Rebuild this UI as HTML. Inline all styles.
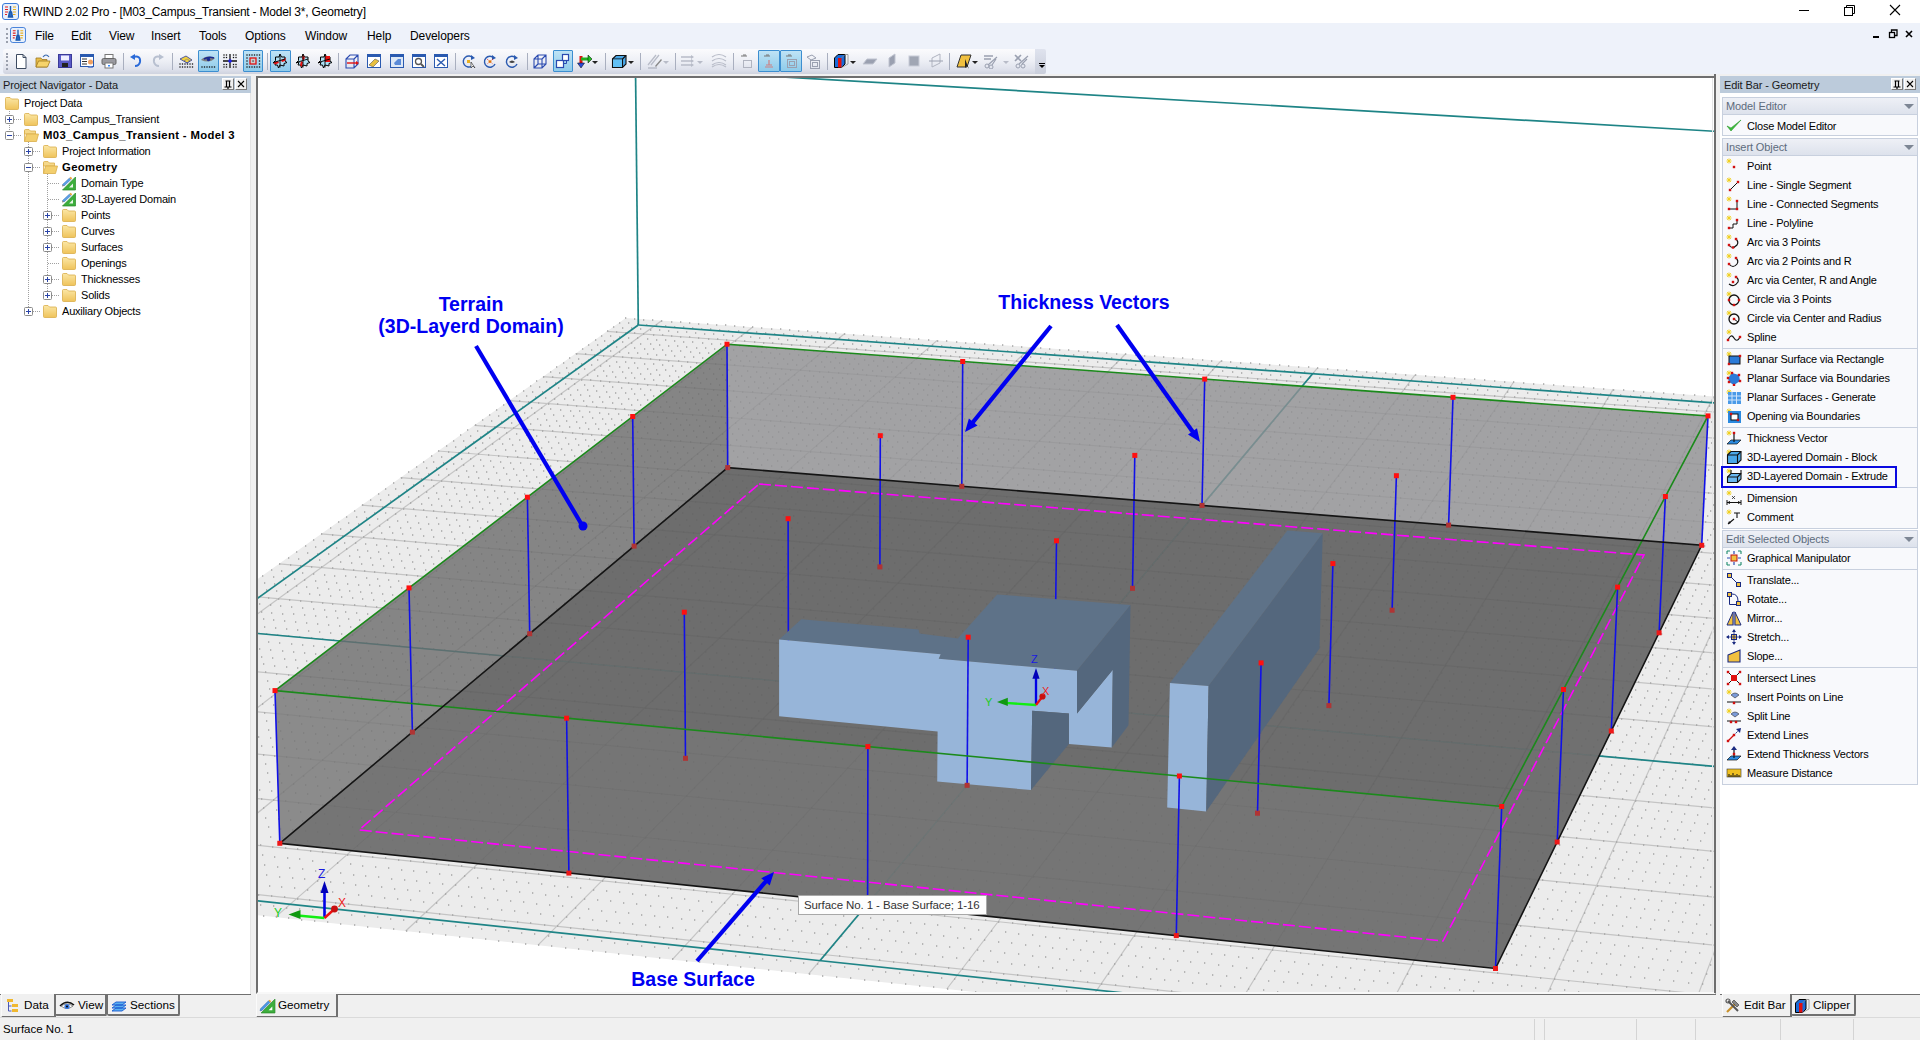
<!DOCTYPE html><html><head><meta charset="utf-8"><style>
*{box-sizing:border-box}
html,body{margin:0;padding:0}
body{width:1920px;height:1040px;overflow:hidden;position:relative;background:#f0f0f0;font-family:"Liberation Sans",sans-serif;color:#000}
.a{position:absolute}
.t{position:absolute;white-space:nowrap;line-height:1}
#title{left:0;top:0;width:1920px;height:23px;background:#fff}
#menubar{left:0;top:23px;width:1920px;height:51px;background:#eef2fa}
#toolbar{left:3px;top:49px;width:1032px;height:25px;border-radius:3px 0 0 3px;
 background:linear-gradient(#fbfbfd 0%,#eef0f6 45%,#dfe2ec 80%,#cfd3df 100%)}
#tbover{left:1035px;top:49px;width:11px;height:25px;background:linear-gradient(#dfe3ee,#c9cedb);border-radius:0 2px 2px 0}
.hdr{height:17px;background:#bccbdb}
.pbtn{position:absolute;top:2px;width:12px;height:12px;background:#f0f0f0;border-right:1px solid #7a7a7a;border-bottom:1px solid #7a7a7a;border-top:1px solid #fff;border-left:1px solid #fff}
.tree{font-size:11.3px}
.eb{font-size:11.3px}
.sec{position:absolute;left:1722px;width:196px;border:1px solid #c8d0de;background:#f8f9fc}
.sech{position:absolute;left:0;top:0;width:194px;height:17px;background:linear-gradient(#eef0f6,#dde2ec);color:#5d6b7c;font-size:11.3px}
.sech span{position:absolute;left:3px;top:3px}
.tri{position:absolute;right:5px;top:6px;width:0;height:0;border-left:5px solid transparent;border-right:5px solid transparent;border-top:5px solid #7d8694}
.sep{position:absolute;left:0;width:194px;height:1px;background:#c8d0de}
.tab{position:absolute;top:995px;height:22px;font-size:12.3px;background:#f0f0f0;border:1px solid #a0a0a0;border-top:none;border-radius:0 0 3px 3px}
</style></head><body>
<div id="title" class="a">
<div class="a" style="left:2px;top:3px"><svg width="17" height="17" viewBox="0 0 17 17"><rect x="0.5" y="0.5" width="16" height="16" rx="2.5" fill="#e8f0fb" stroke="#3a7ad8"/><path d="M3 4H6M3 6.5H6M3 9H6M3 11.5H5" stroke="#e02020" stroke-width="1.2"/><path d="M11 4H14M11 6.5H14M11 9H14M11 11.5H13.5" stroke="#e8b020" stroke-width="1.2"/><path d="M8.5 3V9M6.5 14L7.5 9H9.5L10.5 14Z" stroke="#1a5ab0" stroke-width="1.4" fill="#2a6ac0"/></svg></div>
<div class="t" style="left:23px;top:6px;font-size:12px;letter-spacing:-0.2px">RWIND 2.02 Pro - [M03_Campus_Transient - Model 3*, Geometry]</div>
<svg class="a" style="left:1790px;top:0" width="130" height="22"><line x1="9" y1="10.5" x2="19" y2="10.5" stroke="#000" stroke-width="1"/><rect x="54.5" y="7.5" width="8" height="8" fill="none" stroke="#000"/><path d="M56.5 7.5V5.5H64.5V13.5H62.5" fill="none" stroke="#000"/><path d="M100 5L110 15M110 5L100 15" stroke="#000" stroke-width="1.1"/></svg>
</div>
<div id="menubar" class="a">
<div class="a" style="left:6px;top:5px;width:2px;height:15px;border-left:2px dotted #9aa0ad"></div>
<div class="a" style="left:10px;top:4px"><svg width="16" height="16" viewBox="0 0 17 17"><rect x="0.5" y="0.5" width="16" height="16" rx="2.5" fill="#e8f0fb" stroke="#3a7ad8"/><path d="M3 4H6M3 6.5H6M3 9H6M3 11.5H5" stroke="#e02020" stroke-width="1.2"/><path d="M11 4H14M11 6.5H14M11 9H14M11 11.5H13.5" stroke="#e8b020" stroke-width="1.2"/><path d="M8.5 3V9M6.5 14L7.5 9H9.5L10.5 14Z" stroke="#1a5ab0" stroke-width="1.4" fill="#2a6ac0"/></svg></div>
<div class="t" style="left:35px;top:7px;font-size:12px;letter-spacing:-0.1px">File</div>
<div class="t" style="left:71px;top:7px;font-size:12px;letter-spacing:-0.1px">Edit</div>
<div class="t" style="left:109px;top:7px;font-size:12px;letter-spacing:-0.1px">View</div>
<div class="t" style="left:151px;top:7px;font-size:12px;letter-spacing:-0.1px">Insert</div>
<div class="t" style="left:199px;top:7px;font-size:12px;letter-spacing:-0.1px">Tools</div>
<div class="t" style="left:245px;top:7px;font-size:12px;letter-spacing:-0.1px">Options</div>
<div class="t" style="left:305px;top:7px;font-size:12px;letter-spacing:-0.1px">Window</div>
<div class="t" style="left:367px;top:7px;font-size:12px;letter-spacing:-0.1px">Help</div>
<div class="t" style="left:410px;top:7px;font-size:12px;letter-spacing:-0.1px">Developers</div>
<svg class="a" style="left:1868px;top:0" width="52" height="26"><rect x="5" y="13" width="6" height="2" fill="#000"/><rect x="21.5" y="9.5" width="5" height="5" fill="none" stroke="#000" stroke-width="1.3"/><path d="M23.5 9V7H29V12.5H27" fill="none" stroke="#000" stroke-width="1.3"/><path d="M38 8L44 14M44 8L38 14" stroke="#000" stroke-width="1.6"/></svg>
</div>
<div id="toolbar" class="a"></div><div id="tbover" class="a"></div>
<div class="a" style="left:1039px;top:63px;width:6px;height:1px;background:#000"></div><div class="a" style="left:1039px;top:65px;width:0;height:0;border-left:3px solid transparent;border-right:3px solid transparent;border-top:3px solid #000"></div>
<div class="a" style="left:6px;top:53px;width:2px;height:17px;border-left:2px dotted #9aa0ad"></div>
<div class="a" style="left:198px;top:50px;width:21px;height:22px;background:linear-gradient(#bfe3f5,#8ecbea);border:1px solid #3c8ed0;border-radius:1px"></div><div class="a" style="left:243px;top:50px;width:20px;height:22px;background:linear-gradient(#bfe3f5,#8ecbea);border:1px solid #3c8ed0;border-radius:1px"></div><div class="a" style="left:270px;top:50px;width:21px;height:22px;background:linear-gradient(#bfe3f5,#8ecbea);border:1px solid #3c8ed0;border-radius:1px"></div><div class="a" style="left:553px;top:50px;width:20px;height:22px;background:linear-gradient(#bfe3f5,#8ecbea);border:1px solid #3c8ed0;border-radius:1px"></div><div class="a" style="left:758px;top:50px;width:22px;height:22px;background:linear-gradient(#bfe3f5,#8ecbea);border:1px solid #3c8ed0;border-radius:1px"></div><div class="a" style="left:780px;top:50px;width:22px;height:22px;background:linear-gradient(#bfe3f5,#8ecbea);border:1px solid #3c8ed0;border-radius:1px"></div><div class="a" style="left:123px;top:53px;width:1px;height:17px;background:#a9afbf"></div><div class="a" style="left:172px;top:53px;width:1px;height:17px;background:#a9afbf"></div><div class="a" style="left:267px;top:53px;width:1px;height:17px;background:#a9afbf"></div><div class="a" style="left:338px;top:53px;width:1px;height:17px;background:#a9afbf"></div><div class="a" style="left:455px;top:53px;width:1px;height:17px;background:#a9afbf"></div><div class="a" style="left:527px;top:53px;width:1px;height:17px;background:#a9afbf"></div><div class="a" style="left:605px;top:53px;width:1px;height:17px;background:#a9afbf"></div><div class="a" style="left:640px;top:53px;width:1px;height:17px;background:#a9afbf"></div><div class="a" style="left:675px;top:53px;width:1px;height:17px;background:#a9afbf"></div><div class="a" style="left:733px;top:53px;width:1px;height:17px;background:#a9afbf"></div><div class="a" style="left:827px;top:53px;width:1px;height:17px;background:#a9afbf"></div><div class="a" style="left:949px;top:53px;width:1px;height:17px;background:#a9afbf"></div><svg class="a" style="left:13px;top:53px" width="16" height="16" viewBox="0 0 16 16"><path d="M3.5 1.5H10L13 4.5V15.5H3.5Z" fill="#fff" stroke="#3c4a60"/><path d="M10 1.5V4.5H13" fill="none" stroke="#3c4a60"/></svg><svg class="a" style="left:35px;top:53px" width="16" height="16" viewBox="0 0 16 16"><path d="M1 5H6L7 6.5H12V14H1Z" fill="#e8bd4a" stroke="#a07820" stroke-width="0.8"/><path d="M1 14L3.5 8H15L12.5 14Z" fill="#f7d46a" stroke="#a07820" stroke-width="0.8"/><path d="M8 4Q11 0 14 4" fill="none" stroke="#3a6ab0" stroke-width="1.2"/></svg><svg class="a" style="left:57px;top:53px" width="16" height="16" viewBox="0 0 16 16"><rect x="1.5" y="1.5" width="13" height="13" fill="#5a5ac8" stroke="#3a3a98"/><rect x="4" y="2.5" width="8" height="5" fill="#eef"/><rect x="5" y="10" width="6" height="4" fill="#222"/></svg><svg class="a" style="left:79px;top:53px" width="16" height="16" viewBox="0 0 16 16"><rect x="1.5" y="1.5" width="13" height="12" fill="#fff" stroke="#2a5ab0"/><rect x="1.5" y="1.5" width="13" height="2.5" fill="#2a5ab0"/><path d="M3 6H8M3 8.5H8M3 11H8" stroke="#333"/><circle cx="11.5" cy="9" r="2.5" fill="#f0a060"/><path d="M8.5 15Q11.5 11 14.5 15Z" fill="#6a8ad0"/></svg><svg class="a" style="left:101px;top:53px" width="16" height="16" viewBox="0 0 16 16"><rect x="4" y="1.5" width="8" height="4" fill="#fff" stroke="#777"/><rect x="1" y="5.5" width="14" height="6" rx="1.5" fill="#9a9aa0" stroke="#666"/><rect x="4" y="10" width="8" height="5" fill="#fff" stroke="#777"/><rect x="7" y="12" width="2" height="1.5" fill="#38f"/></svg><svg class="a" style="left:128px;top:53px" width="16" height="16" viewBox="0 0 16 16"><path d="M5 4Q13 2 12 9Q11 13 7 13" fill="none" stroke="#2a6ad8" stroke-width="2"/><path d="M2 4L7 1V7Z" fill="#2a6ad8"/></svg><svg class="a" style="left:150px;top:53px" width="16" height="16" viewBox="0 0 16 16"><path d="M11 4Q3 2 4 9Q5 13 9 13" fill="none" stroke="#b8c0d0" stroke-width="2"/><path d="M14 4L9 1V7Z" fill="#b8c0d0"/></svg><svg class="a" style="left:178px;top:53px" width="16" height="16" viewBox="0 0 16 16"><g fill="#111"><rect x="1.35" y="10.35" width="1.3" height="1.3"/><rect x="1.35" y="13.35" width="1.3" height="1.3"/><rect x="3.85" y="10.35" width="1.3" height="1.3"/><rect x="3.85" y="13.35" width="1.3" height="1.3"/><rect x="6.35" y="10.35" width="1.3" height="1.3"/><rect x="6.35" y="13.35" width="1.3" height="1.3"/><rect x="8.85" y="10.35" width="1.3" height="1.3"/><rect x="8.85" y="13.35" width="1.3" height="1.3"/><rect x="11.35" y="10.35" width="1.3" height="1.3"/><rect x="11.35" y="13.35" width="1.3" height="1.3"/><rect x="13.85" y="10.35" width="1.3" height="1.3"/><rect x="13.85" y="13.35" width="1.3" height="1.3"/></g><path d="M2 6L8 3L14 7L9 10Z" fill="#f0d040" stroke="#2a3aa0" stroke-width=".8"/><path d="M6 8L9 6L12 8L9 10Z" fill="none" stroke="#2a3aa0" stroke-width=".6" stroke-dasharray="1 .6"/></svg><svg class="a" style="left:200px;top:53px" width="16" height="16" viewBox="0 0 16 16"><g fill="#111"><rect x="1.35" y="13.35" width="1.3" height="1.3"/><rect x="3.85" y="13.35" width="1.3" height="1.3"/><rect x="6.35" y="13.35" width="1.3" height="1.3"/><rect x="8.85" y="13.35" width="1.3" height="1.3"/><rect x="11.35" y="13.35" width="1.3" height="1.3"/><rect x="13.85" y="13.35" width="1.3" height="1.3"/></g><path d="M1 7Q6 1 15 5Q10 11 1 7Z" fill="#808080"/><path d="M4 6Q9 3 14 5" fill="none" stroke="#1a2a90" stroke-width="1.6"/><circle cx="8.5" cy="6.5" r="1.8" fill="#1a2a90"/></svg><svg class="a" style="left:222px;top:53px" width="16" height="16" viewBox="0 0 16 16"><g fill="#111"><rect x="1.35" y="1.35" width="1.3" height="1.3"/><rect x="1.35" y="3.85" width="1.3" height="1.3"/><rect x="1.35" y="10.85" width="1.3" height="1.3"/><rect x="1.35" y="13.35" width="1.3" height="1.3"/><rect x="3.85" y="1.35" width="1.3" height="1.3"/><rect x="3.85" y="3.85" width="1.3" height="1.3"/><rect x="3.85" y="10.85" width="1.3" height="1.3"/><rect x="3.85" y="13.35" width="1.3" height="1.3"/><rect x="10.85" y="1.35" width="1.3" height="1.3"/><rect x="10.85" y="3.85" width="1.3" height="1.3"/><rect x="10.85" y="10.85" width="1.3" height="1.3"/><rect x="10.85" y="13.35" width="1.3" height="1.3"/><rect x="13.35" y="1.35" width="1.3" height="1.3"/><rect x="13.35" y="3.85" width="1.3" height="1.3"/><rect x="13.35" y="10.85" width="1.3" height="1.3"/><rect x="13.35" y="13.35" width="1.3" height="1.3"/></g><path d="M8 1V15M1 8H15" stroke="#111" stroke-width="1.3"/><circle cx="8" cy="8" r="1.8" fill="#2222ee"/></svg><svg class="a" style="left:245px;top:53px" width="16" height="16" viewBox="0 0 16 16"><g fill="#111"><rect x="1.35" y="1.35" width="1.3" height="1.3"/><rect x="1.35" y="13.35" width="1.3" height="1.3"/><rect x="3.85" y="1.35" width="1.3" height="1.3"/><rect x="3.85" y="13.35" width="1.3" height="1.3"/><rect x="6.35" y="1.35" width="1.3" height="1.3"/><rect x="6.35" y="13.35" width="1.3" height="1.3"/><rect x="8.85" y="1.35" width="1.3" height="1.3"/><rect x="8.85" y="13.35" width="1.3" height="1.3"/><rect x="11.35" y="1.35" width="1.3" height="1.3"/><rect x="11.35" y="13.35" width="1.3" height="1.3"/><rect x="13.85" y="1.35" width="1.3" height="1.3"/><rect x="13.85" y="13.35" width="1.3" height="1.3"/></g><g fill="#111"><rect x="1.35" y="4.35" width="1.3" height="1.3"/><rect x="1.35" y="7.35" width="1.3" height="1.3"/><rect x="1.35" y="10.35" width="1.3" height="1.3"/><rect x="13.85" y="4.35" width="1.3" height="1.3"/><rect x="13.85" y="7.35" width="1.3" height="1.3"/><rect x="13.85" y="10.35" width="1.3" height="1.3"/></g><rect x="5" y="5" width="6" height="6" fill="#ccc" stroke="#e01010" stroke-width="1.3"/><rect x="7.4" y="7.4" width="1.3" height="1.3" fill="#333"/></svg><svg class="a" style="left:272px;top:53px" width="16" height="16" viewBox="0 0 16 16"><path d="M8 1L9.5 4H13V8L15 9.5L12 10.5V13L8 12L6.5 15L5.5 12H3L4 9L1 10L3.5 7.5L3.5 4H7Z" fill="#aee0f5" stroke="#000" stroke-width="1"/><path d="M1.5 10L6 8L7 10L3 11.5Z" fill="#e81010"/><path d="M9 7L14 5L13 8L10 9Z" fill="#e81010"/><path d="M8 1.5V14.5M3 9L13 6" stroke="#000" stroke-width=".9"/></svg><svg class="a" style="left:295px;top:53px" width="16" height="16" viewBox="0 0 16 16"><path d="M8 1L9.5 4H13V8L15 9.5L12 10.5V13L8 12L6.5 15L5.5 12H3L4 9L1 10L3.5 7.5L3.5 4H7Z" fill="#aee0f5" stroke="#000" stroke-width="1"/><path d="M8 2L10 5L8 8L7 5Z" fill="#e81010"/><path d="M6 8L8 9L7 14L5 12Z" fill="#e81010"/><path d="M8 1.5V14.5M3 9L13 6" stroke="#000" stroke-width=".9"/></svg><svg class="a" style="left:317px;top:53px" width="16" height="16" viewBox="0 0 16 16"><path d="M8 1L9.5 4H13V8L15 9.5L12 10.5V13L8 12L6.5 15L5.5 12H3L4 9L1 10L3.5 7.5L3.5 4H7Z" fill="#aee0f5" stroke="#000" stroke-width="1"/><rect x="8" y="3" width="5" height="6" fill="#e81010"/><path d="M8 1.5V14.5M3 9L13 6" stroke="#000" stroke-width=".9"/></svg><svg class="a" style="left:344px;top:53px" width="16" height="16" viewBox="0 0 16 16"><path d="M2 6L6 2H14V11L10 15H2Z M2 6H10V15 M10 6L14 2" fill="none" stroke="#2a4ab0" stroke-width="1.1"/><path d="M3 10H12" stroke="#e01010" stroke-width="1.4"/><path d="M12 8L15 10L12 12Z" fill="#e01010"/></svg><svg class="a" style="left:366px;top:53px" width="16" height="16" viewBox="0 0 16 16"><rect x="1.5" y="1.5" width="13" height="13" fill="#fff" stroke="#2a5ab0"/><rect x="1.5" y="1.5" width="13" height="2.5" fill="#2a5ab0"/><path d="M3 12L9 6L13 8L7 14Z" fill="#e8c040" stroke="#555" stroke-width=".6"/></svg><svg class="a" style="left:389px;top:53px" width="16" height="16" viewBox="0 0 16 16"><rect x="1.5" y="1.5" width="13" height="13" fill="#dde8f6" stroke="#2a5ab0"/><rect x="1.5" y="1.5" width="13" height="2.5" fill="#2a5ab0"/><path d="M5 10L9 6H12V12H6Z" fill="#5a8ad8"/></svg><svg class="a" style="left:411px;top:53px" width="16" height="16" viewBox="0 0 16 16"><rect x="1.5" y="1.5" width="13" height="13" fill="#fff" stroke="#2a5ab0"/><rect x="1.5" y="1.5" width="13" height="2.5" fill="#2a5ab0"/><circle cx="7.5" cy="8.5" r="3" fill="none" stroke="#555" stroke-width="1.3"/><path d="M10 11L13 14" stroke="#555" stroke-width="1.8"/></svg><svg class="a" style="left:433px;top:53px" width="16" height="16" viewBox="0 0 16 16"><rect x="1.5" y="1.5" width="13" height="13" fill="#fff" stroke="#2a5ab0"/><rect x="1.5" y="1.5" width="13" height="2.5" fill="#2a5ab0"/><path d="M4 6L12 13M12 6L4 13" stroke="#2a5ab0" stroke-width="1.4"/></svg><svg class="a" style="left:461px;top:53px" width="16" height="16" viewBox="0 0 16 16"><path d="M12 5A5.5 5.5 0 1 0 11 13" fill="none" stroke="#2a5ab0" stroke-width="1.4"/><path d="M10 2L14 5L10 7Z" fill="#2a5ab0"/><rect x="6" y="7" width="3" height="3" fill="#e8b020"/><path d="M10 9L10 15L12 13L14 15Z" fill="#fff" stroke="#333" stroke-width=".7"/></svg><svg class="a" style="left:482px;top:53px" width="16" height="16" viewBox="0 0 16 16"><path d="M12 5A5.5 5.5 0 1 0 13 11" fill="none" stroke="#2a5ab0" stroke-width="1.4"/><path d="M10 2L14 5L10 7Z" fill="#2a5ab0"/><circle cx="8" cy="8.5" r="1.5" fill="#e8b020"/><path d="M5 6L11 11M11 6L5 11" stroke="#e01010" stroke-width=".8" stroke-dasharray="1 1"/></svg><svg class="a" style="left:504px;top:53px" width="16" height="16" viewBox="0 0 16 16"><path d="M12 5A5.5 5.5 0 1 0 13 11" fill="none" stroke="#2a5ab0" stroke-width="1.4"/><path d="M10 2L14 5L10 7Z" fill="#2a5ab0"/><path d="M5 9Q8 6 11 9Q8 11 5 9Z" fill="#444"/></svg><svg class="a" style="left:532px;top:53px" width="16" height="16" viewBox="0 0 16 16"><path d="M2 6L6 2H14V11L10 15H2Z M2 6H10V15 M10 6L14 2 M6 2V11H14 M6 11L2 15" fill="none" stroke="#2a4ab0" stroke-width="1.1"/></svg><svg class="a" style="left:554px;top:53px" width="16" height="16" viewBox="0 0 16 16"><rect x="2.5" y="7.5" width="7" height="7" fill="#fff" stroke="#2a4ab0" stroke-width="1.2"/><rect x="8.5" y="1.5" width="6" height="6" fill="#fff" stroke="#2a4ab0" stroke-width="1.2"/><path d="M9.5 7.5V10.5H12.5V7.5" fill="none" stroke="#2a4ab0"/></svg><svg class="a" style="left:577px;top:53px" width="16" height="16" viewBox="0 0 16 16"><path d="M4 3V11" stroke="#e01010" stroke-width="3"/><path d="M4 6H11" stroke="#20b020" stroke-width="3"/><path d="M11 2L15 6L11 10Z" fill="#20c020" stroke="#000" stroke-width=".5"/><path d="M0.5 10H7.5L4 15Z" fill="#2a4ad8" stroke="#000" stroke-width=".5"/></svg><svg class="a" style="left:611px;top:53px" width="16" height="16" viewBox="0 0 16 16"><path d="M1.5 6L5 2.5H15V11L11.5 14.5H1.5Z" fill="#4aa8e8" stroke="#111" stroke-width="1.1"/><path d="M1.5 6H11.5V14.5M11.5 6L15 2.5" fill="none" stroke="#111" stroke-width="1.1"/><path d="M2 6.5H11V14H2Z" fill="#62c0f4"/></svg><svg class="a" style="left:647px;top:53px" width="16" height="16" viewBox="0 0 16 16"><path d="M1 12L9 2M4 12L12 2M1 15H10" stroke="#b8bcc8" stroke-width="1.3"/><path d="M8 13L14 6L15 7L9 14Z" fill="#888"/></svg><svg class="a" style="left:680px;top:53px" width="16" height="16" viewBox="0 0 16 16"><path d="M1 4H12M1 8H12M1 12H12" stroke="#b8bcc8" stroke-width="1.3"/><path d="M11 2L14 4L11 6ZM11 6L14 8L11 10ZM11 10L14 12L11 14Z" fill="#b8bcc8"/></svg><svg class="a" style="left:711px;top:53px" width="16" height="16" viewBox="0 0 16 16"><path d="M1 4Q8 -1 15 4M1 8Q8 3 15 8M1 12Q8 7 15 12M1 14Q8 9 15 14" fill="none" stroke="#b8bcc8" stroke-width="1.2"/></svg><svg class="a" style="left:738px;top:53px" width="16" height="16" viewBox="0 0 16 16"><path d="M3 3H9M5 2H8" stroke="#777" stroke-width="1"/><rect x="5.5" y="7.5" width="8" height="7" fill="none" stroke="#b0b4c0"/></svg><svg class="a" style="left:761px;top:53px" width="16" height="16" viewBox="0 0 16 16"><path d="M3 3H9M5 2H8" stroke="#777" stroke-width="1"/><path d="M8 7V12M5 12H11M4 14H12" stroke="#d08080" stroke-width="1.2"/></svg><svg class="a" style="left:783px;top:53px" width="16" height="16" viewBox="0 0 16 16"><path d="M3 3H9M5 2H8" stroke="#777" stroke-width="1"/><rect x="4.5" y="6.5" width="9" height="8" fill="none" stroke="#9aa0b0"/><rect x="6.5" y="8.5" width="5" height="4" fill="none" stroke="#9aa0b0"/></svg><svg class="a" style="left:805px;top:53px" width="16" height="16" viewBox="0 0 16 16"><path d="M2 4L7 2L11 5L6 7Z" fill="none" stroke="#9aa0b0"/><rect x="5.5" y="7.5" width="9" height="8" fill="none" stroke="#9aa0b0"/><rect x="7.5" y="9.5" width="5" height="4" fill="none" stroke="#9aa0b0"/></svg><svg class="a" style="left:833px;top:53px" width="16" height="16" viewBox="0 0 16 16"><path d="M1.5 5L5 1.5H12V11L8.5 14.5H1.5Z" fill="#1a6ad8" stroke="#000"/><path d="M5 5H8.5V14.5H5Z" fill="#e01010"/><path d="M8.5 5L12 1.5H15V11L8.5 14.5" fill="none" stroke="#888" stroke-width=".8"/></svg><svg class="a" style="left:862px;top:53px" width="16" height="16" viewBox="0 0 16 16"><path d="M1 11L5 6H15L11 11Z" fill="#9aa0b0" stroke="#c0c4d0"/></svg><svg class="a" style="left:884px;top:53px" width="16" height="16" viewBox="0 0 16 16"><path d="M5 14V5L11 1V10Z" fill="#9aa0b0" stroke="#c0c4d0"/></svg><svg class="a" style="left:906px;top:53px" width="16" height="16" viewBox="0 0 16 16"><rect x="3" y="3" width="10" height="10" fill="#a0a6b4" stroke="#c8ccd8"/></svg><svg class="a" style="left:928px;top:53px" width="16" height="16" viewBox="0 0 16 16"><path d="M4 14V5L12 1V10Z" fill="none" stroke="#b0b4c0"/><path d="M1 8H15" stroke="#9aa0b0"/></svg><svg class="a" style="left:956px;top:53px" width="16" height="16" viewBox="0 0 16 16"><path d="M1 14L5 2H15L11 14Z" fill="#f0c040" stroke="#333" stroke-width="1"/><path d="M9 6V15L11 13L13 16Z" fill="#222"/></svg><svg class="a" style="left:983px;top:53px" width="16" height="16" viewBox="0 0 16 16"><path d="M1 3H10M1 6H8" stroke="#9aa0b0" stroke-width="1.3"/><circle cx="4" cy="13" r="2" fill="none" stroke="#9aa0b0"/><circle cx="8" cy="14" r="2" fill="none" stroke="#9aa0b0"/><path d="M5 12L14 4M9 12L13 6" stroke="#9aa0b0" stroke-width="1.2"/></svg><svg class="a" style="left:1013px;top:53px" width="16" height="16" viewBox="0 0 16 16"><path d="M2 2L8 8M8 2L2 8" stroke="#9aa0b0" stroke-width="1.6"/><circle cx="5" cy="13" r="2" fill="none" stroke="#9aa0b0"/><circle cx="10" cy="13" r="2" fill="none" stroke="#9aa0b0"/><path d="M6 11L15 3M9 11L14 6" stroke="#9aa0b0" stroke-width="1.2"/></svg><div class="a" style="left:592px;top:61px;width:0;height:0;border-left:3px solid transparent;border-right:3px solid transparent;border-top:3px solid #222"></div><div class="a" style="left:628px;top:61px;width:0;height:0;border-left:3px solid transparent;border-right:3px solid transparent;border-top:3px solid #222"></div><div class="a" style="left:850px;top:61px;width:0;height:0;border-left:3px solid transparent;border-right:3px solid transparent;border-top:3px solid #222"></div><div class="a" style="left:972px;top:61px;width:0;height:0;border-left:3px solid transparent;border-right:3px solid transparent;border-top:3px solid #222"></div><div class="a" style="left:663px;top:61px;width:0;height:0;border-left:3px solid transparent;border-right:3px solid transparent;border-top:3px solid #b8bcc8"></div><div class="a" style="left:697px;top:61px;width:0;height:0;border-left:3px solid transparent;border-right:3px solid transparent;border-top:3px solid #b8bcc8"></div><div class="a" style="left:1003px;top:61px;width:0;height:0;border-left:3px solid transparent;border-right:3px solid transparent;border-top:3px solid #b8bcc8"></div>
<div class="a" style="left:0;top:76px;width:251px;height:918px;background:#fff;border-right:1px solid #e4e4e4"></div>
<div class="a hdr" style="left:0;top:76px;width:251px"></div>
<div class="t" style="left:3px;top:80px;font-size:11px;letter-spacing:-0.1px;color:#1a1a1a">Project Navigator - Data</div>
<div class="pbtn" style="left:222px;top:78px"></div><div class="pbtn" style="left:235px;top:78px"></div>
<svg class="a" style="left:222px;top:78px" width="26" height="13"><path d="M3.5 3H8.5M4.5 3V8.5M7.5 3V8.5M2.5 9H9.5M6 9V11" stroke="#000" stroke-width="1.2" fill="none"/><path d="M16 3L22 9M22 3L16 9" stroke="#000" stroke-width="1.1"/></svg>
<svg class="a" style="left:0;top:94px" width="251" height="230"><line x1="9.5" y1="17" x2="9.5" y2="41" stroke="#a0a0a0" stroke-width="1" stroke-dasharray="1 1"/><line x1="28.5" y1="48" x2="28.5" y2="217" stroke="#a0a0a0" stroke-width="1" stroke-dasharray="1 1"/><line x1="47.5" y1="80" x2="47.5" y2="201" stroke="#a0a0a0" stroke-width="1" stroke-dasharray="1 1"/><line x1="10.0" y1="25.5" x2="22.0" y2="25.5" stroke="#a0a0a0" stroke-width="1" stroke-dasharray="1 1"/><rect x="5.5" y="21.5" width="8" height="8" rx="1" fill="#fff" stroke="#8a8a8a"/><line x1="7" y1="25.5" x2="12" y2="25.5" stroke="#2a44a8"/><line x1="9.5" y1="23" x2="9.5" y2="28" stroke="#2a44a8"/><line x1="10.0" y1="41.5" x2="22.0" y2="41.5" stroke="#a0a0a0" stroke-width="1" stroke-dasharray="1 1"/><rect x="5.5" y="37.5" width="8" height="8" rx="1" fill="#fff" stroke="#8a8a8a"/><line x1="7" y1="41.5" x2="12" y2="41.5" stroke="#2a44a8"/><line x1="29.0" y1="57.5" x2="41.0" y2="57.5" stroke="#a0a0a0" stroke-width="1" stroke-dasharray="1 1"/><rect x="24.5" y="53.5" width="8" height="8" rx="1" fill="#fff" stroke="#8a8a8a"/><line x1="26" y1="57.5" x2="31" y2="57.5" stroke="#2a44a8"/><line x1="28.5" y1="55" x2="28.5" y2="60" stroke="#2a44a8"/><line x1="29.0" y1="73.5" x2="41.0" y2="73.5" stroke="#a0a0a0" stroke-width="1" stroke-dasharray="1 1"/><rect x="24.5" y="69.5" width="8" height="8" rx="1" fill="#fff" stroke="#8a8a8a"/><line x1="26" y1="73.5" x2="31" y2="73.5" stroke="#2a44a8"/><line x1="48.0" y1="89.5" x2="60.0" y2="89.5" stroke="#a0a0a0" stroke-width="1" stroke-dasharray="1 1"/><line x1="48.0" y1="105.5" x2="60.0" y2="105.5" stroke="#a0a0a0" stroke-width="1" stroke-dasharray="1 1"/><line x1="48.0" y1="121.5" x2="60.0" y2="121.5" stroke="#a0a0a0" stroke-width="1" stroke-dasharray="1 1"/><rect x="43.5" y="117.5" width="8" height="8" rx="1" fill="#fff" stroke="#8a8a8a"/><line x1="45" y1="121.5" x2="50" y2="121.5" stroke="#2a44a8"/><line x1="47.5" y1="119" x2="47.5" y2="124" stroke="#2a44a8"/><line x1="48.0" y1="137.5" x2="60.0" y2="137.5" stroke="#a0a0a0" stroke-width="1" stroke-dasharray="1 1"/><rect x="43.5" y="133.5" width="8" height="8" rx="1" fill="#fff" stroke="#8a8a8a"/><line x1="45" y1="137.5" x2="50" y2="137.5" stroke="#2a44a8"/><line x1="47.5" y1="135" x2="47.5" y2="140" stroke="#2a44a8"/><line x1="48.0" y1="153.5" x2="60.0" y2="153.5" stroke="#a0a0a0" stroke-width="1" stroke-dasharray="1 1"/><rect x="43.5" y="149.5" width="8" height="8" rx="1" fill="#fff" stroke="#8a8a8a"/><line x1="45" y1="153.5" x2="50" y2="153.5" stroke="#2a44a8"/><line x1="47.5" y1="151" x2="47.5" y2="156" stroke="#2a44a8"/><line x1="48.0" y1="169.5" x2="60.0" y2="169.5" stroke="#a0a0a0" stroke-width="1" stroke-dasharray="1 1"/><line x1="48.0" y1="185.5" x2="60.0" y2="185.5" stroke="#a0a0a0" stroke-width="1" stroke-dasharray="1 1"/><rect x="43.5" y="181.5" width="8" height="8" rx="1" fill="#fff" stroke="#8a8a8a"/><line x1="45" y1="185.5" x2="50" y2="185.5" stroke="#2a44a8"/><line x1="47.5" y1="183" x2="47.5" y2="188" stroke="#2a44a8"/><line x1="48.0" y1="201.5" x2="60.0" y2="201.5" stroke="#a0a0a0" stroke-width="1" stroke-dasharray="1 1"/><rect x="43.5" y="197.5" width="8" height="8" rx="1" fill="#fff" stroke="#8a8a8a"/><line x1="45" y1="201.5" x2="50" y2="201.5" stroke="#2a44a8"/><line x1="47.5" y1="199" x2="47.5" y2="204" stroke="#2a44a8"/><line x1="29.0" y1="217.5" x2="41.0" y2="217.5" stroke="#a0a0a0" stroke-width="1" stroke-dasharray="1 1"/><rect x="24.5" y="213.5" width="8" height="8" rx="1" fill="#fff" stroke="#8a8a8a"/><line x1="26" y1="217.5" x2="31" y2="217.5" stroke="#2a44a8"/><line x1="28.5" y1="215" x2="28.5" y2="220" stroke="#2a44a8"/></svg>
<div class="a" style="left:4px;top:95px"><svg width="16" height="16" viewBox="0 0 16 16"><defs><linearGradient id="fg" x1="0" y1="0" x2="0" y2="1"><stop offset="0" stop-color="#fbe7a6"/><stop offset="1" stop-color="#efc35a"/></linearGradient></defs><path d="M1.5 3.5Q1.5 2.5 2.5 2.5H6L7.5 4H13.5Q14.5 4 14.5 5V13.5Q14.5 14.5 13.5 14.5H2.5Q1.5 14.5 1.5 13.5Z" fill="url(#fg)" stroke="#d9ad4a" stroke-width="0.8"/></svg></div>
<div class="t" style="left:24px;top:98px;font-size:11px;letter-spacing:-0.2px;">Project Data</div>
<div class="a" style="left:23px;top:111px"><svg width="16" height="16" viewBox="0 0 16 16"><defs><linearGradient id="fg" x1="0" y1="0" x2="0" y2="1"><stop offset="0" stop-color="#fbe7a6"/><stop offset="1" stop-color="#efc35a"/></linearGradient></defs><path d="M1.5 3.5Q1.5 2.5 2.5 2.5H6L7.5 4H13.5Q14.5 4 14.5 5V13.5Q14.5 14.5 13.5 14.5H2.5Q1.5 14.5 1.5 13.5Z" fill="url(#fg)" stroke="#d9ad4a" stroke-width="0.8"/></svg></div>
<div class="t" style="left:43px;top:114px;font-size:11px;letter-spacing:-0.2px;">M03_Campus_Transient</div>
<div class="a" style="left:23px;top:127px"><svg width="16" height="16" viewBox="0 0 16 16"><path d="M1.5 3.5Q1.5 2.5 2.5 2.5H6L7.5 4H12.5V7H1.5Z" fill="#f5d88a" stroke="#d9ad4a" stroke-width="0.8"/><path d="M1.5 14.5L3.5 7H15.5L13.5 14.5Z" fill="#f3cf6e" stroke="#d9ad4a" stroke-width="0.8"/><path d="M1.5 3.5V14.5" stroke="#d9ad4a" stroke-width="0.8"/></svg></div>
<div class="t" style="left:43px;top:130px;font-size:11.3px;letter-spacing:0.35px;font-weight:bold">M03_Campus_Transient - Model 3</div>
<div class="a" style="left:42px;top:143px"><svg width="16" height="16" viewBox="0 0 16 16"><defs><linearGradient id="fg" x1="0" y1="0" x2="0" y2="1"><stop offset="0" stop-color="#fbe7a6"/><stop offset="1" stop-color="#efc35a"/></linearGradient></defs><path d="M1.5 3.5Q1.5 2.5 2.5 2.5H6L7.5 4H13.5Q14.5 4 14.5 5V13.5Q14.5 14.5 13.5 14.5H2.5Q1.5 14.5 1.5 13.5Z" fill="url(#fg)" stroke="#d9ad4a" stroke-width="0.8"/></svg></div>
<div class="t" style="left:62px;top:146px;font-size:11px;letter-spacing:-0.2px;">Project Information</div>
<div class="a" style="left:42px;top:159px"><svg width="16" height="16" viewBox="0 0 16 16"><path d="M1.5 3.5Q1.5 2.5 2.5 2.5H6L7.5 4H12.5V7H1.5Z" fill="#f5d88a" stroke="#d9ad4a" stroke-width="0.8"/><path d="M1.5 14.5L3.5 7H15.5L13.5 14.5Z" fill="#f3cf6e" stroke="#d9ad4a" stroke-width="0.8"/><path d="M1.5 3.5V14.5" stroke="#d9ad4a" stroke-width="0.8"/></svg></div>
<div class="t" style="left:62px;top:162px;font-size:11.3px;letter-spacing:0.35px;font-weight:bold">Geometry</div>
<div class="a" style="left:61px;top:175px"><svg width="16" height="16" viewBox="0 0 16 16"><path d="M1.5 15L14.5 2V15Z" fill="#3cae3c" stroke="#2a8a2a" stroke-width="0.7"/><path d="M8 12.5L12 8.5V12.5Z" fill="#e8f5e8"/><path d="M1.5 9.5L8.5 3L10 4.5L3 11Z" fill="#5aa0e8" stroke="#3a70b0" stroke-width="0.5"/><path d="M8.5 3L9.7 1.8L11.2 3.3L10 4.5Z" fill="#f0a030"/><path d="M1.5 9.5L3 11L1 11.5Z" fill="#777"/></svg></div>
<div class="t" style="left:81px;top:178px;font-size:11px;letter-spacing:-0.2px;">Domain Type</div>
<div class="a" style="left:61px;top:191px"><svg width="16" height="16" viewBox="0 0 16 16"><path d="M1.5 15L14.5 2V15Z" fill="#3cae3c" stroke="#2a8a2a" stroke-width="0.7"/><path d="M8 12.5L12 8.5V12.5Z" fill="#e8f5e8"/><path d="M1.5 9.5L8.5 3L10 4.5L3 11Z" fill="#5aa0e8" stroke="#3a70b0" stroke-width="0.5"/><path d="M8.5 3L9.7 1.8L11.2 3.3L10 4.5Z" fill="#f0a030"/><path d="M1.5 9.5L3 11L1 11.5Z" fill="#777"/></svg></div>
<div class="t" style="left:81px;top:194px;font-size:11px;letter-spacing:-0.2px;">3D-Layered Domain</div>
<div class="a" style="left:61px;top:207px"><svg width="16" height="16" viewBox="0 0 16 16"><defs><linearGradient id="fg" x1="0" y1="0" x2="0" y2="1"><stop offset="0" stop-color="#fbe7a6"/><stop offset="1" stop-color="#efc35a"/></linearGradient></defs><path d="M1.5 3.5Q1.5 2.5 2.5 2.5H6L7.5 4H13.5Q14.5 4 14.5 5V13.5Q14.5 14.5 13.5 14.5H2.5Q1.5 14.5 1.5 13.5Z" fill="url(#fg)" stroke="#d9ad4a" stroke-width="0.8"/></svg></div>
<div class="t" style="left:81px;top:210px;font-size:11px;letter-spacing:-0.2px;">Points</div>
<div class="a" style="left:61px;top:223px"><svg width="16" height="16" viewBox="0 0 16 16"><defs><linearGradient id="fg" x1="0" y1="0" x2="0" y2="1"><stop offset="0" stop-color="#fbe7a6"/><stop offset="1" stop-color="#efc35a"/></linearGradient></defs><path d="M1.5 3.5Q1.5 2.5 2.5 2.5H6L7.5 4H13.5Q14.5 4 14.5 5V13.5Q14.5 14.5 13.5 14.5H2.5Q1.5 14.5 1.5 13.5Z" fill="url(#fg)" stroke="#d9ad4a" stroke-width="0.8"/></svg></div>
<div class="t" style="left:81px;top:226px;font-size:11px;letter-spacing:-0.2px;">Curves</div>
<div class="a" style="left:61px;top:239px"><svg width="16" height="16" viewBox="0 0 16 16"><defs><linearGradient id="fg" x1="0" y1="0" x2="0" y2="1"><stop offset="0" stop-color="#fbe7a6"/><stop offset="1" stop-color="#efc35a"/></linearGradient></defs><path d="M1.5 3.5Q1.5 2.5 2.5 2.5H6L7.5 4H13.5Q14.5 4 14.5 5V13.5Q14.5 14.5 13.5 14.5H2.5Q1.5 14.5 1.5 13.5Z" fill="url(#fg)" stroke="#d9ad4a" stroke-width="0.8"/></svg></div>
<div class="t" style="left:81px;top:242px;font-size:11px;letter-spacing:-0.2px;">Surfaces</div>
<div class="a" style="left:61px;top:255px"><svg width="16" height="16" viewBox="0 0 16 16"><defs><linearGradient id="fg" x1="0" y1="0" x2="0" y2="1"><stop offset="0" stop-color="#fbe7a6"/><stop offset="1" stop-color="#efc35a"/></linearGradient></defs><path d="M1.5 3.5Q1.5 2.5 2.5 2.5H6L7.5 4H13.5Q14.5 4 14.5 5V13.5Q14.5 14.5 13.5 14.5H2.5Q1.5 14.5 1.5 13.5Z" fill="url(#fg)" stroke="#d9ad4a" stroke-width="0.8"/></svg></div>
<div class="t" style="left:81px;top:258px;font-size:11px;letter-spacing:-0.2px;">Openings</div>
<div class="a" style="left:61px;top:271px"><svg width="16" height="16" viewBox="0 0 16 16"><defs><linearGradient id="fg" x1="0" y1="0" x2="0" y2="1"><stop offset="0" stop-color="#fbe7a6"/><stop offset="1" stop-color="#efc35a"/></linearGradient></defs><path d="M1.5 3.5Q1.5 2.5 2.5 2.5H6L7.5 4H13.5Q14.5 4 14.5 5V13.5Q14.5 14.5 13.5 14.5H2.5Q1.5 14.5 1.5 13.5Z" fill="url(#fg)" stroke="#d9ad4a" stroke-width="0.8"/></svg></div>
<div class="t" style="left:81px;top:274px;font-size:11px;letter-spacing:-0.2px;">Thicknesses</div>
<div class="a" style="left:61px;top:287px"><svg width="16" height="16" viewBox="0 0 16 16"><defs><linearGradient id="fg" x1="0" y1="0" x2="0" y2="1"><stop offset="0" stop-color="#fbe7a6"/><stop offset="1" stop-color="#efc35a"/></linearGradient></defs><path d="M1.5 3.5Q1.5 2.5 2.5 2.5H6L7.5 4H13.5Q14.5 4 14.5 5V13.5Q14.5 14.5 13.5 14.5H2.5Q1.5 14.5 1.5 13.5Z" fill="url(#fg)" stroke="#d9ad4a" stroke-width="0.8"/></svg></div>
<div class="t" style="left:81px;top:290px;font-size:11px;letter-spacing:-0.2px;">Solids</div>
<div class="a" style="left:42px;top:303px"><svg width="16" height="16" viewBox="0 0 16 16"><defs><linearGradient id="fg" x1="0" y1="0" x2="0" y2="1"><stop offset="0" stop-color="#fbe7a6"/><stop offset="1" stop-color="#efc35a"/></linearGradient></defs><path d="M1.5 3.5Q1.5 2.5 2.5 2.5H6L7.5 4H13.5Q14.5 4 14.5 5V13.5Q14.5 14.5 13.5 14.5H2.5Q1.5 14.5 1.5 13.5Z" fill="url(#fg)" stroke="#d9ad4a" stroke-width="0.8"/></svg></div>
<div class="t" style="left:62px;top:306px;font-size:11px;letter-spacing:-0.2px;">Auxiliary Objects</div>
<div class="a" style="left:256px;top:76px;width:1460px;height:918px;border-top:2px solid #6e6e6e;border-left:2px solid #6e6e6e;border-right:2px solid #6e6e6e;border-bottom:2px solid #f8f8f8;background:#fff"></div>
<svg id="vp" width="1920" height="1040" viewBox="0 0 1920 1040" style="position:absolute;left:0;top:0">
<defs><clipPath id="vc"><rect x="258" y="78" width="1456" height="914"/></clipPath></defs>
<g clip-path="url(#vc)">
<rect x="258" y="78" width="1456" height="914" fill="#fff"/>
<polygon points="-154.2,871 625.7,318 2750.8,471.1 2908.5,1199.3" fill="#ececec"/>
<g stroke="#c4c4c4" stroke-width="1.2"><line x1="-104.5" y1="876.4" x2="661.9" y2="320.6" /><line x1="20.3" y1="889.7" x2="752.8" y2="327.1" /><line x1="146.9" y1="903.3" x2="844.5" y2="333.8" /><line x1="275.4" y1="917.1" x2="937.2" y2="340.4" /><line x1="405.7" y1="931" x2="1030.9" y2="347.2" /><line x1="538" y1="945.2" x2="1125.5" y2="354" /><line x1="672.3" y1="959.6" x2="1221" y2="360.9" /><line x1="808.5" y1="974.2" x2="1317.6" y2="367.8" /><line x1="946.8" y1="989" x2="1415.1" y2="374.9" /><line x1="1087.3" y1="1004.1" x2="1513.7" y2="382" /><line x1="1229.8" y1="1019.4" x2="1613.3" y2="389.1" /><line x1="1374.6" y1="1034.9" x2="1713.9" y2="396.4" /><line x1="1521.6" y1="1050.6" x2="1815.6" y2="403.7" /><line x1="1671" y1="1066.6" x2="1918.4" y2="411.1" /><line x1="1822.7" y1="1082.9" x2="2022.3" y2="418.6" /><line x1="1976.8" y1="1099.4" x2="2127.3" y2="426.2" /><line x1="2133.4" y1="1116.2" x2="2233.5" y2="433.8" /><line x1="2292.6" y1="1133.2" x2="2340.8" y2="441.6" /><line x1="2454.3" y1="1150.6" x2="2449.2" y2="449.4" /><line x1="2618.7" y1="1168.2" x2="2558.9" y2="457.3" /><line x1="2785.8" y1="1186.1" x2="2669.8" y2="465.3" /><line x1="-129.5" y1="853.5" x2="2903.3" y2="1175" /><line x1="-70.1" y1="811.4" x2="2890.7" y2="1117.1" /><line x1="-13.5" y1="771.3" x2="2878.8" y2="1062.2" /><line x1="40.6" y1="732.9" x2="2867.6" y2="1010.2" /><line x1="92.5" y1="696.1" x2="2856.9" y2="960.8" /><line x1="142.1" y1="661" x2="2846.7" y2="913.7" /><line x1="189.6" y1="627.2" x2="2837" y2="869" /><line x1="235.2" y1="594.9" x2="2827.7" y2="826.2" /><line x1="279.1" y1="563.8" x2="2818.9" y2="785.5" /><line x1="321.2" y1="533.9" x2="2810.4" y2="746.5" /><line x1="361.7" y1="505.2" x2="2802.4" y2="709.3" /><line x1="400.6" y1="477.6" x2="2794.6" y2="673.6" /><line x1="438.2" y1="451" x2="2787.2" y2="639.4" /><line x1="474.4" y1="425.3" x2="2780.1" y2="606.6" /><line x1="509.3" y1="400.6" x2="2773.3" y2="575.1" /><line x1="542.9" y1="376.7" x2="2766.7" y2="544.9" /><line x1="575.5" y1="353.6" x2="2760.4" y2="515.8" /><line x1="606.9" y1="331.3" x2="2754.4" y2="487.8" /></g>
<path d="M262 576h1.3M271 570h1.3M279 564h1.3M288 558h1.3M296 552h1.3M305 546h1.3M313 540h1.3M321 534h1.3M330 528h1.3M338 522h1.3M346 517h1.3M354 511h1.3M362 505h1.3M370 500h1.3M378 494h1.3M385 489h1.3M393 483h1.3M401 478h1.3M408 472h1.3M416 467h1.3M423 462h1.3M431 456h1.3M438 451h1.3M446 446h1.3M453 441h1.3M460 435h1.3M467 430h1.3M475 425h1.3M482 420h1.3M489 415h1.3M496 410h1.3M503 405h1.3M509 401h1.3M516 396h1.3M523 391h1.3M530 386h1.3M536 381h1.3M543 377h1.3M550 372h1.3M556 367h1.3M563 363h1.3M569 358h1.3M576 354h1.3M582 349h1.3M588 345h1.3M595 340h1.3M601 336h1.3M607 331h1.3M613 327h1.3M619 323h1.3M625 318h1.3M264 583h1.3M273 577h1.3M281 571h1.3M290 565h1.3M298 559h1.3M307 553h1.3M315 547h1.3M323 541h1.3M332 535h1.3M340 529h1.3M348 523h1.3M356 517h1.3M364 512h1.3M372 506h1.3M380 500h1.3M388 495h1.3M395 489h1.3M403 484h1.3M411 478h1.3M418 473h1.3M426 468h1.3M433 462h1.3M441 457h1.3M448 452h1.3M455 447h1.3M463 441h1.3M470 436h1.3M477 431h1.3M484 426h1.3M491 421h1.3M498 416h1.3M505 411h1.3M512 406h1.3M519 401h1.3M526 396h1.3M532 392h1.3M539 387h1.3M546 382h1.3M552 377h1.3M559 373h1.3M566 368h1.3M572 363h1.3M578 359h1.3M585 354h1.3M591 350h1.3M597 345h1.3M604 341h1.3M610 336h1.3M616 332h1.3M622 328h1.3M628 323h1.3M634 319h1.3M266 590h1.3M274 584h1.3M283 578h1.3M292 572h1.3M300 566h1.3M309 560h1.3M317 554h1.3M326 548h1.3M334 542h1.3M342 536h1.3M350 530h1.3M358 524h1.3M366 518h1.3M374 513h1.3M382 507h1.3M390 501h1.3M398 496h1.3M406 490h1.3M413 485h1.3M421 479h1.3M428 474h1.3M436 468h1.3M443 463h1.3M451 458h1.3M458 453h1.3M465 447h1.3M473 442h1.3M480 437h1.3M487 432h1.3M494 427h1.3M501 422h1.3M508 417h1.3M515 412h1.3M522 407h1.3M528 402h1.3M535 397h1.3M542 392h1.3M549 388h1.3M555 383h1.3M562 378h1.3M568 373h1.3M575 369h1.3M581 364h1.3M588 360h1.3M594 355h1.3M600 350h1.3M607 346h1.3M613 341h1.3M619 337h1.3M625 333h1.3M631 328h1.3M637 324h1.3M643 320h1.3M259 604h1.3M268 598h1.3M276 591h1.3M285 585h1.3M294 579h1.3M302 573h1.3M311 567h1.3M319 560h1.3M328 554h1.3M336 548h1.3M344 543h1.3M352 537h1.3M361 531h1.3M369 525h1.3M377 519h1.3M385 513h1.3M392 508h1.3M400 502h1.3M408 497h1.3M416 491h1.3M423 486h1.3M431 480h1.3M438 475h1.3M446 469h1.3M453 464h1.3M461 459h1.3M468 453h1.3M475 448h1.3M482 443h1.3M489 438h1.3M497 433h1.3M504 428h1.3M511 423h1.3M518 418h1.3M524 413h1.3M531 408h1.3M538 403h1.3M545 398h1.3M551 393h1.3M558 388h1.3M565 384h1.3M571 379h1.3M578 374h1.3M584 369h1.3M591 365h1.3M597 360h1.3M603 356h1.3M610 351h1.3M616 347h1.3M622 342h1.3M628 338h1.3M634 333h1.3M640 329h1.3M646 325h1.3M652 320h1.3M261 612h1.3M270 605h1.3M278 599h1.3M287 592h1.3M296 586h1.3M304 580h1.3M313 574h1.3M321 567h1.3M330 561h1.3M338 555h1.3M346 549h1.3M355 543h1.3M363 537h1.3M371 532h1.3M379 526h1.3M387 520h1.3M395 514h1.3M403 509h1.3M410 503h1.3M418 497h1.3M426 492h1.3M433 486h1.3M441 481h1.3M448 475h1.3M456 470h1.3M463 465h1.3M470 459h1.3M478 454h1.3M485 449h1.3M492 444h1.3M499 439h1.3M506 433h1.3M513 428h1.3M520 423h1.3M527 418h1.3M534 413h1.3M541 408h1.3M548 404h1.3M554 399h1.3M561 394h1.3M568 389h1.3M574 384h1.3M581 380h1.3M587 375h1.3M594 370h1.3M600 366h1.3M606 361h1.3M613 356h1.3M619 352h1.3M625 347h1.3M631 343h1.3M637 338h1.3M643 334h1.3M650 330h1.3M656 325h1.3M661 321h1.3M263 619h1.3M271 613h1.3M280 606h1.3M289 600h1.3M298 593h1.3M306 587h1.3M315 581h1.3M324 575h1.3M332 568h1.3M340 562h1.3M349 556h1.3M357 550h1.3M365 544h1.3M373 538h1.3M381 533h1.3M389 527h1.3M397 521h1.3M405 515h1.3M413 509h1.3M421 504h1.3M428 498h1.3M436 493h1.3M443 487h1.3M451 482h1.3M458 476h1.3M466 471h1.3M473 466h1.3M480 460h1.3M488 455h1.3M495 450h1.3M502 444h1.3M509 439h1.3M516 434h1.3M523 429h1.3M530 424h1.3M537 419h1.3M544 414h1.3M550 409h1.3M557 404h1.3M564 399h1.3M570 395h1.3M577 390h1.3M584 385h1.3M590 380h1.3M597 376h1.3M603 371h1.3M609 366h1.3M616 362h1.3M622 357h1.3M628 353h1.3M634 348h1.3M640 344h1.3M647 339h1.3M653 335h1.3M659 330h1.3M665 326h1.3M671 322h1.3M264 627h1.3M273 620h1.3M282 614h1.3M291 607h1.3M300 601h1.3M309 594h1.3M317 588h1.3M326 582h1.3M334 576h1.3M343 569h1.3M351 563h1.3M359 557h1.3M367 551h1.3M376 545h1.3M384 539h1.3M392 533h1.3M400 528h1.3M407 522h1.3M415 516h1.3M423 510h1.3M431 505h1.3M438 499h1.3M446 494h1.3M454 488h1.3M461 483h1.3M468 477h1.3M476 472h1.3M483 466h1.3M490 461h1.3M498 456h1.3M505 450h1.3M512 445h1.3M519 440h1.3M526 435h1.3M533 430h1.3M540 425h1.3M546 420h1.3M553 415h1.3M560 410h1.3M567 405h1.3M573 400h1.3M580 395h1.3M587 390h1.3M593 386h1.3M600 381h1.3M606 376h1.3M612 372h1.3M619 367h1.3M625 362h1.3M631 358h1.3M637 353h1.3M644 349h1.3M650 344h1.3M656 340h1.3M662 335h1.3M668 331h1.3M674 327h1.3M680 322h1.3M266 634h1.3M275 628h1.3M284 621h1.3M293 614h1.3M302 608h1.3M311 602h1.3M319 595h1.3M328 589h1.3M336 583h1.3M345 576h1.3M353 570h1.3M361 564h1.3M370 558h1.3M378 552h1.3M386 546h1.3M394 540h1.3M402 534h1.3M410 528h1.3M418 523h1.3M426 517h1.3M433 511h1.3M441 506h1.3M449 500h1.3M456 494h1.3M464 489h1.3M471 483h1.3M478 478h1.3M486 472h1.3M493 467h1.3M500 462h1.3M507 457h1.3M515 451h1.3M522 446h1.3M529 441h1.3M536 436h1.3M542 431h1.3M549 426h1.3M556 421h1.3M563 416h1.3M570 411h1.3M576 406h1.3M583 401h1.3M589 396h1.3M596 391h1.3M603 386h1.3M609 382h1.3M615 377h1.3M622 372h1.3M628 368h1.3M634 363h1.3M640 358h1.3M647 354h1.3M653 349h1.3M659 345h1.3M665 340h1.3M671 336h1.3M677 332h1.3M683 327h1.3M689 323h1.3M259 649h1.3M268 642h1.3M277 635h1.3M286 629h1.3M295 622h1.3M304 615h1.3M313 609h1.3M322 603h1.3M330 596h1.3M339 590h1.3M347 584h1.3M355 577h1.3M364 571h1.3M372 565h1.3M380 559h1.3M388 553h1.3M396 547h1.3M404 541h1.3M412 535h1.3M420 529h1.3M428 524h1.3M436 518h1.3M444 512h1.3M451 506h1.3M459 501h1.3M466 495h1.3M474 490h1.3M481 484h1.3M488 479h1.3M496 473h1.3M503 468h1.3M510 463h1.3M517 457h1.3M524 452h1.3M531 447h1.3M538 442h1.3M545 437h1.3M552 431h1.3M559 426h1.3M566 421h1.3M573 416h1.3M579 411h1.3M586 406h1.3M592 402h1.3M599 397h1.3M606 392h1.3M612 387h1.3M618 382h1.3M625 378h1.3M631 373h1.3M637 368h1.3M644 364h1.3M650 359h1.3M656 355h1.3M662 350h1.3M668 346h1.3M674 341h1.3M680 337h1.3M686 332h1.3M692 328h1.3M698 324h1.3M261 657h1.3M270 650h1.3M279 643h1.3M288 636h1.3M297 630h1.3M306 623h1.3M315 616h1.3M324 610h1.3M332 604h1.3M341 597h1.3M349 591h1.3M358 585h1.3M366 578h1.3M374 572h1.3M383 566h1.3M391 560h1.3M399 554h1.3M407 548h1.3M415 542h1.3M423 536h1.3M431 530h1.3M438 524h1.3M446 519h1.3M454 513h1.3M461 507h1.3M469 502h1.3M476 496h1.3M484 490h1.3M491 485h1.3M499 480h1.3M506 474h1.3M513 469h1.3M520 463h1.3M527 458h1.3M534 453h1.3M541 448h1.3M548 442h1.3M555 437h1.3M562 432h1.3M569 427h1.3M576 422h1.3M582 417h1.3M589 412h1.3M596 407h1.3M602 402h1.3M609 397h1.3M615 393h1.3M621 388h1.3M628 383h1.3M634 378h1.3M640 374h1.3M647 369h1.3M653 364h1.3M659 360h1.3M665 355h1.3M671 351h1.3M677 346h1.3M683 342h1.3M689 337h1.3M695 333h1.3M701 329h1.3M707 324h1.3M263 664h1.3M272 658h1.3M282 651h1.3M291 644h1.3M299 637h1.3M308 631h1.3M317 624h1.3M326 617h1.3M335 611h1.3M343 605h1.3M352 598h1.3M360 592h1.3M369 585h1.3M377 579h1.3M385 573h1.3M393 567h1.3M401 561h1.3M409 555h1.3M417 549h1.3M425 543h1.3M433 537h1.3M441 531h1.3M449 525h1.3M456 520h1.3M464 514h1.3M472 508h1.3M479 502h1.3M487 497h1.3M494 491h1.3M501 486h1.3M509 480h1.3M516 475h1.3M523 470h1.3M530 464h1.3M537 459h1.3M544 454h1.3M551 448h1.3M558 443h1.3M565 438h1.3M572 433h1.3M579 428h1.3M585 423h1.3M592 418h1.3M599 413h1.3M605 408h1.3M612 403h1.3M618 398h1.3M625 393h1.3M631 389h1.3M637 384h1.3M644 379h1.3M650 374h1.3M656 370h1.3M662 365h1.3M668 361h1.3M674 356h1.3M680 351h1.3M686 347h1.3M692 342h1.3M698 338h1.3M704 334h1.3M710 329h1.3M716 325h1.3M265 672h1.3M274 666h1.3M284 659h1.3M293 652h1.3M302 645h1.3M311 638h1.3M319 632h1.3M328 625h1.3M337 618h1.3M345 612h1.3M354 605h1.3M362 599h1.3M371 593h1.3M379 586h1.3M388 580h1.3M396 574h1.3M404 568h1.3M412 562h1.3M420 556h1.3M428 550h1.3M436 544h1.3M444 538h1.3M451 532h1.3M459 526h1.3M467 520h1.3M474 515h1.3M482 509h1.3M489 503h1.3M497 498h1.3M504 492h1.3M511 487h1.3M519 481h1.3M526 476h1.3M533 470h1.3M540 465h1.3M547 460h1.3M554 454h1.3M561 449h1.3M568 444h1.3M575 439h1.3M582 434h1.3M588 429h1.3M595 424h1.3M602 419h1.3M608 414h1.3M615 409h1.3M621 404h1.3M628 399h1.3M634 394h1.3M640 389h1.3M647 385h1.3M653 380h1.3M659 375h1.3M665 370h1.3M672 366h1.3M678 361h1.3M684 357h1.3M690 352h1.3M696 348h1.3M702 343h1.3M708 339h1.3M713 334h1.3M719 330h1.3M725 325h1.3M267 681h1.3M276 674h1.3M286 667h1.3M295 660h1.3M304 653h1.3M313 646h1.3M322 639h1.3M330 633h1.3M339 626h1.3M348 619h1.3M356 613h1.3M365 606h1.3M373 600h1.3M382 594h1.3M390 587h1.3M398 581h1.3M406 575h1.3M414 569h1.3M423 563h1.3M431 557h1.3M438 551h1.3M446 545h1.3M454 539h1.3M462 533h1.3M469 527h1.3M477 521h1.3M485 516h1.3M492 510h1.3M500 504h1.3M507 499h1.3M514 493h1.3M522 487h1.3M529 482h1.3M536 477h1.3M543 471h1.3M550 466h1.3M557 461h1.3M564 455h1.3M571 450h1.3M578 445h1.3M585 440h1.3M591 435h1.3M598 429h1.3M605 424h1.3M611 419h1.3M618 414h1.3M624 409h1.3M631 405h1.3M637 400h1.3M644 395h1.3M650 390h1.3M656 385h1.3M663 381h1.3M669 376h1.3M675 371h1.3M681 366h1.3M687 362h1.3M693 357h1.3M699 353h1.3M705 348h1.3M711 344h1.3M717 339h1.3M723 335h1.3M728 331h1.3M734 326h1.3M260 696h1.3M269 689h1.3M279 682h1.3M288 675h1.3M297 668h1.3M306 661h1.3M315 654h1.3M324 647h1.3M333 640h1.3M341 634h1.3M350 627h1.3M359 620h1.3M367 614h1.3M376 607h1.3M384 601h1.3M392 595h1.3M401 588h1.3M409 582h1.3M417 576h1.3M425 570h1.3M433 564h1.3M441 558h1.3M449 551h1.3M457 546h1.3M465 540h1.3M472 534h1.3M480 528h1.3M487 522h1.3M495 516h1.3M502 511h1.3M510 505h1.3M517 499h1.3M524 494h1.3M532 488h1.3M539 483h1.3M546 477h1.3M553 472h1.3M560 467h1.3M567 461h1.3M574 456h1.3M581 451h1.3M588 446h1.3M594 440h1.3M601 435h1.3M608 430h1.3M614 425h1.3M621 420h1.3M628 415h1.3M634 410h1.3M640 405h1.3M647 400h1.3M653 396h1.3M660 391h1.3M666 386h1.3M672 381h1.3M678 377h1.3M684 372h1.3M690 367h1.3M696 363h1.3M702 358h1.3M708 353h1.3M714 349h1.3M720 344h1.3M726 340h1.3M732 336h1.3M738 331h1.3M743 327h1.3M262 704h1.3M271 697h1.3M281 690h1.3M290 683h1.3M299 676h1.3M308 669h1.3M317 662h1.3M326 655h1.3M335 648h1.3M344 641h1.3M352 635h1.3M361 628h1.3M370 621h1.3M378 615h1.3M387 608h1.3M395 602h1.3M403 596h1.3M411 589h1.3M420 583h1.3M428 577h1.3M436 571h1.3M444 564h1.3M452 558h1.3M459 552h1.3M467 546h1.3M475 540h1.3M483 535h1.3M490 529h1.3M498 523h1.3M505 517h1.3M513 512h1.3M520 506h1.3M527 500h1.3M535 495h1.3M542 489h1.3M549 484h1.3M556 478h1.3M563 473h1.3M570 467h1.3M577 462h1.3M584 457h1.3M591 452h1.3M598 446h1.3M604 441h1.3M611 436h1.3M618 431h1.3M624 426h1.3M631 421h1.3M637 416h1.3M644 411h1.3M650 406h1.3M656 401h1.3M663 396h1.3M669 391h1.3M675 387h1.3M681 382h1.3M688 377h1.3M694 373h1.3M700 368h1.3M706 363h1.3M712 359h1.3M718 354h1.3M724 350h1.3M729 345h1.3M735 341h1.3M741 336h1.3M747 332h1.3M752 327h1.3M264 713h1.3M273 705h1.3M283 698h1.3M292 691h1.3M301 684h1.3M310 677h1.3M319 670h1.3M328 663h1.3M337 656h1.3M346 649h1.3M355 642h1.3M364 636h1.3M372 629h1.3M381 622h1.3M389 616h1.3M398 609h1.3M406 603h1.3M414 597h1.3M422 590h1.3M430 584h1.3M438 578h1.3M446 572h1.3M454 565h1.3M462 559h1.3M470 553h1.3M478 547h1.3M485 541h1.3M493 535h1.3M501 530h1.3M508 524h1.3M516 518h1.3M523 512h1.3M530 507h1.3M538 501h1.3M545 496h1.3M552 490h1.3M559 484h1.3M566 479h1.3M573 474h1.3M580 468h1.3M587 463h1.3M594 458h1.3M601 452h1.3M607 447h1.3M614 442h1.3M621 437h1.3M627 432h1.3M634 427h1.3M640 422h1.3M647 417h1.3M653 412h1.3M660 407h1.3M666 402h1.3M672 397h1.3M679 392h1.3M685 387h1.3M691 383h1.3M697 378h1.3M703 373h1.3M709 369h1.3M715 364h1.3M721 359h1.3M727 355h1.3M733 350h1.3M739 346h1.3M744 341h1.3M750 337h1.3M756 332h1.3M761 328h1.3M266 721h1.3M275 714h1.3M285 706h1.3M294 699h1.3M303 692h1.3M313 685h1.3M322 678h1.3M331 671h1.3M340 664h1.3M348 657h1.3M357 650h1.3M366 643h1.3M375 637h1.3M383 630h1.3M392 623h1.3M400 617h1.3M408 610h1.3M417 604h1.3M425 597h1.3M433 591h1.3M441 585h1.3M449 579h1.3M457 572h1.3M465 566h1.3M473 560h1.3M481 554h1.3M488 548h1.3M496 542h1.3M504 536h1.3M511 531h1.3M519 525h1.3M526 519h1.3M533 513h1.3M541 508h1.3M548 502h1.3M555 496h1.3M562 491h1.3M569 485h1.3M576 480h1.3M583 474h1.3M590 469h1.3M597 464h1.3M604 458h1.3M611 453h1.3M617 448h1.3M624 443h1.3M631 438h1.3M637 432h1.3M644 427h1.3M650 422h1.3M657 417h1.3M663 412h1.3M669 407h1.3M676 403h1.3M682 398h1.3M688 393h1.3M694 388h1.3M700 383h1.3M706 379h1.3M713 374h1.3M719 369h1.3M724 365h1.3M730 360h1.3M736 356h1.3M742 351h1.3M748 346h1.3M754 342h1.3M759 338h1.3M765 333h1.3M771 329h1.3M258 737h1.3M268 730h1.3M278 722h1.3M287 715h1.3M296 707h1.3M306 700h1.3M315 693h1.3M324 686h1.3M333 679h1.3M342 672h1.3M351 665h1.3M360 658h1.3M368 651h1.3M377 644h1.3M386 638h1.3M394 631h1.3M403 624h1.3M411 618h1.3M419 611h1.3M428 605h1.3M436 598h1.3M444 592h1.3M452 586h1.3M460 580h1.3M468 573h1.3M476 567h1.3M483 561h1.3M491 555h1.3M499 549h1.3M506 543h1.3M514 537h1.3M522 531h1.3M529 526h1.3M536 520h1.3M544 514h1.3M551 508h1.3M558 503h1.3M565 497h1.3M572 492h1.3M579 486h1.3M586 481h1.3M593 475h1.3M600 470h1.3M607 465h1.3M614 459h1.3M621 454h1.3M627 449h1.3M634 444h1.3M641 438h1.3M647 433h1.3M654 428h1.3M660 423h1.3M666 418h1.3M673 413h1.3M679 408h1.3M685 403h1.3M692 398h1.3M698 394h1.3M704 389h1.3M710 384h1.3M716 379h1.3M722 375h1.3M728 370h1.3M734 365h1.3M740 361h1.3M746 356h1.3M751 352h1.3M757 347h1.3M763 343h1.3M769 338h1.3M774 334h1.3M780 329h1.3M261 746h1.3M270 738h1.3M280 731h1.3M289 723h1.3M299 716h1.3M308 709h1.3M317 701h1.3M326 694h1.3M335 687h1.3M344 680h1.3M353 673h1.3M362 666h1.3M371 659h1.3M380 652h1.3M388 645h1.3M397 639h1.3M405 632h1.3M414 625h1.3M422 619h1.3M430 612h1.3M438 606h1.3M447 599h1.3M455 593h1.3M463 587h1.3M471 581h1.3M479 574h1.3M486 568h1.3M494 562h1.3M502 556h1.3M509 550h1.3M517 544h1.3M525 538h1.3M532 532h1.3M539 526h1.3M547 521h1.3M554 515h1.3M561 509h1.3M568 504h1.3M575 498h1.3M583 492h1.3M590 487h1.3M597 481h1.3M603 476h1.3M610 471h1.3M617 465h1.3M624 460h1.3M631 455h1.3M637 449h1.3M644 444h1.3M650 439h1.3M657 434h1.3M663 429h1.3M670 424h1.3M676 419h1.3M682 414h1.3M689 409h1.3M695 404h1.3M701 399h1.3M707 394h1.3M713 390h1.3M719 385h1.3M725 380h1.3M731 375h1.3M737 371h1.3M743 366h1.3M749 361h1.3M755 357h1.3M761 352h1.3M766 348h1.3M772 343h1.3M778 339h1.3M783 334h1.3M789 330h1.3M263 755h1.3M272 747h1.3M282 739h1.3M291 732h1.3M301 724h1.3M310 717h1.3M319 710h1.3M329 702h1.3M338 695h1.3M347 688h1.3M356 681h1.3M365 674h1.3M373 667h1.3M382 660h1.3M391 653h1.3M399 646h1.3M408 640h1.3M416 633h1.3M425 626h1.3M433 620h1.3M441 613h1.3M449 607h1.3M457 600h1.3M466 594h1.3M473 588h1.3M481 581h1.3M489 575h1.3M497 569h1.3M505 563h1.3M512 557h1.3M520 551h1.3M528 545h1.3M535 539h1.3M542 533h1.3M550 527h1.3M557 522h1.3M564 516h1.3M572 510h1.3M579 504h1.3M586 499h1.3M593 493h1.3M600 488h1.3M607 482h1.3M614 477h1.3M620 471h1.3M627 466h1.3M634 461h1.3M641 456h1.3M647 450h1.3M654 445h1.3M660 440h1.3M667 435h1.3M673 430h1.3M680 425h1.3M686 420h1.3M692 415h1.3M698 410h1.3M705 405h1.3M711 400h1.3M717 395h1.3M723 390h1.3M729 386h1.3M735 381h1.3M741 376h1.3M747 371h1.3M753 367h1.3M758 362h1.3M764 358h1.3M770 353h1.3M776 349h1.3M781 344h1.3M787 340h1.3M793 335h1.3M798 331h1.3M265 764h1.3M274 756h1.3M284 748h1.3M294 741h1.3M303 733h1.3M312 726h1.3M322 718h1.3M331 711h1.3M340 703h1.3M349 696h1.3M358 689h1.3M367 682h1.3M376 675h1.3M385 668h1.3M393 661h1.3M402 654h1.3M411 647h1.3M419 641h1.3M427 634h1.3M436 627h1.3M444 621h1.3M452 614h1.3M460 608h1.3M468 601h1.3M476 595h1.3M484 589h1.3M492 582h1.3M500 576h1.3M508 570h1.3M515 564h1.3M523 558h1.3M531 552h1.3M538 546h1.3M545 540h1.3M553 534h1.3M560 528h1.3M567 522h1.3M575 517h1.3M582 511h1.3M589 505h1.3M596 500h1.3M603 494h1.3M610 489h1.3M617 483h1.3M624 478h1.3M630 472h1.3M637 467h1.3M644 462h1.3M650 456h1.3M657 451h1.3M664 446h1.3M670 441h1.3M677 436h1.3M683 430h1.3M689 425h1.3M696 420h1.3M702 415h1.3M708 410h1.3M714 406h1.3M720 401h1.3M726 396h1.3M733 391h1.3M738 386h1.3M744 381h1.3M750 377h1.3M756 372h1.3M762 367h1.3M768 363h1.3M774 358h1.3M779 354h1.3M785 349h1.3M791 345h1.3M796 340h1.3M802 336h1.3M807 331h1.3M267 773h1.3M277 765h1.3M286 757h1.3M296 749h1.3M305 742h1.3M315 734h1.3M324 727h1.3M333 719h1.3M343 712h1.3M352 705h1.3M361 697h1.3M370 690h1.3M379 683h1.3M387 676h1.3M396 669h1.3M405 662h1.3M413 655h1.3M422 648h1.3M430 642h1.3M439 635h1.3M447 628h1.3M455 622h1.3M463 615h1.3M471 609h1.3M479 602h1.3M487 596h1.3M495 590h1.3M503 583h1.3M511 577h1.3M518 571h1.3M526 565h1.3M534 559h1.3M541 553h1.3M549 547h1.3M556 541h1.3M563 535h1.3M571 529h1.3M578 523h1.3M585 518h1.3M592 512h1.3M599 506h1.3M606 501h1.3M613 495h1.3M620 489h1.3M627 484h1.3M634 479h1.3M641 473h1.3M647 468h1.3M654 462h1.3M660 457h1.3M667 452h1.3M674 447h1.3M680 441h1.3M686 436h1.3M693 431h1.3M699 426h1.3M705 421h1.3M712 416h1.3M718 411h1.3M724 406h1.3M730 401h1.3M736 397h1.3M742 392h1.3M748 387h1.3M754 382h1.3M760 377h1.3M766 373h1.3M771 368h1.3M777 364h1.3M783 359h1.3M789 354h1.3M794 350h1.3M800 345h1.3M805 341h1.3M811 336h1.3M817 332h1.3M259 790h1.3M269 782h1.3M279 774h1.3M288 766h1.3M298 758h1.3M308 750h1.3M317 743h1.3M327 735h1.3M336 728h1.3M345 720h1.3M354 713h1.3M363 706h1.3M372 698h1.3M381 691h1.3M390 684h1.3M399 677h1.3M407 670h1.3M416 663h1.3M424 656h1.3M433 649h1.3M441 643h1.3M450 636h1.3M458 629h1.3M466 623h1.3M474 616h1.3M482 610h1.3M490 603h1.3M498 597h1.3M506 591h1.3M514 584h1.3M521 578h1.3M529 572h1.3M537 566h1.3M544 560h1.3M552 554h1.3M559 548h1.3M567 542h1.3M574 536h1.3M581 530h1.3M588 524h1.3M595 518h1.3M603 513h1.3M610 507h1.3M617 501h1.3M623 496h1.3M630 490h1.3M637 485h1.3M644 479h1.3M651 474h1.3M657 469h1.3M664 463h1.3M670 458h1.3M677 453h1.3M683 447h1.3M690 442h1.3M696 437h1.3M703 432h1.3M709 427h1.3M715 422h1.3M721 417h1.3M727 412h1.3M734 407h1.3M740 402h1.3M746 397h1.3M752 392h1.3M758 388h1.3M763 383h1.3M769 378h1.3M775 374h1.3M781 369h1.3M787 364h1.3M792 360h1.3M798 355h1.3M804 351h1.3M809 346h1.3M815 342h1.3M820 337h1.3M826 333h1.3M261 799h1.3M271 791h1.3M281 783h1.3M291 775h1.3M300 767h1.3M310 759h1.3M319 752h1.3M329 744h1.3M338 736h1.3M347 729h1.3M357 721h1.3M366 714h1.3M375 707h1.3M384 699h1.3M393 692h1.3M401 685h1.3M410 678h1.3M419 671h1.3M427 664h1.3M436 657h1.3M444 650h1.3M452 644h1.3M461 637h1.3M469 630h1.3M477 624h1.3M485 617h1.3M493 611h1.3M501 604h1.3M509 598h1.3M517 592h1.3M525 585h1.3M532 579h1.3M540 573h1.3M547 567h1.3M555 561h1.3M562 555h1.3M570 549h1.3M577 543h1.3M584 537h1.3M592 531h1.3M599 525h1.3M606 519h1.3M613 514h1.3M620 508h1.3M627 502h1.3M634 497h1.3M641 491h1.3M647 486h1.3M654 480h1.3M661 475h1.3M667 469h1.3M674 464h1.3M680 459h1.3M687 453h1.3M693 448h1.3M700 443h1.3M706 438h1.3M712 433h1.3M719 428h1.3M725 423h1.3M731 418h1.3M737 413h1.3M743 408h1.3M749 403h1.3M755 398h1.3M761 393h1.3M767 388h1.3M773 384h1.3M779 379h1.3M785 374h1.3M790 370h1.3M796 365h1.3M802 360h1.3M807 356h1.3M813 351h1.3M819 347h1.3M824 342h1.3M829 338h1.3M835 333h1.3M263 808h1.3M273 800h1.3M283 792h1.3M293 784h1.3M303 776h1.3M312 768h1.3M322 760h1.3M331 753h1.3M341 745h1.3M350 738h1.3M359 730h1.3M368 723h1.3M377 715h1.3M386 708h1.3M395 701h1.3M404 693h1.3M413 686h1.3M421 679h1.3M430 672h1.3M439 665h1.3M447 658h1.3M455 651h1.3M464 645h1.3M472 638h1.3M480 631h1.3M488 625h1.3M496 618h1.3M504 612h1.3M512 605h1.3M520 599h1.3M528 592h1.3M535 586h1.3M543 580h1.3M551 574h1.3M558 568h1.3M566 561h1.3M573 555h1.3M580 549h1.3M588 543h1.3M595 538h1.3M602 532h1.3M609 526h1.3M616 520h1.3M623 514h1.3M630 509h1.3M637 503h1.3M644 498h1.3M651 492h1.3M658 486h1.3M664 481h1.3M671 476h1.3M677 470h1.3M684 465h1.3M691 459h1.3M697 454h1.3M703 449h1.3M710 444h1.3M716 439h1.3M722 434h1.3M729 428h1.3M735 423h1.3M741 418h1.3M747 413h1.3M753 409h1.3M759 404h1.3M765 399h1.3M771 394h1.3M777 389h1.3M783 384h1.3M788 380h1.3M794 375h1.3M800 370h1.3M806 366h1.3M811 361h1.3M817 356h1.3M822 352h1.3M828 347h1.3M833 343h1.3M839 338h1.3M844 334h1.3M265 818h1.3M276 810h1.3M285 801h1.3M295 793h1.3M305 785h1.3M315 777h1.3M324 769h1.3M334 762h1.3M343 754h1.3M353 746h1.3M362 739h1.3M371 731h1.3M380 724h1.3M389 716h1.3M398 709h1.3M407 702h1.3M416 694h1.3M424 687h1.3M433 680h1.3M441 673h1.3M450 666h1.3M458 659h1.3M467 653h1.3M475 646h1.3M483 639h1.3M491 632h1.3M499 626h1.3M507 619h1.3M515 613h1.3M523 606h1.3M531 600h1.3M539 593h1.3M546 587h1.3M554 581h1.3M561 575h1.3M569 569h1.3M576 562h1.3M584 556h1.3M591 550h1.3M598 544h1.3M605 538h1.3M613 533h1.3M620 527h1.3M627 521h1.3M634 515h1.3M641 510h1.3M647 504h1.3M654 498h1.3M661 493h1.3M668 487h1.3M674 482h1.3M681 476h1.3M688 471h1.3M694 466h1.3M701 460h1.3M707 455h1.3M713 450h1.3M720 445h1.3M726 439h1.3M732 434h1.3M738 429h1.3M745 424h1.3M751 419h1.3M757 414h1.3M763 409h1.3M769 404h1.3M775 399h1.3M780 395h1.3M786 390h1.3M792 385h1.3M798 380h1.3M804 376h1.3M809 371h1.3M815 366h1.3M821 362h1.3M826 357h1.3M832 353h1.3M837 348h1.3M843 344h1.3M848 339h1.3M853 335h1.3M268 827h1.3M278 819h1.3M288 811h1.3M298 803h1.3M307 794h1.3M317 786h1.3M327 778h1.3M336 771h1.3M346 763h1.3M355 755h1.3M364 747h1.3M374 740h1.3M383 732h1.3M392 725h1.3M401 717h1.3M410 710h1.3M418 703h1.3M427 696h1.3M436 688h1.3M444 681h1.3M453 674h1.3M461 667h1.3M470 660h1.3M478 654h1.3M486 647h1.3M494 640h1.3M502 633h1.3M510 627h1.3M518 620h1.3M526 614h1.3M534 607h1.3M542 601h1.3M549 594h1.3M557 588h1.3M565 582h1.3M572 576h1.3M580 569h1.3M587 563h1.3M594 557h1.3M602 551h1.3M609 545h1.3M616 539h1.3M623 533h1.3M630 528h1.3M637 522h1.3M644 516h1.3M651 510h1.3M658 505h1.3M665 499h1.3M671 494h1.3M678 488h1.3M685 483h1.3M691 477h1.3M698 472h1.3M704 466h1.3M711 461h1.3M717 456h1.3M723 451h1.3M730 445h1.3M736 440h1.3M742 435h1.3M748 430h1.3M754 425h1.3M760 420h1.3M766 415h1.3M772 410h1.3M778 405h1.3M784 400h1.3M790 395h1.3M796 391h1.3M802 386h1.3M807 381h1.3M813 376h1.3M819 372h1.3M824 367h1.3M830 362h1.3M835 358h1.3M841 353h1.3M846 349h1.3M852 344h1.3M857 340h1.3M863 335h1.3M260 845h1.3M270 837h1.3M280 829h1.3M290 820h1.3M300 812h1.3M310 804h1.3M320 796h1.3M329 788h1.3M339 780h1.3M348 772h1.3M358 764h1.3M367 756h1.3M376 749h1.3M385 741h1.3M394 733h1.3M403 726h1.3M412 718h1.3M421 711h1.3M430 704h1.3M439 697h1.3M447 689h1.3M456 682h1.3M464 675h1.3M473 668h1.3M481 661h1.3M489 655h1.3M497 648h1.3M505 641h1.3M513 634h1.3M521 628h1.3M529 621h1.3M537 615h1.3M545 608h1.3M553 602h1.3M560 595h1.3M568 589h1.3M575 583h1.3M583 577h1.3M590 570h1.3M598 564h1.3M605 558h1.3M612 552h1.3M619 546h1.3M626 540h1.3M634 534h1.3M641 529h1.3M648 523h1.3M654 517h1.3M661 511h1.3M668 506h1.3M675 500h1.3M682 494h1.3M688 489h1.3M695 483h1.3M701 478h1.3M708 473h1.3M714 467h1.3M721 462h1.3M727 457h1.3M733 451h1.3M740 446h1.3M746 441h1.3M752 436h1.3M758 431h1.3M764 426h1.3M770 421h1.3M776 416h1.3M782 411h1.3M788 406h1.3M794 401h1.3M800 396h1.3M806 391h1.3M811 387h1.3M817 382h1.3M823 377h1.3M828 372h1.3M834 368h1.3M839 363h1.3M845 359h1.3M850 354h1.3M856 349h1.3M861 345h1.3M867 341h1.3M872 336h1.3M262 855h1.3M272 847h1.3M282 838h1.3M292 830h1.3M302 821h1.3M312 813h1.3M322 805h1.3M332 797h1.3M341 789h1.3M351 781h1.3M360 773h1.3M370 765h1.3M379 757h1.3M388 750h1.3M397 742h1.3M406 735h1.3M415 727h1.3M424 720h1.3M433 712h1.3M441 705h1.3M450 698h1.3M459 691h1.3M467 683h1.3M476 676h1.3M484 669h1.3M492 662h1.3M500 656h1.3M509 649h1.3M517 642h1.3M525 635h1.3M533 629h1.3M540 622h1.3M548 616h1.3M556 609h1.3M564 603h1.3M571 596h1.3M579 590h1.3M586 584h1.3M594 577h1.3M601 571h1.3M608 565h1.3M616 559h1.3M623 553h1.3M630 547h1.3M637 541h1.3M644 535h1.3M651 529h1.3M658 524h1.3M665 518h1.3M672 512h1.3M678 506h1.3M685 501h1.3M692 495h1.3M698 490h1.3M705 484h1.3M711 479h1.3M718 473h1.3M724 468h1.3M731 463h1.3M737 457h1.3M743 452h1.3M750 447h1.3M756 442h1.3M762 437h1.3M768 432h1.3M774 426h1.3M780 421h1.3M786 416h1.3M792 411h1.3M798 407h1.3M804 402h1.3M809 397h1.3M815 392h1.3M821 387h1.3M827 382h1.3M832 378h1.3M838 373h1.3M843 368h1.3M849 364h1.3M854 359h1.3M860 355h1.3M865 350h1.3M870 346h1.3M876 341h1.3M881 337h1.3M264 865h1.3M274 857h1.3M285 848h1.3M295 840h1.3M305 831h1.3M315 823h1.3M324 814h1.3M334 806h1.3M344 798h1.3M353 790h1.3M363 782h1.3M372 774h1.3M382 766h1.3M391 759h1.3M400 751h1.3M409 743h1.3M418 736h1.3M427 728h1.3M436 721h1.3M444 713h1.3M453 706h1.3M462 699h1.3M470 692h1.3M479 685h1.3M487 677h1.3M495 670h1.3M504 664h1.3M512 657h1.3M520 650h1.3M528 643h1.3M536 636h1.3M544 630h1.3M551 623h1.3M559 617h1.3M567 610h1.3M575 604h1.3M582 597h1.3M590 591h1.3M597 585h1.3M604 578h1.3M612 572h1.3M619 566h1.3M626 560h1.3M633 554h1.3M641 548h1.3M648 542h1.3M655 536h1.3M662 530h1.3M668 524h1.3M675 519h1.3M682 513h1.3M689 507h1.3M695 502h1.3M702 496h1.3M709 491h1.3M715 485h1.3M722 480h1.3M728 474h1.3M734 469h1.3M741 464h1.3M747 458h1.3M753 453h1.3M760 448h1.3M766 443h1.3M772 437h1.3M778 432h1.3M784 427h1.3M790 422h1.3M796 417h1.3M802 412h1.3M807 407h1.3M813 402h1.3M819 398h1.3M825 393h1.3M830 388h1.3M836 383h1.3M842 378h1.3M847 374h1.3M853 369h1.3M858 364h1.3M864 360h1.3M869 355h1.3M874 351h1.3M880 346h1.3M885 342h1.3M890 337h1.3M266 875h1.3M277 867h1.3M287 858h1.3M297 849h1.3M307 841h1.3M317 832h1.3M327 824h1.3M337 816h1.3M346 807h1.3M356 799h1.3M366 791h1.3M375 783h1.3M384 775h1.3M394 767h1.3M403 760h1.3M412 752h1.3M421 744h1.3M430 737h1.3M439 729h1.3M447 722h1.3M456 714h1.3M465 707h1.3M473 700h1.3M482 693h1.3M490 686h1.3M498 679h1.3M507 672h1.3M515 665h1.3M523 658h1.3M531 651h1.3M539 644h1.3M547 637h1.3M555 631h1.3M563 624h1.3M570 618h1.3M578 611h1.3M586 605h1.3M593 598h1.3M601 592h1.3M608 586h1.3M615 579h1.3M623 573h1.3M630 567h1.3M637 561h1.3M644 555h1.3M651 549h1.3M658 543h1.3M665 537h1.3M672 531h1.3M679 525h1.3M686 520h1.3M692 514h1.3M699 508h1.3M706 503h1.3M712 497h1.3M719 491h1.3M725 486h1.3M732 480h1.3M738 475h1.3M745 470h1.3M751 464h1.3M757 459h1.3M763 454h1.3M770 449h1.3M776 443h1.3M782 438h1.3M788 433h1.3M794 428h1.3M800 423h1.3M806 418h1.3M811 413h1.3M817 408h1.3M823 403h1.3M829 398h1.3M834 393h1.3M840 389h1.3M846 384h1.3M851 379h1.3M857 374h1.3M862 370h1.3M868 365h1.3M873 361h1.3M879 356h1.3M884 351h1.3M889 347h1.3M894 343h1.3M900 338h1.3M258 895h1.3M269 886h1.3M279 877h1.3M289 868h1.3M299 859h1.3M310 851h1.3M320 842h1.3M329 834h1.3M339 825h1.3M349 817h1.3M359 809h1.3M368 801h1.3M378 792h1.3M387 784h1.3M396 777h1.3M406 769h1.3M415 761h1.3M424 753h1.3M433 746h1.3M442 738h1.3M450 730h1.3M459 723h1.3M468 716h1.3M476 708h1.3M485 701h1.3M493 694h1.3M502 687h1.3M510 680h1.3M518 673h1.3M526 666h1.3M534 659h1.3M542 652h1.3M550 645h1.3M558 638h1.3M566 632h1.3M574 625h1.3M581 619h1.3M589 612h1.3M597 606h1.3M604 599h1.3M611 593h1.3M619 587h1.3M626 580h1.3M633 574h1.3M641 568h1.3M648 562h1.3M655 556h1.3M662 550h1.3M669 544h1.3M676 538h1.3M683 532h1.3M689 526h1.3M696 520h1.3M703 515h1.3M710 509h1.3M716 503h1.3M723 498h1.3M729 492h1.3M736 487h1.3M742 481h1.3M748 476h1.3M755 470h1.3M761 465h1.3M767 460h1.3M773 455h1.3M780 449h1.3M786 444h1.3M792 439h1.3M798 434h1.3M804 429h1.3M809 424h1.3M815 419h1.3M821 414h1.3M827 409h1.3M833 404h1.3M838 399h1.3M844 394h1.3M850 389h1.3M855 385h1.3M861 380h1.3M866 375h1.3M872 371h1.3M877 366h1.3M883 361h1.3M888 357h1.3M893 352h1.3M898 348h1.3M904 343h1.3M909 339h1.3M260 905h1.3M271 896h1.3M281 887h1.3M292 878h1.3M302 869h1.3M312 861h1.3M322 852h1.3M332 843h1.3M342 835h1.3M352 827h1.3M361 818h1.3M371 810h1.3M380 802h1.3M390 794h1.3M399 786h1.3M408 778h1.3M418 770h1.3M427 762h1.3M436 754h1.3M445 747h1.3M453 739h1.3M462 732h1.3M471 724h1.3M479 717h1.3M488 709h1.3M496 702h1.3M505 695h1.3M513 688h1.3M521 681h1.3M530 674h1.3M538 667h1.3M546 660h1.3M554 653h1.3M562 646h1.3M569 639h1.3M577 633h1.3M585 626h1.3M592 620h1.3M600 613h1.3M608 607h1.3M615 600h1.3M622 594h1.3M630 587h1.3M637 581h1.3M644 575h1.3M651 569h1.3M658 563h1.3M666 557h1.3M673 551h1.3M679 545h1.3M686 539h1.3M693 533h1.3M700 527h1.3M707 521h1.3M713 516h1.3M720 510h1.3M726 504h1.3M733 499h1.3M739 493h1.3M746 488h1.3M752 482h1.3M759 477h1.3M765 471h1.3M771 466h1.3M777 461h1.3M783 455h1.3M790 450h1.3M796 445h1.3M802 440h1.3M808 435h1.3M813 430h1.3M819 424h1.3M825 419h1.3M831 414h1.3M837 410h1.3M842 405h1.3M848 400h1.3M854 395h1.3M859 390h1.3M865 385h1.3M870 381h1.3M876 376h1.3M881 371h1.3M887 367h1.3M892 362h1.3M897 357h1.3M903 353h1.3M908 348h1.3M913 344h1.3M918 339h1.3M263 916h1.3M273 906h1.3M284 897h1.3M294 888h1.3M304 879h1.3M315 871h1.3M325 862h1.3M335 853h1.3M345 845h1.3M354 836h1.3M364 828h1.3M374 819h1.3M383 811h1.3M393 803h1.3M402 795h1.3M411 787h1.3M420 779h1.3M430 771h1.3M439 763h1.3M448 755h1.3M456 748h1.3M465 740h1.3M474 733h1.3M483 725h1.3M491 718h1.3M500 710h1.3M508 703h1.3M516 696h1.3M525 689h1.3M533 682h1.3M541 675h1.3M549 668h1.3M557 661h1.3M565 654h1.3M573 647h1.3M581 640h1.3M588 634h1.3M596 627h1.3M604 620h1.3M611 614h1.3M619 607h1.3M626 601h1.3M633 595h1.3M641 588h1.3M648 582h1.3M655 576h1.3M662 570h1.3M669 564h1.3M676 558h1.3M683 552h1.3M690 546h1.3M697 540h1.3M704 534h1.3M710 528h1.3M717 522h1.3M724 516h1.3M730 511h1.3M737 505h1.3M743 500h1.3M750 494h1.3M756 488h1.3M763 483h1.3M769 477h1.3M775 472h1.3M781 467h1.3M787 461h1.3M793 456h1.3M800 451h1.3M806 446h1.3M812 440h1.3M817 435h1.3M823 430h1.3M829 425h1.3M835 420h1.3M841 415h1.3M846 410h1.3M852 405h1.3M858 400h1.3M863 396h1.3M869 391h1.3M874 386h1.3M880 381h1.3M885 377h1.3M891 372h1.3M896 367h1.3M901 363h1.3M907 358h1.3M912 354h1.3M917 349h1.3M922 345h1.3M928 340h1.3M276 917h1.3M286 908h1.3M297 899h1.3M307 890h1.3M317 881h1.3M327 872h1.3M337 863h1.3M347 855h1.3M357 846h1.3M367 837h1.3M376 829h1.3M386 821h1.3M396 812h1.3M405 804h1.3M414 796h1.3M423 788h1.3M433 780h1.3M442 772h1.3M451 764h1.3M460 757h1.3M468 749h1.3M477 741h1.3M486 734h1.3M494 726h1.3M503 719h1.3M511 712h1.3M520 704h1.3M528 697h1.3M536 690h1.3M544 683h1.3M552 676h1.3M560 669h1.3M568 662h1.3M576 655h1.3M584 648h1.3M592 641h1.3M599 635h1.3M607 628h1.3M615 621h1.3M622 615h1.3M630 608h1.3M637 602h1.3M644 596h1.3M652 589h1.3M659 583h1.3M666 577h1.3M673 571h1.3M680 565h1.3M687 559h1.3M694 552h1.3M701 547h1.3M708 541h1.3M714 535h1.3M721 529h1.3M728 523h1.3M734 517h1.3M741 512h1.3M747 506h1.3M754 500h1.3M760 495h1.3M766 489h1.3M773 484h1.3M779 478h1.3M785 473h1.3M791 468h1.3M797 462h1.3M804 457h1.3M810 452h1.3M816 446h1.3M821 441h1.3M827 436h1.3M833 431h1.3M839 426h1.3M845 421h1.3M851 416h1.3M856 411h1.3M862 406h1.3M867 401h1.3M873 396h1.3M879 392h1.3M884 387h1.3M889 382h1.3M895 377h1.3M900 373h1.3M906 368h1.3M911 363h1.3M916 359h1.3M921 354h1.3M927 350h1.3M932 345h1.3M937 341h1.3M288 918h1.3M299 909h1.3M309 900h1.3M320 891h1.3M330 882h1.3M340 873h1.3M350 864h1.3M360 856h1.3M370 847h1.3M379 839h1.3M389 830h1.3M398 822h1.3M408 814h1.3M417 805h1.3M426 797h1.3M436 789h1.3M445 781h1.3M454 773h1.3M463 766h1.3M471 758h1.3M480 750h1.3M489 742h1.3M498 735h1.3M506 727h1.3M515 720h1.3M523 713h1.3M531 705h1.3M540 698h1.3M548 691h1.3M556 684h1.3M564 677h1.3M572 670h1.3M580 663h1.3M588 656h1.3M595 649h1.3M603 642h1.3M611 636h1.3M618 629h1.3M626 622h1.3M633 616h1.3M641 609h1.3M648 603h1.3M655 597h1.3M662 590h1.3M670 584h1.3M677 578h1.3M684 572h1.3M691 566h1.3M698 559h1.3M705 553h1.3M711 547h1.3M718 541h1.3M725 536h1.3M731 530h1.3M738 524h1.3M745 518h1.3M751 512h1.3M758 507h1.3M764 501h1.3M770 496h1.3M777 490h1.3M783 485h1.3M789 479h1.3M795 474h1.3M802 468h1.3M808 463h1.3M814 458h1.3M820 452h1.3M826 447h1.3M831 442h1.3M837 437h1.3M843 432h1.3M849 427h1.3M855 422h1.3M860 417h1.3M866 412h1.3M872 407h1.3M877 402h1.3M883 397h1.3M888 392h1.3M894 387h1.3M899 383h1.3M904 378h1.3M910 373h1.3M915 369h1.3M920 364h1.3M926 359h1.3M931 355h1.3M936 350h1.3M941 346h1.3M946 341h1.3M301 920h1.3M312 910h1.3M322 901h1.3M332 892h1.3M343 883h1.3M353 875h1.3M362 866h1.3M372 857h1.3M382 849h1.3M392 840h1.3M401 832h1.3M411 823h1.3M420 815h1.3M429 807h1.3M439 799h1.3M448 790h1.3M457 782h1.3M466 775h1.3M475 767h1.3M483 759h1.3M492 751h1.3M501 744h1.3M509 736h1.3M518 729h1.3M526 721h1.3M535 714h1.3M543 706h1.3M551 699h1.3M559 692h1.3M567 685h1.3M575 678h1.3M583 671h1.3M591 664h1.3M599 657h1.3M607 650h1.3M614 643h1.3M622 637h1.3M629 630h1.3M637 623h1.3M644 617h1.3M652 610h1.3M659 604h1.3M666 598h1.3M673 591h1.3M681 585h1.3M688 579h1.3M695 573h1.3M702 566h1.3M708 560h1.3M715 554h1.3M722 548h1.3M729 542h1.3M735 536h1.3M742 531h1.3M749 525h1.3M755 519h1.3M762 513h1.3M768 508h1.3M774 502h1.3M781 496h1.3M787 491h1.3M793 485h1.3M799 480h1.3M806 475h1.3M812 469h1.3M818 464h1.3M824 459h1.3M830 453h1.3M836 448h1.3M841 443h1.3M847 438h1.3M853 433h1.3M859 428h1.3M865 422h1.3M870 417h1.3M876 413h1.3M881 408h1.3M887 403h1.3M892 398h1.3M898 393h1.3M903 388h1.3M909 383h1.3M914 379h1.3M919 374h1.3M925 369h1.3M930 365h1.3M935 360h1.3M940 356h1.3M945 351h1.3M950 347h1.3M956 342h1.3M314 921h1.3M325 912h1.3M335 903h1.3M345 894h1.3M355 885h1.3M365 876h1.3M375 867h1.3M385 858h1.3M395 850h1.3M404 841h1.3M414 833h1.3M423 824h1.3M432 816h1.3M442 808h1.3M451 800h1.3M460 792h1.3M469 784h1.3M478 776h1.3M487 768h1.3M495 760h1.3M504 752h1.3M513 745h1.3M521 737h1.3M530 730h1.3M538 722h1.3M546 715h1.3M555 708h1.3M563 700h1.3M571 693h1.3M579 686h1.3M587 679h1.3M595 672h1.3M603 665h1.3M610 658h1.3M618 651h1.3M626 644h1.3M633 638h1.3M641 631h1.3M648 624h1.3M655 618h1.3M663 611h1.3M670 605h1.3M677 599h1.3M684 592h1.3M691 586h1.3M698 580h1.3M705 573h1.3M712 567h1.3M719 561h1.3M726 555h1.3M733 549h1.3M739 543h1.3M746 537h1.3M753 531h1.3M759 526h1.3M766 520h1.3M772 514h1.3M778 509h1.3M785 503h1.3M791 497h1.3M797 492h1.3M804 486h1.3M810 481h1.3M816 475h1.3M822 470h1.3M828 465h1.3M834 459h1.3M840 454h1.3M846 449h1.3M851 444h1.3M857 438h1.3M863 433h1.3M869 428h1.3M874 423h1.3M880 418h1.3M886 413h1.3M891 408h1.3M897 403h1.3M902 399h1.3M908 394h1.3M913 389h1.3M918 384h1.3M924 379h1.3M929 375h1.3M934 370h1.3M939 365h1.3M945 361h1.3M950 356h1.3M955 352h1.3M960 347h1.3M965 343h1.3M327 922h1.3M338 913h1.3M348 904h1.3M358 895h1.3M368 886h1.3M378 877h1.3M388 868h1.3M398 860h1.3M407 851h1.3M417 843h1.3M426 834h1.3M436 826h1.3M445 817h1.3M454 809h1.3M463 801h1.3M472 793h1.3M481 785h1.3M490 777h1.3M499 769h1.3M507 761h1.3M516 754h1.3M525 746h1.3M533 738h1.3M542 731h1.3M550 723h1.3M558 716h1.3M566 709h1.3M574 701h1.3M582 694h1.3M590 687h1.3M598 680h1.3M606 673h1.3M614 666h1.3M622 659h1.3M629 652h1.3M637 645h1.3M644 639h1.3M652 632h1.3M659 625h1.3M667 619h1.3M674 612h1.3M681 606h1.3M688 600h1.3M695 593h1.3M702 587h1.3M709 581h1.3M716 574h1.3M723 568h1.3M730 562h1.3M737 556h1.3M743 550h1.3M750 544h1.3M757 538h1.3M763 532h1.3M770 527h1.3M776 521h1.3M783 515h1.3M789 509h1.3M795 504h1.3M801 498h1.3M808 493h1.3M814 487h1.3M820 482h1.3M826 476h1.3M832 471h1.3M838 465h1.3M844 460h1.3M850 455h1.3M856 450h1.3M861 444h1.3M867 439h1.3M873 434h1.3M879 429h1.3M884 424h1.3M890 419h1.3M895 414h1.3M901 409h1.3M906 404h1.3M912 399h1.3M917 394h1.3M923 390h1.3M928 385h1.3M933 380h1.3M938 375h1.3M944 371h1.3M949 366h1.3M954 362h1.3M959 357h1.3M964 352h1.3M969 348h1.3M974 343h1.3M340 924h1.3M351 915h1.3M361 905h1.3M371 896h1.3M381 887h1.3M391 879h1.3M401 870h1.3M410 861h1.3M420 852h1.3M429 844h1.3M439 835h1.3M448 827h1.3M457 819h1.3M466 810h1.3M475 802h1.3M484 794h1.3M493 786h1.3M502 778h1.3M511 770h1.3M520 762h1.3M528 755h1.3M537 747h1.3M545 739h1.3M553 732h1.3M562 724h1.3M570 717h1.3M578 710h1.3M586 702h1.3M594 695h1.3M602 688h1.3M610 681h1.3M618 674h1.3M625 667h1.3M633 660h1.3M641 653h1.3M648 646h1.3M656 640h1.3M663 633h1.3M670 626h1.3M678 620h1.3M685 613h1.3M692 607h1.3M699 600h1.3M706 594h1.3M713 588h1.3M720 582h1.3M727 575h1.3M734 569h1.3M741 563h1.3M747 557h1.3M754 551h1.3M761 545h1.3M767 539h1.3M774 533h1.3M780 527h1.3M787 522h1.3M793 516h1.3M799 510h1.3M806 505h1.3M812 499h1.3M818 493h1.3M824 488h1.3M830 482h1.3M836 477h1.3M842 472h1.3M848 466h1.3M854 461h1.3M860 456h1.3M866 450h1.3M871 445h1.3M877 440h1.3M883 435h1.3M889 430h1.3M894 425h1.3M900 420h1.3M905 415h1.3M911 410h1.3M916 405h1.3M922 400h1.3M927 395h1.3M932 390h1.3M938 386h1.3M943 381h1.3M948 376h1.3M953 371h1.3M958 367h1.3M963 362h1.3M969 358h1.3M974 353h1.3M979 349h1.3M984 344h1.3M354 925h1.3M364 916h1.3M374 907h1.3M384 898h1.3M394 889h1.3M404 880h1.3M413 871h1.3M423 862h1.3M432 854h1.3M442 845h1.3M451 837h1.3M460 828h1.3M470 820h1.3M479 812h1.3M488 803h1.3M497 795h1.3M506 787h1.3M514 779h1.3M523 771h1.3M532 764h1.3M540 756h1.3M549 748h1.3M557 741h1.3M565 733h1.3M573 726h1.3M582 718h1.3M590 711h1.3M598 704h1.3M606 696h1.3M614 689h1.3M621 682h1.3M629 675h1.3M637 668h1.3M644 661h1.3M652 654h1.3M660 647h1.3M667 641h1.3M674 634h1.3M682 627h1.3M689 621h1.3M696 614h1.3M703 608h1.3M710 601h1.3M717 595h1.3M724 589h1.3M731 582h1.3M738 576h1.3M745 570h1.3M751 564h1.3M758 558h1.3M765 552h1.3M771 546h1.3M778 540h1.3M784 534h1.3M791 528h1.3M797 523h1.3M804 517h1.3M810 511h1.3M816 505h1.3M822 500h1.3M828 494h1.3M834 489h1.3M840 483h1.3M846 478h1.3M852 472h1.3M858 467h1.3M864 462h1.3M870 456h1.3M876 451h1.3M882 446h1.3M887 441h1.3M893 436h1.3M898 431h1.3M904 426h1.3M910 420h1.3M915 416h1.3M921 411h1.3M926 406h1.3M931 401h1.3M937 396h1.3M942 391h1.3M947 386h1.3M952 382h1.3M958 377h1.3M963 372h1.3M968 368h1.3M973 363h1.3M978 358h1.3M983 354h1.3M988 349h1.3M993 345h1.3M367 927h1.3M377 917h1.3M387 908h1.3M397 899h1.3M407 890h1.3M416 881h1.3M426 872h1.3M436 864h1.3M445 855h1.3M454 846h1.3M464 838h1.3M473 829h1.3M482 821h1.3M491 813h1.3M500 805h1.3M509 797h1.3M518 789h1.3M526 781h1.3M535 773h1.3M544 765h1.3M552 757h1.3M561 749h1.3M569 742h1.3M577 734h1.3M585 727h1.3M593 719h1.3M601 712h1.3M609 705h1.3M617 697h1.3M625 690h1.3M633 683h1.3M641 676h1.3M648 669h1.3M656 662h1.3M663 655h1.3M671 649h1.3M678 642h1.3M686 635h1.3M693 628h1.3M700 622h1.3M707 615h1.3M714 609h1.3M721 602h1.3M728 596h1.3M735 590h1.3M742 583h1.3M749 577h1.3M756 571h1.3M762 565h1.3M769 559h1.3M776 553h1.3M782 547h1.3M789 541h1.3M795 535h1.3M801 529h1.3M808 523h1.3M814 518h1.3M820 512h1.3M826 506h1.3M833 501h1.3M839 495h1.3M845 490h1.3M851 484h1.3M857 479h1.3M863 473h1.3M868 468h1.3M874 462h1.3M880 457h1.3M886 452h1.3M892 447h1.3M897 442h1.3M903 436h1.3M908 431h1.3M914 426h1.3M919 421h1.3M925 416h1.3M930 411h1.3M936 406h1.3M941 401h1.3M946 397h1.3M952 392h1.3M957 387h1.3M962 382h1.3M967 378h1.3M972 373h1.3M977 368h1.3M982 364h1.3M987 359h1.3M992 354h1.3M997 350h1.3M1002 345h1.3M380 928h1.3M390 919h1.3M400 910h1.3M410 900h1.3M419 891h1.3M429 883h1.3M439 874h1.3M448 865h1.3M458 856h1.3M467 848h1.3M476 839h1.3M485 831h1.3M494 822h1.3M503 814h1.3M512 806h1.3M521 798h1.3M530 790h1.3M539 782h1.3M547 774h1.3M556 766h1.3M564 758h1.3M573 751h1.3M581 743h1.3M589 735h1.3M597 728h1.3M605 720h1.3M613 713h1.3M621 706h1.3M629 698h1.3M637 691h1.3M645 684h1.3M652 677h1.3M660 670h1.3M667 663h1.3M675 656h1.3M682 650h1.3M690 643h1.3M697 636h1.3M704 629h1.3M711 623h1.3M718 616h1.3M725 610h1.3M732 603h1.3M739 597h1.3M746 591h1.3M753 584h1.3M760 578h1.3M766 572h1.3M773 566h1.3M780 560h1.3M786 554h1.3M793 548h1.3M799 542h1.3M806 536h1.3M812 530h1.3M818 524h1.3M825 519h1.3M831 513h1.3M837 507h1.3M843 502h1.3M849 496h1.3M855 490h1.3M861 485h1.3M867 479h1.3M873 474h1.3M879 469h1.3M884 463h1.3M890 458h1.3M896 453h1.3M902 448h1.3M907 442h1.3M913 437h1.3M918 432h1.3M924 427h1.3M929 422h1.3M935 417h1.3M940 412h1.3M945 407h1.3M951 402h1.3M956 397h1.3M961 393h1.3M967 388h1.3M972 383h1.3M977 378h1.3M982 374h1.3M987 369h1.3M992 364h1.3M997 360h1.3M1002 355h1.3M1007 351h1.3M1012 346h1.3M393 929h1.3M403 920h1.3M413 911h1.3M423 902h1.3M432 893h1.3M442 884h1.3M451 875h1.3M461 866h1.3M470 858h1.3M480 849h1.3M489 840h1.3M498 832h1.3M507 824h1.3M516 815h1.3M525 807h1.3M534 799h1.3M542 791h1.3M551 783h1.3M559 775h1.3M568 767h1.3M576 759h1.3M585 752h1.3M593 744h1.3M601 736h1.3M609 729h1.3M617 722h1.3M625 714h1.3M633 707h1.3M641 700h1.3M648 692h1.3M656 685h1.3M664 678h1.3M671 671h1.3M679 664h1.3M686 657h1.3M694 651h1.3M701 644h1.3M708 637h1.3M715 630h1.3M722 624h1.3M729 617h1.3M736 611h1.3M743 604h1.3M750 598h1.3M757 592h1.3M764 585h1.3M771 579h1.3M777 573h1.3M784 567h1.3M791 561h1.3M797 555h1.3M803 549h1.3M810 543h1.3M816 537h1.3M823 531h1.3M829 525h1.3M835 519h1.3M841 514h1.3M847 508h1.3M853 502h1.3M859 497h1.3M865 491h1.3M871 486h1.3M877 480h1.3M883 475h1.3M889 469h1.3M895 464h1.3M900 459h1.3M906 454h1.3M912 448h1.3M917 443h1.3M923 438h1.3M928 433h1.3M934 428h1.3M939 423h1.3M945 418h1.3M950 413h1.3M955 408h1.3M961 403h1.3M966 398h1.3M971 393h1.3M976 388h1.3M981 384h1.3M986 379h1.3M991 374h1.3M996 370h1.3M1001 365h1.3M1006 360h1.3M1011 356h1.3M1016 351h1.3M1021 347h1.3M406 931h1.3M416 922h1.3M426 912h1.3M436 903h1.3M445 894h1.3M455 885h1.3M464 876h1.3M474 868h1.3M483 859h1.3M492 850h1.3M501 842h1.3M510 833h1.3M519 825h1.3M528 817h1.3M537 808h1.3M546 800h1.3M554 792h1.3M563 784h1.3M572 776h1.3M580 768h1.3M588 761h1.3M597 753h1.3M605 745h1.3M613 738h1.3M621 730h1.3M629 723h1.3M637 715h1.3M645 708h1.3M652 701h1.3M660 693h1.3M668 686h1.3M675 679h1.3M683 672h1.3M690 665h1.3M698 658h1.3M705 652h1.3M712 645h1.3M719 638h1.3M727 631h1.3M734 625h1.3M741 618h1.3M748 612h1.3M755 605h1.3M761 599h1.3M768 593h1.3M775 586h1.3M782 580h1.3M788 574h1.3M795 568h1.3M801 562h1.3M808 556h1.3M814 550h1.3M821 544h1.3M827 538h1.3M833 532h1.3M839 526h1.3M846 520h1.3M852 515h1.3M858 509h1.3M864 503h1.3M870 498h1.3M876 492h1.3M882 487h1.3M888 481h1.3M893 476h1.3M899 470h1.3M905 465h1.3M911 460h1.3M916 454h1.3M922 449h1.3M927 444h1.3M933 439h1.3M938 434h1.3M944 429h1.3M949 424h1.3M955 419h1.3M960 414h1.3M965 409h1.3M970 404h1.3M976 399h1.3M981 394h1.3M986 389h1.3M991 384h1.3M996 380h1.3M1001 375h1.3M1006 370h1.3M1011 366h1.3M1016 361h1.3M1021 357h1.3M1026 352h1.3M1031 348h1.3M419 932h1.3M429 923h1.3M439 914h1.3M448 905h1.3M458 896h1.3M468 887h1.3M477 878h1.3M486 869h1.3M496 860h1.3M505 852h1.3M514 843h1.3M523 835h1.3M532 826h1.3M541 818h1.3M549 810h1.3M558 801h1.3M567 793h1.3M575 785h1.3M584 777h1.3M592 770h1.3M600 762h1.3M609 754h1.3M617 746h1.3M625 739h1.3M633 731h1.3M641 724h1.3M649 716h1.3M656 709h1.3M664 702h1.3M672 695h1.3M679 687h1.3M687 680h1.3M694 673h1.3M702 666h1.3M709 659h1.3M716 653h1.3M724 646h1.3M731 639h1.3M738 632h1.3M745 626h1.3M752 619h1.3M759 613h1.3M766 606h1.3M772 600h1.3M779 594h1.3M786 587h1.3M793 581h1.3M799 575h1.3M806 569h1.3M812 563h1.3M819 556h1.3M825 550h1.3M831 544h1.3M838 539h1.3M844 533h1.3M850 527h1.3M856 521h1.3M862 515h1.3M868 510h1.3M874 504h1.3M880 498h1.3M886 493h1.3M892 487h1.3M898 482h1.3M904 476h1.3M909 471h1.3M915 466h1.3M921 460h1.3M926 455h1.3M932 450h1.3M937 445h1.3M943 440h1.3M948 434h1.3M954 429h1.3M959 424h1.3M964 419h1.3M970 414h1.3M975 409h1.3M980 404h1.3M985 400h1.3M990 395h1.3M996 390h1.3M1001 385h1.3M1006 380h1.3M1011 376h1.3M1016 371h1.3M1021 366h1.3M1025 362h1.3M1030 357h1.3M1035 353h1.3M1040 348h1.3M432 934h1.3M442 924h1.3M452 915h1.3M461 906h1.3M471 897h1.3M481 888h1.3M490 879h1.3M499 870h1.3M508 861h1.3M518 853h1.3M527 844h1.3M536 836h1.3M544 827h1.3M553 819h1.3M562 811h1.3M570 803h1.3M579 795h1.3M588 787h1.3M596 779h1.3M604 771h1.3M612 763h1.3M621 755h1.3M629 747h1.3M637 740h1.3M645 732h1.3M653 725h1.3M660 717h1.3M668 710h1.3M676 703h1.3M683 696h1.3M691 688h1.3M698 681h1.3M706 674h1.3M713 667h1.3M721 660h1.3M728 654h1.3M735 647h1.3M742 640h1.3M749 633h1.3M756 627h1.3M763 620h1.3M770 614h1.3M777 607h1.3M783 601h1.3M790 594h1.3M797 588h1.3M803 582h1.3M810 576h1.3M817 570h1.3M823 563h1.3M829 557h1.3M836 551h1.3M842 545h1.3M848 539h1.3M854 534h1.3M861 528h1.3M867 522h1.3M873 516h1.3M879 511h1.3M885 505h1.3M891 499h1.3M897 494h1.3M902 488h1.3M908 483h1.3M914 477h1.3M920 472h1.3M925 467h1.3M931 461h1.3M936 456h1.3M942 451h1.3M947 445h1.3M953 440h1.3M958 435h1.3M964 430h1.3M969 425h1.3M974 420h1.3M980 415h1.3M985 410h1.3M990 405h1.3M995 400h1.3M1000 395h1.3M1005 391h1.3M1010 386h1.3M1015 381h1.3M1020 376h1.3M1025 372h1.3M1030 367h1.3M1035 363h1.3M1040 358h1.3M1045 353h1.3M1049 349h1.3M445 935h1.3M455 926h1.3M465 917h1.3M474 907h1.3M484 898h1.3M493 889h1.3M503 880h1.3M512 872h1.3M521 863h1.3M530 854h1.3M539 846h1.3M548 837h1.3M557 829h1.3M566 820h1.3M574 812h1.3M583 804h1.3M591 796h1.3M600 788h1.3M608 780h1.3M616 772h1.3M625 764h1.3M633 756h1.3M641 749h1.3M649 741h1.3M657 733h1.3M664 726h1.3M672 719h1.3M680 711h1.3M688 704h1.3M695 697h1.3M703 690h1.3M710 682h1.3M717 675h1.3M725 668h1.3M732 662h1.3M739 655h1.3M746 648h1.3M753 641h1.3M760 634h1.3M767 628h1.3M774 621h1.3M781 615h1.3M788 608h1.3M795 602h1.3M801 595h1.3M808 589h1.3M814 583h1.3M821 577h1.3M827 570h1.3M834 564h1.3M840 558h1.3M846 552h1.3M853 546h1.3M859 540h1.3M865 534h1.3M871 529h1.3M877 523h1.3M883 517h1.3M889 511h1.3M895 506h1.3M901 500h1.3M907 495h1.3M913 489h1.3M918 484h1.3M924 478h1.3M930 473h1.3M935 467h1.3M941 462h1.3M947 457h1.3M952 451h1.3M957 446h1.3M963 441h1.3M968 436h1.3M974 431h1.3M979 426h1.3M984 421h1.3M989 416h1.3M995 411h1.3M1000 406h1.3M1005 401h1.3M1010 396h1.3M1015 391h1.3M1020 387h1.3M1025 382h1.3M1030 377h1.3M1035 372h1.3M1040 368h1.3M1044 363h1.3M1049 359h1.3M1054 354h1.3M1059 350h1.3M459 937h1.3M468 927h1.3M478 918h1.3M487 909h1.3M497 900h1.3M506 891h1.3M516 882h1.3M525 873h1.3M534 864h1.3M543 855h1.3M552 847h1.3M561 838h1.3M569 830h1.3M578 822h1.3M587 813h1.3M595 805h1.3M604 797h1.3M612 789h1.3M620 781h1.3M629 773h1.3M637 765h1.3M645 757h1.3M653 750h1.3M661 742h1.3M669 735h1.3M676 727h1.3M684 720h1.3M692 712h1.3M699 705h1.3M707 698h1.3M714 691h1.3M722 684h1.3M729 676h1.3M736 669h1.3M743 663h1.3M751 656h1.3M758 649h1.3M765 642h1.3M772 635h1.3M779 629h1.3M785 622h1.3M792 616h1.3M799 609h1.3M806 603h1.3M812 596h1.3M819 590h1.3M825 584h1.3M832 578h1.3M838 571h1.3M845 565h1.3M851 559h1.3M857 553h1.3M863 547h1.3M870 541h1.3M876 535h1.3M882 530h1.3M888 524h1.3M894 518h1.3M900 512h1.3M906 507h1.3M911 501h1.3M917 495h1.3M923 490h1.3M929 484h1.3M934 479h1.3M940 473h1.3M946 468h1.3M951 463h1.3M957 458h1.3M962 452h1.3M968 447h1.3M973 442h1.3M978 437h1.3M984 432h1.3M989 427h1.3M994 422h1.3M999 417h1.3M1004 412h1.3M1010 407h1.3M1015 402h1.3M1020 397h1.3M1025 392h1.3M1030 387h1.3M1035 383h1.3M1040 378h1.3M1044 373h1.3M1049 369h1.3M1054 364h1.3M1059 359h1.3M1064 355h1.3M1068 350h1.3M472 938h1.3M481 929h1.3M491 919h1.3M501 910h1.3M510 901h1.3M519 892h1.3M528 883h1.3M538 874h1.3M547 865h1.3M556 857h1.3M564 848h1.3M573 840h1.3M582 831h1.3M591 823h1.3M599 815h1.3M608 806h1.3M616 798h1.3M624 790h1.3M633 782h1.3M641 774h1.3M649 766h1.3M657 759h1.3M665 751h1.3M673 743h1.3M681 736h1.3M688 728h1.3M696 721h1.3M704 713h1.3M711 706h1.3M719 699h1.3M726 692h1.3M733 685h1.3M741 678h1.3M748 671h1.3M755 664h1.3M762 657h1.3M769 650h1.3M776 643h1.3M783 636h1.3M790 630h1.3M797 623h1.3M803 617h1.3M810 610h1.3M817 604h1.3M823 597h1.3M830 591h1.3M836 585h1.3M843 578h1.3M849 572h1.3M856 566h1.3M862 560h1.3M868 554h1.3M874 548h1.3M880 542h1.3M886 536h1.3M892 530h1.3M898 525h1.3M904 519h1.3M910 513h1.3M916 507h1.3M922 502h1.3M928 496h1.3M933 491h1.3M939 485h1.3M945 480h1.3M950 474h1.3M956 469h1.3M961 464h1.3M967 458h1.3M972 453h1.3M978 448h1.3M983 443h1.3M988 437h1.3M994 432h1.3M999 427h1.3M1004 422h1.3M1009 417h1.3M1014 412h1.3M1019 407h1.3M1024 403h1.3M1029 398h1.3M1034 393h1.3M1039 388h1.3M1044 383h1.3M1049 379h1.3M1054 374h1.3M1059 369h1.3M1064 365h1.3M1068 360h1.3M1073 355h1.3M1078 351h1.3M485 939h1.3M495 930h1.3M504 921h1.3M514 911h1.3M523 902h1.3M532 893h1.3M541 884h1.3M550 876h1.3M559 867h1.3M568 858h1.3M577 849h1.3M586 841h1.3M595 832h1.3M603 824h1.3M612 816h1.3M620 808h1.3M628 799h1.3M637 791h1.3M645 783h1.3M653 775h1.3M661 768h1.3M669 760h1.3M677 752h1.3M685 744h1.3M692 737h1.3M700 729h1.3M708 722h1.3M715 715h1.3M723 707h1.3M730 700h1.3M738 693h1.3M745 686h1.3M752 679h1.3M759 672h1.3M766 665h1.3M774 658h1.3M781 651h1.3M787 644h1.3M794 637h1.3M801 631h1.3M808 624h1.3M815 618h1.3M821 611h1.3M828 605h1.3M834 598h1.3M841 592h1.3M847 586h1.3M854 579h1.3M860 573h1.3M866 567h1.3M873 561h1.3M879 555h1.3M885 549h1.3M891 543h1.3M897 537h1.3M903 531h1.3M909 525h1.3M915 520h1.3M921 514h1.3M927 508h1.3M932 503h1.3M938 497h1.3M944 492h1.3M949 486h1.3M955 481h1.3M961 475h1.3M966 470h1.3M972 464h1.3M977 459h1.3M982 454h1.3M988 449h1.3M993 443h1.3M998 438h1.3M1004 433h1.3M1009 428h1.3M1014 423h1.3M1019 418h1.3M1024 413h1.3M1029 408h1.3M1034 403h1.3M1039 398h1.3M1044 394h1.3M1049 389h1.3M1054 384h1.3M1059 379h1.3M1064 375h1.3M1068 370h1.3M1073 365h1.3M1078 361h1.3M1083 356h1.3M1087 352h1.3M498 941h1.3M508 931h1.3M517 922h1.3M527 913h1.3M536 904h1.3M545 895h1.3M554 886h1.3M563 877h1.3M572 868h1.3M581 859h1.3M590 851h1.3M599 842h1.3M607 834h1.3M616 825h1.3M624 817h1.3M632 809h1.3M641 801h1.3M649 793h1.3M657 785h1.3M665 777h1.3M673 769h1.3M681 761h1.3M689 753h1.3M697 746h1.3M704 738h1.3M712 730h1.3M720 723h1.3M727 716h1.3M735 708h1.3M742 701h1.3M749 694h1.3M757 687h1.3M764 680h1.3M771 673h1.3M778 666h1.3M785 659h1.3M792 652h1.3M799 645h1.3M806 638h1.3M812 632h1.3M819 625h1.3M826 619h1.3M832 612h1.3M839 606h1.3M846 599h1.3M852 593h1.3M858 587h1.3M865 580h1.3M871 574h1.3M877 568h1.3M883 562h1.3M890 556h1.3M896 550h1.3M902 544h1.3M908 538h1.3M914 532h1.3M920 526h1.3M926 521h1.3M931 515h1.3M937 509h1.3M943 504h1.3M949 498h1.3M954 492h1.3M960 487h1.3M965 481h1.3M971 476h1.3M976 471h1.3M982 465h1.3M987 460h1.3M993 455h1.3M998 449h1.3M1003 444h1.3M1008 439h1.3M1014 434h1.3M1019 429h1.3M1024 424h1.3M1029 419h1.3M1034 414h1.3M1039 409h1.3M1044 404h1.3M1049 399h1.3M1054 394h1.3M1059 389h1.3M1064 385h1.3M1068 380h1.3M1073 375h1.3M1078 371h1.3M1083 366h1.3M1087 361h1.3M1092 357h1.3M1097 352h1.3M512 942h1.3M521 933h1.3M530 923h1.3M540 914h1.3M549 905h1.3M558 896h1.3M567 887h1.3M576 878h1.3M585 869h1.3M594 861h1.3M603 852h1.3M611 843h1.3M620 835h1.3M628 827h1.3M637 818h1.3M645 810h1.3M653 802h1.3M661 794h1.3M669 786h1.3M677 778h1.3M685 770h1.3M693 762h1.3M701 754h1.3M709 747h1.3M716 739h1.3M724 732h1.3M732 724h1.3M739 717h1.3M746 709h1.3M754 702h1.3M761 695h1.3M768 688h1.3M775 681h1.3M782 674h1.3M790 667h1.3M796 660h1.3M803 653h1.3M810 646h1.3M817 639h1.3M824 633h1.3M830 626h1.3M837 620h1.3M844 613h1.3M850 607h1.3M857 600h1.3M863 594h1.3M869 588h1.3M876 581h1.3M882 575h1.3M888 569h1.3M894 563h1.3M900 557h1.3M907 551h1.3M913 545h1.3M919 539h1.3M924 533h1.3M930 527h1.3M936 521h1.3M942 516h1.3M948 510h1.3M953 504h1.3M959 499h1.3M965 493h1.3M970 488h1.3M976 482h1.3M981 477h1.3M987 471h1.3M992 466h1.3M997 461h1.3M1003 455h1.3M1008 450h1.3M1013 445h1.3M1018 440h1.3M1024 435h1.3M1029 430h1.3M1034 425h1.3M1039 420h1.3M1044 415h1.3M1049 410h1.3M1054 405h1.3M1059 400h1.3M1064 395h1.3M1069 390h1.3M1073 385h1.3M1078 381h1.3M1083 376h1.3M1088 371h1.3M1092 367h1.3M1097 362h1.3M1102 358h1.3M1106 353h1.3M525 944h1.3M534 934h1.3M544 925h1.3M553 916h1.3M562 906h1.3M571 897h1.3M580 888h1.3M589 879h1.3M598 871h1.3M607 862h1.3M615 853h1.3M624 845h1.3M632 836h1.3M641 828h1.3M649 820h1.3M657 811h1.3M666 803h1.3M674 795h1.3M682 787h1.3M690 779h1.3M698 771h1.3M705 763h1.3M713 756h1.3M721 748h1.3M728 740h1.3M736 733h1.3M744 725h1.3M751 718h1.3M758 711h1.3M766 703h1.3M773 696h1.3M780 689h1.3M787 682h1.3M794 675h1.3M801 668h1.3M808 661h1.3M815 654h1.3M822 647h1.3M828 640h1.3M835 634h1.3M842 627h1.3M848 621h1.3M855 614h1.3M861 608h1.3M868 601h1.3M874 595h1.3M880 588h1.3M887 582h1.3M893 576h1.3M899 570h1.3M905 564h1.3M911 558h1.3M917 552h1.3M923 546h1.3M929 540h1.3M935 534h1.3M941 528h1.3M947 522h1.3M952 517h1.3M958 511h1.3M964 505h1.3M969 500h1.3M975 494h1.3M981 489h1.3M986 483h1.3M992 478h1.3M997 472h1.3M1002 467h1.3M1008 461h1.3M1013 456h1.3M1018 451h1.3M1023 446h1.3M1029 441h1.3M1034 435h1.3M1039 430h1.3M1044 425h1.3M1049 420h1.3M1054 415h1.3M1059 410h1.3M1064 405h1.3M1069 401h1.3M1073 396h1.3M1078 391h1.3M1083 386h1.3M1088 381h1.3M1093 377h1.3M1097 372h1.3M1102 367h1.3M1106 363h1.3M1111 358h1.3M1116 354h1.3M538 945h1.3M548 936h1.3M557 926h1.3M566 917h1.3M575 908h1.3M584 899h1.3M593 890h1.3M602 881h1.3M611 872h1.3M619 863h1.3M628 855h1.3M637 846h1.3M645 838h1.3M653 829h1.3M662 821h1.3M670 812h1.3M678 804h1.3M686 796h1.3M694 788h1.3M702 780h1.3M710 772h1.3M718 764h1.3M725 757h1.3M733 749h1.3M741 741h1.3M748 734h1.3M755 726h1.3M763 719h1.3M770 712h1.3M777 704h1.3M785 697h1.3M792 690h1.3M799 683h1.3M806 676h1.3M813 669h1.3M820 662h1.3M826 655h1.3M833 648h1.3M840 641h1.3M846 635h1.3M853 628h1.3M860 622h1.3M866 615h1.3M873 609h1.3M879 602h1.3M885 596h1.3M892 589h1.3M898 583h1.3M904 577h1.3M910 571h1.3M916 565h1.3M922 559h1.3M928 553h1.3M934 547h1.3M940 541h1.3M946 535h1.3M952 529h1.3M957 523h1.3M963 517h1.3M969 512h1.3M974 506h1.3M980 500h1.3M985 495h1.3M991 489h1.3M996 484h1.3M1002 478h1.3M1007 473h1.3M1013 468h1.3M1018 462h1.3M1023 457h1.3M1028 452h1.3M1034 447h1.3M1039 441h1.3M1044 436h1.3M1049 431h1.3M1054 426h1.3M1059 421h1.3M1064 416h1.3M1069 411h1.3M1074 406h1.3M1078 401h1.3M1083 396h1.3M1088 392h1.3M1093 387h1.3M1098 382h1.3M1102 377h1.3M1107 373h1.3M1111 368h1.3M1116 363h1.3M1121 359h1.3M1125 354h1.3M551 946h1.3M561 937h1.3M570 928h1.3M579 918h1.3M588 909h1.3M597 900h1.3M606 891h1.3M615 882h1.3M624 873h1.3M632 865h1.3M641 856h1.3M649 847h1.3M658 839h1.3M666 830h1.3M674 822h1.3M682 814h1.3M690 806h1.3M698 797h1.3M706 789h1.3M714 781h1.3M722 773h1.3M730 766h1.3M737 758h1.3M745 750h1.3M753 743h1.3M760 735h1.3M767 728h1.3M775 720h1.3M782 713h1.3M789 705h1.3M796 698h1.3M803 691h1.3M810 684h1.3M817 677h1.3M824 670h1.3M831 663h1.3M838 656h1.3M845 649h1.3M851 642h1.3M858 636h1.3M864 629h1.3M871 623h1.3M877 616h1.3M884 610h1.3M890 603h1.3M896 597h1.3M903 590h1.3M909 584h1.3M915 578h1.3M921 572h1.3M927 566h1.3M933 560h1.3M939 553h1.3M945 548h1.3M951 542h1.3M957 536h1.3M962 530h1.3M968 524h1.3M974 518h1.3M979 513h1.3M985 507h1.3M990 501h1.3M996 496h1.3M1001 490h1.3M1007 485h1.3M1012 479h1.3M1018 474h1.3M1023 468h1.3M1028 463h1.3M1033 458h1.3M1038 453h1.3M1044 447h1.3M1049 442h1.3M1054 437h1.3M1059 432h1.3M1064 427h1.3M1069 422h1.3M1074 417h1.3M1079 412h1.3M1083 407h1.3M1088 402h1.3M1093 397h1.3M1098 392h1.3M1103 388h1.3M1107 383h1.3M1112 378h1.3M1116 373h1.3M1121 369h1.3M1126 364h1.3M1130 360h1.3M1135 355h1.3M565 948h1.3M574 938h1.3M583 929h1.3M592 920h1.3M601 911h1.3M610 901h1.3M619 892h1.3M628 883h1.3M637 875h1.3M645 866h1.3M654 857h1.3M662 849h1.3M670 840h1.3M679 832h1.3M687 823h1.3M695 815h1.3M703 807h1.3M711 799h1.3M719 791h1.3M727 783h1.3M734 775h1.3M742 767h1.3M750 759h1.3M757 751h1.3M765 744h1.3M772 736h1.3M779 729h1.3M787 721h1.3M794 714h1.3M801 707h1.3M808 699h1.3M815 692h1.3M822 685h1.3M829 678h1.3M836 671h1.3M843 664h1.3M849 657h1.3M856 650h1.3M863 644h1.3M869 637h1.3M876 630h1.3M882 624h1.3M889 617h1.3M895 611h1.3M901 604h1.3M907 598h1.3M914 591h1.3M920 585h1.3M926 579h1.3M932 573h1.3M938 567h1.3M944 560h1.3M950 554h1.3M956 548h1.3M961 542h1.3M967 537h1.3M973 531h1.3M979 525h1.3M984 519h1.3M990 513h1.3M995 508h1.3M1001 502h1.3M1006 497h1.3M1012 491h1.3M1017 485h1.3M1023 480h1.3M1028 475h1.3M1033 469h1.3M1038 464h1.3M1044 459h1.3M1049 453h1.3M1054 448h1.3M1059 443h1.3M1064 438h1.3M1069 433h1.3M1074 428h1.3M1079 423h1.3M1084 418h1.3M1089 413h1.3M1093 408h1.3M1098 403h1.3M1103 398h1.3M1108 393h1.3M1112 388h1.3M1117 384h1.3M1122 379h1.3M1126 374h1.3M1131 369h1.3M1135 365h1.3M1140 360h1.3M1144 356h1.3M578 949h1.3M587 940h1.3M597 930h1.3M606 921h1.3M615 912h1.3M623 903h1.3M632 894h1.3M641 885h1.3M649 876h1.3M658 867h1.3M666 858h1.3M675 850h1.3M683 841h1.3M691 833h1.3M699 825h1.3M707 816h1.3M715 808h1.3M723 800h1.3M731 792h1.3M739 784h1.3M747 776h1.3M754 768h1.3M762 760h1.3M769 752h1.3M777 745h1.3M784 737h1.3M791 730h1.3M799 722h1.3M806 715h1.3M813 708h1.3M820 700h1.3M827 693h1.3M834 686h1.3M841 679h1.3M847 672h1.3M854 665h1.3M861 658h1.3M867 651h1.3M874 645h1.3M881 638h1.3M887 631h1.3M893 625h1.3M900 618h1.3M906 611h1.3M912 605h1.3M919 599h1.3M925 592h1.3M931 586h1.3M937 580h1.3M943 574h1.3M949 567h1.3M955 561h1.3M961 555h1.3M966 549h1.3M972 543h1.3M978 537h1.3M984 532h1.3M989 526h1.3M995 520h1.3M1000 514h1.3M1006 509h1.3M1011 503h1.3M1017 497h1.3M1022 492h1.3M1028 486h1.3M1033 481h1.3M1038 475h1.3M1043 470h1.3M1049 465h1.3M1054 459h1.3M1059 454h1.3M1064 449h1.3M1069 444h1.3M1074 439h1.3M1079 433h1.3M1084 428h1.3M1089 423h1.3M1094 418h1.3M1098 413h1.3M1103 408h1.3M1108 404h1.3M1113 399h1.3M1117 394h1.3M1122 389h1.3M1127 384h1.3M1131 380h1.3M1136 375h1.3M1140 370h1.3M1145 366h1.3M1149 361h1.3M1154 356h1.3M592 951h1.3M601 941h1.3M610 932h1.3M619 923h1.3M628 913h1.3M636 904h1.3M645 895h1.3M654 886h1.3M662 877h1.3M671 869h1.3M679 860h1.3M688 851h1.3M696 843h1.3M704 834h1.3M712 826h1.3M720 817h1.3M728 809h1.3M736 801h1.3M744 793h1.3M751 785h1.3M759 777h1.3M766 769h1.3M774 761h1.3M781 754h1.3M789 746h1.3M796 738h1.3M803 731h1.3M811 723h1.3M818 716h1.3M825 709h1.3M832 701h1.3M839 694h1.3M845 687h1.3M852 680h1.3M859 673h1.3M866 666h1.3M872 659h1.3M879 652h1.3M886 646h1.3M892 639h1.3M898 632h1.3M905 626h1.3M911 619h1.3M917 612h1.3M924 606h1.3M930 600h1.3M936 593h1.3M942 587h1.3M948 581h1.3M954 575h1.3M960 568h1.3M966 562h1.3M972 556h1.3M977 550h1.3M983 544h1.3M989 538h1.3M994 532h1.3M1000 527h1.3M1006 521h1.3M1011 515h1.3M1017 509h1.3M1022 504h1.3M1027 498h1.3M1033 493h1.3M1038 487h1.3M1043 482h1.3M1049 476h1.3M1054 471h1.3M1059 466h1.3M1064 460h1.3M1069 455h1.3M1074 450h1.3M1079 444h1.3M1084 439h1.3M1089 434h1.3M1094 429h1.3M1099 424h1.3M1104 419h1.3M1108 414h1.3M1113 409h1.3M1118 404h1.3M1123 399h1.3M1127 395h1.3M1132 390h1.3M1136 385h1.3M1141 380h1.3M1145 376h1.3M1150 371h1.3M1154 366h1.3M1159 362h1.3M1163 357h1.3M605 952h1.3M614 943h1.3M623 933h1.3M632 924h1.3M641 915h1.3M650 906h1.3M658 896h1.3M667 888h1.3M675 879h1.3M684 870h1.3M692 861h1.3M700 852h1.3M708 844h1.3M717 835h1.3M725 827h1.3M733 819h1.3M740 810h1.3M748 802h1.3M756 794h1.3M764 786h1.3M771 778h1.3M779 770h1.3M786 763h1.3M794 755h1.3M801 747h1.3M808 740h1.3M815 732h1.3M822 725h1.3M830 717h1.3M837 710h1.3M844 703h1.3M850 695h1.3M857 688h1.3M864 681h1.3M871 674h1.3M877 667h1.3M884 660h1.3M890 653h1.3M897 647h1.3M903 640h1.3M910 633h1.3M916 627h1.3M922 620h1.3M929 613h1.3M935 607h1.3M941 601h1.3M947 594h1.3M953 588h1.3M959 582h1.3M965 575h1.3M971 569h1.3M977 563h1.3M982 557h1.3M988 551h1.3M994 545h1.3M999 539h1.3M1005 533h1.3M1011 528h1.3M1016 522h1.3M1022 516h1.3M1027 510h1.3M1032 505h1.3M1038 499h1.3M1043 494h1.3M1048 488h1.3M1054 483h1.3M1059 477h1.3M1064 472h1.3M1069 466h1.3M1074 461h1.3M1079 456h1.3M1084 450h1.3M1089 445h1.3M1094 440h1.3M1099 435h1.3M1104 430h1.3M1109 425h1.3M1114 420h1.3M1118 415h1.3M1123 410h1.3M1128 405h1.3M1132 400h1.3M1137 395h1.3M1142 390h1.3M1146 386h1.3M1151 381h1.3M1155 376h1.3M1160 372h1.3M1164 367h1.3M1168 362h1.3M1173 358h1.3M618 954h1.3M627 944h1.3M636 935h1.3M645 925h1.3M654 916h1.3M663 907h1.3M671 898h1.3M680 889h1.3M688 880h1.3M697 871h1.3M705 862h1.3M713 854h1.3M721 845h1.3M729 837h1.3M737 828h1.3M745 820h1.3M753 812h1.3M761 804h1.3M768 795h1.3M776 787h1.3M784 779h1.3M791 772h1.3M798 764h1.3M806 756h1.3M813 748h1.3M820 741h1.3M827 733h1.3M834 726h1.3M841 718h1.3M848 711h1.3M855 704h1.3M862 696h1.3M869 689h1.3M876 682h1.3M882 675h1.3M889 668h1.3M896 661h1.3M902 654h1.3M908 648h1.3M915 641h1.3M921 634h1.3M927 628h1.3M934 621h1.3M940 614h1.3M946 608h1.3M952 602h1.3M958 595h1.3M964 589h1.3M970 583h1.3M976 576h1.3M982 570h1.3M988 564h1.3M993 558h1.3M999 552h1.3M1005 546h1.3M1010 540h1.3M1016 534h1.3M1021 528h1.3M1027 523h1.3M1032 517h1.3M1038 511h1.3M1043 506h1.3M1048 500h1.3M1054 494h1.3M1059 489h1.3M1064 483h1.3M1069 478h1.3M1074 472h1.3M1079 467h1.3M1084 462h1.3M1089 457h1.3M1094 451h1.3M1099 446h1.3M1104 441h1.3M1109 436h1.3M1114 431h1.3M1119 426h1.3M1124 421h1.3M1128 416h1.3M1133 411h1.3M1138 406h1.3M1142 401h1.3M1147 396h1.3M1151 391h1.3M1156 386h1.3M1160 382h1.3M1165 377h1.3M1169 372h1.3M1174 368h1.3M1178 363h1.3M1182 358h1.3M632 955h1.3M641 946h1.3M650 936h1.3M659 927h1.3M667 917h1.3M676 908h1.3M684 899h1.3M693 890h1.3M701 881h1.3M710 872h1.3M718 864h1.3M726 855h1.3M734 846h1.3M742 838h1.3M750 830h1.3M758 821h1.3M766 813h1.3M773 805h1.3M781 797h1.3M788 789h1.3M796 781h1.3M803 773h1.3M811 765h1.3M818 757h1.3M825 749h1.3M832 742h1.3M839 734h1.3M846 727h1.3M853 719h1.3M860 712h1.3M867 705h1.3M874 697h1.3M881 690h1.3M887 683h1.3M894 676h1.3M901 669h1.3M907 662h1.3M914 655h1.3M920 649h1.3M926 642h1.3M933 635h1.3M939 629h1.3M945 622h1.3M951 615h1.3M957 609h1.3M963 602h1.3M969 596h1.3M975 590h1.3M981 584h1.3M987 577h1.3M993 571h1.3M998 565h1.3M1004 559h1.3M1010 553h1.3M1015 547h1.3M1021 541h1.3M1027 535h1.3M1032 529h1.3M1038 523h1.3M1043 518h1.3M1048 512h1.3M1054 506h1.3M1059 501h1.3M1064 495h1.3M1069 490h1.3M1074 484h1.3M1080 479h1.3M1085 473h1.3M1090 468h1.3M1095 463h1.3M1100 457h1.3M1105 452h1.3M1110 447h1.3M1114 442h1.3M1119 437h1.3M1124 431h1.3M1129 426h1.3M1133 421h1.3M1138 416h1.3M1143 411h1.3M1147 406h1.3M1152 402h1.3M1157 397h1.3M1161 392h1.3M1166 387h1.3M1170 382h1.3M1175 378h1.3M1179 373h1.3M1183 368h1.3M1188 364h1.3M1192 359h1.3M645 957h1.3M654 947h1.3M663 938h1.3M672 928h1.3M681 919h1.3M689 910h1.3M698 901h1.3M706 892h1.3M714 883h1.3M723 874h1.3M731 865h1.3M739 856h1.3M747 848h1.3M755 839h1.3M763 831h1.3M770 822h1.3M778 814h1.3M786 806h1.3M793 798h1.3M801 790h1.3M808 782h1.3M816 774h1.3M823 766h1.3M830 758h1.3M837 751h1.3M844 743h1.3M851 735h1.3M858 728h1.3M865 720h1.3M872 713h1.3M879 706h1.3M886 699h1.3M893 691h1.3M899 684h1.3M906 677h1.3M912 670h1.3M919 663h1.3M925 656h1.3M931 650h1.3M938 643h1.3M944 636h1.3M950 630h1.3M956 623h1.3M962 616h1.3M968 610h1.3M974 603h1.3M980 597h1.3M986 591h1.3M992 584h1.3M998 578h1.3M1004 572h1.3M1009 566h1.3M1015 560h1.3M1021 554h1.3M1026 548h1.3M1032 542h1.3M1037 536h1.3M1043 530h1.3M1048 524h1.3M1054 519h1.3M1059 513h1.3M1064 507h1.3M1069 502h1.3M1075 496h1.3M1080 490h1.3M1085 485h1.3M1090 480h1.3M1095 474h1.3M1100 469h1.3M1105 463h1.3M1110 458h1.3M1115 453h1.3M1120 448h1.3M1125 442h1.3M1129 437h1.3M1134 432h1.3M1139 427h1.3M1143 422h1.3M1148 417h1.3M1153 412h1.3M1157 407h1.3M1162 402h1.3M1166 397h1.3M1171 393h1.3M1175 388h1.3M1180 383h1.3M1184 378h1.3M1189 374h1.3M1193 369h1.3M1197 364h1.3M1202 360h1.3M659 958h1.3M668 948h1.3M676 939h1.3M685 930h1.3M694 920h1.3M702 911h1.3M711 902h1.3M719 893h1.3M727 884h1.3M735 875h1.3M744 866h1.3M752 858h1.3M760 849h1.3M767 841h1.3M775 832h1.3M783 824h1.3M791 815h1.3M798 807h1.3M806 799h1.3M813 791h1.3M821 783h1.3M828 775h1.3M835 767h1.3M842 759h1.3M850 752h1.3M857 744h1.3M864 737h1.3M871 729h1.3M877 722h1.3M884 714h1.3M891 707h1.3M898 700h1.3M904 692h1.3M911 685h1.3M917 678h1.3M924 671h1.3M930 664h1.3M937 657h1.3M943 651h1.3M949 644h1.3M955 637h1.3M962 631h1.3M968 624h1.3M974 617h1.3M980 611h1.3M986 604h1.3M992 598h1.3M997 592h1.3M1003 585h1.3M1009 579h1.3M1015 573h1.3M1020 567h1.3M1026 561h1.3M1032 555h1.3M1037 549h1.3M1043 543h1.3M1048 537h1.3M1054 531h1.3M1059 525h1.3M1064 519h1.3M1069 514h1.3M1075 508h1.3M1080 502h1.3M1085 497h1.3M1090 491h1.3M1095 486h1.3M1100 480h1.3M1105 475h1.3M1110 470h1.3M1115 464h1.3M1120 459h1.3M1125 454h1.3M1130 448h1.3M1135 443h1.3M1139 438h1.3M1144 433h1.3M1149 428h1.3M1154 423h1.3M1158 418h1.3M1163 413h1.3M1167 408h1.3M1172 403h1.3M1176 398h1.3M1181 393h1.3M1185 389h1.3M1190 384h1.3M1194 379h1.3M1198 374h1.3M1203 370h1.3M1207 365h1.3M1211 361h1.3M672 959h1.3M681 950h1.3M690 940h1.3M699 931h1.3M707 922h1.3M715 912h1.3M724 903h1.3M732 894h1.3M740 885h1.3M748 876h1.3M757 868h1.3M765 859h1.3M772 850h1.3M780 842h1.3M788 833h1.3M796 825h1.3M803 817h1.3M811 808h1.3M818 800h1.3M826 792h1.3M833 784h1.3M840 776h1.3M847 768h1.3M855 761h1.3M862 753h1.3M869 745h1.3M876 738h1.3M883 730h1.3M889 723h1.3M896 715h1.3M903 708h1.3M910 701h1.3M916 694h1.3M923 686h1.3M929 679h1.3M936 672h1.3M942 665h1.3M948 659h1.3M954 652h1.3M961 645h1.3M967 638h1.3M973 632h1.3M979 625h1.3M985 618h1.3M991 612h1.3M997 605h1.3M1003 599h1.3M1009 593h1.3M1014 586h1.3M1020 580h1.3M1026 574h1.3M1031 568h1.3M1037 562h1.3M1043 556h1.3M1048 550h1.3M1053 544h1.3M1059 538h1.3M1064 532h1.3M1070 526h1.3M1075 520h1.3M1080 515h1.3M1085 509h1.3M1090 503h1.3M1096 498h1.3M1101 492h1.3M1106 487h1.3M1111 481h1.3M1116 476h1.3M1121 470h1.3M1126 465h1.3M1130 460h1.3M1135 454h1.3M1140 449h1.3M1145 444h1.3M1150 439h1.3M1154 434h1.3M1159 429h1.3M1164 424h1.3M1168 419h1.3M1173 414h1.3M1177 409h1.3M1182 404h1.3M1186 399h1.3M1191 394h1.3M1195 389h1.3M1199 385h1.3M1204 380h1.3M1208 375h1.3M1212 370h1.3M1216 366h1.3M1221 361h1.3M686 961h1.3M695 951h1.3M703 942h1.3M712 932h1.3M720 923h1.3M729 914h1.3M737 905h1.3M745 896h1.3M753 887h1.3M761 878h1.3M769 869h1.3M777 860h1.3M785 852h1.3M793 843h1.3M801 835h1.3M808 826h1.3M816 818h1.3M823 810h1.3M831 802h1.3M838 793h1.3M845 785h1.3M853 777h1.3M860 770h1.3M867 762h1.3M874 754h1.3M881 746h1.3M888 739h1.3M895 731h1.3M901 724h1.3M908 716h1.3M915 709h1.3M921 702h1.3M928 695h1.3M934 687h1.3M941 680h1.3M947 673h1.3M954 666h1.3M960 660h1.3M966 653h1.3M972 646h1.3M978 639h1.3M984 633h1.3M990 626h1.3M996 619h1.3M1002 613h1.3M1008 606h1.3M1014 600h1.3M1020 594h1.3M1025 587h1.3M1031 581h1.3M1037 575h1.3M1042 569h1.3M1048 563h1.3M1053 557h1.3M1059 551h1.3M1064 545h1.3M1070 539h1.3M1075 533h1.3M1080 527h1.3M1086 521h1.3M1091 515h1.3M1096 510h1.3M1101 504h1.3M1106 499h1.3M1111 493h1.3M1116 487h1.3M1121 482h1.3M1126 477h1.3M1131 471h1.3M1136 466h1.3M1141 460h1.3M1146 455h1.3M1150 450h1.3M1155 445h1.3M1160 440h1.3M1164 435h1.3M1169 429h1.3M1174 424h1.3M1178 419h1.3M1183 414h1.3M1187 409h1.3M1192 405h1.3M1196 400h1.3M1200 395h1.3M1205 390h1.3M1209 385h1.3M1213 381h1.3M1218 376h1.3M1222 371h1.3M1226 367h1.3M1230 362h1.3M699 962h1.3M708 953h1.3M717 943h1.3M725 934h1.3M734 924h1.3M742 915h1.3M750 906h1.3M758 897h1.3M766 888h1.3M775 879h1.3M782 870h1.3M790 862h1.3M798 853h1.3M806 844h1.3M813 836h1.3M821 827h1.3M829 819h1.3M836 811h1.3M843 803h1.3M851 795h1.3M858 787h1.3M865 779h1.3M872 771h1.3M879 763h1.3M886 755h1.3M893 748h1.3M900 740h1.3M907 732h1.3M913 725h1.3M920 718h1.3M927 710h1.3M933 703h1.3M940 696h1.3M946 689h1.3M953 681h1.3M959 674h1.3M965 667h1.3M971 661h1.3M978 654h1.3M984 647h1.3M990 640h1.3M996 634h1.3M1002 627h1.3M1008 620h1.3M1014 614h1.3M1019 607h1.3M1025 601h1.3M1031 595h1.3M1037 588h1.3M1042 582h1.3M1048 576h1.3M1053 570h1.3M1059 564h1.3M1064 557h1.3M1070 551h1.3M1075 545h1.3M1080 540h1.3M1086 534h1.3M1091 528h1.3M1096 522h1.3M1101 516h1.3M1107 511h1.3M1112 505h1.3M1117 499h1.3M1122 494h1.3M1127 488h1.3M1132 483h1.3M1137 477h1.3M1141 472h1.3M1146 467h1.3M1151 461h1.3M1156 456h1.3M1161 451h1.3M1165 446h1.3M1170 440h1.3M1174 435h1.3M1179 430h1.3M1184 425h1.3M1188 420h1.3M1193 415h1.3M1197 410h1.3M1201 405h1.3M1206 400h1.3M1210 396h1.3M1215 391h1.3M1219 386h1.3M1223 381h1.3M1227 377h1.3M1232 372h1.3M1236 367h1.3M1240 363h1.3M713 964h1.3M722 954h1.3M730 945h1.3M739 935h1.3M747 926h1.3M755 917h1.3M763 907h1.3M772 898h1.3M780 889h1.3M788 880h1.3M795 872h1.3M803 863h1.3M811 854h1.3M819 846h1.3M826 837h1.3M834 829h1.3M841 820h1.3M849 812h1.3M856 804h1.3M863 796h1.3M870 788h1.3M877 780h1.3M884 772h1.3M891 764h1.3M898 756h1.3M905 749h1.3M912 741h1.3M919 734h1.3M925 726h1.3M932 719h1.3M939 711h1.3M945 704h1.3M952 697h1.3M958 690h1.3M964 683h1.3M971 676h1.3M977 669h1.3M983 662h1.3M989 655h1.3M995 648h1.3M1001 641h1.3M1007 635h1.3M1013 628h1.3M1019 621h1.3M1025 615h1.3M1031 608h1.3M1036 602h1.3M1042 596h1.3M1048 589h1.3M1053 583h1.3M1059 577h1.3M1064 571h1.3M1070 564h1.3M1075 558h1.3M1081 552h1.3M1086 546h1.3M1091 540h1.3M1097 535h1.3M1102 529h1.3M1107 523h1.3M1112 517h1.3M1117 511h1.3M1122 506h1.3M1127 500h1.3M1132 495h1.3M1137 489h1.3M1142 484h1.3M1147 478h1.3M1152 473h1.3M1157 467h1.3M1161 462h1.3M1166 457h1.3M1171 452h1.3M1175 446h1.3M1180 441h1.3M1185 436h1.3M1189 431h1.3M1194 426h1.3M1198 421h1.3M1203 416h1.3M1207 411h1.3M1211 406h1.3M1216 401h1.3M1220 396h1.3M1224 391h1.3M1229 387h1.3M1233 382h1.3M1237 377h1.3M1241 373h1.3M1245 368h1.3M1250 363h1.3M727 965h1.3M735 956h1.3M744 946h1.3M752 937h1.3M760 927h1.3M769 918h1.3M777 909h1.3M785 900h1.3M793 891h1.3M801 882h1.3M808 873h1.3M816 864h1.3M824 856h1.3M831 847h1.3M839 838h1.3M846 830h1.3M854 822h1.3M861 813h1.3M868 805h1.3M876 797h1.3M883 789h1.3M890 781h1.3M897 773h1.3M904 765h1.3M911 758h1.3M917 750h1.3M924 742h1.3M931 735h1.3M938 727h1.3M944 720h1.3M951 712h1.3M957 705h1.3M963 698h1.3M970 691h1.3M976 684h1.3M982 677h1.3M989 670h1.3M995 663h1.3M1001 656h1.3M1007 649h1.3M1013 642h1.3M1019 636h1.3M1025 629h1.3M1030 622h1.3M1036 616h1.3M1042 609h1.3M1048 603h1.3M1053 596h1.3M1059 590h1.3M1064 584h1.3M1070 578h1.3M1075 571h1.3M1081 565h1.3M1086 559h1.3M1092 553h1.3M1097 547h1.3M1102 541h1.3M1107 535h1.3M1113 530h1.3M1118 524h1.3M1123 518h1.3M1128 512h1.3M1133 507h1.3M1138 501h1.3M1143 495h1.3M1148 490h1.3M1153 484h1.3M1157 479h1.3M1162 474h1.3M1167 468h1.3M1172 463h1.3M1176 458h1.3M1181 452h1.3M1186 447h1.3M1190 442h1.3M1195 437h1.3M1199 432h1.3M1204 427h1.3M1208 422h1.3M1213 417h1.3M1217 412h1.3M1221 407h1.3M1226 402h1.3M1230 397h1.3M1234 392h1.3M1238 387h1.3M1243 383h1.3M1247 378h1.3M1251 373h1.3M1255 369h1.3M1259 364h1.3M740 967h1.3M749 957h1.3M757 947h1.3M765 938h1.3M774 929h1.3M782 919h1.3M790 910h1.3M798 901h1.3M806 892h1.3M814 883h1.3M821 874h1.3M829 865h1.3M837 857h1.3M844 848h1.3M852 840h1.3M859 831h1.3M867 823h1.3M874 815h1.3M881 806h1.3M888 798h1.3M895 790h1.3M902 782h1.3M909 774h1.3M916 766h1.3M923 759h1.3M930 751h1.3M936 743h1.3M943 736h1.3M950 728h1.3M956 721h1.3M963 714h1.3M969 706h1.3M975 699h1.3M982 692h1.3M988 685h1.3M994 678h1.3M1000 671h1.3M1006 664h1.3M1012 657h1.3M1018 650h1.3M1024 643h1.3M1030 637h1.3M1036 630h1.3M1042 623h1.3M1048 617h1.3M1053 610h1.3M1059 604h1.3M1065 597h1.3M1070 591h1.3M1076 585h1.3M1081 579h1.3M1086 572h1.3M1092 566h1.3M1097 560h1.3M1103 554h1.3M1108 548h1.3M1113 542h1.3M1118 536h1.3M1123 530h1.3M1128 525h1.3M1133 519h1.3M1138 513h1.3M1143 508h1.3M1148 502h1.3M1153 496h1.3M1158 491h1.3M1163 485h1.3M1168 480h1.3M1173 474h1.3M1177 469h1.3M1182 464h1.3M1187 458h1.3M1191 453h1.3M1196 448h1.3M1200 443h1.3M1205 438h1.3M1209 432h1.3M1214 427h1.3M1218 422h1.3M1223 417h1.3M1227 412h1.3M1231 407h1.3M1236 403h1.3M1240 398h1.3M1244 393h1.3M1248 388h1.3M1252 383h1.3M1257 379h1.3M1261 374h1.3M1265 369h1.3M1269 365h1.3M754 968h1.3M762 959h1.3M771 949h1.3M779 939h1.3M787 930h1.3M795 921h1.3M803 912h1.3M811 902h1.3M819 893h1.3M827 884h1.3M834 876h1.3M842 867h1.3M850 858h1.3M857 849h1.3M865 841h1.3M872 833h1.3M879 824h1.3M886 816h1.3M894 808h1.3M901 799h1.3M908 791h1.3M915 783h1.3M922 776h1.3M928 768h1.3M935 760h1.3M942 752h1.3M949 745h1.3M955 737h1.3M962 729h1.3M968 722h1.3M975 715h1.3M981 707h1.3M987 700h1.3M994 693h1.3M1000 686h1.3M1006 679h1.3M1012 672h1.3M1018 665h1.3M1024 658h1.3M1030 651h1.3M1036 644h1.3M1042 638h1.3M1047 631h1.3M1053 624h1.3M1059 618h1.3M1065 611h1.3M1070 605h1.3M1076 598h1.3M1081 592h1.3M1087 586h1.3M1092 580h1.3M1098 573h1.3M1103 567h1.3M1108 561h1.3M1113 555h1.3M1119 549h1.3M1124 543h1.3M1129 537h1.3M1134 531h1.3M1139 526h1.3M1144 520h1.3M1149 514h1.3M1154 508h1.3M1159 503h1.3M1164 497h1.3M1169 492h1.3M1173 486h1.3M1178 481h1.3M1183 475h1.3M1188 470h1.3M1192 464h1.3M1197 459h1.3M1201 454h1.3M1206 449h1.3M1211 444h1.3M1215 438h1.3M1219 433h1.3M1224 428h1.3M1228 423h1.3M1233 418h1.3M1237 413h1.3M1241 408h1.3M1246 403h1.3M1250 398h1.3M1254 394h1.3M1258 389h1.3M1262 384h1.3M1266 379h1.3M1270 375h1.3M1275 370h1.3M1279 365h1.3M768 970h1.3M776 960h1.3M784 950h1.3M792 941h1.3M801 931h1.3M809 922h1.3M816 913h1.3M824 904h1.3M832 895h1.3M840 886h1.3M848 877h1.3M855 868h1.3M863 859h1.3M870 851h1.3M877 842h1.3M885 834h1.3M892 825h1.3M899 817h1.3M906 809h1.3M913 801h1.3M920 793h1.3M927 785h1.3M934 777h1.3M941 769h1.3M948 761h1.3M954 753h1.3M961 746h1.3M967 738h1.3M974 731h1.3M980 723h1.3M987 716h1.3M993 708h1.3M999 701h1.3M1005 694h1.3M1012 687h1.3M1018 680h1.3M1024 673h1.3M1030 666h1.3M1036 659h1.3M1042 652h1.3M1047 645h1.3M1053 639h1.3M1059 632h1.3M1065 625h1.3M1070 619h1.3M1076 612h1.3M1081 606h1.3M1087 599h1.3M1092 593h1.3M1098 587h1.3M1103 580h1.3M1109 574h1.3M1114 568h1.3M1119 562h1.3M1124 556h1.3M1130 550h1.3M1135 544h1.3M1140 538h1.3M1145 532h1.3M1150 526h1.3M1155 521h1.3M1160 515h1.3M1165 509h1.3M1170 504h1.3M1174 498h1.3M1179 492h1.3M1184 487h1.3M1189 481h1.3M1193 476h1.3M1198 471h1.3M1203 465h1.3M1207 460h1.3M1212 455h1.3M1216 449h1.3M1221 444h1.3M1225 439h1.3M1230 434h1.3M1234 429h1.3M1238 424h1.3M1243 419h1.3M1247 414h1.3M1251 409h1.3M1255 404h1.3M1260 399h1.3M1264 394h1.3M1268 390h1.3M1272 385h1.3M1276 380h1.3M1280 375h1.3M1284 371h1.3M1288 366h1.3M781 971h1.3M790 961h1.3M798 952h1.3M806 942h1.3M814 933h1.3M822 924h1.3M830 914h1.3M838 905h1.3M845 896h1.3M853 887h1.3M861 878h1.3M868 869h1.3M876 861h1.3M883 852h1.3M890 844h1.3M898 835h1.3M905 827h1.3M912 818h1.3M919 810h1.3M926 802h1.3M933 794h1.3M940 786h1.3M946 778h1.3M953 770h1.3M960 762h1.3M966 754h1.3M973 747h1.3M979 739h1.3M986 732h1.3M992 724h1.3M999 717h1.3M1005 710h1.3M1011 702h1.3M1017 695h1.3M1023 688h1.3M1029 681h1.3M1035 674h1.3M1041 667h1.3M1047 660h1.3M1053 653h1.3M1059 646h1.3M1065 640h1.3M1070 633h1.3M1076 626h1.3M1082 620h1.3M1087 613h1.3M1093 607h1.3M1098 600h1.3M1104 594h1.3M1109 588h1.3M1114 581h1.3M1120 575h1.3M1125 569h1.3M1130 563h1.3M1135 557h1.3M1141 551h1.3M1146 545h1.3M1151 539h1.3M1156 533h1.3M1161 527h1.3M1166 522h1.3M1171 516h1.3M1175 510h1.3M1180 504h1.3M1185 499h1.3M1190 493h1.3M1194 488h1.3M1199 482h1.3M1204 477h1.3M1208 471h1.3M1213 466h1.3M1218 461h1.3M1222 456h1.3M1227 450h1.3M1231 445h1.3M1235 440h1.3M1240 435h1.3M1244 430h1.3M1248 425h1.3M1253 420h1.3M1257 415h1.3M1261 410h1.3M1265 405h1.3M1270 400h1.3M1274 395h1.3M1278 390h1.3M1282 386h1.3M1286 381h1.3M1290 376h1.3M1294 371h1.3M1298 367h1.3M795 973h1.3M803 963h1.3M811 953h1.3M819 944h1.3M827 934h1.3M835 925h1.3M843 916h1.3M851 907h1.3M859 897h1.3M866 888h1.3M874 880h1.3M881 871h1.3M889 862h1.3M896 853h1.3M903 845h1.3M910 836h1.3M917 828h1.3M925 820h1.3M932 811h1.3M938 803h1.3M945 795h1.3M952 787h1.3M959 779h1.3M966 771h1.3M972 763h1.3M979 756h1.3M985 748h1.3M992 740h1.3M998 733h1.3M1004 725h1.3M1011 718h1.3M1017 711h1.3M1023 703h1.3M1029 696h1.3M1035 689h1.3M1041 682h1.3M1047 675h1.3M1053 668h1.3M1059 661h1.3M1065 654h1.3M1071 647h1.3M1076 641h1.3M1082 634h1.3M1088 627h1.3M1093 621h1.3M1099 614h1.3M1104 608h1.3M1110 601h1.3M1115 595h1.3M1120 589h1.3M1126 582h1.3M1131 576h1.3M1136 570h1.3M1141 564h1.3M1146 558h1.3M1151 552h1.3M1157 546h1.3M1162 540h1.3M1166 534h1.3M1171 528h1.3M1176 522h1.3M1181 517h1.3M1186 511h1.3M1191 505h1.3M1196 500h1.3M1200 494h1.3M1205 489h1.3M1210 483h1.3M1214 478h1.3M1219 472h1.3M1223 467h1.3M1228 462h1.3M1232 456h1.3M1237 451h1.3M1241 446h1.3M1246 441h1.3M1250 436h1.3M1254 430h1.3M1258 425h1.3M1263 420h1.3M1267 415h1.3M1271 410h1.3M1275 406h1.3M1279 401h1.3M1284 396h1.3M1288 391h1.3M1292 386h1.3M1296 382h1.3M1300 377h1.3M1304 372h1.3M1308 367h1.3M809 974h1.3M817 964h1.3M825 955h1.3M833 945h1.3M841 936h1.3M849 926h1.3M856 917h1.3M864 908h1.3M872 899h1.3M879 890h1.3M887 881h1.3M894 872h1.3M902 863h1.3M909 855h1.3M916 846h1.3M923 838h1.3M930 829h1.3M937 821h1.3M944 813h1.3M951 804h1.3M958 796h1.3M965 788h1.3M971 780h1.3M978 772h1.3M985 765h1.3M991 757h1.3M997 749h1.3M1004 742h1.3M1010 734h1.3M1016 726h1.3M1023 719h1.3M1029 712h1.3M1035 704h1.3M1041 697h1.3M1047 690h1.3M1053 683h1.3M1059 676h1.3M1065 669h1.3M1071 662h1.3M1076 655h1.3M1082 648h1.3M1088 642h1.3M1093 635h1.3M1099 628h1.3M1104 622h1.3M1110 615h1.3M1115 609h1.3M1121 602h1.3M1126 596h1.3M1131 590h1.3M1137 583h1.3M1142 577h1.3M1147 571h1.3M1152 565h1.3M1157 559h1.3M1162 553h1.3M1167 547h1.3M1172 541h1.3M1177 535h1.3M1182 529h1.3M1187 523h1.3M1192 518h1.3M1197 512h1.3M1201 506h1.3M1206 501h1.3M1211 495h1.3M1215 489h1.3M1220 484h1.3M1225 478h1.3M1229 473h1.3M1234 468h1.3M1238 462h1.3M1243 457h1.3M1247 452h1.3M1251 447h1.3M1256 441h1.3M1260 436h1.3M1264 431h1.3M1269 426h1.3M1273 421h1.3M1277 416h1.3M1281 411h1.3M1285 406h1.3M1289 401h1.3M1293 397h1.3M1297 392h1.3M1302 387h1.3M1305 382h1.3M1309 378h1.3M1313 373h1.3M1317 368h1.3M822 976h1.3M830 966h1.3M839 956h1.3M846 947h1.3M854 937h1.3M862 928h1.3M870 918h1.3M877 909h1.3M885 900h1.3M893 891h1.3M900 882h1.3M907 873h1.3M915 865h1.3M922 856h1.3M929 847h1.3M936 839h1.3M943 830h1.3M950 822h1.3M957 814h1.3M964 806h1.3M970 797h1.3M977 789h1.3M984 781h1.3M990 774h1.3M997 766h1.3M1003 758h1.3M1010 750h1.3M1016 743h1.3M1022 735h1.3M1029 728h1.3M1035 720h1.3M1041 713h1.3M1047 706h1.3M1053 698h1.3M1059 691h1.3M1065 684h1.3M1071 677h1.3M1077 670h1.3M1082 663h1.3M1088 656h1.3M1094 649h1.3M1099 643h1.3M1105 636h1.3M1110 629h1.3M1116 623h1.3M1121 616h1.3M1127 610h1.3M1132 603h1.3M1137 597h1.3M1143 590h1.3M1148 584h1.3M1153 578h1.3M1158 572h1.3M1163 566h1.3M1168 560h1.3M1173 554h1.3M1178 548h1.3M1183 542h1.3M1188 536h1.3M1193 530h1.3M1198 524h1.3M1203 518h1.3M1207 513h1.3M1212 507h1.3M1217 501h1.3M1221 496h1.3M1226 490h1.3M1231 485h1.3M1235 479h1.3M1240 474h1.3M1244 469h1.3M1249 463h1.3M1253 458h1.3M1257 453h1.3M1262 447h1.3M1266 442h1.3M1270 437h1.3M1274 432h1.3M1279 427h1.3M1283 422h1.3M1287 417h1.3M1291 412h1.3M1295 407h1.3M1299 402h1.3M1303 397h1.3M1307 392h1.3M1311 388h1.3M1315 383h1.3M1319 378h1.3M1323 374h1.3M1327 369h1.3M836 977h1.3M844 967h1.3M852 958h1.3M860 948h1.3M868 939h1.3M876 929h1.3M883 920h1.3M891 911h1.3M898 902h1.3M906 893h1.3M913 884h1.3M920 875h1.3M928 866h1.3M935 857h1.3M942 849h1.3M949 840h1.3M956 832h1.3M963 823h1.3M970 815h1.3M976 807h1.3M983 799h1.3M990 791h1.3M996 783h1.3M1003 775h1.3M1009 767h1.3M1016 759h1.3M1022 751h1.3M1028 744h1.3M1035 736h1.3M1041 729h1.3M1047 721h1.3M1053 714h1.3M1059 707h1.3M1065 699h1.3M1071 692h1.3M1077 685h1.3M1083 678h1.3M1088 671h1.3M1094 664h1.3M1100 657h1.3M1105 650h1.3M1111 644h1.3M1116 637h1.3M1122 630h1.3M1127 624h1.3M1133 617h1.3M1138 611h1.3M1143 604h1.3M1149 598h1.3M1154 591h1.3M1159 585h1.3M1164 579h1.3M1169 573h1.3M1174 567h1.3M1179 561h1.3M1184 554h1.3M1189 548h1.3M1194 543h1.3M1199 537h1.3M1204 531h1.3M1209 525h1.3M1213 519h1.3M1218 514h1.3M1223 508h1.3M1227 502h1.3M1232 497h1.3M1237 491h1.3M1241 486h1.3M1246 480h1.3M1250 475h1.3M1255 469h1.3M1259 464h1.3M1263 459h1.3M1268 453h1.3M1272 448h1.3M1276 443h1.3M1280 438h1.3M1285 433h1.3M1289 428h1.3M1293 423h1.3M1297 418h1.3M1301 413h1.3M1305 408h1.3M1309 403h1.3M1313 398h1.3M1317 393h1.3M1321 388h1.3M1325 384h1.3M1329 379h1.3M1333 374h1.3M1337 370h1.3M850 978h1.3M858 969h1.3M866 959h1.3M874 949h1.3M881 940h1.3M889 931h1.3M897 921h1.3M904 912h1.3M912 903h1.3M919 894h1.3M926 885h1.3M934 876h1.3M941 867h1.3M948 859h1.3M955 850h1.3M962 841h1.3M969 833h1.3M976 825h1.3M982 816h1.3M989 808h1.3M996 800h1.3M1002 792h1.3M1009 784h1.3M1015 776h1.3M1022 768h1.3M1028 760h1.3M1034 753h1.3M1041 745h1.3M1047 737h1.3M1053 730h1.3M1059 722h1.3M1065 715h1.3M1071 708h1.3M1077 700h1.3M1083 693h1.3M1089 686h1.3M1094 679h1.3M1100 672h1.3M1106 665h1.3M1111 658h1.3M1117 651h1.3M1122 645h1.3M1128 638h1.3M1133 631h1.3M1139 625h1.3M1144 618h1.3M1149 612h1.3M1155 605h1.3M1160 599h1.3M1165 592h1.3M1170 586h1.3M1175 580h1.3M1180 574h1.3M1185 568h1.3M1190 561h1.3M1195 555h1.3M1200 549h1.3M1205 543h1.3M1210 538h1.3M1215 532h1.3M1219 526h1.3M1224 520h1.3M1229 514h1.3M1233 509h1.3M1238 503h1.3M1243 497h1.3M1247 492h1.3M1252 486h1.3M1256 481h1.3M1261 476h1.3M1265 470h1.3M1269 465h1.3M1274 459h1.3M1278 454h1.3M1282 449h1.3M1286 444h1.3M1291 439h1.3M1295 434h1.3M1299 428h1.3M1303 423h1.3M1307 418h1.3M1311 413h1.3M1315 409h1.3M1319 404h1.3M1323 399h1.3M1327 394h1.3M1331 389h1.3M1335 384h1.3M1339 380h1.3M1343 375h1.3M1346 370h1.3M864 980h1.3M872 970h1.3M879 960h1.3M887 951h1.3M895 941h1.3M903 932h1.3M910 923h1.3M918 913h1.3M925 904h1.3M932 895h1.3M939 886h1.3M947 877h1.3M954 869h1.3M961 860h1.3M968 851h1.3M975 843h1.3M982 834h1.3M988 826h1.3M995 818h1.3M1002 809h1.3M1008 801h1.3M1015 793h1.3M1021 785h1.3M1028 777h1.3M1034 769h1.3M1040 761h1.3M1047 754h1.3M1053 746h1.3M1059 738h1.3M1065 731h1.3M1071 724h1.3M1077 716h1.3M1083 709h1.3M1089 702h1.3M1095 694h1.3M1100 687h1.3M1106 680h1.3M1112 673h1.3M1117 666h1.3M1123 659h1.3M1129 652h1.3M1134 646h1.3M1140 639h1.3M1145 632h1.3M1150 626h1.3M1156 619h1.3M1161 613h1.3M1166 606h1.3M1171 600h1.3M1176 593h1.3M1181 587h1.3M1187 581h1.3M1192 575h1.3M1196 568h1.3M1201 562h1.3M1206 556h1.3M1211 550h1.3M1216 544h1.3M1221 538h1.3M1226 533h1.3M1230 527h1.3M1235 521h1.3M1240 515h1.3M1244 510h1.3M1249 504h1.3M1253 498h1.3M1258 493h1.3M1262 487h1.3M1267 482h1.3M1271 476h1.3M1275 471h1.3M1280 466h1.3M1284 460h1.3M1288 455h1.3M1292 450h1.3M1297 445h1.3M1301 439h1.3M1305 434h1.3M1309 429h1.3M1313 424h1.3M1317 419h1.3M1321 414h1.3M1325 409h1.3M1329 404h1.3M1333 399h1.3M1337 395h1.3M1341 390h1.3M1345 385h1.3M1349 380h1.3M1352 376h1.3M1356 371h1.3M878 981h1.3M885 972h1.3M893 962h1.3M901 952h1.3M908 943h1.3M916 933h1.3M924 924h1.3M931 915h1.3M938 906h1.3M946 897h1.3M953 888h1.3M960 879h1.3M967 870h1.3M974 861h1.3M981 853h1.3M988 844h1.3M994 836h1.3M1001 827h1.3M1008 819h1.3M1014 811h1.3M1021 802h1.3M1027 794h1.3M1034 786h1.3M1040 778h1.3M1047 770h1.3M1053 763h1.3M1059 755h1.3M1065 747h1.3M1071 740h1.3M1077 732h1.3M1083 725h1.3M1089 717h1.3M1095 710h1.3M1101 703h1.3M1107 695h1.3M1112 688h1.3M1118 681h1.3M1124 674h1.3M1129 667h1.3M1135 660h1.3M1140 653h1.3M1146 647h1.3M1151 640h1.3M1156 633h1.3M1162 627h1.3M1167 620h1.3M1172 614h1.3M1177 607h1.3M1183 601h1.3M1188 594h1.3M1193 588h1.3M1198 582h1.3M1203 576h1.3M1208 569h1.3M1212 563h1.3M1217 557h1.3M1222 551h1.3M1227 545h1.3M1232 539h1.3M1236 533h1.3M1241 528h1.3M1246 522h1.3M1250 516h1.3M1255 510h1.3M1259 505h1.3M1264 499h1.3M1268 494h1.3M1273 488h1.3M1277 483h1.3M1281 477h1.3M1286 472h1.3M1290 466h1.3M1294 461h1.3M1299 456h1.3M1303 451h1.3M1307 445h1.3M1311 440h1.3M1315 435h1.3M1319 430h1.3M1323 425h1.3M1327 420h1.3M1331 415h1.3M1335 410h1.3M1339 405h1.3M1343 400h1.3M1347 395h1.3M1351 391h1.3M1355 386h1.3M1358 381h1.3M1362 376h1.3M1366 372h1.3M891 983h1.3M899 973h1.3M907 963h1.3M915 954h1.3M922 944h1.3M930 935h1.3M937 925h1.3M944 916h1.3M952 907h1.3M959 898h1.3M966 889h1.3M973 880h1.3M980 871h1.3M987 862h1.3M994 854h1.3M1001 845h1.3M1007 837h1.3M1014 828h1.3M1021 820h1.3M1027 812h1.3M1034 804h1.3M1040 795h1.3M1046 787h1.3M1053 780h1.3M1059 772h1.3M1065 764h1.3M1071 756h1.3M1077 748h1.3M1083 741h1.3M1089 733h1.3M1095 726h1.3M1101 718h1.3M1107 711h1.3M1113 704h1.3M1119 697h1.3M1124 689h1.3M1130 682h1.3M1135 675h1.3M1141 668h1.3M1146 661h1.3M1152 654h1.3M1157 648h1.3M1163 641h1.3M1168 634h1.3M1173 628h1.3M1178 621h1.3M1184 615h1.3M1189 608h1.3M1194 602h1.3M1199 595h1.3M1204 589h1.3M1209 583h1.3M1214 576h1.3M1219 570h1.3M1224 564h1.3M1228 558h1.3M1233 552h1.3M1238 546h1.3M1243 540h1.3M1247 534h1.3M1252 528h1.3M1256 523h1.3M1261 517h1.3M1266 511h1.3M1270 506h1.3M1274 500h1.3M1279 494h1.3M1283 489h1.3M1288 483h1.3M1292 478h1.3M1296 473h1.3M1300 467h1.3M1305 462h1.3M1309 457h1.3M1313 451h1.3M1317 446h1.3M1321 441h1.3M1325 436h1.3M1329 431h1.3M1333 426h1.3M1337 421h1.3M1341 416h1.3M1345 411h1.3M1349 406h1.3M1353 401h1.3M1357 396h1.3M1361 391h1.3M1364 387h1.3M1368 382h1.3M1372 377h1.3M1376 372h1.3M905 984h1.3M913 975h1.3M921 965h1.3M928 955h1.3M936 946h1.3M943 936h1.3M950 927h1.3M958 918h1.3M965 908h1.3M972 899h1.3M979 890h1.3M986 881h1.3M993 873h1.3M1000 864h1.3M1007 855h1.3M1014 847h1.3M1020 838h1.3M1027 830h1.3M1033 821h1.3M1040 813h1.3M1046 805h1.3M1053 797h1.3M1059 789h1.3M1065 781h1.3M1071 773h1.3M1078 765h1.3M1084 757h1.3M1090 750h1.3M1096 742h1.3M1102 734h1.3M1108 727h1.3M1113 719h1.3M1119 712h1.3M1125 705h1.3M1131 698h1.3M1136 690h1.3M1142 683h1.3M1147 676h1.3M1153 669h1.3M1158 662h1.3M1164 655h1.3M1169 649h1.3M1174 642h1.3M1180 635h1.3M1185 629h1.3M1190 622h1.3M1195 615h1.3M1200 609h1.3M1205 603h1.3M1210 596h1.3M1215 590h1.3M1220 584h1.3M1225 577h1.3M1230 571h1.3M1235 565h1.3M1239 559h1.3M1244 553h1.3M1249 547h1.3M1253 541h1.3M1258 535h1.3M1263 529h1.3M1267 524h1.3M1272 518h1.3M1276 512h1.3M1281 506h1.3M1285 501h1.3M1289 495h1.3M1294 490h1.3M1298 484h1.3M1302 479h1.3M1307 473h1.3M1311 468h1.3M1315 463h1.3M1319 457h1.3M1323 452h1.3M1327 447h1.3M1332 442h1.3M1336 437h1.3M1340 432h1.3M1344 426h1.3M1347 421h1.3M1351 416h1.3M1355 411h1.3M1359 407h1.3M1363 402h1.3M1367 397h1.3M1371 392h1.3M1374 387h1.3M1378 382h1.3M1382 378h1.3M1385 373h1.3M919 986h1.3M927 976h1.3M934 966h1.3M942 957h1.3M949 947h1.3M957 938h1.3M964 928h1.3M971 919h1.3M978 910h1.3M985 901h1.3M992 892h1.3M999 883h1.3M1006 874h1.3M1013 865h1.3M1020 856h1.3M1027 848h1.3M1033 839h1.3M1040 831h1.3M1046 823h1.3M1053 814h1.3M1059 806h1.3M1065 798h1.3M1072 790h1.3M1078 782h1.3M1084 774h1.3M1090 766h1.3M1096 758h1.3M1102 751h1.3M1108 743h1.3M1114 735h1.3M1120 728h1.3M1126 721h1.3M1131 713h1.3M1137 706h1.3M1143 699h1.3M1148 691h1.3M1154 684h1.3M1159 677h1.3M1165 670h1.3M1170 663h1.3M1175 657h1.3M1181 650h1.3M1186 643h1.3M1191 636h1.3M1196 630h1.3M1201 623h1.3M1206 616h1.3M1212 610h1.3M1217 604h1.3M1222 597h1.3M1226 591h1.3M1231 585h1.3M1236 578h1.3M1241 572h1.3M1246 566h1.3M1250 560h1.3M1255 554h1.3M1260 548h1.3M1264 542h1.3M1269 536h1.3M1274 530h1.3M1278 524h1.3M1283 519h1.3M1287 513h1.3M1291 507h1.3M1296 502h1.3M1300 496h1.3M1304 491h1.3M1309 485h1.3M1313 480h1.3M1317 474h1.3M1321 469h1.3M1325 463h1.3M1330 458h1.3M1334 453h1.3M1338 448h1.3M1342 443h1.3M1346 437h1.3M1350 432h1.3M1354 427h1.3M1358 422h1.3M1362 417h1.3M1365 412h1.3M1369 407h1.3M1373 402h1.3M1377 398h1.3M1381 393h1.3M1384 388h1.3M1388 383h1.3M1392 378h1.3M1395 374h1.3M933 987h1.3M941 978h1.3M948 968h1.3M956 958h1.3M963 948h1.3M970 939h1.3M978 930h1.3M985 920h1.3M992 911h1.3M999 902h1.3M1006 893h1.3M1013 884h1.3M1019 875h1.3M1026 866h1.3M1033 858h1.3M1040 849h1.3M1046 841h1.3M1053 832h1.3M1059 824h1.3M1065 815h1.3M1072 807h1.3M1078 799h1.3M1084 791h1.3M1090 783h1.3M1096 775h1.3M1103 767h1.3M1108 760h1.3M1114 752h1.3M1120 744h1.3M1126 737h1.3M1132 729h1.3M1138 722h1.3M1143 714h1.3M1149 707h1.3M1155 700h1.3M1160 693h1.3M1166 685h1.3M1171 678h1.3M1176 671h1.3M1182 664h1.3M1187 658h1.3M1192 651h1.3M1198 644h1.3M1203 637h1.3M1208 631h1.3M1213 624h1.3M1218 617h1.3M1223 611h1.3M1228 605h1.3M1233 598h1.3M1238 592h1.3M1243 586h1.3M1247 579h1.3M1252 573h1.3M1257 567h1.3M1262 561h1.3M1266 555h1.3M1271 549h1.3M1275 543h1.3M1280 537h1.3M1284 531h1.3M1289 525h1.3M1293 520h1.3M1298 514h1.3M1302 508h1.3M1306 503h1.3M1311 497h1.3M1315 491h1.3M1319 486h1.3M1323 480h1.3M1328 475h1.3M1332 470h1.3M1336 464h1.3M1340 459h1.3M1344 454h1.3M1348 449h1.3M1352 443h1.3M1356 438h1.3M1360 433h1.3M1364 428h1.3M1368 423h1.3M1372 418h1.3M1375 413h1.3M1379 408h1.3M1383 403h1.3M1387 398h1.3M1390 393h1.3M1394 389h1.3M1398 384h1.3M1401 379h1.3M1405 375h1.3M947 989h1.3M954 979h1.3M962 969h1.3M969 960h1.3M977 950h1.3M984 940h1.3M991 931h1.3M998 922h1.3M1005 913h1.3M1012 903h1.3M1019 894h1.3M1026 885h1.3M1033 877h1.3M1039 868h1.3M1046 859h1.3M1053 850h1.3M1059 842h1.3M1065 833h1.3M1072 825h1.3M1078 817h1.3M1084 809h1.3M1091 800h1.3M1097 792h1.3M1103 784h1.3M1109 776h1.3M1115 768h1.3M1121 761h1.3M1127 753h1.3M1133 745h1.3M1138 738h1.3M1144 730h1.3M1150 723h1.3M1155 715h1.3M1161 708h1.3M1167 701h1.3M1172 694h1.3M1177 687h1.3M1183 679h1.3M1188 672h1.3M1194 665h1.3M1199 659h1.3M1204 652h1.3M1209 645h1.3M1214 638h1.3M1219 632h1.3M1224 625h1.3M1229 618h1.3M1234 612h1.3M1239 605h1.3M1244 599h1.3M1249 593h1.3M1254 586h1.3M1259 580h1.3M1263 574h1.3M1268 568h1.3M1273 562h1.3M1277 556h1.3M1282 550h1.3M1286 544h1.3M1291 538h1.3M1295 532h1.3M1300 526h1.3M1304 520h1.3M1308 515h1.3M1313 509h1.3M1317 503h1.3M1321 498h1.3M1326 492h1.3M1330 487h1.3M1334 481h1.3M1338 476h1.3M1342 470h1.3M1346 465h1.3M1350 460h1.3M1354 455h1.3M1358 449h1.3M1362 444h1.3M1366 439h1.3M1370 434h1.3M1374 429h1.3M1378 424h1.3M1382 419h1.3M1385 414h1.3M1389 409h1.3M1393 404h1.3M1397 399h1.3M1400 394h1.3M1404 389h1.3M1408 385h1.3M1411 380h1.3M1415 375h1.3M961 990h1.3M968 980h1.3M976 971h1.3M983 961h1.3M990 951h1.3M998 942h1.3M1005 932h1.3M1012 923h1.3M1019 914h1.3M1026 905h1.3M1032 896h1.3M1039 887h1.3M1046 878h1.3M1052 869h1.3M1059 860h1.3M1066 852h1.3M1072 843h1.3M1078 835h1.3M1085 826h1.3M1091 818h1.3M1097 810h1.3M1103 802h1.3M1109 793h1.3M1116 785h1.3M1122 778h1.3M1127 770h1.3M1133 762h1.3M1139 754h1.3M1145 746h1.3M1151 739h1.3M1156 731h1.3M1162 724h1.3M1168 717h1.3M1173 709h1.3M1179 702h1.3M1184 695h1.3M1189 688h1.3M1195 681h1.3M1200 673h1.3M1205 667h1.3M1211 660h1.3M1216 653h1.3M1221 646h1.3M1226 639h1.3M1231 633h1.3M1236 626h1.3M1241 619h1.3M1246 613h1.3M1251 606h1.3M1256 600h1.3M1260 594h1.3M1265 587h1.3M1270 581h1.3M1274 575h1.3M1279 569h1.3M1284 563h1.3M1288 557h1.3M1293 551h1.3M1297 545h1.3M1302 539h1.3M1306 533h1.3M1311 527h1.3M1315 521h1.3M1319 516h1.3M1324 510h1.3M1328 504h1.3M1332 499h1.3M1336 493h1.3M1340 488h1.3M1345 482h1.3M1349 477h1.3M1353 471h1.3M1357 466h1.3M1361 461h1.3M1365 455h1.3M1369 450h1.3M1373 445h1.3M1377 440h1.3M1380 435h1.3M1384 430h1.3M1388 424h1.3M1392 419h1.3M1396 414h1.3M1399 410h1.3M1403 405h1.3M1407 400h1.3M1410 395h1.3M1414 390h1.3M1418 385h1.3M1421 381h1.3M1425 376h1.3M975 992h1.3M982 982h1.3M990 972h1.3M997 962h1.3M1004 953h1.3M1011 943h1.3M1018 934h1.3M1025 925h1.3M1032 915h1.3M1039 906h1.3M1046 897h1.3M1052 888h1.3M1059 879h1.3M1066 870h1.3M1072 862h1.3M1079 853h1.3M1085 844h1.3M1091 836h1.3M1098 828h1.3M1104 819h1.3M1110 811h1.3M1116 803h1.3M1122 795h1.3M1128 787h1.3M1134 779h1.3M1140 771h1.3M1146 763h1.3M1152 755h1.3M1157 748h1.3M1163 740h1.3M1169 733h1.3M1174 725h1.3M1180 718h1.3M1185 710h1.3M1191 703h1.3M1196 696h1.3M1201 689h1.3M1207 682h1.3M1212 675h1.3M1217 668h1.3M1222 661h1.3M1227 654h1.3M1232 647h1.3M1238 640h1.3M1243 634h1.3M1247 627h1.3M1252 620h1.3M1257 614h1.3M1262 607h1.3M1267 601h1.3M1272 595h1.3M1276 588h1.3M1281 582h1.3M1286 576h1.3M1290 570h1.3M1295 564h1.3M1299 558h1.3M1304 552h1.3M1308 546h1.3M1313 540h1.3M1317 534h1.3M1321 528h1.3M1326 522h1.3M1330 516h1.3M1334 511h1.3M1339 505h1.3M1343 499h1.3M1347 494h1.3M1351 488h1.3M1355 483h1.3M1359 477h1.3M1363 472h1.3M1367 467h1.3M1371 461h1.3M1375 456h1.3M1379 451h1.3M1383 446h1.3M1387 440h1.3M1391 435h1.3M1394 430h1.3M1398 425h1.3M1402 420h1.3M1406 415h1.3M1409 410h1.3M1413 405h1.3M1417 400h1.3M1420 396h1.3M1424 391h1.3M1427 386h1.3M1431 381h1.3M1434 377h1.3M996 983h1.3M1003 974h1.3M1011 964h1.3M1018 954h1.3M1025 945h1.3M1032 935h1.3M1039 926h1.3M1046 917h1.3M1052 907h1.3M1059 898h1.3M1066 889h1.3M1072 881h1.3M1079 872h1.3M1085 863h1.3M1092 854h1.3M1098 846h1.3M1104 837h1.3M1111 829h1.3M1117 820h1.3M1123 812h1.3M1129 804h1.3M1135 796h1.3M1141 788h1.3M1147 780h1.3M1152 772h1.3M1158 764h1.3M1164 756h1.3M1170 749h1.3M1175 741h1.3M1181 734h1.3M1186 726h1.3M1192 719h1.3M1197 711h1.3M1203 704h1.3M1208 697h1.3M1213 690h1.3M1219 683h1.3M1224 676h1.3M1229 669h1.3M1234 662h1.3M1239 655h1.3M1244 648h1.3M1249 641h1.3M1254 635h1.3M1259 628h1.3M1264 621h1.3M1269 615h1.3M1273 608h1.3M1278 602h1.3M1283 596h1.3M1288 589h1.3M1292 583h1.3M1297 577h1.3M1301 571h1.3M1306 565h1.3M1310 558h1.3M1315 552h1.3M1319 546h1.3M1324 541h1.3M1328 535h1.3M1332 529h1.3M1337 523h1.3M1341 517h1.3M1345 512h1.3M1349 506h1.3M1353 500h1.3M1358 495h1.3M1362 489h1.3M1366 484h1.3M1370 478h1.3M1374 473h1.3M1378 468h1.3M1382 462h1.3M1385 457h1.3M1389 452h1.3M1393 446h1.3M1397 441h1.3M1401 436h1.3M1405 431h1.3M1408 426h1.3M1412 421h1.3M1416 416h1.3M1419 411h1.3M1423 406h1.3M1427 401h1.3M1430 396h1.3M1434 392h1.3M1437 387h1.3M1441 382h1.3M1444 377h1.3M1010 985h1.3M1017 975h1.3M1024 965h1.3M1032 956h1.3M1039 946h1.3M1045 937h1.3M1052 927h1.3M1059 918h1.3M1066 909h1.3M1072 900h1.3M1079 891h1.3M1086 882h1.3M1092 873h1.3M1098 864h1.3M1105 856h1.3M1111 847h1.3M1117 838h1.3M1123 830h1.3M1130 822h1.3M1136 813h1.3M1142 805h1.3M1148 797h1.3M1153 789h1.3M1159 781h1.3M1165 773h1.3M1171 765h1.3M1176 758h1.3M1182 750h1.3M1188 742h1.3M1193 735h1.3M1199 727h1.3M1204 720h1.3M1209 712h1.3M1215 705h1.3M1220 698h1.3M1225 691h1.3M1231 684h1.3M1236 677h1.3M1241 670h1.3M1246 663h1.3M1251 656h1.3M1256 649h1.3M1261 642h1.3M1266 636h1.3M1271 629h1.3M1275 622h1.3M1280 616h1.3M1285 609h1.3M1290 603h1.3M1294 597h1.3M1299 590h1.3M1304 584h1.3M1308 578h1.3M1313 572h1.3M1317 565h1.3M1321 559h1.3M1326 553h1.3M1330 547h1.3M1335 541h1.3M1339 536h1.3M1343 530h1.3M1347 524h1.3M1352 518h1.3M1356 512h1.3M1360 507h1.3M1364 501h1.3M1368 496h1.3M1372 490h1.3M1376 485h1.3M1380 479h1.3M1384 474h1.3M1388 468h1.3M1392 463h1.3M1396 458h1.3M1400 452h1.3M1404 447h1.3M1407 442h1.3M1411 437h1.3M1415 432h1.3M1419 427h1.3M1422 422h1.3M1426 417h1.3M1429 412h1.3M1433 407h1.3M1437 402h1.3M1440 397h1.3M1444 392h1.3M1447 388h1.3M1451 383h1.3M1454 378h1.3M1024 986h1.3M1031 977h1.3M1038 967h1.3M1045 957h1.3M1052 948h1.3M1059 938h1.3M1066 929h1.3M1073 919h1.3M1079 910h1.3M1086 901h1.3M1092 892h1.3M1099 883h1.3M1105 874h1.3M1112 866h1.3M1118 857h1.3M1124 848h1.3M1130 840h1.3M1136 831h1.3M1142 823h1.3M1148 815h1.3M1154 806h1.3M1160 798h1.3M1166 790h1.3M1172 782h1.3M1178 774h1.3M1183 767h1.3M1189 759h1.3M1194 751h1.3M1200 743h1.3M1205 736h1.3M1211 728h1.3M1216 721h1.3M1222 714h1.3M1227 706h1.3M1232 699h1.3M1237 692h1.3M1242 685h1.3M1248 678h1.3M1253 671h1.3M1258 664h1.3M1263 657h1.3M1268 650h1.3M1272 643h1.3M1277 637h1.3M1282 630h1.3M1287 623h1.3M1292 617h1.3M1296 610h1.3M1301 604h1.3M1306 598h1.3M1310 591h1.3M1315 585h1.3M1319 579h1.3M1324 572h1.3M1328 566h1.3M1333 560h1.3M1337 554h1.3M1341 548h1.3M1346 542h1.3M1350 536h1.3M1354 531h1.3M1358 525h1.3M1362 519h1.3M1367 513h1.3M1371 508h1.3M1375 502h1.3M1379 496h1.3M1383 491h1.3M1387 485h1.3M1391 480h1.3M1395 475h1.3M1399 469h1.3M1402 464h1.3M1406 458h1.3M1410 453h1.3M1414 448h1.3M1418 443h1.3M1421 438h1.3M1425 433h1.3M1429 428h1.3M1432 422h1.3M1436 417h1.3M1440 413h1.3M1443 408h1.3M1447 403h1.3M1450 398h1.3M1454 393h1.3M1457 388h1.3M1461 383h1.3M1464 379h1.3M1038 988h1.3M1045 978h1.3M1052 968h1.3M1059 959h1.3M1066 949h1.3M1073 940h1.3M1079 930h1.3M1086 921h1.3M1093 912h1.3M1099 902h1.3M1106 893h1.3M1112 885h1.3M1118 876h1.3M1125 867h1.3M1131 858h1.3M1137 850h1.3M1143 841h1.3M1149 833h1.3M1155 824h1.3M1161 816h1.3M1167 808h1.3M1173 800h1.3M1179 792h1.3M1184 784h1.3M1190 776h1.3M1196 768h1.3M1201 760h1.3M1207 752h1.3M1212 745h1.3M1218 737h1.3M1223 730h1.3M1228 722h1.3M1234 715h1.3M1239 707h1.3M1244 700h1.3M1249 693h1.3M1254 686h1.3M1260 679h1.3M1265 672h1.3M1269 665h1.3M1274 658h1.3M1279 651h1.3M1284 644h1.3M1289 638h1.3M1294 631h1.3M1298 624h1.3M1303 618h1.3M1308 611h1.3M1312 605h1.3M1317 598h1.3M1322 592h1.3M1326 586h1.3M1331 580h1.3M1335 573h1.3M1339 567h1.3M1344 561h1.3M1348 555h1.3M1352 549h1.3M1357 543h1.3M1361 537h1.3M1365 531h1.3M1369 526h1.3M1373 520h1.3M1377 514h1.3M1381 508h1.3M1386 503h1.3M1390 497h1.3M1393 492h1.3M1397 486h1.3M1401 481h1.3M1405 475h1.3M1409 470h1.3M1413 465h1.3M1417 459h1.3M1420 454h1.3M1424 449h1.3M1428 444h1.3M1432 438h1.3M1435 433h1.3M1439 428h1.3M1443 423h1.3M1446 418h1.3M1450 413h1.3M1453 408h1.3M1457 403h1.3M1460 399h1.3M1464 394h1.3M1467 389h1.3M1470 384h1.3M1474 379h1.3M1052 989h1.3M1059 980h1.3M1066 970h1.3M1073 960h1.3M1080 950h1.3M1086 941h1.3M1093 932h1.3M1100 922h1.3M1106 913h1.3M1113 904h1.3M1119 895h1.3M1125 886h1.3M1132 877h1.3M1138 868h1.3M1144 859h1.3M1150 851h1.3M1156 842h1.3M1162 834h1.3M1168 825h1.3M1174 817h1.3M1180 809h1.3M1186 801h1.3M1191 793h1.3M1197 785h1.3M1203 777h1.3M1208 769h1.3M1214 761h1.3M1219 753h1.3M1225 746h1.3M1230 738h1.3M1235 731h1.3M1241 723h1.3M1246 716h1.3M1251 708h1.3M1256 701h1.3M1261 694h1.3M1266 687h1.3M1271 680h1.3M1276 673h1.3M1281 666h1.3M1286 659h1.3M1291 652h1.3M1296 645h1.3M1301 639h1.3M1305 632h1.3M1310 625h1.3M1315 619h1.3M1319 612h1.3M1324 606h1.3M1328 599h1.3M1333 593h1.3M1337 587h1.3M1342 581h1.3M1346 574h1.3M1351 568h1.3M1355 562h1.3M1359 556h1.3M1363 550h1.3M1368 544h1.3M1372 538h1.3M1376 532h1.3M1380 527h1.3M1384 521h1.3M1388 515h1.3M1392 509h1.3M1396 504h1.3M1400 498h1.3M1404 493h1.3M1408 487h1.3M1412 482h1.3M1416 476h1.3M1420 471h1.3M1423 465h1.3M1427 460h1.3M1431 455h1.3M1435 450h1.3M1438 444h1.3M1442 439h1.3M1446 434h1.3M1449 429h1.3M1453 424h1.3M1456 419h1.3M1460 414h1.3M1463 409h1.3M1467 404h1.3M1470 399h1.3M1474 394h1.3M1477 390h1.3M1480 385h1.3M1484 380h1.3M1066 991h1.3M1073 981h1.3M1080 971h1.3M1087 961h1.3M1093 952h1.3M1100 942h1.3M1107 933h1.3M1113 924h1.3M1120 914h1.3M1126 905h1.3M1133 896h1.3M1139 887h1.3M1145 878h1.3M1151 870h1.3M1157 861h1.3M1163 852h1.3M1169 844h1.3M1175 835h1.3M1181 827h1.3M1187 818h1.3M1193 810h1.3M1198 802h1.3M1204 794h1.3M1210 786h1.3M1215 778h1.3M1221 770h1.3M1226 762h1.3M1232 755h1.3M1237 747h1.3M1242 739h1.3M1248 732h1.3M1253 724h1.3M1258 717h1.3M1263 710h1.3M1268 702h1.3M1273 695h1.3M1278 688h1.3M1283 681h1.3M1288 674h1.3M1293 667h1.3M1298 660h1.3M1303 653h1.3M1308 646h1.3M1312 640h1.3M1317 633h1.3M1322 626h1.3M1326 620h1.3M1331 613h1.3M1335 607h1.3M1340 600h1.3M1344 594h1.3M1349 588h1.3M1353 581h1.3M1357 575h1.3M1362 569h1.3M1366 563h1.3M1370 557h1.3M1374 551h1.3M1379 545h1.3M1383 539h1.3M1387 533h1.3M1391 527h1.3M1395 522h1.3M1399 516h1.3M1403 510h1.3M1407 505h1.3M1411 499h1.3M1415 493h1.3M1419 488h1.3M1423 482h1.3M1426 477h1.3M1430 472h1.3M1434 466h1.3M1438 461h1.3M1441 456h1.3M1445 450h1.3M1449 445h1.3M1452 440h1.3M1456 435h1.3M1459 430h1.3M1463 425h1.3M1466 420h1.3M1470 415h1.3M1473 410h1.3M1477 405h1.3M1480 400h1.3M1484 395h1.3M1487 390h1.3M1490 386h1.3M1494 381h1.3M1087 982h1.3M1094 973h1.3M1101 963h1.3M1107 953h1.3M1114 944h1.3M1120 934h1.3M1127 925h1.3M1133 916h1.3M1140 907h1.3M1146 898h1.3M1152 889h1.3M1158 880h1.3M1164 871h1.3M1170 862h1.3M1176 853h1.3M1182 845h1.3M1188 836h1.3M1194 828h1.3M1200 820h1.3M1206 811h1.3M1211 803h1.3M1217 795h1.3M1222 787h1.3M1228 779h1.3M1233 771h1.3M1239 763h1.3M1244 756h1.3M1250 748h1.3M1255 740h1.3M1260 733h1.3M1265 725h1.3M1270 718h1.3M1275 711h1.3M1280 703h1.3M1285 696h1.3M1290 689h1.3M1295 682h1.3M1300 675h1.3M1305 668h1.3M1310 661h1.3M1315 654h1.3M1319 647h1.3M1324 641h1.3M1329 634h1.3M1333 627h1.3M1338 621h1.3M1342 614h1.3M1347 608h1.3M1351 601h1.3M1356 595h1.3M1360 589h1.3M1364 582h1.3M1369 576h1.3M1373 570h1.3M1377 564h1.3M1381 558h1.3M1386 552h1.3M1390 546h1.3M1394 540h1.3M1398 534h1.3M1402 528h1.3M1406 522h1.3M1410 517h1.3M1414 511h1.3M1418 505h1.3M1422 500h1.3M1425 494h1.3M1429 489h1.3M1433 483h1.3M1437 478h1.3M1441 472h1.3M1444 467h1.3M1448 462h1.3M1452 456h1.3M1455 451h1.3M1459 446h1.3M1463 441h1.3M1466 436h1.3M1470 431h1.3M1473 426h1.3M1477 420h1.3M1480 416h1.3M1483 411h1.3M1487 406h1.3M1490 401h1.3M1494 396h1.3M1497 391h1.3M1500 386h1.3M1504 382h1.3M1101 984h1.3M1108 974h1.3M1114 964h1.3M1121 955h1.3M1128 945h1.3M1134 936h1.3M1140 926h1.3M1147 917h1.3M1153 908h1.3M1159 899h1.3M1166 890h1.3M1172 881h1.3M1178 872h1.3M1184 863h1.3M1190 855h1.3M1195 846h1.3M1201 838h1.3M1207 829h1.3M1213 821h1.3M1218 813h1.3M1224 804h1.3M1230 796h1.3M1235 788h1.3M1241 780h1.3M1246 772h1.3M1251 765h1.3M1257 757h1.3M1262 749h1.3M1267 742h1.3M1272 734h1.3M1277 727h1.3M1283 719h1.3M1288 712h1.3M1293 705h1.3M1298 697h1.3M1302 690h1.3M1307 683h1.3M1312 676h1.3M1317 669h1.3M1322 662h1.3M1326 655h1.3M1331 648h1.3M1336 642h1.3M1340 635h1.3M1345 628h1.3M1349 622h1.3M1354 615h1.3M1358 609h1.3M1363 602h1.3M1367 596h1.3M1371 590h1.3M1376 583h1.3M1380 577h1.3M1384 571h1.3M1388 565h1.3M1392 559h1.3M1397 553h1.3M1401 547h1.3M1405 541h1.3M1409 535h1.3M1413 529h1.3M1417 523h1.3M1421 518h1.3M1425 512h1.3M1428 506h1.3M1432 501h1.3M1436 495h1.3M1440 490h1.3M1444 484h1.3M1447 479h1.3M1451 473h1.3M1455 468h1.3M1458 462h1.3M1462 457h1.3M1466 452h1.3M1469 447h1.3M1473 442h1.3M1476 436h1.3M1480 431h1.3M1483 426h1.3M1487 421h1.3M1490 416h1.3M1494 411h1.3M1497 406h1.3M1500 402h1.3M1504 397h1.3M1507 392h1.3M1510 387h1.3M1513 382h1.3M1115 985h1.3M1122 976h1.3M1128 966h1.3M1135 956h1.3M1141 947h1.3M1148 937h1.3M1154 928h1.3M1160 919h1.3M1167 909h1.3M1173 900h1.3M1179 891h1.3M1185 882h1.3M1191 873h1.3M1197 865h1.3M1203 856h1.3M1209 847h1.3M1214 839h1.3M1220 831h1.3M1226 822h1.3M1231 814h1.3M1237 806h1.3M1242 798h1.3M1248 790h1.3M1253 782h1.3M1259 774h1.3M1264 766h1.3M1269 758h1.3M1274 750h1.3M1280 743h1.3M1285 735h1.3M1290 728h1.3M1295 720h1.3M1300 713h1.3M1305 706h1.3M1310 698h1.3M1314 691h1.3M1319 684h1.3M1324 677h1.3M1329 670h1.3M1334 663h1.3M1338 656h1.3M1343 649h1.3M1347 643h1.3M1352 636h1.3M1356 629h1.3M1361 623h1.3M1365 616h1.3M1370 610h1.3M1374 603h1.3M1378 597h1.3M1383 591h1.3M1387 584h1.3M1391 578h1.3M1395 572h1.3M1399 566h1.3M1404 560h1.3M1408 554h1.3M1412 548h1.3M1416 542h1.3M1420 536h1.3M1424 530h1.3M1428 524h1.3M1432 518h1.3M1435 513h1.3M1439 507h1.3M1443 501h1.3M1447 496h1.3M1451 490h1.3M1454 485h1.3M1458 479h1.3M1462 474h1.3M1465 469h1.3M1469 463h1.3M1473 458h1.3M1476 453h1.3M1480 448h1.3M1483 442h1.3M1487 437h1.3M1490 432h1.3M1494 427h1.3M1497 422h1.3M1500 417h1.3M1504 412h1.3M1507 407h1.3M1510 402h1.3M1514 397h1.3M1517 393h1.3M1520 388h1.3M1523 383h1.3M1129 987h1.3M1136 977h1.3M1142 967h1.3M1149 958h1.3M1155 948h1.3M1162 939h1.3M1168 929h1.3M1174 920h1.3M1180 911h1.3M1186 902h1.3M1192 893h1.3M1198 884h1.3M1204 875h1.3M1210 866h1.3M1216 857h1.3M1222 849h1.3M1227 840h1.3M1233 832h1.3M1239 823h1.3M1244 815h1.3M1250 807h1.3M1255 799h1.3M1261 791h1.3M1266 783h1.3M1271 775h1.3M1276 767h1.3M1282 759h1.3M1287 752h1.3M1292 744h1.3M1297 736h1.3M1302 729h1.3M1307 721h1.3M1312 714h1.3M1317 707h1.3M1322 699h1.3M1327 692h1.3M1331 685h1.3M1336 678h1.3M1341 671h1.3M1345 664h1.3M1350 657h1.3M1355 650h1.3M1359 644h1.3M1364 637h1.3M1368 630h1.3M1372 624h1.3M1377 617h1.3M1381 611h1.3M1386 604h1.3M1390 598h1.3M1394 592h1.3M1398 585h1.3M1402 579h1.3M1407 573h1.3M1411 567h1.3M1415 561h1.3M1419 555h1.3M1423 549h1.3M1427 543h1.3M1431 537h1.3M1435 531h1.3M1439 525h1.3M1442 519h1.3M1446 514h1.3M1450 508h1.3M1454 502h1.3M1458 497h1.3M1461 491h1.3M1465 486h1.3M1469 480h1.3M1472 475h1.3M1476 469h1.3M1479 464h1.3M1483 459h1.3M1487 454h1.3M1490 448h1.3M1493 443h1.3M1497 438h1.3M1500 433h1.3M1504 428h1.3M1507 423h1.3M1510 418h1.3M1514 413h1.3M1517 408h1.3M1520 403h1.3M1524 398h1.3M1527 393h1.3M1530 389h1.3M1533 384h1.3M1143 988h1.3M1150 979h1.3M1156 969h1.3M1163 959h1.3M1169 949h1.3M1175 940h1.3M1181 931h1.3M1188 921h1.3M1194 912h1.3M1200 903h1.3M1206 894h1.3M1212 885h1.3M1218 876h1.3M1223 867h1.3M1229 859h1.3M1235 850h1.3M1241 841h1.3M1246 833h1.3M1252 825h1.3M1257 816h1.3M1263 808h1.3M1268 800h1.3M1273 792h1.3M1279 784h1.3M1284 776h1.3M1289 768h1.3M1294 760h1.3M1299 753h1.3M1304 745h1.3M1309 737h1.3M1314 730h1.3M1319 722h1.3M1324 715h1.3M1329 708h1.3M1334 701h1.3M1339 693h1.3M1343 686h1.3M1348 679h1.3M1353 672h1.3M1357 665h1.3M1362 658h1.3M1366 651h1.3M1371 645h1.3M1375 638h1.3M1380 631h1.3M1384 625h1.3M1388 618h1.3M1393 612h1.3M1397 605h1.3M1401 599h1.3M1405 592h1.3M1410 586h1.3M1414 580h1.3M1418 574h1.3M1422 568h1.3M1426 562h1.3M1430 555h1.3M1434 549h1.3M1438 544h1.3M1442 538h1.3M1446 532h1.3M1449 526h1.3M1453 520h1.3M1457 514h1.3M1461 509h1.3M1465 503h1.3M1468 498h1.3M1472 492h1.3M1476 487h1.3M1479 481h1.3M1483 476h1.3M1486 470h1.3M1490 465h1.3M1493 460h1.3M1497 454h1.3M1500 449h1.3M1504 444h1.3M1507 439h1.3M1511 434h1.3M1514 429h1.3M1517 424h1.3M1521 419h1.3M1524 414h1.3M1527 409h1.3M1530 404h1.3M1534 399h1.3M1537 394h1.3M1540 389h1.3M1543 384h1.3M1157 990h1.3M1164 980h1.3M1170 970h1.3M1177 961h1.3M1183 951h1.3M1189 941h1.3M1195 932h1.3M1201 923h1.3M1207 913h1.3M1213 904h1.3M1219 895h1.3M1225 886h1.3M1231 877h1.3M1237 869h1.3M1242 860h1.3M1248 851h1.3M1254 843h1.3M1259 834h1.3M1265 826h1.3M1270 818h1.3M1275 809h1.3M1281 801h1.3M1286 793h1.3M1291 785h1.3M1297 777h1.3M1302 769h1.3M1307 762h1.3M1312 754h1.3M1317 746h1.3M1322 739h1.3M1327 731h1.3M1332 724h1.3M1336 716h1.3M1341 709h1.3M1346 702h1.3M1351 694h1.3M1355 687h1.3M1360 680h1.3M1365 673h1.3M1369 666h1.3M1374 659h1.3M1378 653h1.3M1383 646h1.3M1387 639h1.3M1391 632h1.3M1396 626h1.3M1400 619h1.3M1404 613h1.3M1408 606h1.3M1413 600h1.3M1417 593h1.3M1421 587h1.3M1425 581h1.3M1429 575h1.3M1433 569h1.3M1437 562h1.3M1441 556h1.3M1445 550h1.3M1449 544h1.3M1453 539h1.3M1457 533h1.3M1460 527h1.3M1464 521h1.3M1468 515h1.3M1472 510h1.3M1475 504h1.3M1479 498h1.3M1483 493h1.3M1486 487h1.3M1490 482h1.3M1493 476h1.3M1497 471h1.3M1500 466h1.3M1504 460h1.3M1507 455h1.3M1511 450h1.3M1514 445h1.3M1518 440h1.3M1521 434h1.3M1524 429h1.3M1528 424h1.3M1531 419h1.3M1534 414h1.3M1537 409h1.3M1541 404h1.3M1544 400h1.3M1547 395h1.3M1550 390h1.3M1553 385h1.3M1171 991h1.3M1178 981h1.3M1184 972h1.3M1190 962h1.3M1197 952h1.3M1203 943h1.3M1209 933h1.3M1215 924h1.3M1221 915h1.3M1227 906h1.3M1233 897h1.3M1239 888h1.3M1244 879h1.3M1250 870h1.3M1256 861h1.3M1261 853h1.3M1267 844h1.3M1272 836h1.3M1278 827h1.3M1283 819h1.3M1288 811h1.3M1294 802h1.3M1299 794h1.3M1304 786h1.3M1309 778h1.3M1314 771h1.3M1319 763h1.3M1324 755h1.3M1329 747h1.3M1334 740h1.3M1339 732h1.3M1344 725h1.3M1349 717h1.3M1353 710h1.3M1358 703h1.3M1363 696h1.3M1367 688h1.3M1372 681h1.3M1377 674h1.3M1381 667h1.3M1386 660h1.3M1390 654h1.3M1394 647h1.3M1399 640h1.3M1403 633h1.3M1407 627h1.3M1412 620h1.3M1416 614h1.3M1420 607h1.3M1424 601h1.3M1428 594h1.3M1432 588h1.3M1436 582h1.3M1440 576h1.3M1444 569h1.3M1448 563h1.3M1452 557h1.3M1456 551h1.3M1460 545h1.3M1464 539h1.3M1468 534h1.3M1471 528h1.3M1475 522h1.3M1479 516h1.3M1483 511h1.3M1486 505h1.3M1490 499h1.3M1493 494h1.3M1497 488h1.3M1500 483h1.3M1504 477h1.3M1508 472h1.3M1511 466h1.3M1514 461h1.3M1518 456h1.3M1521 451h1.3M1525 445h1.3M1528 440h1.3M1531 435h1.3M1535 430h1.3M1538 425h1.3M1541 420h1.3M1544 415h1.3M1547 410h1.3M1551 405h1.3M1554 400h1.3M1557 395h1.3M1560 391h1.3M1563 386h1.3M1192 983h1.3M1198 973h1.3M1204 963h1.3M1211 954h1.3M1217 944h1.3M1223 935h1.3M1229 925h1.3M1235 916h1.3M1240 907h1.3M1246 898h1.3M1252 889h1.3M1258 880h1.3M1263 871h1.3M1269 863h1.3M1274 854h1.3M1280 845h1.3M1285 837h1.3M1291 828h1.3M1296 820h1.3M1301 812h1.3M1306 804h1.3M1312 796h1.3M1317 788h1.3M1322 780h1.3M1327 772h1.3M1332 764h1.3M1337 756h1.3M1342 748h1.3M1347 741h1.3M1351 733h1.3M1356 726h1.3M1361 718h1.3M1366 711h1.3M1370 704h1.3M1375 697h1.3M1380 689h1.3M1384 682h1.3M1389 675h1.3M1393 668h1.3M1397 661h1.3M1402 655h1.3M1406 648h1.3M1410 641h1.3M1415 634h1.3M1419 628h1.3M1423 621h1.3M1427 615h1.3M1431 608h1.3M1436 602h1.3M1440 595h1.3M1444 589h1.3M1448 583h1.3M1452 577h1.3M1456 570h1.3M1460 564h1.3M1463 558h1.3M1467 552h1.3M1471 546h1.3M1475 540h1.3M1479 534h1.3M1482 529h1.3M1486 523h1.3M1490 517h1.3M1493 511h1.3M1497 506h1.3M1501 500h1.3M1504 495h1.3M1508 489h1.3M1511 484h1.3M1515 478h1.3M1518 473h1.3M1522 467h1.3M1525 462h1.3M1528 457h1.3M1532 451h1.3M1535 446h1.3M1538 441h1.3M1542 436h1.3M1545 431h1.3M1548 426h1.3M1551 421h1.3M1554 416h1.3M1558 411h1.3M1561 406h1.3M1564 401h1.3M1567 396h1.3M1570 391h1.3M1573 387h1.3M1206 984h1.3M1212 975h1.3M1218 965h1.3M1224 955h1.3M1230 946h1.3M1236 936h1.3M1242 927h1.3M1248 918h1.3M1254 908h1.3M1260 899h1.3M1265 890h1.3M1271 881h1.3M1277 873h1.3M1282 864h1.3M1288 855h1.3M1293 847h1.3M1298 838h1.3M1304 830h1.3M1309 821h1.3M1314 813h1.3M1319 805h1.3M1324 797h1.3M1330 789h1.3M1335 781h1.3M1340 773h1.3M1345 765h1.3M1349 757h1.3M1354 750h1.3M1359 742h1.3M1364 734h1.3M1369 727h1.3M1373 720h1.3M1378 712h1.3M1383 705h1.3M1387 698h1.3M1392 691h1.3M1396 683h1.3M1401 676h1.3M1405 669h1.3M1409 662h1.3M1414 656h1.3M1418 649h1.3M1422 642h1.3M1426 635h1.3M1431 629h1.3M1435 622h1.3M1439 616h1.3M1443 609h1.3M1447 603h1.3M1451 596h1.3M1455 590h1.3M1459 584h1.3M1463 577h1.3M1467 571h1.3M1471 565h1.3M1475 559h1.3M1478 553h1.3M1482 547h1.3M1486 541h1.3M1490 535h1.3M1493 529h1.3M1497 524h1.3M1501 518h1.3M1504 512h1.3M1508 507h1.3M1511 501h1.3M1515 495h1.3M1518 490h1.3M1522 484h1.3M1525 479h1.3M1529 473h1.3M1532 468h1.3M1535 463h1.3M1539 457h1.3M1542 452h1.3M1545 447h1.3M1549 442h1.3M1552 437h1.3M1555 432h1.3M1558 427h1.3M1561 422h1.3M1565 417h1.3M1568 412h1.3M1571 407h1.3M1574 402h1.3M1577 397h1.3M1580 392h1.3M1583 387h1.3M1220 986h1.3M1226 976h1.3M1232 966h1.3M1238 957h1.3M1244 947h1.3M1250 938h1.3M1256 928h1.3M1262 919h1.3M1268 910h1.3M1273 901h1.3M1279 892h1.3M1284 883h1.3M1290 874h1.3M1295 865h1.3M1301 857h1.3M1306 848h1.3M1311 839h1.3M1317 831h1.3M1322 823h1.3M1327 814h1.3M1332 806h1.3M1337 798h1.3M1342 790h1.3M1347 782h1.3M1352 774h1.3M1357 766h1.3M1362 758h1.3M1367 751h1.3M1372 743h1.3M1376 736h1.3M1381 728h1.3M1386 721h1.3M1390 713h1.3M1395 706h1.3M1399 699h1.3M1404 692h1.3M1408 684h1.3M1413 677h1.3M1417 670h1.3M1421 663h1.3M1426 657h1.3M1430 650h1.3M1434 643h1.3M1438 636h1.3M1442 630h1.3M1446 623h1.3M1451 617h1.3M1455 610h1.3M1459 604h1.3M1463 597h1.3M1466 591h1.3M1470 585h1.3M1474 578h1.3M1478 572h1.3M1482 566h1.3M1486 560h1.3M1490 554h1.3M1493 548h1.3M1497 542h1.3M1501 536h1.3M1504 530h1.3M1508 525h1.3M1511 519h1.3M1515 513h1.3M1519 507h1.3M1522 502h1.3M1526 496h1.3M1529 491h1.3M1532 485h1.3M1536 480h1.3M1539 474h1.3M1543 469h1.3M1546 464h1.3M1549 458h1.3M1553 453h1.3M1556 448h1.3M1559 443h1.3M1562 437h1.3M1565 432h1.3M1569 427h1.3M1572 422h1.3M1575 417h1.3M1578 412h1.3M1581 407h1.3M1584 403h1.3M1587 398h1.3M1590 393h1.3M1593 388h1.3M1234 987h1.3M1240 978h1.3M1246 968h1.3M1252 958h1.3M1258 949h1.3M1264 939h1.3M1270 930h1.3M1275 920h1.3M1281 911h1.3M1287 902h1.3M1292 893h1.3M1298 884h1.3M1303 875h1.3M1309 866h1.3M1314 858h1.3M1319 849h1.3M1325 841h1.3M1330 832h1.3M1335 824h1.3M1340 816h1.3M1345 807h1.3M1350 799h1.3M1355 791h1.3M1360 783h1.3M1365 775h1.3M1370 767h1.3M1375 760h1.3M1379 752h1.3M1384 744h1.3M1389 737h1.3M1393 729h1.3M1398 722h1.3M1402 714h1.3M1407 707h1.3M1411 700h1.3M1416 693h1.3M1420 686h1.3M1425 678h1.3M1429 671h1.3M1433 665h1.3M1437 658h1.3M1442 651h1.3M1446 644h1.3M1450 637h1.3M1454 631h1.3M1458 624h1.3M1462 618h1.3M1466 611h1.3M1470 605h1.3M1474 598h1.3M1478 592h1.3M1482 586h1.3M1486 579h1.3M1489 573h1.3M1493 567h1.3M1497 561h1.3M1501 555h1.3M1504 549h1.3M1508 543h1.3M1512 537h1.3M1515 531h1.3M1519 525h1.3M1522 520h1.3M1526 514h1.3M1529 508h1.3M1533 503h1.3M1536 497h1.3M1540 491h1.3M1543 486h1.3M1547 481h1.3M1550 475h1.3M1553 470h1.3M1556 464h1.3M1560 459h1.3M1563 454h1.3M1566 449h1.3M1569 443h1.3M1573 438h1.3M1576 433h1.3M1579 428h1.3M1582 423h1.3M1585 418h1.3M1588 413h1.3M1591 408h1.3M1594 403h1.3M1597 398h1.3M1600 394h1.3M1603 389h1.3M1248 989h1.3M1254 979h1.3M1260 969h1.3M1266 960h1.3M1272 950h1.3M1278 940h1.3M1284 931h1.3M1289 922h1.3M1295 913h1.3M1300 903h1.3M1306 894h1.3M1311 885h1.3M1317 877h1.3M1322 868h1.3M1327 859h1.3M1333 850h1.3M1338 842h1.3M1343 833h1.3M1348 825h1.3M1353 817h1.3M1358 809h1.3M1363 800h1.3M1368 792h1.3M1373 784h1.3M1378 776h1.3M1382 769h1.3M1387 761h1.3M1392 753h1.3M1396 745h1.3M1401 738h1.3M1406 730h1.3M1410 723h1.3M1415 716h1.3M1419 708h1.3M1424 701h1.3M1428 694h1.3M1432 687h1.3M1437 680h1.3M1441 673h1.3M1445 666h1.3M1449 659h1.3M1453 652h1.3M1458 645h1.3M1462 638h1.3M1466 632h1.3M1470 625h1.3M1474 619h1.3M1478 612h1.3M1482 606h1.3M1485 599h1.3M1489 593h1.3M1493 587h1.3M1497 580h1.3M1501 574h1.3M1504 568h1.3M1508 562h1.3M1512 556h1.3M1516 550h1.3M1519 544h1.3M1523 538h1.3M1526 532h1.3M1530 526h1.3M1533 521h1.3M1537 515h1.3M1540 509h1.3M1544 503h1.3M1547 498h1.3M1550 492h1.3M1554 487h1.3M1557 481h1.3M1560 476h1.3M1564 471h1.3M1567 465h1.3M1570 460h1.3M1573 455h1.3M1577 449h1.3M1580 444h1.3M1583 439h1.3M1586 434h1.3M1589 429h1.3M1592 424h1.3M1595 419h1.3M1598 414h1.3M1601 409h1.3M1604 404h1.3M1607 399h1.3M1610 394h1.3M1613 390h1.3M1263 990h1.3M1268 981h1.3M1274 971h1.3M1280 961h1.3M1286 951h1.3M1292 942h1.3M1297 933h1.3M1303 923h1.3M1308 914h1.3M1314 905h1.3M1319 896h1.3M1325 887h1.3M1330 878h1.3M1335 869h1.3M1341 860h1.3M1346 852h1.3M1351 843h1.3M1356 835h1.3M1361 826h1.3M1366 818h1.3M1371 810h1.3M1376 802h1.3M1381 794h1.3M1386 786h1.3M1390 778h1.3M1395 770h1.3M1400 762h1.3M1404 754h1.3M1409 747h1.3M1414 739h1.3M1418 731h1.3M1423 724h1.3M1427 717h1.3M1431 709h1.3M1436 702h1.3M1440 695h1.3M1444 688h1.3M1449 681h1.3M1453 674h1.3M1457 667h1.3M1461 660h1.3M1465 653h1.3M1469 646h1.3M1473 639h1.3M1477 633h1.3M1481 626h1.3M1485 620h1.3M1489 613h1.3M1493 607h1.3M1497 600h1.3M1501 594h1.3M1505 587h1.3M1508 581h1.3M1512 575h1.3M1516 569h1.3M1519 563h1.3M1523 557h1.3M1527 551h1.3M1530 545h1.3M1534 539h1.3M1537 533h1.3M1541 527h1.3M1544 521h1.3M1548 516h1.3M1551 510h1.3M1555 504h1.3M1558 499h1.3M1561 493h1.3M1565 488h1.3M1568 482h1.3M1571 477h1.3M1574 471h1.3M1578 466h1.3M1581 461h1.3M1584 455h1.3M1587 450h1.3M1590 445h1.3M1593 440h1.3M1596 435h1.3M1599 430h1.3M1602 425h1.3M1605 420h1.3M1608 415h1.3M1611 410h1.3M1614 405h1.3M1617 400h1.3M1620 395h1.3M1623 390h1.3M1277 992h1.3M1283 982h1.3M1288 972h1.3M1294 962h1.3M1300 953h1.3M1306 943h1.3M1311 934h1.3M1317 925h1.3M1322 915h1.3M1328 906h1.3M1333 897h1.3M1338 888h1.3M1344 879h1.3M1349 870h1.3M1354 862h1.3M1359 853h1.3M1364 845h1.3M1369 836h1.3M1374 828h1.3M1379 819h1.3M1384 811h1.3M1389 803h1.3M1394 795h1.3M1398 787h1.3M1403 779h1.3M1408 771h1.3M1412 763h1.3M1417 755h1.3M1422 748h1.3M1426 740h1.3M1430 733h1.3M1435 725h1.3M1439 718h1.3M1444 710h1.3M1448 703h1.3M1452 696h1.3M1456 689h1.3M1461 682h1.3M1465 675h1.3M1469 668h1.3M1473 661h1.3M1477 654h1.3M1481 647h1.3M1485 640h1.3M1489 634h1.3M1493 627h1.3M1497 620h1.3M1501 614h1.3M1505 608h1.3M1508 601h1.3M1512 595h1.3M1516 588h1.3M1520 582h1.3M1523 576h1.3M1527 570h1.3M1531 564h1.3M1534 558h1.3M1538 552h1.3M1541 546h1.3M1545 540h1.3M1548 534h1.3M1552 528h1.3M1555 522h1.3M1559 517h1.3M1562 511h1.3M1565 505h1.3M1569 500h1.3M1572 494h1.3M1575 488h1.3M1579 483h1.3M1582 478h1.3M1585 472h1.3M1588 467h1.3M1591 461h1.3M1594 456h1.3M1598 451h1.3M1601 446h1.3M1604 441h1.3M1607 435h1.3M1610 430h1.3M1613 425h1.3M1616 420h1.3M1619 415h1.3M1622 410h1.3M1624 405h1.3M1627 401h1.3M1630 396h1.3M1633 391h1.3M1297 983h1.3M1302 974h1.3M1308 964h1.3M1314 954h1.3M1319 945h1.3M1325 935h1.3M1330 926h1.3M1336 917h1.3M1341 908h1.3M1346 898h1.3M1352 889h1.3M1357 881h1.3M1362 872h1.3M1367 863h1.3M1372 854h1.3M1377 846h1.3M1382 837h1.3M1387 829h1.3M1392 821h1.3M1397 812h1.3M1402 804h1.3M1406 796h1.3M1411 788h1.3M1416 780h1.3M1420 772h1.3M1425 764h1.3M1430 757h1.3M1434 749h1.3M1439 741h1.3M1443 734h1.3M1447 726h1.3M1452 719h1.3M1456 711h1.3M1460 704h1.3M1464 697h1.3M1469 690h1.3M1473 683h1.3M1477 676h1.3M1481 669h1.3M1485 662h1.3M1489 655h1.3M1493 648h1.3M1497 641h1.3M1501 635h1.3M1505 628h1.3M1509 621h1.3M1512 615h1.3M1516 608h1.3M1520 602h1.3M1524 596h1.3M1527 589h1.3M1531 583h1.3M1535 577h1.3M1538 571h1.3M1542 565h1.3M1545 559h1.3M1549 553h1.3M1552 547h1.3M1556 541h1.3M1559 535h1.3M1563 529h1.3M1566 523h1.3M1570 517h1.3M1573 512h1.3M1576 506h1.3M1579 500h1.3M1583 495h1.3M1586 489h1.3M1589 484h1.3M1592 478h1.3M1596 473h1.3M1599 468h1.3M1602 462h1.3M1605 457h1.3M1608 452h1.3M1611 447h1.3M1614 441h1.3M1617 436h1.3M1620 431h1.3M1623 426h1.3M1626 421h1.3M1629 416h1.3M1632 411h1.3M1635 406h1.3M1637 401h1.3M1640 396h1.3M1643 392h1.3M1311 985h1.3M1317 975h1.3M1322 965h1.3M1328 956h1.3M1333 946h1.3M1339 937h1.3M1344 927h1.3M1350 918h1.3M1355 909h1.3M1360 900h1.3M1365 891h1.3M1370 882h1.3M1376 873h1.3M1381 864h1.3M1386 856h1.3M1391 847h1.3M1395 839h1.3M1400 830h1.3M1405 822h1.3M1410 814h1.3M1415 805h1.3M1419 797h1.3M1424 789h1.3M1429 781h1.3M1433 773h1.3M1438 765h1.3M1442 758h1.3M1447 750h1.3M1451 742h1.3M1455 735h1.3M1460 727h1.3M1464 720h1.3M1468 713h1.3M1472 705h1.3M1477 698h1.3M1481 691h1.3M1485 684h1.3M1489 677h1.3M1493 670h1.3M1497 663h1.3M1501 656h1.3M1505 649h1.3M1509 642h1.3M1513 636h1.3M1516 629h1.3M1520 622h1.3M1524 616h1.3M1528 609h1.3M1532 603h1.3M1535 597h1.3M1539 590h1.3M1542 584h1.3M1546 578h1.3M1550 572h1.3M1553 566h1.3M1557 559h1.3M1560 553h1.3M1564 547h1.3M1567 542h1.3M1570 536h1.3M1574 530h1.3M1577 524h1.3M1581 518h1.3M1584 513h1.3M1587 507h1.3M1590 501h1.3M1594 496h1.3M1597 490h1.3M1600 485h1.3M1603 479h1.3M1606 474h1.3M1609 468h1.3M1612 463h1.3M1615 458h1.3M1618 453h1.3M1621 447h1.3M1624 442h1.3M1627 437h1.3M1630 432h1.3M1633 427h1.3M1636 422h1.3M1639 417h1.3M1642 412h1.3M1645 407h1.3M1648 402h1.3M1650 397h1.3M1653 392h1.3M1325 986h1.3M1331 977h1.3M1336 967h1.3M1342 957h1.3M1347 948h1.3M1353 938h1.3M1358 929h1.3M1363 919h1.3M1368 910h1.3M1374 901h1.3M1379 892h1.3M1384 883h1.3M1389 874h1.3M1394 866h1.3M1399 857h1.3M1404 848h1.3M1409 840h1.3M1413 831h1.3M1418 823h1.3M1423 815h1.3M1428 807h1.3M1432 798h1.3M1437 790h1.3M1441 782h1.3M1446 774h1.3M1450 767h1.3M1455 759h1.3M1459 751h1.3M1464 744h1.3M1468 736h1.3M1472 728h1.3M1476 721h1.3M1481 714h1.3M1485 706h1.3M1489 699h1.3M1493 692h1.3M1497 685h1.3M1501 678h1.3M1505 671h1.3M1509 664h1.3M1513 657h1.3M1517 650h1.3M1521 643h1.3M1524 637h1.3M1528 630h1.3M1532 623h1.3M1536 617h1.3M1539 610h1.3M1543 604h1.3M1547 598h1.3M1550 591h1.3M1554 585h1.3M1557 579h1.3M1561 573h1.3M1564 566h1.3M1568 560h1.3M1571 554h1.3M1575 548h1.3M1578 542h1.3M1582 537h1.3M1585 531h1.3M1588 525h1.3M1591 519h1.3M1595 513h1.3M1598 508h1.3M1601 502h1.3M1604 497h1.3M1607 491h1.3M1611 485h1.3M1614 480h1.3M1617 475h1.3M1620 469h1.3M1623 464h1.3M1626 459h1.3M1629 453h1.3M1632 448h1.3M1635 443h1.3M1638 438h1.3M1641 433h1.3M1644 428h1.3M1646 423h1.3M1649 418h1.3M1652 413h1.3M1655 408h1.3M1658 403h1.3M1661 398h1.3M1663 393h1.3M1339 988h1.3M1345 978h1.3M1350 968h1.3M1356 959h1.3M1361 949h1.3M1367 940h1.3M1372 930h1.3M1377 921h1.3M1382 912h1.3M1387 903h1.3M1392 894h1.3M1397 885h1.3M1402 876h1.3M1407 867h1.3M1412 858h1.3M1417 850h1.3M1422 841h1.3M1427 833h1.3M1431 824h1.3M1436 816h1.3M1441 808h1.3M1445 800h1.3M1450 792h1.3M1454 784h1.3M1459 776h1.3M1463 768h1.3M1467 760h1.3M1472 752h1.3M1476 745h1.3M1480 737h1.3M1485 730h1.3M1489 722h1.3M1493 715h1.3M1497 707h1.3M1501 700h1.3M1505 693h1.3M1509 686h1.3M1513 679h1.3M1517 672h1.3M1521 665h1.3M1525 658h1.3M1529 651h1.3M1532 644h1.3M1536 638h1.3M1540 631h1.3M1544 624h1.3M1547 618h1.3M1551 611h1.3M1555 605h1.3M1558 599h1.3M1562 592h1.3M1565 586h1.3M1569 580h1.3M1572 574h1.3M1576 567h1.3M1579 561h1.3M1583 555h1.3M1586 549h1.3M1589 543h1.3M1593 537h1.3M1596 532h1.3M1599 526h1.3M1602 520h1.3M1606 514h1.3M1609 509h1.3M1612 503h1.3M1615 497h1.3M1618 492h1.3M1621 486h1.3M1624 481h1.3M1627 475h1.3M1630 470h1.3M1634 465h1.3M1636 459h1.3M1639 454h1.3M1642 449h1.3M1645 444h1.3M1648 439h1.3M1651 433h1.3M1654 428h1.3M1657 423h1.3M1660 418h1.3M1662 413h1.3M1665 408h1.3M1668 404h1.3M1671 399h1.3M1673 394h1.3M1354 989h1.3M1359 980h1.3M1364 970h1.3M1370 960h1.3M1375 950h1.3M1380 941h1.3M1386 932h1.3M1391 922h1.3M1396 913h1.3M1401 904h1.3M1406 895h1.3M1411 886h1.3M1416 877h1.3M1421 868h1.3M1426 860h1.3M1430 851h1.3M1435 842h1.3M1440 834h1.3M1444 826h1.3M1449 817h1.3M1454 809h1.3M1458 801h1.3M1463 793h1.3M1467 785h1.3M1471 777h1.3M1476 769h1.3M1480 761h1.3M1484 753h1.3M1489 746h1.3M1493 738h1.3M1497 731h1.3M1501 723h1.3M1505 716h1.3M1509 709h1.3M1513 701h1.3M1517 694h1.3M1521 687h1.3M1525 680h1.3M1529 673h1.3M1533 666h1.3M1537 659h1.3M1541 652h1.3M1544 645h1.3M1548 639h1.3M1552 632h1.3M1555 625h1.3M1559 619h1.3M1563 612h1.3M1566 606h1.3M1570 600h1.3M1573 593h1.3M1577 587h1.3M1580 581h1.3M1584 574h1.3M1587 568h1.3M1590 562h1.3M1594 556h1.3M1597 550h1.3M1600 544h1.3M1604 538h1.3M1607 532h1.3M1610 527h1.3M1613 521h1.3M1617 515h1.3M1620 509h1.3M1623 504h1.3M1626 498h1.3M1629 493h1.3M1632 487h1.3M1635 482h1.3M1638 476h1.3M1641 471h1.3M1644 465h1.3M1647 460h1.3M1650 455h1.3M1653 450h1.3M1656 444h1.3M1659 439h1.3M1661 434h1.3M1664 429h1.3M1667 424h1.3M1670 419h1.3M1673 414h1.3M1675 409h1.3M1678 404h1.3M1681 399h1.3M1683 395h1.3M1368 991h1.3M1373 981h1.3M1379 971h1.3M1384 962h1.3M1389 952h1.3M1394 942h1.3M1399 933h1.3M1405 924h1.3M1410 914h1.3M1415 905h1.3M1420 896h1.3M1424 887h1.3M1429 878h1.3M1434 870h1.3M1439 861h1.3M1444 852h1.3M1448 844h1.3M1453 835h1.3M1458 827h1.3M1462 818h1.3M1467 810h1.3M1471 802h1.3M1475 794h1.3M1480 786h1.3M1484 778h1.3M1489 770h1.3M1493 762h1.3M1497 755h1.3M1501 747h1.3M1505 739h1.3M1509 732h1.3M1514 724h1.3M1518 717h1.3M1522 710h1.3M1526 702h1.3M1530 695h1.3M1533 688h1.3M1537 681h1.3M1541 674h1.3M1545 667h1.3M1549 660h1.3M1552 653h1.3M1556 646h1.3M1560 640h1.3M1563 633h1.3M1567 626h1.3M1571 620h1.3M1574 613h1.3M1578 607h1.3M1581 600h1.3M1585 594h1.3M1588 588h1.3M1592 582h1.3M1595 575h1.3M1598 569h1.3M1602 563h1.3M1605 557h1.3M1608 551h1.3M1612 545h1.3M1615 539h1.3M1618 533h1.3M1621 527h1.3M1624 522h1.3M1628 516h1.3M1631 510h1.3M1634 505h1.3M1637 499h1.3M1640 493h1.3M1643 488h1.3M1646 482h1.3M1649 477h1.3M1652 472h1.3M1655 466h1.3M1658 461h1.3M1660 456h1.3M1663 450h1.3M1666 445h1.3M1669 440h1.3M1672 435h1.3M1675 430h1.3M1677 425h1.3M1680 420h1.3M1683 415h1.3M1686 410h1.3M1688 405h1.3M1691 400h1.3M1694 395h1.3M1387 983h1.3M1393 973h1.3M1398 963h1.3M1403 953h1.3M1408 944h1.3M1413 934h1.3M1418 925h1.3M1423 916h1.3M1428 907h1.3M1433 898h1.3M1438 889h1.3M1443 880h1.3M1448 871h1.3M1452 862h1.3M1457 854h1.3M1462 845h1.3M1466 836h1.3M1471 828h1.3M1475 820h1.3M1480 811h1.3M1484 803h1.3M1488 795h1.3M1493 787h1.3M1497 779h1.3M1501 771h1.3M1505 764h1.3M1510 756h1.3M1514 748h1.3M1518 741h1.3M1522 733h1.3M1526 726h1.3M1530 718h1.3M1534 711h1.3M1538 703h1.3M1542 696h1.3M1546 689h1.3M1549 682h1.3M1553 675h1.3M1557 668h1.3M1561 661h1.3M1564 654h1.3M1568 647h1.3M1572 641h1.3M1575 634h1.3M1579 627h1.3M1582 621h1.3M1586 614h1.3M1589 608h1.3M1593 601h1.3M1596 595h1.3M1600 589h1.3M1603 583h1.3M1606 576h1.3M1610 570h1.3M1613 564h1.3M1616 558h1.3M1620 552h1.3M1623 546h1.3M1626 540h1.3M1629 534h1.3M1632 528h1.3M1635 523h1.3M1638 517h1.3M1642 511h1.3M1645 505h1.3M1648 500h1.3M1651 494h1.3M1654 489h1.3M1657 483h1.3M1659 478h1.3M1662 472h1.3M1665 467h1.3M1668 462h1.3M1671 456h1.3M1674 451h1.3M1677 446h1.3M1679 441h1.3M1682 436h1.3M1685 431h1.3M1688 426h1.3M1690 421h1.3M1693 416h1.3M1696 411h1.3M1698 406h1.3M1701 401h1.3M1704 396h1.3M1402 984h1.3M1407 974h1.3M1412 964h1.3M1417 955h1.3M1422 945h1.3M1427 936h1.3M1432 926h1.3M1437 917h1.3M1442 908h1.3M1447 899h1.3M1452 890h1.3M1456 881h1.3M1461 872h1.3M1466 863h1.3M1470 855h1.3M1475 846h1.3M1479 838h1.3M1484 829h1.3M1488 821h1.3M1493 813h1.3M1497 805h1.3M1501 796h1.3M1506 788h1.3M1510 780h1.3M1514 773h1.3M1518 765h1.3M1522 757h1.3M1526 749h1.3M1530 742h1.3M1534 734h1.3M1538 727h1.3M1542 719h1.3M1546 712h1.3M1550 705h1.3M1554 697h1.3M1558 690h1.3M1562 683h1.3M1565 676h1.3M1569 669h1.3M1573 662h1.3M1576 655h1.3M1580 648h1.3M1584 642h1.3M1587 635h1.3M1591 628h1.3M1594 622h1.3M1598 615h1.3M1601 609h1.3M1604 602h1.3M1608 596h1.3M1611 590h1.3M1615 583h1.3M1618 577h1.3M1621 571h1.3M1624 565h1.3M1628 559h1.3M1631 553h1.3M1634 547h1.3M1637 541h1.3M1640 535h1.3M1643 529h1.3M1646 523h1.3M1649 518h1.3M1652 512h1.3M1655 506h1.3M1658 501h1.3M1661 495h1.3M1664 490h1.3M1667 484h1.3M1670 479h1.3M1673 473h1.3M1676 468h1.3M1679 463h1.3M1682 457h1.3M1684 452h1.3M1687 447h1.3M1690 442h1.3M1693 437h1.3M1695 431h1.3M1698 426h1.3M1701 421h1.3M1703 416h1.3M1706 411h1.3M1709 406h1.3M1711 402h1.3M1416 985h1.3M1421 976h1.3M1426 966h1.3M1431 956h1.3M1436 947h1.3M1441 937h1.3M1446 928h1.3M1451 919h1.3M1456 909h1.3M1461 900h1.3M1465 891h1.3M1470 882h1.3M1475 874h1.3M1479 865h1.3M1484 856h1.3M1488 848h1.3M1493 839h1.3M1497 831h1.3M1501 822h1.3M1506 814h1.3M1510 806h1.3M1514 798h1.3M1518 790h1.3M1523 782h1.3M1527 774h1.3M1531 766h1.3M1535 758h1.3M1539 750h1.3M1543 743h1.3M1547 735h1.3M1551 728h1.3M1555 720h1.3M1559 713h1.3M1562 706h1.3M1566 698h1.3M1570 691h1.3M1574 684h1.3M1577 677h1.3M1581 670h1.3M1585 663h1.3M1588 656h1.3M1592 650h1.3M1595 643h1.3M1599 636h1.3M1602 629h1.3M1606 623h1.3M1609 616h1.3M1613 610h1.3M1616 603h1.3M1619 597h1.3M1623 591h1.3M1626 584h1.3M1629 578h1.3M1632 572h1.3M1636 566h1.3M1639 560h1.3M1642 554h1.3M1645 548h1.3M1648 542h1.3M1651 536h1.3M1654 530h1.3M1657 524h1.3M1660 519h1.3M1663 513h1.3M1666 507h1.3M1669 502h1.3M1672 496h1.3M1675 490h1.3M1678 485h1.3M1681 480h1.3M1684 474h1.3M1687 469h1.3M1689 463h1.3M1692 458h1.3M1695 453h1.3M1698 448h1.3M1700 442h1.3M1703 437h1.3M1706 432h1.3M1708 427h1.3M1711 422h1.3M1430 987h1.3M1435 977h1.3M1440 967h1.3M1445 958h1.3M1450 948h1.3M1455 939h1.3M1460 929h1.3M1465 920h1.3M1469 911h1.3M1474 902h1.3M1479 893h1.3M1483 884h1.3M1488 875h1.3M1493 866h1.3M1497 857h1.3M1501 849h1.3M1506 840h1.3M1510 832h1.3M1515 823h1.3M1519 815h1.3M1523 807h1.3M1527 799h1.3M1531 791h1.3M1536 783h1.3M1540 775h1.3M1544 767h1.3M1548 759h1.3M1552 752h1.3M1556 744h1.3M1559 736h1.3M1563 729h1.3M1567 721h1.3M1571 714h1.3M1575 707h1.3M1578 700h1.3M1582 692h1.3M1586 685h1.3M1590 678h1.3M1593 671h1.3M1597 664h1.3M1600 657h1.3M1604 651h1.3M1607 644h1.3M1611 637h1.3M1614 630h1.3M1618 624h1.3M1621 617h1.3M1624 611h1.3M1628 604h1.3M1631 598h1.3M1634 592h1.3M1637 585h1.3M1641 579h1.3M1644 573h1.3M1647 567h1.3M1650 561h1.3M1653 555h1.3M1656 549h1.3M1659 543h1.3M1662 537h1.3M1665 531h1.3M1668 525h1.3M1671 519h1.3M1674 514h1.3M1677 508h1.3M1680 502h1.3M1683 497h1.3M1686 491h1.3M1689 486h1.3M1692 480h1.3M1694 475h1.3M1697 470h1.3M1700 464h1.3M1703 459h1.3M1705 454h1.3M1708 448h1.3M1711 443h1.3M1444 988h1.3M1449 979h1.3M1454 969h1.3M1459 959h1.3M1464 950h1.3M1469 940h1.3M1474 931h1.3M1479 921h1.3M1483 912h1.3M1488 903h1.3M1492 894h1.3M1497 885h1.3M1502 876h1.3M1506 867h1.3M1510 859h1.3M1515 850h1.3M1519 842h1.3M1523 833h1.3M1528 825h1.3M1532 816h1.3M1536 808h1.3M1540 800h1.3M1544 792h1.3M1548 784h1.3M1552 776h1.3M1556 768h1.3M1560 760h1.3M1564 753h1.3M1568 745h1.3M1572 738h1.3M1576 730h1.3M1580 723h1.3M1583 715h1.3M1587 708h1.3M1591 701h1.3M1594 693h1.3M1598 686h1.3M1602 679h1.3M1605 672h1.3M1609 665h1.3M1612 658h1.3M1616 652h1.3M1619 645h1.3M1623 638h1.3M1626 631h1.3M1629 625h1.3M1633 618h1.3M1636 612h1.3M1639 605h1.3M1642 599h1.3M1646 593h1.3M1649 586h1.3M1652 580h1.3M1655 574h1.3M1658 568h1.3M1661 562h1.3M1665 556h1.3M1668 550h1.3M1671 544h1.3M1674 538h1.3M1677 532h1.3M1680 526h1.3M1682 520h1.3M1685 515h1.3M1688 509h1.3M1691 503h1.3M1694 498h1.3M1697 492h1.3M1700 487h1.3M1702 481h1.3M1705 476h1.3M1708 470h1.3M1711 465h1.3M1459 990h1.3M1464 980h1.3M1469 970h1.3M1473 961h1.3M1478 951h1.3M1483 941h1.3M1488 932h1.3M1492 923h1.3M1497 914h1.3M1502 904h1.3M1506 895h1.3M1511 886h1.3M1515 878h1.3M1519 869h1.3M1524 860h1.3M1528 851h1.3M1532 843h1.3M1537 834h1.3M1541 826h1.3M1545 818h1.3M1549 809h1.3M1553 801h1.3M1557 793h1.3M1561 785h1.3M1565 777h1.3M1569 769h1.3M1573 762h1.3M1577 754h1.3M1581 746h1.3M1585 739h1.3M1588 731h1.3M1592 724h1.3M1596 716h1.3M1599 709h1.3M1603 702h1.3M1607 695h1.3M1610 687h1.3M1614 680h1.3M1617 673h1.3M1621 666h1.3M1624 659h1.3M1628 653h1.3M1631 646h1.3M1634 639h1.3M1638 632h1.3M1641 626h1.3M1644 619h1.3M1648 613h1.3M1651 606h1.3M1654 600h1.3M1657 594h1.3M1660 587h1.3M1664 581h1.3M1667 575h1.3M1670 569h1.3M1673 563h1.3M1676 556h1.3M1679 550h1.3M1682 545h1.3M1685 539h1.3M1688 533h1.3M1691 527h1.3M1693 521h1.3M1696 515h1.3M1699 510h1.3M1702 504h1.3M1705 499h1.3M1708 493h1.3M1710 487h1.3M1473 991h1.3M1478 982h1.3M1483 972h1.3M1488 962h1.3M1492 952h1.3M1497 943h1.3M1502 933h1.3M1506 924h1.3M1511 915h1.3M1515 906h1.3M1520 897h1.3M1524 888h1.3M1529 879h1.3M1533 870h1.3M1537 861h1.3M1542 853h1.3M1546 844h1.3M1550 836h1.3M1554 827h1.3M1558 819h1.3M1562 811h1.3M1566 803h1.3M1570 794h1.3M1574 786h1.3M1578 778h1.3M1582 771h1.3M1586 763h1.3M1590 755h1.3M1593 747h1.3M1597 740h1.3M1601 732h1.3M1605 725h1.3M1608 717h1.3M1612 710h1.3M1615 703h1.3M1619 696h1.3M1622 688h1.3M1626 681h1.3M1629 674h1.3M1633 667h1.3M1636 660h1.3M1640 654h1.3M1643 647h1.3M1646 640h1.3M1650 633h1.3M1653 627h1.3M1656 620h1.3M1659 614h1.3M1663 607h1.3M1666 601h1.3M1669 594h1.3M1672 588h1.3M1675 582h1.3M1678 576h1.3M1681 570h1.3M1684 563h1.3M1687 557h1.3M1690 551h1.3M1693 545h1.3M1696 540h1.3M1699 534h1.3M1702 528h1.3M1705 522h1.3M1707 516h1.3M1710 511h1.3M1713 505h1.3M1492 983h1.3M1497 973h1.3M1502 963h1.3M1506 954h1.3M1511 944h1.3M1516 935h1.3M1520 926h1.3M1525 916h1.3M1529 907h1.3M1534 898h1.3M1538 889h1.3M1542 880h1.3M1546 871h1.3M1551 863h1.3M1555 854h1.3M1559 845h1.3M1563 837h1.3M1567 829h1.3M1571 820h1.3M1575 812h1.3M1579 804h1.3M1583 796h1.3M1587 788h1.3M1591 780h1.3M1595 772h1.3M1599 764h1.3M1602 756h1.3M1606 749h1.3M1610 741h1.3M1613 733h1.3M1617 726h1.3M1621 719h1.3M1624 711h1.3M1628 704h1.3M1631 697h1.3M1635 690h1.3M1638 682h1.3M1642 675h1.3M1645 668h1.3M1648 662h1.3M1652 655h1.3M1655 648h1.3M1658 641h1.3M1661 634h1.3M1665 628h1.3M1668 621h1.3M1671 615h1.3M1674 608h1.3M1677 602h1.3M1680 595h1.3M1683 589h1.3M1686 583h1.3M1689 577h1.3M1692 570h1.3M1695 564h1.3M1698 558h1.3M1701 552h1.3M1704 546h1.3M1707 540h1.3M1710 535h1.3M1713 529h1.3M1507 985h1.3M1511 975h1.3M1516 965h1.3M1521 955h1.3M1525 946h1.3M1530 936h1.3M1534 927h1.3M1539 918h1.3M1543 909h1.3M1547 899h1.3M1552 890h1.3M1556 882h1.3M1560 873h1.3M1564 864h1.3M1568 855h1.3M1572 847h1.3M1576 838h1.3M1580 830h1.3M1584 821h1.3M1588 813h1.3M1592 805h1.3M1596 797h1.3M1600 789h1.3M1604 781h1.3M1608 773h1.3M1611 765h1.3M1615 757h1.3M1619 750h1.3M1622 742h1.3M1626 735h1.3M1630 727h1.3M1633 720h1.3M1637 712h1.3M1640 705h1.3M1644 698h1.3M1647 691h1.3M1650 683h1.3M1654 676h1.3M1657 669h1.3M1660 663h1.3M1664 656h1.3M1667 649h1.3M1670 642h1.3M1673 635h1.3M1676 629h1.3M1680 622h1.3M1683 616h1.3M1686 609h1.3M1689 603h1.3M1692 596h1.3M1695 590h1.3M1698 584h1.3M1701 578h1.3M1704 571h1.3M1707 565h1.3M1710 559h1.3M1713 553h1.3M1521 986h1.3M1526 976h1.3M1530 966h1.3M1535 957h1.3M1539 947h1.3M1544 938h1.3M1548 928h1.3M1552 919h1.3M1557 910h1.3M1561 901h1.3M1565 892h1.3M1569 883h1.3M1574 874h1.3M1578 865h1.3M1582 857h1.3M1586 848h1.3M1590 839h1.3M1594 831h1.3M1598 823h1.3M1602 814h1.3M1605 806h1.3M1609 798h1.3M1613 790h1.3M1617 782h1.3M1620 774h1.3M1624 766h1.3M1628 759h1.3M1631 751h1.3M1635 743h1.3M1639 736h1.3M1642 728h1.3M1646 721h1.3M1649 713h1.3M1652 706h1.3M1656 699h1.3M1659 692h1.3M1663 685h1.3M1666 678h1.3M1669 671h1.3M1672 664h1.3M1676 657h1.3M1679 650h1.3M1682 643h1.3M1685 636h1.3M1688 630h1.3M1691 623h1.3M1694 617h1.3M1698 610h1.3M1701 604h1.3M1704 597h1.3M1707 591h1.3M1709 585h1.3M1712 579h1.3M1535 988h1.3M1540 978h1.3M1544 968h1.3M1549 958h1.3M1553 949h1.3M1558 939h1.3M1562 930h1.3M1566 920h1.3M1571 911h1.3M1575 902h1.3M1579 893h1.3M1583 884h1.3M1587 875h1.3M1591 867h1.3M1595 858h1.3M1599 849h1.3M1603 841h1.3M1607 832h1.3M1611 824h1.3M1615 816h1.3M1618 807h1.3M1622 799h1.3M1626 791h1.3M1630 783h1.3M1633 775h1.3M1637 767h1.3M1641 760h1.3M1644 752h1.3M1648 744h1.3M1651 737h1.3M1655 729h1.3M1658 722h1.3M1661 714h1.3M1665 707h1.3M1668 700h1.3M1671 693h1.3M1675 686h1.3M1678 679h1.3M1681 672h1.3M1684 665h1.3M1688 658h1.3M1691 651h1.3M1694 644h1.3M1697 637h1.3M1700 631h1.3M1703 624h1.3M1706 618h1.3M1709 611h1.3M1712 605h1.3M1550 989h1.3M1554 979h1.3M1559 969h1.3M1563 960h1.3M1567 950h1.3M1572 941h1.3M1576 931h1.3M1580 922h1.3M1584 913h1.3M1588 904h1.3M1593 894h1.3M1597 886h1.3M1601 877h1.3M1605 868h1.3M1609 859h1.3M1613 851h1.3M1616 842h1.3M1620 834h1.3M1624 825h1.3M1628 817h1.3M1632 809h1.3M1635 801h1.3M1639 792h1.3M1643 784h1.3M1646 777h1.3M1650 769h1.3M1653 761h1.3M1657 753h1.3M1660 746h1.3M1664 738h1.3M1667 730h1.3M1671 723h1.3M1674 716h1.3M1677 708h1.3M1681 701h1.3M1684 694h1.3M1687 687h1.3M1690 680h1.3M1693 673h1.3M1697 666h1.3M1700 659h1.3M1703 652h1.3M1706 645h1.3M1709 638h1.3M1712 632h1.3M1564 990h1.3M1568 981h1.3M1573 971h1.3M1577 961h1.3M1581 951h1.3M1586 942h1.3M1590 933h1.3M1594 923h1.3M1598 914h1.3M1602 905h1.3M1606 896h1.3M1610 887h1.3M1614 878h1.3M1618 869h1.3M1622 860h1.3M1626 852h1.3M1630 843h1.3M1634 835h1.3M1637 826h1.3M1641 818h1.3M1645 810h1.3M1648 802h1.3M1652 794h1.3M1656 786h1.3M1659 778h1.3M1663 770h1.3M1666 762h1.3M1670 754h1.3M1673 747h1.3M1676 739h1.3M1680 732h1.3M1683 724h1.3M1686 717h1.3M1690 709h1.3M1693 702h1.3M1696 695h1.3M1699 688h1.3M1702 681h1.3M1706 674h1.3M1709 667h1.3M1712 660h1.3M1578 992h1.3M1583 982h1.3M1587 972h1.3M1591 963h1.3M1596 953h1.3M1600 943h1.3M1604 934h1.3M1608 925h1.3M1612 915h1.3M1616 906h1.3M1620 897h1.3M1624 888h1.3M1628 879h1.3M1632 871h1.3M1636 862h1.3M1639 853h1.3M1643 845h1.3M1647 836h1.3M1651 828h1.3M1654 819h1.3M1658 811h1.3M1661 803h1.3M1665 795h1.3M1669 787h1.3M1672 779h1.3M1675 771h1.3M1679 763h1.3M1682 755h1.3M1686 748h1.3M1689 740h1.3M1692 733h1.3M1696 725h1.3M1699 718h1.3M1702 710h1.3M1705 703h1.3M1708 696h1.3M1712 689h1.3M1597 984h1.3M1601 974h1.3M1606 964h1.3M1610 954h1.3M1614 945h1.3M1618 935h1.3M1622 926h1.3M1626 917h1.3M1630 908h1.3M1634 899h1.3M1638 890h1.3M1642 881h1.3M1645 872h1.3M1649 863h1.3M1653 854h1.3M1657 846h1.3M1660 837h1.3M1664 829h1.3M1667 821h1.3M1671 812h1.3M1675 804h1.3M1678 796h1.3M1682 788h1.3M1685 780h1.3M1688 772h1.3M1692 764h1.3M1695 757h1.3M1698 749h1.3M1702 741h1.3M1705 734h1.3M1708 726h1.3M1711 719h1.3M1612 985h1.3M1616 975h1.3M1620 965h1.3M1624 956h1.3M1628 946h1.3M1632 937h1.3M1636 927h1.3M1640 918h1.3M1644 909h1.3M1648 900h1.3M1651 891h1.3M1655 882h1.3M1659 873h1.3M1663 864h1.3M1666 856h1.3M1670 847h1.3M1674 839h1.3M1677 830h1.3M1681 822h1.3M1684 814h1.3M1688 805h1.3M1691 797h1.3M1695 789h1.3M1698 781h1.3M1701 773h1.3M1705 766h1.3M1708 758h1.3M1711 750h1.3M1626 987h1.3M1630 977h1.3M1634 967h1.3M1638 957h1.3M1642 948h1.3M1646 938h1.3M1650 929h1.3M1654 920h1.3M1658 910h1.3M1661 901h1.3M1665 892h1.3M1669 883h1.3M1673 874h1.3M1676 866h1.3M1680 857h1.3M1683 848h1.3M1687 840h1.3M1690 831h1.3M1694 823h1.3M1697 815h1.3M1701 807h1.3M1704 799h1.3M1708 790h1.3M1711 782h1.3M1640 988h1.3M1644 978h1.3M1648 968h1.3M1652 959h1.3M1656 949h1.3M1660 940h1.3M1664 930h1.3M1668 921h1.3M1672 912h1.3M1675 903h1.3M1679 894h1.3M1683 885h1.3M1686 876h1.3M1690 867h1.3M1693 858h1.3M1697 850h1.3M1700 841h1.3M1704 833h1.3M1707 824h1.3M1711 816h1.3M1655 990h1.3M1659 980h1.3M1663 970h1.3M1667 960h1.3M1670 951h1.3M1674 941h1.3M1678 932h1.3M1682 922h1.3M1685 913h1.3M1689 904h1.3M1693 895h1.3M1696 886h1.3M1700 877h1.3M1703 868h1.3M1707 860h1.3M1710 851h1.3M1669 991h1.3M1673 981h1.3M1677 971h1.3M1681 962h1.3M1685 952h1.3M1688 942h1.3M1692 933h1.3M1696 924h1.3M1699 915h1.3M1703 905h1.3M1707 896h1.3M1710 887h1.3M1688 983h1.3M1691 973h1.3M1695 963h1.3M1699 953h1.3M1703 944h1.3M1706 934h1.3M1710 925h1.3M1702 984h1.3M1706 974h1.3M1710 965h1.3" stroke="#a4a4a4" stroke-width="1.3" fill="none"/>
<g stroke="#1e8486" stroke-width="1.7"><line x1="-109.4" y1="861.8" x2="638.3" y2="325" /><line x1="638.3" y1="325" x2="2752.3" y2="478" /><line x1="-109.4" y1="861.8" x2="2904.9" y2="1182.4" /><line x1="214.2" y1="629.5" x2="2837" y2="869" /><line x1="819.9" y1="960.7" x2="1312.6" y2="373.8" /><line x1="638.3" y1="325" x2="635.5" y2="68.4" /><line x1="635.5" y1="68.4" x2="2782.7" y2="193.5" /></g>
<clipPath id="fc"><polygon points="279.8,843.3 727.7,467.6 1701.7,545.3 1495.5,968.5" /></clipPath>
<polygon points="279.8,843.3 727.7,467.6 1701.7,545.3 1495.5,968.5" fill="#6d6d6d"/>
<g clip-path="url(#fc)"><g stroke="#686868" stroke-width="1.1"><line x1="-104.5" y1="876.4" x2="661.9" y2="320.6" /><line x1="20.3" y1="889.7" x2="752.8" y2="327.1" /><line x1="146.9" y1="903.3" x2="844.5" y2="333.8" /><line x1="275.4" y1="917.1" x2="937.2" y2="340.4" /><line x1="405.7" y1="931" x2="1030.9" y2="347.2" /><line x1="538" y1="945.2" x2="1125.5" y2="354" /><line x1="672.3" y1="959.6" x2="1221" y2="360.9" /><line x1="808.5" y1="974.2" x2="1317.6" y2="367.8" /><line x1="946.8" y1="989" x2="1415.1" y2="374.9" /><line x1="1087.3" y1="1004.1" x2="1513.7" y2="382" /><line x1="1229.8" y1="1019.4" x2="1613.3" y2="389.1" /><line x1="1374.6" y1="1034.9" x2="1713.9" y2="396.4" /><line x1="1521.6" y1="1050.6" x2="1815.6" y2="403.7" /><line x1="1671" y1="1066.6" x2="1918.4" y2="411.1" /><line x1="1822.7" y1="1082.9" x2="2022.3" y2="418.6" /><line x1="1976.8" y1="1099.4" x2="2127.3" y2="426.2" /><line x1="2133.4" y1="1116.2" x2="2233.5" y2="433.8" /><line x1="2292.6" y1="1133.2" x2="2340.8" y2="441.6" /><line x1="2454.3" y1="1150.6" x2="2449.2" y2="449.4" /><line x1="2618.7" y1="1168.2" x2="2558.9" y2="457.3" /><line x1="2785.8" y1="1186.1" x2="2669.8" y2="465.3" /><line x1="-129.5" y1="853.5" x2="2903.3" y2="1175" /><line x1="-70.1" y1="811.4" x2="2890.7" y2="1117.1" /><line x1="-13.5" y1="771.3" x2="2878.8" y2="1062.2" /><line x1="40.6" y1="732.9" x2="2867.6" y2="1010.2" /><line x1="92.5" y1="696.1" x2="2856.9" y2="960.8" /><line x1="142.1" y1="661" x2="2846.7" y2="913.7" /><line x1="189.6" y1="627.2" x2="2837" y2="869" /><line x1="235.2" y1="594.9" x2="2827.7" y2="826.2" /><line x1="279.1" y1="563.8" x2="2818.9" y2="785.5" /><line x1="321.2" y1="533.9" x2="2810.4" y2="746.5" /><line x1="361.7" y1="505.2" x2="2802.4" y2="709.3" /><line x1="400.6" y1="477.6" x2="2794.6" y2="673.6" /><line x1="438.2" y1="451" x2="2787.2" y2="639.4" /><line x1="474.4" y1="425.3" x2="2780.1" y2="606.6" /><line x1="509.3" y1="400.6" x2="2773.3" y2="575.1" /><line x1="542.9" y1="376.7" x2="2766.7" y2="544.9" /><line x1="575.5" y1="353.6" x2="2760.4" y2="515.8" /><line x1="606.9" y1="331.3" x2="2754.4" y2="487.8" /></g><g stroke="#646d6d" stroke-width="1.2"><line x1="-109.4" y1="861.8" x2="638.3" y2="325" /><line x1="638.3" y1="325" x2="2752.3" y2="478" /><line x1="-109.4" y1="861.8" x2="2904.9" y2="1182.4" /><line x1="214.2" y1="629.5" x2="2837" y2="869" /><line x1="819.9" y1="960.7" x2="1312.6" y2="373.8" /><line x1="638.3" y1="325" x2="635.5" y2="68.4" /><line x1="635.5" y1="68.4" x2="2782.7" y2="193.5" /></g><path d="M295 840h1.3M305 831h1.3M315 823h1.3M324 814h1.3M334 806h1.3M344 798h1.3M353 790h1.3M363 782h1.3M372 774h1.3M382 766h1.3M391 759h1.3M400 751h1.3M409 743h1.3M418 736h1.3M427 728h1.3M436 721h1.3M444 713h1.3M453 706h1.3M462 699h1.3M470 692h1.3M479 685h1.3M487 677h1.3M495 670h1.3M504 664h1.3M512 657h1.3M520 650h1.3M528 643h1.3M536 636h1.3M544 630h1.3M551 623h1.3M559 617h1.3M567 610h1.3M575 604h1.3M582 597h1.3M590 591h1.3M597 585h1.3M604 578h1.3M612 572h1.3M619 566h1.3M626 560h1.3M633 554h1.3M641 548h1.3M648 542h1.3M655 536h1.3M662 530h1.3M668 524h1.3M675 519h1.3M682 513h1.3M689 507h1.3M695 502h1.3M702 496h1.3M709 491h1.3M715 485h1.3M722 480h1.3M728 474h1.3M734 469h1.3M307 841h1.3M317 832h1.3M327 824h1.3M337 816h1.3M346 807h1.3M356 799h1.3M366 791h1.3M375 783h1.3M384 775h1.3M394 767h1.3M403 760h1.3M412 752h1.3M421 744h1.3M430 737h1.3M439 729h1.3M447 722h1.3M456 714h1.3M465 707h1.3M473 700h1.3M482 693h1.3M490 686h1.3M498 679h1.3M507 672h1.3M515 665h1.3M523 658h1.3M531 651h1.3M539 644h1.3M547 637h1.3M555 631h1.3M563 624h1.3M570 618h1.3M578 611h1.3M586 605h1.3M593 598h1.3M601 592h1.3M608 586h1.3M615 579h1.3M623 573h1.3M630 567h1.3M637 561h1.3M644 555h1.3M651 549h1.3M658 543h1.3M665 537h1.3M672 531h1.3M679 525h1.3M686 520h1.3M692 514h1.3M699 508h1.3M706 503h1.3M712 497h1.3M719 491h1.3M725 486h1.3M732 480h1.3M738 475h1.3M745 470h1.3M320 842h1.3M329 834h1.3M339 825h1.3M349 817h1.3M359 809h1.3M368 801h1.3M378 792h1.3M387 784h1.3M396 777h1.3M406 769h1.3M415 761h1.3M424 753h1.3M433 746h1.3M442 738h1.3M450 730h1.3M459 723h1.3M468 716h1.3M476 708h1.3M485 701h1.3M493 694h1.3M502 687h1.3M510 680h1.3M518 673h1.3M526 666h1.3M534 659h1.3M542 652h1.3M550 645h1.3M558 638h1.3M566 632h1.3M574 625h1.3M581 619h1.3M589 612h1.3M597 606h1.3M604 599h1.3M611 593h1.3M619 587h1.3M626 580h1.3M633 574h1.3M641 568h1.3M648 562h1.3M655 556h1.3M662 550h1.3M669 544h1.3M676 538h1.3M683 532h1.3M689 526h1.3M696 520h1.3M703 515h1.3M710 509h1.3M716 503h1.3M723 498h1.3M729 492h1.3M736 487h1.3M742 481h1.3M748 476h1.3M755 470h1.3M332 843h1.3M342 835h1.3M352 827h1.3M361 818h1.3M371 810h1.3M380 802h1.3M390 794h1.3M399 786h1.3M408 778h1.3M418 770h1.3M427 762h1.3M436 754h1.3M445 747h1.3M453 739h1.3M462 732h1.3M471 724h1.3M479 717h1.3M488 709h1.3M496 702h1.3M505 695h1.3M513 688h1.3M521 681h1.3M530 674h1.3M538 667h1.3M546 660h1.3M554 653h1.3M562 646h1.3M569 639h1.3M577 633h1.3M585 626h1.3M592 620h1.3M600 613h1.3M608 607h1.3M615 600h1.3M622 594h1.3M630 587h1.3M637 581h1.3M644 575h1.3M651 569h1.3M658 563h1.3M666 557h1.3M673 551h1.3M679 545h1.3M686 539h1.3M693 533h1.3M700 527h1.3M707 521h1.3M713 516h1.3M720 510h1.3M726 504h1.3M733 499h1.3M739 493h1.3M746 488h1.3M752 482h1.3M759 477h1.3M765 471h1.3M345 845h1.3M354 836h1.3M364 828h1.3M374 819h1.3M383 811h1.3M393 803h1.3M402 795h1.3M411 787h1.3M420 779h1.3M430 771h1.3M439 763h1.3M448 755h1.3M456 748h1.3M465 740h1.3M474 733h1.3M483 725h1.3M491 718h1.3M500 710h1.3M508 703h1.3M516 696h1.3M525 689h1.3M533 682h1.3M541 675h1.3M549 668h1.3M557 661h1.3M565 654h1.3M573 647h1.3M581 640h1.3M588 634h1.3M596 627h1.3M604 620h1.3M611 614h1.3M619 607h1.3M626 601h1.3M633 595h1.3M641 588h1.3M648 582h1.3M655 576h1.3M662 570h1.3M669 564h1.3M676 558h1.3M683 552h1.3M690 546h1.3M697 540h1.3M704 534h1.3M710 528h1.3M717 522h1.3M724 516h1.3M730 511h1.3M737 505h1.3M743 500h1.3M750 494h1.3M756 488h1.3M763 483h1.3M769 477h1.3M775 472h1.3M357 846h1.3M367 837h1.3M376 829h1.3M386 821h1.3M396 812h1.3M405 804h1.3M414 796h1.3M423 788h1.3M433 780h1.3M442 772h1.3M451 764h1.3M460 757h1.3M468 749h1.3M477 741h1.3M486 734h1.3M494 726h1.3M503 719h1.3M511 712h1.3M520 704h1.3M528 697h1.3M536 690h1.3M544 683h1.3M552 676h1.3M560 669h1.3M568 662h1.3M576 655h1.3M584 648h1.3M592 641h1.3M599 635h1.3M607 628h1.3M615 621h1.3M622 615h1.3M630 608h1.3M637 602h1.3M644 596h1.3M652 589h1.3M659 583h1.3M666 577h1.3M673 571h1.3M680 565h1.3M687 559h1.3M694 552h1.3M701 547h1.3M708 541h1.3M714 535h1.3M721 529h1.3M728 523h1.3M734 517h1.3M741 512h1.3M747 506h1.3M754 500h1.3M760 495h1.3M766 489h1.3M773 484h1.3M779 478h1.3M785 473h1.3M370 847h1.3M379 839h1.3M389 830h1.3M398 822h1.3M408 814h1.3M417 805h1.3M426 797h1.3M436 789h1.3M445 781h1.3M454 773h1.3M463 766h1.3M471 758h1.3M480 750h1.3M489 742h1.3M498 735h1.3M506 727h1.3M515 720h1.3M523 713h1.3M531 705h1.3M540 698h1.3M548 691h1.3M556 684h1.3M564 677h1.3M572 670h1.3M580 663h1.3M588 656h1.3M595 649h1.3M603 642h1.3M611 636h1.3M618 629h1.3M626 622h1.3M633 616h1.3M641 609h1.3M648 603h1.3M655 597h1.3M662 590h1.3M670 584h1.3M677 578h1.3M684 572h1.3M691 566h1.3M698 559h1.3M705 553h1.3M711 547h1.3M718 541h1.3M725 536h1.3M731 530h1.3M738 524h1.3M745 518h1.3M751 512h1.3M758 507h1.3M764 501h1.3M770 496h1.3M777 490h1.3M783 485h1.3M789 479h1.3M795 474h1.3M382 849h1.3M392 840h1.3M401 832h1.3M411 823h1.3M420 815h1.3M429 807h1.3M439 799h1.3M448 790h1.3M457 782h1.3M466 775h1.3M475 767h1.3M483 759h1.3M492 751h1.3M501 744h1.3M509 736h1.3M518 729h1.3M526 721h1.3M535 714h1.3M543 706h1.3M551 699h1.3M559 692h1.3M567 685h1.3M575 678h1.3M583 671h1.3M591 664h1.3M599 657h1.3M607 650h1.3M614 643h1.3M622 637h1.3M629 630h1.3M637 623h1.3M644 617h1.3M652 610h1.3M659 604h1.3M666 598h1.3M673 591h1.3M681 585h1.3M688 579h1.3M695 573h1.3M702 566h1.3M708 560h1.3M715 554h1.3M722 548h1.3M729 542h1.3M735 536h1.3M742 531h1.3M749 525h1.3M755 519h1.3M762 513h1.3M768 508h1.3M774 502h1.3M781 496h1.3M787 491h1.3M793 485h1.3M799 480h1.3M806 475h1.3M395 850h1.3M404 841h1.3M414 833h1.3M423 824h1.3M432 816h1.3M442 808h1.3M451 800h1.3M460 792h1.3M469 784h1.3M478 776h1.3M487 768h1.3M495 760h1.3M504 752h1.3M513 745h1.3M521 737h1.3M530 730h1.3M538 722h1.3M546 715h1.3M555 708h1.3M563 700h1.3M571 693h1.3M579 686h1.3M587 679h1.3M595 672h1.3M603 665h1.3M610 658h1.3M618 651h1.3M626 644h1.3M633 638h1.3M641 631h1.3M648 624h1.3M655 618h1.3M663 611h1.3M670 605h1.3M677 599h1.3M684 592h1.3M691 586h1.3M698 580h1.3M705 573h1.3M712 567h1.3M719 561h1.3M726 555h1.3M733 549h1.3M739 543h1.3M746 537h1.3M753 531h1.3M759 526h1.3M766 520h1.3M772 514h1.3M778 509h1.3M785 503h1.3M791 497h1.3M797 492h1.3M804 486h1.3M810 481h1.3M816 475h1.3M407 851h1.3M417 843h1.3M426 834h1.3M436 826h1.3M445 817h1.3M454 809h1.3M463 801h1.3M472 793h1.3M481 785h1.3M490 777h1.3M499 769h1.3M507 761h1.3M516 754h1.3M525 746h1.3M533 738h1.3M542 731h1.3M550 723h1.3M558 716h1.3M566 709h1.3M574 701h1.3M582 694h1.3M590 687h1.3M598 680h1.3M606 673h1.3M614 666h1.3M622 659h1.3M629 652h1.3M637 645h1.3M644 639h1.3M652 632h1.3M659 625h1.3M667 619h1.3M674 612h1.3M681 606h1.3M688 600h1.3M695 593h1.3M702 587h1.3M709 581h1.3M716 574h1.3M723 568h1.3M730 562h1.3M737 556h1.3M743 550h1.3M750 544h1.3M757 538h1.3M763 532h1.3M770 527h1.3M776 521h1.3M783 515h1.3M789 509h1.3M795 504h1.3M801 498h1.3M808 493h1.3M814 487h1.3M820 482h1.3M826 476h1.3M420 852h1.3M429 844h1.3M439 835h1.3M448 827h1.3M457 819h1.3M466 810h1.3M475 802h1.3M484 794h1.3M493 786h1.3M502 778h1.3M511 770h1.3M520 762h1.3M528 755h1.3M537 747h1.3M545 739h1.3M553 732h1.3M562 724h1.3M570 717h1.3M578 710h1.3M586 702h1.3M594 695h1.3M602 688h1.3M610 681h1.3M618 674h1.3M625 667h1.3M633 660h1.3M641 653h1.3M648 646h1.3M656 640h1.3M663 633h1.3M670 626h1.3M678 620h1.3M685 613h1.3M692 607h1.3M699 600h1.3M706 594h1.3M713 588h1.3M720 582h1.3M727 575h1.3M734 569h1.3M741 563h1.3M747 557h1.3M754 551h1.3M761 545h1.3M767 539h1.3M774 533h1.3M780 527h1.3M787 522h1.3M793 516h1.3M799 510h1.3M806 505h1.3M812 499h1.3M818 493h1.3M824 488h1.3M830 482h1.3M836 477h1.3M432 854h1.3M442 845h1.3M451 837h1.3M460 828h1.3M470 820h1.3M479 812h1.3M488 803h1.3M497 795h1.3M506 787h1.3M514 779h1.3M523 771h1.3M532 764h1.3M540 756h1.3M549 748h1.3M557 741h1.3M565 733h1.3M573 726h1.3M582 718h1.3M590 711h1.3M598 704h1.3M606 696h1.3M614 689h1.3M621 682h1.3M629 675h1.3M637 668h1.3M644 661h1.3M652 654h1.3M660 647h1.3M667 641h1.3M674 634h1.3M682 627h1.3M689 621h1.3M696 614h1.3M703 608h1.3M710 601h1.3M717 595h1.3M724 589h1.3M731 582h1.3M738 576h1.3M745 570h1.3M751 564h1.3M758 558h1.3M765 552h1.3M771 546h1.3M778 540h1.3M784 534h1.3M791 528h1.3M797 523h1.3M804 517h1.3M810 511h1.3M816 505h1.3M822 500h1.3M828 494h1.3M834 489h1.3M840 483h1.3M846 478h1.3M445 855h1.3M454 846h1.3M464 838h1.3M473 829h1.3M482 821h1.3M491 813h1.3M500 805h1.3M509 797h1.3M518 789h1.3M526 781h1.3M535 773h1.3M544 765h1.3M552 757h1.3M561 749h1.3M569 742h1.3M577 734h1.3M585 727h1.3M593 719h1.3M601 712h1.3M609 705h1.3M617 697h1.3M625 690h1.3M633 683h1.3M641 676h1.3M648 669h1.3M656 662h1.3M663 655h1.3M671 649h1.3M678 642h1.3M686 635h1.3M693 628h1.3M700 622h1.3M707 615h1.3M714 609h1.3M721 602h1.3M728 596h1.3M735 590h1.3M742 583h1.3M749 577h1.3M756 571h1.3M762 565h1.3M769 559h1.3M776 553h1.3M782 547h1.3M789 541h1.3M795 535h1.3M801 529h1.3M808 523h1.3M814 518h1.3M820 512h1.3M826 506h1.3M833 501h1.3M839 495h1.3M845 490h1.3M851 484h1.3M857 479h1.3M458 856h1.3M467 848h1.3M476 839h1.3M485 831h1.3M494 822h1.3M503 814h1.3M512 806h1.3M521 798h1.3M530 790h1.3M539 782h1.3M547 774h1.3M556 766h1.3M564 758h1.3M573 751h1.3M581 743h1.3M589 735h1.3M597 728h1.3M605 720h1.3M613 713h1.3M621 706h1.3M629 698h1.3M637 691h1.3M645 684h1.3M652 677h1.3M660 670h1.3M667 663h1.3M675 656h1.3M682 650h1.3M690 643h1.3M697 636h1.3M704 629h1.3M711 623h1.3M718 616h1.3M725 610h1.3M732 603h1.3M739 597h1.3M746 591h1.3M753 584h1.3M760 578h1.3M766 572h1.3M773 566h1.3M780 560h1.3M786 554h1.3M793 548h1.3M799 542h1.3M806 536h1.3M812 530h1.3M818 524h1.3M825 519h1.3M831 513h1.3M837 507h1.3M843 502h1.3M849 496h1.3M855 490h1.3M861 485h1.3M867 479h1.3M470 858h1.3M480 849h1.3M489 840h1.3M498 832h1.3M507 824h1.3M516 815h1.3M525 807h1.3M534 799h1.3M542 791h1.3M551 783h1.3M559 775h1.3M568 767h1.3M576 759h1.3M585 752h1.3M593 744h1.3M601 736h1.3M609 729h1.3M617 722h1.3M625 714h1.3M633 707h1.3M641 700h1.3M648 692h1.3M656 685h1.3M664 678h1.3M671 671h1.3M679 664h1.3M686 657h1.3M694 651h1.3M701 644h1.3M708 637h1.3M715 630h1.3M722 624h1.3M729 617h1.3M736 611h1.3M743 604h1.3M750 598h1.3M757 592h1.3M764 585h1.3M771 579h1.3M777 573h1.3M784 567h1.3M791 561h1.3M797 555h1.3M803 549h1.3M810 543h1.3M816 537h1.3M823 531h1.3M829 525h1.3M835 519h1.3M841 514h1.3M847 508h1.3M853 502h1.3M859 497h1.3M865 491h1.3M871 486h1.3M877 480h1.3M483 859h1.3M492 850h1.3M501 842h1.3M510 833h1.3M519 825h1.3M528 817h1.3M537 808h1.3M546 800h1.3M554 792h1.3M563 784h1.3M572 776h1.3M580 768h1.3M588 761h1.3M597 753h1.3M605 745h1.3M613 738h1.3M621 730h1.3M629 723h1.3M637 715h1.3M645 708h1.3M652 701h1.3M660 693h1.3M668 686h1.3M675 679h1.3M683 672h1.3M690 665h1.3M698 658h1.3M705 652h1.3M712 645h1.3M719 638h1.3M727 631h1.3M734 625h1.3M741 618h1.3M748 612h1.3M755 605h1.3M761 599h1.3M768 593h1.3M775 586h1.3M782 580h1.3M788 574h1.3M795 568h1.3M801 562h1.3M808 556h1.3M814 550h1.3M821 544h1.3M827 538h1.3M833 532h1.3M839 526h1.3M846 520h1.3M852 515h1.3M858 509h1.3M864 503h1.3M870 498h1.3M876 492h1.3M882 487h1.3M888 481h1.3M496 860h1.3M505 852h1.3M514 843h1.3M523 835h1.3M532 826h1.3M541 818h1.3M549 810h1.3M558 801h1.3M567 793h1.3M575 785h1.3M584 777h1.3M592 770h1.3M600 762h1.3M609 754h1.3M617 746h1.3M625 739h1.3M633 731h1.3M641 724h1.3M649 716h1.3M656 709h1.3M664 702h1.3M672 695h1.3M679 687h1.3M687 680h1.3M694 673h1.3M702 666h1.3M709 659h1.3M716 653h1.3M724 646h1.3M731 639h1.3M738 632h1.3M745 626h1.3M752 619h1.3M759 613h1.3M766 606h1.3M772 600h1.3M779 594h1.3M786 587h1.3M793 581h1.3M799 575h1.3M806 569h1.3M812 563h1.3M819 556h1.3M825 550h1.3M831 544h1.3M838 539h1.3M844 533h1.3M850 527h1.3M856 521h1.3M862 515h1.3M868 510h1.3M874 504h1.3M880 498h1.3M886 493h1.3M892 487h1.3M898 482h1.3M508 861h1.3M518 853h1.3M527 844h1.3M536 836h1.3M544 827h1.3M553 819h1.3M562 811h1.3M570 803h1.3M579 795h1.3M588 787h1.3M596 779h1.3M604 771h1.3M612 763h1.3M621 755h1.3M629 747h1.3M637 740h1.3M645 732h1.3M653 725h1.3M660 717h1.3M668 710h1.3M676 703h1.3M683 696h1.3M691 688h1.3M698 681h1.3M706 674h1.3M713 667h1.3M721 660h1.3M728 654h1.3M735 647h1.3M742 640h1.3M749 633h1.3M756 627h1.3M763 620h1.3M770 614h1.3M777 607h1.3M783 601h1.3M790 594h1.3M797 588h1.3M803 582h1.3M810 576h1.3M817 570h1.3M823 563h1.3M829 557h1.3M836 551h1.3M842 545h1.3M848 539h1.3M854 534h1.3M861 528h1.3M867 522h1.3M873 516h1.3M879 511h1.3M885 505h1.3M891 499h1.3M897 494h1.3M902 488h1.3M908 483h1.3M521 863h1.3M530 854h1.3M539 846h1.3M548 837h1.3M557 829h1.3M566 820h1.3M574 812h1.3M583 804h1.3M591 796h1.3M600 788h1.3M608 780h1.3M616 772h1.3M625 764h1.3M633 756h1.3M641 749h1.3M649 741h1.3M657 733h1.3M664 726h1.3M672 719h1.3M680 711h1.3M688 704h1.3M695 697h1.3M703 690h1.3M710 682h1.3M717 675h1.3M725 668h1.3M732 662h1.3M739 655h1.3M746 648h1.3M753 641h1.3M760 634h1.3M767 628h1.3M774 621h1.3M781 615h1.3M788 608h1.3M795 602h1.3M801 595h1.3M808 589h1.3M814 583h1.3M821 577h1.3M827 570h1.3M834 564h1.3M840 558h1.3M846 552h1.3M853 546h1.3M859 540h1.3M865 534h1.3M871 529h1.3M877 523h1.3M883 517h1.3M889 511h1.3M895 506h1.3M901 500h1.3M907 495h1.3M913 489h1.3M918 484h1.3M534 864h1.3M543 855h1.3M552 847h1.3M561 838h1.3M569 830h1.3M578 822h1.3M587 813h1.3M595 805h1.3M604 797h1.3M612 789h1.3M620 781h1.3M629 773h1.3M637 765h1.3M645 757h1.3M653 750h1.3M661 742h1.3M669 735h1.3M676 727h1.3M684 720h1.3M692 712h1.3M699 705h1.3M707 698h1.3M714 691h1.3M722 684h1.3M729 676h1.3M736 669h1.3M743 663h1.3M751 656h1.3M758 649h1.3M765 642h1.3M772 635h1.3M779 629h1.3M785 622h1.3M792 616h1.3M799 609h1.3M806 603h1.3M812 596h1.3M819 590h1.3M825 584h1.3M832 578h1.3M838 571h1.3M845 565h1.3M851 559h1.3M857 553h1.3M863 547h1.3M870 541h1.3M876 535h1.3M882 530h1.3M888 524h1.3M894 518h1.3M900 512h1.3M906 507h1.3M911 501h1.3M917 495h1.3M923 490h1.3M929 484h1.3M547 865h1.3M556 857h1.3M564 848h1.3M573 840h1.3M582 831h1.3M591 823h1.3M599 815h1.3M608 806h1.3M616 798h1.3M624 790h1.3M633 782h1.3M641 774h1.3M649 766h1.3M657 759h1.3M665 751h1.3M673 743h1.3M681 736h1.3M688 728h1.3M696 721h1.3M704 713h1.3M711 706h1.3M719 699h1.3M726 692h1.3M733 685h1.3M741 678h1.3M748 671h1.3M755 664h1.3M762 657h1.3M769 650h1.3M776 643h1.3M783 636h1.3M790 630h1.3M797 623h1.3M803 617h1.3M810 610h1.3M817 604h1.3M823 597h1.3M830 591h1.3M836 585h1.3M843 578h1.3M849 572h1.3M856 566h1.3M862 560h1.3M868 554h1.3M874 548h1.3M880 542h1.3M886 536h1.3M892 530h1.3M898 525h1.3M904 519h1.3M910 513h1.3M916 507h1.3M922 502h1.3M928 496h1.3M933 491h1.3M939 485h1.3M559 867h1.3M568 858h1.3M577 849h1.3M586 841h1.3M595 832h1.3M603 824h1.3M612 816h1.3M620 808h1.3M628 799h1.3M637 791h1.3M645 783h1.3M653 775h1.3M661 768h1.3M669 760h1.3M677 752h1.3M685 744h1.3M692 737h1.3M700 729h1.3M708 722h1.3M715 715h1.3M723 707h1.3M730 700h1.3M738 693h1.3M745 686h1.3M752 679h1.3M759 672h1.3M766 665h1.3M774 658h1.3M781 651h1.3M787 644h1.3M794 637h1.3M801 631h1.3M808 624h1.3M815 618h1.3M821 611h1.3M828 605h1.3M834 598h1.3M841 592h1.3M847 586h1.3M854 579h1.3M860 573h1.3M866 567h1.3M873 561h1.3M879 555h1.3M885 549h1.3M891 543h1.3M897 537h1.3M903 531h1.3M909 525h1.3M915 520h1.3M921 514h1.3M927 508h1.3M932 503h1.3M938 497h1.3M944 492h1.3M949 486h1.3M572 868h1.3M581 859h1.3M590 851h1.3M599 842h1.3M607 834h1.3M616 825h1.3M624 817h1.3M632 809h1.3M641 801h1.3M649 793h1.3M657 785h1.3M665 777h1.3M673 769h1.3M681 761h1.3M689 753h1.3M697 746h1.3M704 738h1.3M712 730h1.3M720 723h1.3M727 716h1.3M735 708h1.3M742 701h1.3M749 694h1.3M757 687h1.3M764 680h1.3M771 673h1.3M778 666h1.3M785 659h1.3M792 652h1.3M799 645h1.3M806 638h1.3M812 632h1.3M819 625h1.3M826 619h1.3M832 612h1.3M839 606h1.3M846 599h1.3M852 593h1.3M858 587h1.3M865 580h1.3M871 574h1.3M877 568h1.3M883 562h1.3M890 556h1.3M896 550h1.3M902 544h1.3M908 538h1.3M914 532h1.3M920 526h1.3M926 521h1.3M931 515h1.3M937 509h1.3M943 504h1.3M949 498h1.3M954 492h1.3M960 487h1.3M585 869h1.3M594 861h1.3M603 852h1.3M611 843h1.3M620 835h1.3M628 827h1.3M637 818h1.3M645 810h1.3M653 802h1.3M661 794h1.3M669 786h1.3M677 778h1.3M685 770h1.3M693 762h1.3M701 754h1.3M709 747h1.3M716 739h1.3M724 732h1.3M732 724h1.3M739 717h1.3M746 709h1.3M754 702h1.3M761 695h1.3M768 688h1.3M775 681h1.3M782 674h1.3M790 667h1.3M796 660h1.3M803 653h1.3M810 646h1.3M817 639h1.3M824 633h1.3M830 626h1.3M837 620h1.3M844 613h1.3M850 607h1.3M857 600h1.3M863 594h1.3M869 588h1.3M876 581h1.3M882 575h1.3M888 569h1.3M894 563h1.3M900 557h1.3M907 551h1.3M913 545h1.3M919 539h1.3M924 533h1.3M930 527h1.3M936 521h1.3M942 516h1.3M948 510h1.3M953 504h1.3M959 499h1.3M965 493h1.3M970 488h1.3M598 871h1.3M607 862h1.3M615 853h1.3M624 845h1.3M632 836h1.3M641 828h1.3M649 820h1.3M657 811h1.3M666 803h1.3M674 795h1.3M682 787h1.3M690 779h1.3M698 771h1.3M705 763h1.3M713 756h1.3M721 748h1.3M728 740h1.3M736 733h1.3M744 725h1.3M751 718h1.3M758 711h1.3M766 703h1.3M773 696h1.3M780 689h1.3M787 682h1.3M794 675h1.3M801 668h1.3M808 661h1.3M815 654h1.3M822 647h1.3M828 640h1.3M835 634h1.3M842 627h1.3M848 621h1.3M855 614h1.3M861 608h1.3M868 601h1.3M874 595h1.3M880 588h1.3M887 582h1.3M893 576h1.3M899 570h1.3M905 564h1.3M911 558h1.3M917 552h1.3M923 546h1.3M929 540h1.3M935 534h1.3M941 528h1.3M947 522h1.3M952 517h1.3M958 511h1.3M964 505h1.3M969 500h1.3M975 494h1.3M981 489h1.3M611 872h1.3M619 863h1.3M628 855h1.3M637 846h1.3M645 838h1.3M653 829h1.3M662 821h1.3M670 812h1.3M678 804h1.3M686 796h1.3M694 788h1.3M702 780h1.3M710 772h1.3M718 764h1.3M725 757h1.3M733 749h1.3M741 741h1.3M748 734h1.3M755 726h1.3M763 719h1.3M770 712h1.3M777 704h1.3M785 697h1.3M792 690h1.3M799 683h1.3M806 676h1.3M813 669h1.3M820 662h1.3M826 655h1.3M833 648h1.3M840 641h1.3M846 635h1.3M853 628h1.3M860 622h1.3M866 615h1.3M873 609h1.3M879 602h1.3M885 596h1.3M892 589h1.3M898 583h1.3M904 577h1.3M910 571h1.3M916 565h1.3M922 559h1.3M928 553h1.3M934 547h1.3M940 541h1.3M946 535h1.3M952 529h1.3M957 523h1.3M963 517h1.3M969 512h1.3M974 506h1.3M980 500h1.3M985 495h1.3M991 489h1.3M624 873h1.3M632 865h1.3M641 856h1.3M649 847h1.3M658 839h1.3M666 830h1.3M674 822h1.3M682 814h1.3M690 806h1.3M698 797h1.3M706 789h1.3M714 781h1.3M722 773h1.3M730 766h1.3M737 758h1.3M745 750h1.3M753 743h1.3M760 735h1.3M767 728h1.3M775 720h1.3M782 713h1.3M789 705h1.3M796 698h1.3M803 691h1.3M810 684h1.3M817 677h1.3M824 670h1.3M831 663h1.3M838 656h1.3M845 649h1.3M851 642h1.3M858 636h1.3M864 629h1.3M871 623h1.3M877 616h1.3M884 610h1.3M890 603h1.3M896 597h1.3M903 590h1.3M909 584h1.3M915 578h1.3M921 572h1.3M927 566h1.3M933 560h1.3M939 553h1.3M945 548h1.3M951 542h1.3M957 536h1.3M962 530h1.3M968 524h1.3M974 518h1.3M979 513h1.3M985 507h1.3M990 501h1.3M996 496h1.3M1001 490h1.3M637 875h1.3M645 866h1.3M654 857h1.3M662 849h1.3M670 840h1.3M679 832h1.3M687 823h1.3M695 815h1.3M703 807h1.3M711 799h1.3M719 791h1.3M727 783h1.3M734 775h1.3M742 767h1.3M750 759h1.3M757 751h1.3M765 744h1.3M772 736h1.3M779 729h1.3M787 721h1.3M794 714h1.3M801 707h1.3M808 699h1.3M815 692h1.3M822 685h1.3M829 678h1.3M836 671h1.3M843 664h1.3M849 657h1.3M856 650h1.3M863 644h1.3M869 637h1.3M876 630h1.3M882 624h1.3M889 617h1.3M895 611h1.3M901 604h1.3M907 598h1.3M914 591h1.3M920 585h1.3M926 579h1.3M932 573h1.3M938 567h1.3M944 560h1.3M950 554h1.3M956 548h1.3M961 542h1.3M967 537h1.3M973 531h1.3M979 525h1.3M984 519h1.3M990 513h1.3M995 508h1.3M1001 502h1.3M1006 497h1.3M1012 491h1.3M649 876h1.3M658 867h1.3M666 858h1.3M675 850h1.3M683 841h1.3M691 833h1.3M699 825h1.3M707 816h1.3M715 808h1.3M723 800h1.3M731 792h1.3M739 784h1.3M747 776h1.3M754 768h1.3M762 760h1.3M769 752h1.3M777 745h1.3M784 737h1.3M791 730h1.3M799 722h1.3M806 715h1.3M813 708h1.3M820 700h1.3M827 693h1.3M834 686h1.3M841 679h1.3M847 672h1.3M854 665h1.3M861 658h1.3M867 651h1.3M874 645h1.3M881 638h1.3M887 631h1.3M893 625h1.3M900 618h1.3M906 611h1.3M912 605h1.3M919 599h1.3M925 592h1.3M931 586h1.3M937 580h1.3M943 574h1.3M949 567h1.3M955 561h1.3M961 555h1.3M966 549h1.3M972 543h1.3M978 537h1.3M984 532h1.3M989 526h1.3M995 520h1.3M1000 514h1.3M1006 509h1.3M1011 503h1.3M1017 497h1.3M1022 492h1.3M662 877h1.3M671 869h1.3M679 860h1.3M688 851h1.3M696 843h1.3M704 834h1.3M712 826h1.3M720 817h1.3M728 809h1.3M736 801h1.3M744 793h1.3M751 785h1.3M759 777h1.3M766 769h1.3M774 761h1.3M781 754h1.3M789 746h1.3M796 738h1.3M803 731h1.3M811 723h1.3M818 716h1.3M825 709h1.3M832 701h1.3M839 694h1.3M845 687h1.3M852 680h1.3M859 673h1.3M866 666h1.3M872 659h1.3M879 652h1.3M886 646h1.3M892 639h1.3M898 632h1.3M905 626h1.3M911 619h1.3M917 612h1.3M924 606h1.3M930 600h1.3M936 593h1.3M942 587h1.3M948 581h1.3M954 575h1.3M960 568h1.3M966 562h1.3M972 556h1.3M977 550h1.3M983 544h1.3M989 538h1.3M994 532h1.3M1000 527h1.3M1006 521h1.3M1011 515h1.3M1017 509h1.3M1022 504h1.3M1027 498h1.3M1033 493h1.3M675 879h1.3M684 870h1.3M692 861h1.3M700 852h1.3M708 844h1.3M717 835h1.3M725 827h1.3M733 819h1.3M740 810h1.3M748 802h1.3M756 794h1.3M764 786h1.3M771 778h1.3M779 770h1.3M786 763h1.3M794 755h1.3M801 747h1.3M808 740h1.3M815 732h1.3M822 725h1.3M830 717h1.3M837 710h1.3M844 703h1.3M850 695h1.3M857 688h1.3M864 681h1.3M871 674h1.3M877 667h1.3M884 660h1.3M890 653h1.3M897 647h1.3M903 640h1.3M910 633h1.3M916 627h1.3M922 620h1.3M929 613h1.3M935 607h1.3M941 601h1.3M947 594h1.3M953 588h1.3M959 582h1.3M965 575h1.3M971 569h1.3M977 563h1.3M982 557h1.3M988 551h1.3M994 545h1.3M999 539h1.3M1005 533h1.3M1011 528h1.3M1016 522h1.3M1022 516h1.3M1027 510h1.3M1032 505h1.3M1038 499h1.3M1043 494h1.3M688 880h1.3M697 871h1.3M705 862h1.3M713 854h1.3M721 845h1.3M729 837h1.3M737 828h1.3M745 820h1.3M753 812h1.3M761 804h1.3M768 795h1.3M776 787h1.3M784 779h1.3M791 772h1.3M798 764h1.3M806 756h1.3M813 748h1.3M820 741h1.3M827 733h1.3M834 726h1.3M841 718h1.3M848 711h1.3M855 704h1.3M862 696h1.3M869 689h1.3M876 682h1.3M882 675h1.3M889 668h1.3M896 661h1.3M902 654h1.3M908 648h1.3M915 641h1.3M921 634h1.3M927 628h1.3M934 621h1.3M940 614h1.3M946 608h1.3M952 602h1.3M958 595h1.3M964 589h1.3M970 583h1.3M976 576h1.3M982 570h1.3M988 564h1.3M993 558h1.3M999 552h1.3M1005 546h1.3M1010 540h1.3M1016 534h1.3M1021 528h1.3M1027 523h1.3M1032 517h1.3M1038 511h1.3M1043 506h1.3M1048 500h1.3M1054 494h1.3M701 881h1.3M710 872h1.3M718 864h1.3M726 855h1.3M734 846h1.3M742 838h1.3M750 830h1.3M758 821h1.3M766 813h1.3M773 805h1.3M781 797h1.3M788 789h1.3M796 781h1.3M803 773h1.3M811 765h1.3M818 757h1.3M825 749h1.3M832 742h1.3M839 734h1.3M846 727h1.3M853 719h1.3M860 712h1.3M867 705h1.3M874 697h1.3M881 690h1.3M887 683h1.3M894 676h1.3M901 669h1.3M907 662h1.3M914 655h1.3M920 649h1.3M926 642h1.3M933 635h1.3M939 629h1.3M945 622h1.3M951 615h1.3M957 609h1.3M963 602h1.3M969 596h1.3M975 590h1.3M981 584h1.3M987 577h1.3M993 571h1.3M998 565h1.3M1004 559h1.3M1010 553h1.3M1015 547h1.3M1021 541h1.3M1027 535h1.3M1032 529h1.3M1038 523h1.3M1043 518h1.3M1048 512h1.3M1054 506h1.3M1059 501h1.3M1064 495h1.3M714 883h1.3M723 874h1.3M731 865h1.3M739 856h1.3M747 848h1.3M755 839h1.3M763 831h1.3M770 822h1.3M778 814h1.3M786 806h1.3M793 798h1.3M801 790h1.3M808 782h1.3M816 774h1.3M823 766h1.3M830 758h1.3M837 751h1.3M844 743h1.3M851 735h1.3M858 728h1.3M865 720h1.3M872 713h1.3M879 706h1.3M886 699h1.3M893 691h1.3M899 684h1.3M906 677h1.3M912 670h1.3M919 663h1.3M925 656h1.3M931 650h1.3M938 643h1.3M944 636h1.3M950 630h1.3M956 623h1.3M962 616h1.3M968 610h1.3M974 603h1.3M980 597h1.3M986 591h1.3M992 584h1.3M998 578h1.3M1004 572h1.3M1009 566h1.3M1015 560h1.3M1021 554h1.3M1026 548h1.3M1032 542h1.3M1037 536h1.3M1043 530h1.3M1048 524h1.3M1054 519h1.3M1059 513h1.3M1064 507h1.3M1069 502h1.3M1075 496h1.3M727 884h1.3M735 875h1.3M744 866h1.3M752 858h1.3M760 849h1.3M767 841h1.3M775 832h1.3M783 824h1.3M791 815h1.3M798 807h1.3M806 799h1.3M813 791h1.3M821 783h1.3M828 775h1.3M835 767h1.3M842 759h1.3M850 752h1.3M857 744h1.3M864 737h1.3M871 729h1.3M877 722h1.3M884 714h1.3M891 707h1.3M898 700h1.3M904 692h1.3M911 685h1.3M917 678h1.3M924 671h1.3M930 664h1.3M937 657h1.3M943 651h1.3M949 644h1.3M955 637h1.3M962 631h1.3M968 624h1.3M974 617h1.3M980 611h1.3M986 604h1.3M992 598h1.3M997 592h1.3M1003 585h1.3M1009 579h1.3M1015 573h1.3M1020 567h1.3M1026 561h1.3M1032 555h1.3M1037 549h1.3M1043 543h1.3M1048 537h1.3M1054 531h1.3M1059 525h1.3M1064 519h1.3M1069 514h1.3M1075 508h1.3M1080 502h1.3M1085 497h1.3M740 885h1.3M748 876h1.3M757 868h1.3M765 859h1.3M772 850h1.3M780 842h1.3M788 833h1.3M796 825h1.3M803 817h1.3M811 808h1.3M818 800h1.3M826 792h1.3M833 784h1.3M840 776h1.3M847 768h1.3M855 761h1.3M862 753h1.3M869 745h1.3M876 738h1.3M883 730h1.3M889 723h1.3M896 715h1.3M903 708h1.3M910 701h1.3M916 694h1.3M923 686h1.3M929 679h1.3M936 672h1.3M942 665h1.3M948 659h1.3M954 652h1.3M961 645h1.3M967 638h1.3M973 632h1.3M979 625h1.3M985 618h1.3M991 612h1.3M997 605h1.3M1003 599h1.3M1009 593h1.3M1014 586h1.3M1020 580h1.3M1026 574h1.3M1031 568h1.3M1037 562h1.3M1043 556h1.3M1048 550h1.3M1053 544h1.3M1059 538h1.3M1064 532h1.3M1070 526h1.3M1075 520h1.3M1080 515h1.3M1085 509h1.3M1090 503h1.3M1096 498h1.3M753 887h1.3M761 878h1.3M769 869h1.3M777 860h1.3M785 852h1.3M793 843h1.3M801 835h1.3M808 826h1.3M816 818h1.3M823 810h1.3M831 802h1.3M838 793h1.3M845 785h1.3M853 777h1.3M860 770h1.3M867 762h1.3M874 754h1.3M881 746h1.3M888 739h1.3M895 731h1.3M901 724h1.3M908 716h1.3M915 709h1.3M921 702h1.3M928 695h1.3M934 687h1.3M941 680h1.3M947 673h1.3M954 666h1.3M960 660h1.3M966 653h1.3M972 646h1.3M978 639h1.3M984 633h1.3M990 626h1.3M996 619h1.3M1002 613h1.3M1008 606h1.3M1014 600h1.3M1020 594h1.3M1025 587h1.3M1031 581h1.3M1037 575h1.3M1042 569h1.3M1048 563h1.3M1053 557h1.3M1059 551h1.3M1064 545h1.3M1070 539h1.3M1075 533h1.3M1080 527h1.3M1086 521h1.3M1091 515h1.3M1096 510h1.3M1101 504h1.3M1106 499h1.3M766 888h1.3M775 879h1.3M782 870h1.3M790 862h1.3M798 853h1.3M806 844h1.3M813 836h1.3M821 827h1.3M829 819h1.3M836 811h1.3M843 803h1.3M851 795h1.3M858 787h1.3M865 779h1.3M872 771h1.3M879 763h1.3M886 755h1.3M893 748h1.3M900 740h1.3M907 732h1.3M913 725h1.3M920 718h1.3M927 710h1.3M933 703h1.3M940 696h1.3M946 689h1.3M953 681h1.3M959 674h1.3M965 667h1.3M971 661h1.3M978 654h1.3M984 647h1.3M990 640h1.3M996 634h1.3M1002 627h1.3M1008 620h1.3M1014 614h1.3M1019 607h1.3M1025 601h1.3M1031 595h1.3M1037 588h1.3M1042 582h1.3M1048 576h1.3M1053 570h1.3M1059 564h1.3M1064 557h1.3M1070 551h1.3M1075 545h1.3M1080 540h1.3M1086 534h1.3M1091 528h1.3M1096 522h1.3M1101 516h1.3M1107 511h1.3M1112 505h1.3M1117 499h1.3M780 889h1.3M788 880h1.3M795 872h1.3M803 863h1.3M811 854h1.3M819 846h1.3M826 837h1.3M834 829h1.3M841 820h1.3M849 812h1.3M856 804h1.3M863 796h1.3M870 788h1.3M877 780h1.3M884 772h1.3M891 764h1.3M898 756h1.3M905 749h1.3M912 741h1.3M919 734h1.3M925 726h1.3M932 719h1.3M939 711h1.3M945 704h1.3M952 697h1.3M958 690h1.3M964 683h1.3M971 676h1.3M977 669h1.3M983 662h1.3M989 655h1.3M995 648h1.3M1001 641h1.3M1007 635h1.3M1013 628h1.3M1019 621h1.3M1025 615h1.3M1031 608h1.3M1036 602h1.3M1042 596h1.3M1048 589h1.3M1053 583h1.3M1059 577h1.3M1064 571h1.3M1070 564h1.3M1075 558h1.3M1081 552h1.3M1086 546h1.3M1091 540h1.3M1097 535h1.3M1102 529h1.3M1107 523h1.3M1112 517h1.3M1117 511h1.3M1122 506h1.3M1127 500h1.3M793 891h1.3M801 882h1.3M808 873h1.3M816 864h1.3M824 856h1.3M831 847h1.3M839 838h1.3M846 830h1.3M854 822h1.3M861 813h1.3M868 805h1.3M876 797h1.3M883 789h1.3M890 781h1.3M897 773h1.3M904 765h1.3M911 758h1.3M917 750h1.3M924 742h1.3M931 735h1.3M938 727h1.3M944 720h1.3M951 712h1.3M957 705h1.3M963 698h1.3M970 691h1.3M976 684h1.3M982 677h1.3M989 670h1.3M995 663h1.3M1001 656h1.3M1007 649h1.3M1013 642h1.3M1019 636h1.3M1025 629h1.3M1030 622h1.3M1036 616h1.3M1042 609h1.3M1048 603h1.3M1053 596h1.3M1059 590h1.3M1064 584h1.3M1070 578h1.3M1075 571h1.3M1081 565h1.3M1086 559h1.3M1092 553h1.3M1097 547h1.3M1102 541h1.3M1107 535h1.3M1113 530h1.3M1118 524h1.3M1123 518h1.3M1128 512h1.3M1133 507h1.3M1138 501h1.3M806 892h1.3M814 883h1.3M821 874h1.3M829 865h1.3M837 857h1.3M844 848h1.3M852 840h1.3M859 831h1.3M867 823h1.3M874 815h1.3M881 806h1.3M888 798h1.3M895 790h1.3M902 782h1.3M909 774h1.3M916 766h1.3M923 759h1.3M930 751h1.3M936 743h1.3M943 736h1.3M950 728h1.3M956 721h1.3M963 714h1.3M969 706h1.3M975 699h1.3M982 692h1.3M988 685h1.3M994 678h1.3M1000 671h1.3M1006 664h1.3M1012 657h1.3M1018 650h1.3M1024 643h1.3M1030 637h1.3M1036 630h1.3M1042 623h1.3M1048 617h1.3M1053 610h1.3M1059 604h1.3M1065 597h1.3M1070 591h1.3M1076 585h1.3M1081 579h1.3M1086 572h1.3M1092 566h1.3M1097 560h1.3M1103 554h1.3M1108 548h1.3M1113 542h1.3M1118 536h1.3M1123 530h1.3M1128 525h1.3M1133 519h1.3M1138 513h1.3M1143 508h1.3M1148 502h1.3M819 893h1.3M827 884h1.3M834 876h1.3M842 867h1.3M850 858h1.3M857 849h1.3M865 841h1.3M872 833h1.3M879 824h1.3M886 816h1.3M894 808h1.3M901 799h1.3M908 791h1.3M915 783h1.3M922 776h1.3M928 768h1.3M935 760h1.3M942 752h1.3M949 745h1.3M955 737h1.3M962 729h1.3M968 722h1.3M975 715h1.3M981 707h1.3M987 700h1.3M994 693h1.3M1000 686h1.3M1006 679h1.3M1012 672h1.3M1018 665h1.3M1024 658h1.3M1030 651h1.3M1036 644h1.3M1042 638h1.3M1047 631h1.3M1053 624h1.3M1059 618h1.3M1065 611h1.3M1070 605h1.3M1076 598h1.3M1081 592h1.3M1087 586h1.3M1092 580h1.3M1098 573h1.3M1103 567h1.3M1108 561h1.3M1113 555h1.3M1119 549h1.3M1124 543h1.3M1129 537h1.3M1134 531h1.3M1139 526h1.3M1144 520h1.3M1149 514h1.3M1154 508h1.3M1159 503h1.3M832 895h1.3M840 886h1.3M848 877h1.3M855 868h1.3M863 859h1.3M870 851h1.3M877 842h1.3M885 834h1.3M892 825h1.3M899 817h1.3M906 809h1.3M913 801h1.3M920 793h1.3M927 785h1.3M934 777h1.3M941 769h1.3M948 761h1.3M954 753h1.3M961 746h1.3M967 738h1.3M974 731h1.3M980 723h1.3M987 716h1.3M993 708h1.3M999 701h1.3M1005 694h1.3M1012 687h1.3M1018 680h1.3M1024 673h1.3M1030 666h1.3M1036 659h1.3M1042 652h1.3M1047 645h1.3M1053 639h1.3M1059 632h1.3M1065 625h1.3M1070 619h1.3M1076 612h1.3M1081 606h1.3M1087 599h1.3M1092 593h1.3M1098 587h1.3M1103 580h1.3M1109 574h1.3M1114 568h1.3M1119 562h1.3M1124 556h1.3M1130 550h1.3M1135 544h1.3M1140 538h1.3M1145 532h1.3M1150 526h1.3M1155 521h1.3M1160 515h1.3M1165 509h1.3M1170 504h1.3M845 896h1.3M853 887h1.3M861 878h1.3M868 869h1.3M876 861h1.3M883 852h1.3M890 844h1.3M898 835h1.3M905 827h1.3M912 818h1.3M919 810h1.3M926 802h1.3M933 794h1.3M940 786h1.3M946 778h1.3M953 770h1.3M960 762h1.3M966 754h1.3M973 747h1.3M979 739h1.3M986 732h1.3M992 724h1.3M999 717h1.3M1005 710h1.3M1011 702h1.3M1017 695h1.3M1023 688h1.3M1029 681h1.3M1035 674h1.3M1041 667h1.3M1047 660h1.3M1053 653h1.3M1059 646h1.3M1065 640h1.3M1070 633h1.3M1076 626h1.3M1082 620h1.3M1087 613h1.3M1093 607h1.3M1098 600h1.3M1104 594h1.3M1109 588h1.3M1114 581h1.3M1120 575h1.3M1125 569h1.3M1130 563h1.3M1135 557h1.3M1141 551h1.3M1146 545h1.3M1151 539h1.3M1156 533h1.3M1161 527h1.3M1166 522h1.3M1171 516h1.3M1175 510h1.3M1180 504h1.3M859 897h1.3M866 888h1.3M874 880h1.3M881 871h1.3M889 862h1.3M896 853h1.3M903 845h1.3M910 836h1.3M917 828h1.3M925 820h1.3M932 811h1.3M938 803h1.3M945 795h1.3M952 787h1.3M959 779h1.3M966 771h1.3M972 763h1.3M979 756h1.3M985 748h1.3M992 740h1.3M998 733h1.3M1004 725h1.3M1011 718h1.3M1017 711h1.3M1023 703h1.3M1029 696h1.3M1035 689h1.3M1041 682h1.3M1047 675h1.3M1053 668h1.3M1059 661h1.3M1065 654h1.3M1071 647h1.3M1076 641h1.3M1082 634h1.3M1088 627h1.3M1093 621h1.3M1099 614h1.3M1104 608h1.3M1110 601h1.3M1115 595h1.3M1120 589h1.3M1126 582h1.3M1131 576h1.3M1136 570h1.3M1141 564h1.3M1146 558h1.3M1151 552h1.3M1157 546h1.3M1162 540h1.3M1166 534h1.3M1171 528h1.3M1176 522h1.3M1181 517h1.3M1186 511h1.3M1191 505h1.3M872 899h1.3M879 890h1.3M887 881h1.3M894 872h1.3M902 863h1.3M909 855h1.3M916 846h1.3M923 838h1.3M930 829h1.3M937 821h1.3M944 813h1.3M951 804h1.3M958 796h1.3M965 788h1.3M971 780h1.3M978 772h1.3M985 765h1.3M991 757h1.3M997 749h1.3M1004 742h1.3M1010 734h1.3M1016 726h1.3M1023 719h1.3M1029 712h1.3M1035 704h1.3M1041 697h1.3M1047 690h1.3M1053 683h1.3M1059 676h1.3M1065 669h1.3M1071 662h1.3M1076 655h1.3M1082 648h1.3M1088 642h1.3M1093 635h1.3M1099 628h1.3M1104 622h1.3M1110 615h1.3M1115 609h1.3M1121 602h1.3M1126 596h1.3M1131 590h1.3M1137 583h1.3M1142 577h1.3M1147 571h1.3M1152 565h1.3M1157 559h1.3M1162 553h1.3M1167 547h1.3M1172 541h1.3M1177 535h1.3M1182 529h1.3M1187 523h1.3M1192 518h1.3M1197 512h1.3M1201 506h1.3M885 900h1.3M893 891h1.3M900 882h1.3M907 873h1.3M915 865h1.3M922 856h1.3M929 847h1.3M936 839h1.3M943 830h1.3M950 822h1.3M957 814h1.3M964 806h1.3M970 797h1.3M977 789h1.3M984 781h1.3M990 774h1.3M997 766h1.3M1003 758h1.3M1010 750h1.3M1016 743h1.3M1022 735h1.3M1029 728h1.3M1035 720h1.3M1041 713h1.3M1047 706h1.3M1053 698h1.3M1059 691h1.3M1065 684h1.3M1071 677h1.3M1077 670h1.3M1082 663h1.3M1088 656h1.3M1094 649h1.3M1099 643h1.3M1105 636h1.3M1110 629h1.3M1116 623h1.3M1121 616h1.3M1127 610h1.3M1132 603h1.3M1137 597h1.3M1143 590h1.3M1148 584h1.3M1153 578h1.3M1158 572h1.3M1163 566h1.3M1168 560h1.3M1173 554h1.3M1178 548h1.3M1183 542h1.3M1188 536h1.3M1193 530h1.3M1198 524h1.3M1203 518h1.3M1207 513h1.3M1212 507h1.3M898 902h1.3M906 893h1.3M913 884h1.3M920 875h1.3M928 866h1.3M935 857h1.3M942 849h1.3M949 840h1.3M956 832h1.3M963 823h1.3M970 815h1.3M976 807h1.3M983 799h1.3M990 791h1.3M996 783h1.3M1003 775h1.3M1009 767h1.3M1016 759h1.3M1022 751h1.3M1028 744h1.3M1035 736h1.3M1041 729h1.3M1047 721h1.3M1053 714h1.3M1059 707h1.3M1065 699h1.3M1071 692h1.3M1077 685h1.3M1083 678h1.3M1088 671h1.3M1094 664h1.3M1100 657h1.3M1105 650h1.3M1111 644h1.3M1116 637h1.3M1122 630h1.3M1127 624h1.3M1133 617h1.3M1138 611h1.3M1143 604h1.3M1149 598h1.3M1154 591h1.3M1159 585h1.3M1164 579h1.3M1169 573h1.3M1174 567h1.3M1179 561h1.3M1184 554h1.3M1189 548h1.3M1194 543h1.3M1199 537h1.3M1204 531h1.3M1209 525h1.3M1213 519h1.3M1218 514h1.3M1223 508h1.3M912 903h1.3M919 894h1.3M926 885h1.3M934 876h1.3M941 867h1.3M948 859h1.3M955 850h1.3M962 841h1.3M969 833h1.3M976 825h1.3M982 816h1.3M989 808h1.3M996 800h1.3M1002 792h1.3M1009 784h1.3M1015 776h1.3M1022 768h1.3M1028 760h1.3M1034 753h1.3M1041 745h1.3M1047 737h1.3M1053 730h1.3M1059 722h1.3M1065 715h1.3M1071 708h1.3M1077 700h1.3M1083 693h1.3M1089 686h1.3M1094 679h1.3M1100 672h1.3M1106 665h1.3M1111 658h1.3M1117 651h1.3M1122 645h1.3M1128 638h1.3M1133 631h1.3M1139 625h1.3M1144 618h1.3M1149 612h1.3M1155 605h1.3M1160 599h1.3M1165 592h1.3M1170 586h1.3M1175 580h1.3M1180 574h1.3M1185 568h1.3M1190 561h1.3M1195 555h1.3M1200 549h1.3M1205 543h1.3M1210 538h1.3M1215 532h1.3M1219 526h1.3M1224 520h1.3M1229 514h1.3M1233 509h1.3M925 904h1.3M932 895h1.3M939 886h1.3M947 877h1.3M954 869h1.3M961 860h1.3M968 851h1.3M975 843h1.3M982 834h1.3M988 826h1.3M995 818h1.3M1002 809h1.3M1008 801h1.3M1015 793h1.3M1021 785h1.3M1028 777h1.3M1034 769h1.3M1040 761h1.3M1047 754h1.3M1053 746h1.3M1059 738h1.3M1065 731h1.3M1071 724h1.3M1077 716h1.3M1083 709h1.3M1089 702h1.3M1095 694h1.3M1100 687h1.3M1106 680h1.3M1112 673h1.3M1117 666h1.3M1123 659h1.3M1129 652h1.3M1134 646h1.3M1140 639h1.3M1145 632h1.3M1150 626h1.3M1156 619h1.3M1161 613h1.3M1166 606h1.3M1171 600h1.3M1176 593h1.3M1181 587h1.3M1187 581h1.3M1192 575h1.3M1196 568h1.3M1201 562h1.3M1206 556h1.3M1211 550h1.3M1216 544h1.3M1221 538h1.3M1226 533h1.3M1230 527h1.3M1235 521h1.3M1240 515h1.3M1244 510h1.3M938 906h1.3M946 897h1.3M953 888h1.3M960 879h1.3M967 870h1.3M974 861h1.3M981 853h1.3M988 844h1.3M994 836h1.3M1001 827h1.3M1008 819h1.3M1014 811h1.3M1021 802h1.3M1027 794h1.3M1034 786h1.3M1040 778h1.3M1047 770h1.3M1053 763h1.3M1059 755h1.3M1065 747h1.3M1071 740h1.3M1077 732h1.3M1083 725h1.3M1089 717h1.3M1095 710h1.3M1101 703h1.3M1107 695h1.3M1112 688h1.3M1118 681h1.3M1124 674h1.3M1129 667h1.3M1135 660h1.3M1140 653h1.3M1146 647h1.3M1151 640h1.3M1156 633h1.3M1162 627h1.3M1167 620h1.3M1172 614h1.3M1177 607h1.3M1183 601h1.3M1188 594h1.3M1193 588h1.3M1198 582h1.3M1203 576h1.3M1208 569h1.3M1212 563h1.3M1217 557h1.3M1222 551h1.3M1227 545h1.3M1232 539h1.3M1236 533h1.3M1241 528h1.3M1246 522h1.3M1250 516h1.3M1255 510h1.3M952 907h1.3M959 898h1.3M966 889h1.3M973 880h1.3M980 871h1.3M987 862h1.3M994 854h1.3M1001 845h1.3M1007 837h1.3M1014 828h1.3M1021 820h1.3M1027 812h1.3M1034 804h1.3M1040 795h1.3M1046 787h1.3M1053 780h1.3M1059 772h1.3M1065 764h1.3M1071 756h1.3M1077 748h1.3M1083 741h1.3M1089 733h1.3M1095 726h1.3M1101 718h1.3M1107 711h1.3M1113 704h1.3M1119 697h1.3M1124 689h1.3M1130 682h1.3M1135 675h1.3M1141 668h1.3M1146 661h1.3M1152 654h1.3M1157 648h1.3M1163 641h1.3M1168 634h1.3M1173 628h1.3M1178 621h1.3M1184 615h1.3M1189 608h1.3M1194 602h1.3M1199 595h1.3M1204 589h1.3M1209 583h1.3M1214 576h1.3M1219 570h1.3M1224 564h1.3M1228 558h1.3M1233 552h1.3M1238 546h1.3M1243 540h1.3M1247 534h1.3M1252 528h1.3M1256 523h1.3M1261 517h1.3M1266 511h1.3M965 908h1.3M972 899h1.3M979 890h1.3M986 881h1.3M993 873h1.3M1000 864h1.3M1007 855h1.3M1014 847h1.3M1020 838h1.3M1027 830h1.3M1033 821h1.3M1040 813h1.3M1046 805h1.3M1053 797h1.3M1059 789h1.3M1065 781h1.3M1071 773h1.3M1078 765h1.3M1084 757h1.3M1090 750h1.3M1096 742h1.3M1102 734h1.3M1108 727h1.3M1113 719h1.3M1119 712h1.3M1125 705h1.3M1131 698h1.3M1136 690h1.3M1142 683h1.3M1147 676h1.3M1153 669h1.3M1158 662h1.3M1164 655h1.3M1169 649h1.3M1174 642h1.3M1180 635h1.3M1185 629h1.3M1190 622h1.3M1195 615h1.3M1200 609h1.3M1205 603h1.3M1210 596h1.3M1215 590h1.3M1220 584h1.3M1225 577h1.3M1230 571h1.3M1235 565h1.3M1239 559h1.3M1244 553h1.3M1249 547h1.3M1253 541h1.3M1258 535h1.3M1263 529h1.3M1267 524h1.3M1272 518h1.3M1276 512h1.3M978 910h1.3M985 901h1.3M992 892h1.3M999 883h1.3M1006 874h1.3M1013 865h1.3M1020 856h1.3M1027 848h1.3M1033 839h1.3M1040 831h1.3M1046 823h1.3M1053 814h1.3M1059 806h1.3M1065 798h1.3M1072 790h1.3M1078 782h1.3M1084 774h1.3M1090 766h1.3M1096 758h1.3M1102 751h1.3M1108 743h1.3M1114 735h1.3M1120 728h1.3M1126 721h1.3M1131 713h1.3M1137 706h1.3M1143 699h1.3M1148 691h1.3M1154 684h1.3M1159 677h1.3M1165 670h1.3M1170 663h1.3M1175 657h1.3M1181 650h1.3M1186 643h1.3M1191 636h1.3M1196 630h1.3M1201 623h1.3M1206 616h1.3M1212 610h1.3M1217 604h1.3M1222 597h1.3M1226 591h1.3M1231 585h1.3M1236 578h1.3M1241 572h1.3M1246 566h1.3M1250 560h1.3M1255 554h1.3M1260 548h1.3M1264 542h1.3M1269 536h1.3M1274 530h1.3M1278 524h1.3M1283 519h1.3M1287 513h1.3M992 911h1.3M999 902h1.3M1006 893h1.3M1013 884h1.3M1019 875h1.3M1026 866h1.3M1033 858h1.3M1040 849h1.3M1046 841h1.3M1053 832h1.3M1059 824h1.3M1065 815h1.3M1072 807h1.3M1078 799h1.3M1084 791h1.3M1090 783h1.3M1096 775h1.3M1103 767h1.3M1108 760h1.3M1114 752h1.3M1120 744h1.3M1126 737h1.3M1132 729h1.3M1138 722h1.3M1143 714h1.3M1149 707h1.3M1155 700h1.3M1160 693h1.3M1166 685h1.3M1171 678h1.3M1176 671h1.3M1182 664h1.3M1187 658h1.3M1192 651h1.3M1198 644h1.3M1203 637h1.3M1208 631h1.3M1213 624h1.3M1218 617h1.3M1223 611h1.3M1228 605h1.3M1233 598h1.3M1238 592h1.3M1243 586h1.3M1247 579h1.3M1252 573h1.3M1257 567h1.3M1262 561h1.3M1266 555h1.3M1271 549h1.3M1275 543h1.3M1280 537h1.3M1284 531h1.3M1289 525h1.3M1293 520h1.3M1298 514h1.3M1005 913h1.3M1012 903h1.3M1019 894h1.3M1026 885h1.3M1033 877h1.3M1039 868h1.3M1046 859h1.3M1053 850h1.3M1059 842h1.3M1065 833h1.3M1072 825h1.3M1078 817h1.3M1084 809h1.3M1091 800h1.3M1097 792h1.3M1103 784h1.3M1109 776h1.3M1115 768h1.3M1121 761h1.3M1127 753h1.3M1133 745h1.3M1138 738h1.3M1144 730h1.3M1150 723h1.3M1155 715h1.3M1161 708h1.3M1167 701h1.3M1172 694h1.3M1177 687h1.3M1183 679h1.3M1188 672h1.3M1194 665h1.3M1199 659h1.3M1204 652h1.3M1209 645h1.3M1214 638h1.3M1219 632h1.3M1224 625h1.3M1229 618h1.3M1234 612h1.3M1239 605h1.3M1244 599h1.3M1249 593h1.3M1254 586h1.3M1259 580h1.3M1263 574h1.3M1268 568h1.3M1273 562h1.3M1277 556h1.3M1282 550h1.3M1286 544h1.3M1291 538h1.3M1295 532h1.3M1300 526h1.3M1304 520h1.3M1308 515h1.3M1019 914h1.3M1026 905h1.3M1032 896h1.3M1039 887h1.3M1046 878h1.3M1052 869h1.3M1059 860h1.3M1066 852h1.3M1072 843h1.3M1078 835h1.3M1085 826h1.3M1091 818h1.3M1097 810h1.3M1103 802h1.3M1109 793h1.3M1116 785h1.3M1122 778h1.3M1127 770h1.3M1133 762h1.3M1139 754h1.3M1145 746h1.3M1151 739h1.3M1156 731h1.3M1162 724h1.3M1168 717h1.3M1173 709h1.3M1179 702h1.3M1184 695h1.3M1189 688h1.3M1195 681h1.3M1200 673h1.3M1205 667h1.3M1211 660h1.3M1216 653h1.3M1221 646h1.3M1226 639h1.3M1231 633h1.3M1236 626h1.3M1241 619h1.3M1246 613h1.3M1251 606h1.3M1256 600h1.3M1260 594h1.3M1265 587h1.3M1270 581h1.3M1274 575h1.3M1279 569h1.3M1284 563h1.3M1288 557h1.3M1293 551h1.3M1297 545h1.3M1302 539h1.3M1306 533h1.3M1311 527h1.3M1315 521h1.3M1319 516h1.3M1032 915h1.3M1039 906h1.3M1046 897h1.3M1052 888h1.3M1059 879h1.3M1066 870h1.3M1072 862h1.3M1079 853h1.3M1085 844h1.3M1091 836h1.3M1098 828h1.3M1104 819h1.3M1110 811h1.3M1116 803h1.3M1122 795h1.3M1128 787h1.3M1134 779h1.3M1140 771h1.3M1146 763h1.3M1152 755h1.3M1157 748h1.3M1163 740h1.3M1169 733h1.3M1174 725h1.3M1180 718h1.3M1185 710h1.3M1191 703h1.3M1196 696h1.3M1201 689h1.3M1207 682h1.3M1212 675h1.3M1217 668h1.3M1222 661h1.3M1227 654h1.3M1232 647h1.3M1238 640h1.3M1243 634h1.3M1247 627h1.3M1252 620h1.3M1257 614h1.3M1262 607h1.3M1267 601h1.3M1272 595h1.3M1276 588h1.3M1281 582h1.3M1286 576h1.3M1290 570h1.3M1295 564h1.3M1299 558h1.3M1304 552h1.3M1308 546h1.3M1313 540h1.3M1317 534h1.3M1321 528h1.3M1326 522h1.3M1330 516h1.3M1046 917h1.3M1052 907h1.3M1059 898h1.3M1066 889h1.3M1072 881h1.3M1079 872h1.3M1085 863h1.3M1092 854h1.3M1098 846h1.3M1104 837h1.3M1111 829h1.3M1117 820h1.3M1123 812h1.3M1129 804h1.3M1135 796h1.3M1141 788h1.3M1147 780h1.3M1152 772h1.3M1158 764h1.3M1164 756h1.3M1170 749h1.3M1175 741h1.3M1181 734h1.3M1186 726h1.3M1192 719h1.3M1197 711h1.3M1203 704h1.3M1208 697h1.3M1213 690h1.3M1219 683h1.3M1224 676h1.3M1229 669h1.3M1234 662h1.3M1239 655h1.3M1244 648h1.3M1249 641h1.3M1254 635h1.3M1259 628h1.3M1264 621h1.3M1269 615h1.3M1273 608h1.3M1278 602h1.3M1283 596h1.3M1288 589h1.3M1292 583h1.3M1297 577h1.3M1301 571h1.3M1306 565h1.3M1310 558h1.3M1315 552h1.3M1319 546h1.3M1324 541h1.3M1328 535h1.3M1332 529h1.3M1337 523h1.3M1341 517h1.3M1059 918h1.3M1066 909h1.3M1072 900h1.3M1079 891h1.3M1086 882h1.3M1092 873h1.3M1098 864h1.3M1105 856h1.3M1111 847h1.3M1117 838h1.3M1123 830h1.3M1130 822h1.3M1136 813h1.3M1142 805h1.3M1148 797h1.3M1153 789h1.3M1159 781h1.3M1165 773h1.3M1171 765h1.3M1176 758h1.3M1182 750h1.3M1188 742h1.3M1193 735h1.3M1199 727h1.3M1204 720h1.3M1209 712h1.3M1215 705h1.3M1220 698h1.3M1225 691h1.3M1231 684h1.3M1236 677h1.3M1241 670h1.3M1246 663h1.3M1251 656h1.3M1256 649h1.3M1261 642h1.3M1266 636h1.3M1271 629h1.3M1275 622h1.3M1280 616h1.3M1285 609h1.3M1290 603h1.3M1294 597h1.3M1299 590h1.3M1304 584h1.3M1308 578h1.3M1313 572h1.3M1317 565h1.3M1321 559h1.3M1326 553h1.3M1330 547h1.3M1335 541h1.3M1339 536h1.3M1343 530h1.3M1347 524h1.3M1352 518h1.3M1073 919h1.3M1079 910h1.3M1086 901h1.3M1092 892h1.3M1099 883h1.3M1105 874h1.3M1112 866h1.3M1118 857h1.3M1124 848h1.3M1130 840h1.3M1136 831h1.3M1142 823h1.3M1148 815h1.3M1154 806h1.3M1160 798h1.3M1166 790h1.3M1172 782h1.3M1178 774h1.3M1183 767h1.3M1189 759h1.3M1194 751h1.3M1200 743h1.3M1205 736h1.3M1211 728h1.3M1216 721h1.3M1222 714h1.3M1227 706h1.3M1232 699h1.3M1237 692h1.3M1242 685h1.3M1248 678h1.3M1253 671h1.3M1258 664h1.3M1263 657h1.3M1268 650h1.3M1272 643h1.3M1277 637h1.3M1282 630h1.3M1287 623h1.3M1292 617h1.3M1296 610h1.3M1301 604h1.3M1306 598h1.3M1310 591h1.3M1315 585h1.3M1319 579h1.3M1324 572h1.3M1328 566h1.3M1333 560h1.3M1337 554h1.3M1341 548h1.3M1346 542h1.3M1350 536h1.3M1354 531h1.3M1358 525h1.3M1362 519h1.3M1086 921h1.3M1093 912h1.3M1099 902h1.3M1106 893h1.3M1112 885h1.3M1118 876h1.3M1125 867h1.3M1131 858h1.3M1137 850h1.3M1143 841h1.3M1149 833h1.3M1155 824h1.3M1161 816h1.3M1167 808h1.3M1173 800h1.3M1179 792h1.3M1184 784h1.3M1190 776h1.3M1196 768h1.3M1201 760h1.3M1207 752h1.3M1212 745h1.3M1218 737h1.3M1223 730h1.3M1228 722h1.3M1234 715h1.3M1239 707h1.3M1244 700h1.3M1249 693h1.3M1254 686h1.3M1260 679h1.3M1265 672h1.3M1269 665h1.3M1274 658h1.3M1279 651h1.3M1284 644h1.3M1289 638h1.3M1294 631h1.3M1298 624h1.3M1303 618h1.3M1308 611h1.3M1312 605h1.3M1317 598h1.3M1322 592h1.3M1326 586h1.3M1331 580h1.3M1335 573h1.3M1339 567h1.3M1344 561h1.3M1348 555h1.3M1352 549h1.3M1357 543h1.3M1361 537h1.3M1365 531h1.3M1369 526h1.3M1373 520h1.3M1100 922h1.3M1106 913h1.3M1113 904h1.3M1119 895h1.3M1125 886h1.3M1132 877h1.3M1138 868h1.3M1144 859h1.3M1150 851h1.3M1156 842h1.3M1162 834h1.3M1168 825h1.3M1174 817h1.3M1180 809h1.3M1186 801h1.3M1191 793h1.3M1197 785h1.3M1203 777h1.3M1208 769h1.3M1214 761h1.3M1219 753h1.3M1225 746h1.3M1230 738h1.3M1235 731h1.3M1241 723h1.3M1246 716h1.3M1251 708h1.3M1256 701h1.3M1261 694h1.3M1266 687h1.3M1271 680h1.3M1276 673h1.3M1281 666h1.3M1286 659h1.3M1291 652h1.3M1296 645h1.3M1301 639h1.3M1305 632h1.3M1310 625h1.3M1315 619h1.3M1319 612h1.3M1324 606h1.3M1328 599h1.3M1333 593h1.3M1337 587h1.3M1342 581h1.3M1346 574h1.3M1351 568h1.3M1355 562h1.3M1359 556h1.3M1363 550h1.3M1368 544h1.3M1372 538h1.3M1376 532h1.3M1380 527h1.3M1384 521h1.3M1113 924h1.3M1120 914h1.3M1126 905h1.3M1133 896h1.3M1139 887h1.3M1145 878h1.3M1151 870h1.3M1157 861h1.3M1163 852h1.3M1169 844h1.3M1175 835h1.3M1181 827h1.3M1187 818h1.3M1193 810h1.3M1198 802h1.3M1204 794h1.3M1210 786h1.3M1215 778h1.3M1221 770h1.3M1226 762h1.3M1232 755h1.3M1237 747h1.3M1242 739h1.3M1248 732h1.3M1253 724h1.3M1258 717h1.3M1263 710h1.3M1268 702h1.3M1273 695h1.3M1278 688h1.3M1283 681h1.3M1288 674h1.3M1293 667h1.3M1298 660h1.3M1303 653h1.3M1308 646h1.3M1312 640h1.3M1317 633h1.3M1322 626h1.3M1326 620h1.3M1331 613h1.3M1335 607h1.3M1340 600h1.3M1344 594h1.3M1349 588h1.3M1353 581h1.3M1357 575h1.3M1362 569h1.3M1366 563h1.3M1370 557h1.3M1374 551h1.3M1379 545h1.3M1383 539h1.3M1387 533h1.3M1391 527h1.3M1395 522h1.3M1127 925h1.3M1133 916h1.3M1140 907h1.3M1146 898h1.3M1152 889h1.3M1158 880h1.3M1164 871h1.3M1170 862h1.3M1176 853h1.3M1182 845h1.3M1188 836h1.3M1194 828h1.3M1200 820h1.3M1206 811h1.3M1211 803h1.3M1217 795h1.3M1222 787h1.3M1228 779h1.3M1233 771h1.3M1239 763h1.3M1244 756h1.3M1250 748h1.3M1255 740h1.3M1260 733h1.3M1265 725h1.3M1270 718h1.3M1275 711h1.3M1280 703h1.3M1285 696h1.3M1290 689h1.3M1295 682h1.3M1300 675h1.3M1305 668h1.3M1310 661h1.3M1315 654h1.3M1319 647h1.3M1324 641h1.3M1329 634h1.3M1333 627h1.3M1338 621h1.3M1342 614h1.3M1347 608h1.3M1351 601h1.3M1356 595h1.3M1360 589h1.3M1364 582h1.3M1369 576h1.3M1373 570h1.3M1377 564h1.3M1381 558h1.3M1386 552h1.3M1390 546h1.3M1394 540h1.3M1398 534h1.3M1402 528h1.3M1406 522h1.3M1140 926h1.3M1147 917h1.3M1153 908h1.3M1159 899h1.3M1166 890h1.3M1172 881h1.3M1178 872h1.3M1184 863h1.3M1190 855h1.3M1195 846h1.3M1201 838h1.3M1207 829h1.3M1213 821h1.3M1218 813h1.3M1224 804h1.3M1230 796h1.3M1235 788h1.3M1241 780h1.3M1246 772h1.3M1251 765h1.3M1257 757h1.3M1262 749h1.3M1267 742h1.3M1272 734h1.3M1277 727h1.3M1283 719h1.3M1288 712h1.3M1293 705h1.3M1298 697h1.3M1302 690h1.3M1307 683h1.3M1312 676h1.3M1317 669h1.3M1322 662h1.3M1326 655h1.3M1331 648h1.3M1336 642h1.3M1340 635h1.3M1345 628h1.3M1349 622h1.3M1354 615h1.3M1358 609h1.3M1363 602h1.3M1367 596h1.3M1371 590h1.3M1376 583h1.3M1380 577h1.3M1384 571h1.3M1388 565h1.3M1392 559h1.3M1397 553h1.3M1401 547h1.3M1405 541h1.3M1409 535h1.3M1413 529h1.3M1417 523h1.3M1154 928h1.3M1160 919h1.3M1167 909h1.3M1173 900h1.3M1179 891h1.3M1185 882h1.3M1191 873h1.3M1197 865h1.3M1203 856h1.3M1209 847h1.3M1214 839h1.3M1220 831h1.3M1226 822h1.3M1231 814h1.3M1237 806h1.3M1242 798h1.3M1248 790h1.3M1253 782h1.3M1259 774h1.3M1264 766h1.3M1269 758h1.3M1274 750h1.3M1280 743h1.3M1285 735h1.3M1290 728h1.3M1295 720h1.3M1300 713h1.3M1305 706h1.3M1310 698h1.3M1314 691h1.3M1319 684h1.3M1324 677h1.3M1329 670h1.3M1334 663h1.3M1338 656h1.3M1343 649h1.3M1347 643h1.3M1352 636h1.3M1356 629h1.3M1361 623h1.3M1365 616h1.3M1370 610h1.3M1374 603h1.3M1378 597h1.3M1383 591h1.3M1387 584h1.3M1391 578h1.3M1395 572h1.3M1399 566h1.3M1404 560h1.3M1408 554h1.3M1412 548h1.3M1416 542h1.3M1420 536h1.3M1424 530h1.3M1428 524h1.3M1168 929h1.3M1174 920h1.3M1180 911h1.3M1186 902h1.3M1192 893h1.3M1198 884h1.3M1204 875h1.3M1210 866h1.3M1216 857h1.3M1222 849h1.3M1227 840h1.3M1233 832h1.3M1239 823h1.3M1244 815h1.3M1250 807h1.3M1255 799h1.3M1261 791h1.3M1266 783h1.3M1271 775h1.3M1276 767h1.3M1282 759h1.3M1287 752h1.3M1292 744h1.3M1297 736h1.3M1302 729h1.3M1307 721h1.3M1312 714h1.3M1317 707h1.3M1322 699h1.3M1327 692h1.3M1331 685h1.3M1336 678h1.3M1341 671h1.3M1345 664h1.3M1350 657h1.3M1355 650h1.3M1359 644h1.3M1364 637h1.3M1368 630h1.3M1372 624h1.3M1377 617h1.3M1381 611h1.3M1386 604h1.3M1390 598h1.3M1394 592h1.3M1398 585h1.3M1402 579h1.3M1407 573h1.3M1411 567h1.3M1415 561h1.3M1419 555h1.3M1423 549h1.3M1427 543h1.3M1431 537h1.3M1435 531h1.3M1439 525h1.3M1181 931h1.3M1188 921h1.3M1194 912h1.3M1200 903h1.3M1206 894h1.3M1212 885h1.3M1218 876h1.3M1223 867h1.3M1229 859h1.3M1235 850h1.3M1241 841h1.3M1246 833h1.3M1252 825h1.3M1257 816h1.3M1263 808h1.3M1268 800h1.3M1273 792h1.3M1279 784h1.3M1284 776h1.3M1289 768h1.3M1294 760h1.3M1299 753h1.3M1304 745h1.3M1309 737h1.3M1314 730h1.3M1319 722h1.3M1324 715h1.3M1329 708h1.3M1334 701h1.3M1339 693h1.3M1343 686h1.3M1348 679h1.3M1353 672h1.3M1357 665h1.3M1362 658h1.3M1366 651h1.3M1371 645h1.3M1375 638h1.3M1380 631h1.3M1384 625h1.3M1388 618h1.3M1393 612h1.3M1397 605h1.3M1401 599h1.3M1405 592h1.3M1410 586h1.3M1414 580h1.3M1418 574h1.3M1422 568h1.3M1426 562h1.3M1430 555h1.3M1434 549h1.3M1438 544h1.3M1442 538h1.3M1446 532h1.3M1449 526h1.3M1195 932h1.3M1201 923h1.3M1207 913h1.3M1213 904h1.3M1219 895h1.3M1225 886h1.3M1231 877h1.3M1237 869h1.3M1242 860h1.3M1248 851h1.3M1254 843h1.3M1259 834h1.3M1265 826h1.3M1270 818h1.3M1275 809h1.3M1281 801h1.3M1286 793h1.3M1291 785h1.3M1297 777h1.3M1302 769h1.3M1307 762h1.3M1312 754h1.3M1317 746h1.3M1322 739h1.3M1327 731h1.3M1332 724h1.3M1336 716h1.3M1341 709h1.3M1346 702h1.3M1351 694h1.3M1355 687h1.3M1360 680h1.3M1365 673h1.3M1369 666h1.3M1374 659h1.3M1378 653h1.3M1383 646h1.3M1387 639h1.3M1391 632h1.3M1396 626h1.3M1400 619h1.3M1404 613h1.3M1408 606h1.3M1413 600h1.3M1417 593h1.3M1421 587h1.3M1425 581h1.3M1429 575h1.3M1433 569h1.3M1437 562h1.3M1441 556h1.3M1445 550h1.3M1449 544h1.3M1453 539h1.3M1457 533h1.3M1460 527h1.3M1209 933h1.3M1215 924h1.3M1221 915h1.3M1227 906h1.3M1233 897h1.3M1239 888h1.3M1244 879h1.3M1250 870h1.3M1256 861h1.3M1261 853h1.3M1267 844h1.3M1272 836h1.3M1278 827h1.3M1283 819h1.3M1288 811h1.3M1294 802h1.3M1299 794h1.3M1304 786h1.3M1309 778h1.3M1314 771h1.3M1319 763h1.3M1324 755h1.3M1329 747h1.3M1334 740h1.3M1339 732h1.3M1344 725h1.3M1349 717h1.3M1353 710h1.3M1358 703h1.3M1363 696h1.3M1367 688h1.3M1372 681h1.3M1377 674h1.3M1381 667h1.3M1386 660h1.3M1390 654h1.3M1394 647h1.3M1399 640h1.3M1403 633h1.3M1407 627h1.3M1412 620h1.3M1416 614h1.3M1420 607h1.3M1424 601h1.3M1428 594h1.3M1432 588h1.3M1436 582h1.3M1440 576h1.3M1444 569h1.3M1448 563h1.3M1452 557h1.3M1456 551h1.3M1460 545h1.3M1464 539h1.3M1468 534h1.3M1471 528h1.3M1223 935h1.3M1229 925h1.3M1235 916h1.3M1240 907h1.3M1246 898h1.3M1252 889h1.3M1258 880h1.3M1263 871h1.3M1269 863h1.3M1274 854h1.3M1280 845h1.3M1285 837h1.3M1291 828h1.3M1296 820h1.3M1301 812h1.3M1306 804h1.3M1312 796h1.3M1317 788h1.3M1322 780h1.3M1327 772h1.3M1332 764h1.3M1337 756h1.3M1342 748h1.3M1347 741h1.3M1351 733h1.3M1356 726h1.3M1361 718h1.3M1366 711h1.3M1370 704h1.3M1375 697h1.3M1380 689h1.3M1384 682h1.3M1389 675h1.3M1393 668h1.3M1397 661h1.3M1402 655h1.3M1406 648h1.3M1410 641h1.3M1415 634h1.3M1419 628h1.3M1423 621h1.3M1427 615h1.3M1431 608h1.3M1436 602h1.3M1440 595h1.3M1444 589h1.3M1448 583h1.3M1452 577h1.3M1456 570h1.3M1460 564h1.3M1463 558h1.3M1467 552h1.3M1471 546h1.3M1475 540h1.3M1479 534h1.3M1482 529h1.3M1236 936h1.3M1242 927h1.3M1248 918h1.3M1254 908h1.3M1260 899h1.3M1265 890h1.3M1271 881h1.3M1277 873h1.3M1282 864h1.3M1288 855h1.3M1293 847h1.3M1298 838h1.3M1304 830h1.3M1309 821h1.3M1314 813h1.3M1319 805h1.3M1324 797h1.3M1330 789h1.3M1335 781h1.3M1340 773h1.3M1345 765h1.3M1349 757h1.3M1354 750h1.3M1359 742h1.3M1364 734h1.3M1369 727h1.3M1373 720h1.3M1378 712h1.3M1383 705h1.3M1387 698h1.3M1392 691h1.3M1396 683h1.3M1401 676h1.3M1405 669h1.3M1409 662h1.3M1414 656h1.3M1418 649h1.3M1422 642h1.3M1426 635h1.3M1431 629h1.3M1435 622h1.3M1439 616h1.3M1443 609h1.3M1447 603h1.3M1451 596h1.3M1455 590h1.3M1459 584h1.3M1463 577h1.3M1467 571h1.3M1471 565h1.3M1475 559h1.3M1478 553h1.3M1482 547h1.3M1486 541h1.3M1490 535h1.3M1493 529h1.3M1250 938h1.3M1256 928h1.3M1262 919h1.3M1268 910h1.3M1273 901h1.3M1279 892h1.3M1284 883h1.3M1290 874h1.3M1295 865h1.3M1301 857h1.3M1306 848h1.3M1311 839h1.3M1317 831h1.3M1322 823h1.3M1327 814h1.3M1332 806h1.3M1337 798h1.3M1342 790h1.3M1347 782h1.3M1352 774h1.3M1357 766h1.3M1362 758h1.3M1367 751h1.3M1372 743h1.3M1376 736h1.3M1381 728h1.3M1386 721h1.3M1390 713h1.3M1395 706h1.3M1399 699h1.3M1404 692h1.3M1408 684h1.3M1413 677h1.3M1417 670h1.3M1421 663h1.3M1426 657h1.3M1430 650h1.3M1434 643h1.3M1438 636h1.3M1442 630h1.3M1446 623h1.3M1451 617h1.3M1455 610h1.3M1459 604h1.3M1463 597h1.3M1466 591h1.3M1470 585h1.3M1474 578h1.3M1478 572h1.3M1482 566h1.3M1486 560h1.3M1490 554h1.3M1493 548h1.3M1497 542h1.3M1501 536h1.3M1504 530h1.3M1264 939h1.3M1270 930h1.3M1275 920h1.3M1281 911h1.3M1287 902h1.3M1292 893h1.3M1298 884h1.3M1303 875h1.3M1309 866h1.3M1314 858h1.3M1319 849h1.3M1325 841h1.3M1330 832h1.3M1335 824h1.3M1340 816h1.3M1345 807h1.3M1350 799h1.3M1355 791h1.3M1360 783h1.3M1365 775h1.3M1370 767h1.3M1375 760h1.3M1379 752h1.3M1384 744h1.3M1389 737h1.3M1393 729h1.3M1398 722h1.3M1402 714h1.3M1407 707h1.3M1411 700h1.3M1416 693h1.3M1420 686h1.3M1425 678h1.3M1429 671h1.3M1433 665h1.3M1437 658h1.3M1442 651h1.3M1446 644h1.3M1450 637h1.3M1454 631h1.3M1458 624h1.3M1462 618h1.3M1466 611h1.3M1470 605h1.3M1474 598h1.3M1478 592h1.3M1482 586h1.3M1486 579h1.3M1489 573h1.3M1493 567h1.3M1497 561h1.3M1501 555h1.3M1504 549h1.3M1508 543h1.3M1512 537h1.3M1515 531h1.3M1278 940h1.3M1284 931h1.3M1289 922h1.3M1295 913h1.3M1300 903h1.3M1306 894h1.3M1311 885h1.3M1317 877h1.3M1322 868h1.3M1327 859h1.3M1333 850h1.3M1338 842h1.3M1343 833h1.3M1348 825h1.3M1353 817h1.3M1358 809h1.3M1363 800h1.3M1368 792h1.3M1373 784h1.3M1378 776h1.3M1382 769h1.3M1387 761h1.3M1392 753h1.3M1396 745h1.3M1401 738h1.3M1406 730h1.3M1410 723h1.3M1415 716h1.3M1419 708h1.3M1424 701h1.3M1428 694h1.3M1432 687h1.3M1437 680h1.3M1441 673h1.3M1445 666h1.3M1449 659h1.3M1453 652h1.3M1458 645h1.3M1462 638h1.3M1466 632h1.3M1470 625h1.3M1474 619h1.3M1478 612h1.3M1482 606h1.3M1485 599h1.3M1489 593h1.3M1493 587h1.3M1497 580h1.3M1501 574h1.3M1504 568h1.3M1508 562h1.3M1512 556h1.3M1516 550h1.3M1519 544h1.3M1523 538h1.3M1526 532h1.3M1292 942h1.3M1297 933h1.3M1303 923h1.3M1308 914h1.3M1314 905h1.3M1319 896h1.3M1325 887h1.3M1330 878h1.3M1335 869h1.3M1341 860h1.3M1346 852h1.3M1351 843h1.3M1356 835h1.3M1361 826h1.3M1366 818h1.3M1371 810h1.3M1376 802h1.3M1381 794h1.3M1386 786h1.3M1390 778h1.3M1395 770h1.3M1400 762h1.3M1404 754h1.3M1409 747h1.3M1414 739h1.3M1418 731h1.3M1423 724h1.3M1427 717h1.3M1431 709h1.3M1436 702h1.3M1440 695h1.3M1444 688h1.3M1449 681h1.3M1453 674h1.3M1457 667h1.3M1461 660h1.3M1465 653h1.3M1469 646h1.3M1473 639h1.3M1477 633h1.3M1481 626h1.3M1485 620h1.3M1489 613h1.3M1493 607h1.3M1497 600h1.3M1501 594h1.3M1505 587h1.3M1508 581h1.3M1512 575h1.3M1516 569h1.3M1519 563h1.3M1523 557h1.3M1527 551h1.3M1530 545h1.3M1534 539h1.3M1537 533h1.3M1306 943h1.3M1311 934h1.3M1317 925h1.3M1322 915h1.3M1328 906h1.3M1333 897h1.3M1338 888h1.3M1344 879h1.3M1349 870h1.3M1354 862h1.3M1359 853h1.3M1364 845h1.3M1369 836h1.3M1374 828h1.3M1379 819h1.3M1384 811h1.3M1389 803h1.3M1394 795h1.3M1398 787h1.3M1403 779h1.3M1408 771h1.3M1412 763h1.3M1417 755h1.3M1422 748h1.3M1426 740h1.3M1430 733h1.3M1435 725h1.3M1439 718h1.3M1444 710h1.3M1448 703h1.3M1452 696h1.3M1456 689h1.3M1461 682h1.3M1465 675h1.3M1469 668h1.3M1473 661h1.3M1477 654h1.3M1481 647h1.3M1485 640h1.3M1489 634h1.3M1493 627h1.3M1497 620h1.3M1501 614h1.3M1505 608h1.3M1508 601h1.3M1512 595h1.3M1516 588h1.3M1520 582h1.3M1523 576h1.3M1527 570h1.3M1531 564h1.3M1534 558h1.3M1538 552h1.3M1541 546h1.3M1545 540h1.3M1548 534h1.3M1319 945h1.3M1325 935h1.3M1330 926h1.3M1336 917h1.3M1341 908h1.3M1346 898h1.3M1352 889h1.3M1357 881h1.3M1362 872h1.3M1367 863h1.3M1372 854h1.3M1377 846h1.3M1382 837h1.3M1387 829h1.3M1392 821h1.3M1397 812h1.3M1402 804h1.3M1406 796h1.3M1411 788h1.3M1416 780h1.3M1420 772h1.3M1425 764h1.3M1430 757h1.3M1434 749h1.3M1439 741h1.3M1443 734h1.3M1447 726h1.3M1452 719h1.3M1456 711h1.3M1460 704h1.3M1464 697h1.3M1469 690h1.3M1473 683h1.3M1477 676h1.3M1481 669h1.3M1485 662h1.3M1489 655h1.3M1493 648h1.3M1497 641h1.3M1501 635h1.3M1505 628h1.3M1509 621h1.3M1512 615h1.3M1516 608h1.3M1520 602h1.3M1524 596h1.3M1527 589h1.3M1531 583h1.3M1535 577h1.3M1538 571h1.3M1542 565h1.3M1545 559h1.3M1549 553h1.3M1552 547h1.3M1556 541h1.3M1559 535h1.3M1333 946h1.3M1339 937h1.3M1344 927h1.3M1350 918h1.3M1355 909h1.3M1360 900h1.3M1365 891h1.3M1370 882h1.3M1376 873h1.3M1381 864h1.3M1386 856h1.3M1391 847h1.3M1395 839h1.3M1400 830h1.3M1405 822h1.3M1410 814h1.3M1415 805h1.3M1419 797h1.3M1424 789h1.3M1429 781h1.3M1433 773h1.3M1438 765h1.3M1442 758h1.3M1447 750h1.3M1451 742h1.3M1455 735h1.3M1460 727h1.3M1464 720h1.3M1468 713h1.3M1472 705h1.3M1477 698h1.3M1481 691h1.3M1485 684h1.3M1489 677h1.3M1493 670h1.3M1497 663h1.3M1501 656h1.3M1505 649h1.3M1509 642h1.3M1513 636h1.3M1516 629h1.3M1520 622h1.3M1524 616h1.3M1528 609h1.3M1532 603h1.3M1535 597h1.3M1539 590h1.3M1542 584h1.3M1546 578h1.3M1550 572h1.3M1553 566h1.3M1557 559h1.3M1560 553h1.3M1564 547h1.3M1567 542h1.3M1570 536h1.3M1347 948h1.3M1353 938h1.3M1358 929h1.3M1363 919h1.3M1368 910h1.3M1374 901h1.3M1379 892h1.3M1384 883h1.3M1389 874h1.3M1394 866h1.3M1399 857h1.3M1404 848h1.3M1409 840h1.3M1413 831h1.3M1418 823h1.3M1423 815h1.3M1428 807h1.3M1432 798h1.3M1437 790h1.3M1441 782h1.3M1446 774h1.3M1450 767h1.3M1455 759h1.3M1459 751h1.3M1464 744h1.3M1468 736h1.3M1472 728h1.3M1476 721h1.3M1481 714h1.3M1485 706h1.3M1489 699h1.3M1493 692h1.3M1497 685h1.3M1501 678h1.3M1505 671h1.3M1509 664h1.3M1513 657h1.3M1517 650h1.3M1521 643h1.3M1524 637h1.3M1528 630h1.3M1532 623h1.3M1536 617h1.3M1539 610h1.3M1543 604h1.3M1547 598h1.3M1550 591h1.3M1554 585h1.3M1557 579h1.3M1561 573h1.3M1564 566h1.3M1568 560h1.3M1571 554h1.3M1575 548h1.3M1578 542h1.3M1582 537h1.3M1361 949h1.3M1367 940h1.3M1372 930h1.3M1377 921h1.3M1382 912h1.3M1387 903h1.3M1392 894h1.3M1397 885h1.3M1402 876h1.3M1407 867h1.3M1412 858h1.3M1417 850h1.3M1422 841h1.3M1427 833h1.3M1431 824h1.3M1436 816h1.3M1441 808h1.3M1445 800h1.3M1450 792h1.3M1454 784h1.3M1459 776h1.3M1463 768h1.3M1467 760h1.3M1472 752h1.3M1476 745h1.3M1480 737h1.3M1485 730h1.3M1489 722h1.3M1493 715h1.3M1497 707h1.3M1501 700h1.3M1505 693h1.3M1509 686h1.3M1513 679h1.3M1517 672h1.3M1521 665h1.3M1525 658h1.3M1529 651h1.3M1532 644h1.3M1536 638h1.3M1540 631h1.3M1544 624h1.3M1547 618h1.3M1551 611h1.3M1555 605h1.3M1558 599h1.3M1562 592h1.3M1565 586h1.3M1569 580h1.3M1572 574h1.3M1576 567h1.3M1579 561h1.3M1583 555h1.3M1586 549h1.3M1589 543h1.3M1593 537h1.3M1375 950h1.3M1380 941h1.3M1386 932h1.3M1391 922h1.3M1396 913h1.3M1401 904h1.3M1406 895h1.3M1411 886h1.3M1416 877h1.3M1421 868h1.3M1426 860h1.3M1430 851h1.3M1435 842h1.3M1440 834h1.3M1444 826h1.3M1449 817h1.3M1454 809h1.3M1458 801h1.3M1463 793h1.3M1467 785h1.3M1471 777h1.3M1476 769h1.3M1480 761h1.3M1484 753h1.3M1489 746h1.3M1493 738h1.3M1497 731h1.3M1501 723h1.3M1505 716h1.3M1509 709h1.3M1513 701h1.3M1517 694h1.3M1521 687h1.3M1525 680h1.3M1529 673h1.3M1533 666h1.3M1537 659h1.3M1541 652h1.3M1544 645h1.3M1548 639h1.3M1552 632h1.3M1555 625h1.3M1559 619h1.3M1563 612h1.3M1566 606h1.3M1570 600h1.3M1573 593h1.3M1577 587h1.3M1580 581h1.3M1584 574h1.3M1587 568h1.3M1590 562h1.3M1594 556h1.3M1597 550h1.3M1600 544h1.3M1604 538h1.3M1389 952h1.3M1394 942h1.3M1399 933h1.3M1405 924h1.3M1410 914h1.3M1415 905h1.3M1420 896h1.3M1424 887h1.3M1429 878h1.3M1434 870h1.3M1439 861h1.3M1444 852h1.3M1448 844h1.3M1453 835h1.3M1458 827h1.3M1462 818h1.3M1467 810h1.3M1471 802h1.3M1475 794h1.3M1480 786h1.3M1484 778h1.3M1489 770h1.3M1493 762h1.3M1497 755h1.3M1501 747h1.3M1505 739h1.3M1509 732h1.3M1514 724h1.3M1518 717h1.3M1522 710h1.3M1526 702h1.3M1530 695h1.3M1533 688h1.3M1537 681h1.3M1541 674h1.3M1545 667h1.3M1549 660h1.3M1552 653h1.3M1556 646h1.3M1560 640h1.3M1563 633h1.3M1567 626h1.3M1571 620h1.3M1574 613h1.3M1578 607h1.3M1581 600h1.3M1585 594h1.3M1588 588h1.3M1592 582h1.3M1595 575h1.3M1598 569h1.3M1602 563h1.3M1605 557h1.3M1608 551h1.3M1612 545h1.3M1615 539h1.3M1403 953h1.3M1408 944h1.3M1413 934h1.3M1418 925h1.3M1423 916h1.3M1428 907h1.3M1433 898h1.3M1438 889h1.3M1443 880h1.3M1448 871h1.3M1452 862h1.3M1457 854h1.3M1462 845h1.3M1466 836h1.3M1471 828h1.3M1475 820h1.3M1480 811h1.3M1484 803h1.3M1488 795h1.3M1493 787h1.3M1497 779h1.3M1501 771h1.3M1505 764h1.3M1510 756h1.3M1514 748h1.3M1518 741h1.3M1522 733h1.3M1526 726h1.3M1530 718h1.3M1534 711h1.3M1538 703h1.3M1542 696h1.3M1546 689h1.3M1549 682h1.3M1553 675h1.3M1557 668h1.3M1561 661h1.3M1564 654h1.3M1568 647h1.3M1572 641h1.3M1575 634h1.3M1579 627h1.3M1582 621h1.3M1586 614h1.3M1589 608h1.3M1593 601h1.3M1596 595h1.3M1600 589h1.3M1603 583h1.3M1606 576h1.3M1610 570h1.3M1613 564h1.3M1616 558h1.3M1620 552h1.3M1623 546h1.3M1626 540h1.3M1417 955h1.3M1422 945h1.3M1427 936h1.3M1432 926h1.3M1437 917h1.3M1442 908h1.3M1447 899h1.3M1452 890h1.3M1456 881h1.3M1461 872h1.3M1466 863h1.3M1470 855h1.3M1475 846h1.3M1479 838h1.3M1484 829h1.3M1488 821h1.3M1493 813h1.3M1497 805h1.3M1501 796h1.3M1506 788h1.3M1510 780h1.3M1514 773h1.3M1518 765h1.3M1522 757h1.3M1526 749h1.3M1530 742h1.3M1534 734h1.3M1538 727h1.3M1542 719h1.3M1546 712h1.3M1550 705h1.3M1554 697h1.3M1558 690h1.3M1562 683h1.3M1565 676h1.3M1569 669h1.3M1573 662h1.3M1576 655h1.3M1580 648h1.3M1584 642h1.3M1587 635h1.3M1591 628h1.3M1594 622h1.3M1598 615h1.3M1601 609h1.3M1604 602h1.3M1608 596h1.3M1611 590h1.3M1615 583h1.3M1618 577h1.3M1621 571h1.3M1624 565h1.3M1628 559h1.3M1631 553h1.3M1634 547h1.3M1637 541h1.3M1431 956h1.3M1436 947h1.3M1441 937h1.3M1446 928h1.3M1451 919h1.3M1456 909h1.3M1461 900h1.3M1465 891h1.3M1470 882h1.3M1475 874h1.3M1479 865h1.3M1484 856h1.3M1488 848h1.3M1493 839h1.3M1497 831h1.3M1501 822h1.3M1506 814h1.3M1510 806h1.3M1514 798h1.3M1518 790h1.3M1523 782h1.3M1527 774h1.3M1531 766h1.3M1535 758h1.3M1539 750h1.3M1543 743h1.3M1547 735h1.3M1551 728h1.3M1555 720h1.3M1559 713h1.3M1562 706h1.3M1566 698h1.3M1570 691h1.3M1574 684h1.3M1577 677h1.3M1581 670h1.3M1585 663h1.3M1588 656h1.3M1592 650h1.3M1595 643h1.3M1599 636h1.3M1602 629h1.3M1606 623h1.3M1609 616h1.3M1613 610h1.3M1616 603h1.3M1619 597h1.3M1623 591h1.3M1626 584h1.3M1629 578h1.3M1632 572h1.3M1636 566h1.3M1639 560h1.3M1642 554h1.3M1645 548h1.3M1648 542h1.3M1445 958h1.3M1450 948h1.3M1455 939h1.3M1460 929h1.3M1465 920h1.3M1469 911h1.3M1474 902h1.3M1479 893h1.3M1483 884h1.3M1488 875h1.3M1493 866h1.3M1497 857h1.3M1501 849h1.3M1506 840h1.3M1510 832h1.3M1515 823h1.3M1519 815h1.3M1523 807h1.3M1527 799h1.3M1531 791h1.3M1536 783h1.3M1540 775h1.3M1544 767h1.3M1548 759h1.3M1552 752h1.3M1556 744h1.3M1559 736h1.3M1563 729h1.3M1567 721h1.3M1571 714h1.3M1575 707h1.3M1578 700h1.3M1582 692h1.3M1586 685h1.3M1590 678h1.3M1593 671h1.3M1597 664h1.3M1600 657h1.3M1604 651h1.3M1607 644h1.3M1611 637h1.3M1614 630h1.3M1618 624h1.3M1621 617h1.3M1624 611h1.3M1628 604h1.3M1631 598h1.3M1634 592h1.3M1637 585h1.3M1641 579h1.3M1644 573h1.3M1647 567h1.3M1650 561h1.3M1653 555h1.3M1656 549h1.3M1659 543h1.3M1459 959h1.3M1464 950h1.3M1469 940h1.3M1474 931h1.3M1479 921h1.3M1483 912h1.3M1488 903h1.3M1492 894h1.3M1497 885h1.3M1502 876h1.3M1506 867h1.3M1510 859h1.3M1515 850h1.3M1519 842h1.3M1523 833h1.3M1528 825h1.3M1532 816h1.3M1536 808h1.3M1540 800h1.3M1544 792h1.3M1548 784h1.3M1552 776h1.3M1556 768h1.3M1560 760h1.3M1564 753h1.3M1568 745h1.3M1572 738h1.3M1576 730h1.3M1580 723h1.3M1583 715h1.3M1587 708h1.3M1591 701h1.3M1594 693h1.3M1598 686h1.3M1602 679h1.3M1605 672h1.3M1609 665h1.3M1612 658h1.3M1616 652h1.3M1619 645h1.3M1623 638h1.3M1626 631h1.3M1629 625h1.3M1633 618h1.3M1636 612h1.3M1639 605h1.3M1642 599h1.3M1646 593h1.3M1649 586h1.3M1652 580h1.3M1655 574h1.3M1658 568h1.3M1661 562h1.3M1665 556h1.3M1668 550h1.3M1671 544h1.3M1473 961h1.3M1478 951h1.3M1483 941h1.3M1488 932h1.3M1492 923h1.3M1497 914h1.3M1502 904h1.3M1506 895h1.3M1511 886h1.3M1515 878h1.3M1519 869h1.3M1524 860h1.3M1528 851h1.3M1532 843h1.3M1537 834h1.3M1541 826h1.3M1545 818h1.3M1549 809h1.3M1553 801h1.3M1557 793h1.3M1561 785h1.3M1565 777h1.3M1569 769h1.3M1573 762h1.3M1577 754h1.3M1581 746h1.3M1585 739h1.3M1588 731h1.3M1592 724h1.3M1596 716h1.3M1599 709h1.3M1603 702h1.3M1607 695h1.3M1610 687h1.3M1614 680h1.3M1617 673h1.3M1621 666h1.3M1624 659h1.3M1628 653h1.3M1631 646h1.3M1634 639h1.3M1638 632h1.3M1641 626h1.3M1644 619h1.3M1648 613h1.3M1651 606h1.3M1654 600h1.3M1657 594h1.3M1660 587h1.3M1664 581h1.3M1667 575h1.3M1670 569h1.3M1673 563h1.3M1676 556h1.3M1679 550h1.3M1682 545h1.3M1488 962h1.3M1492 952h1.3M1497 943h1.3M1502 933h1.3M1506 924h1.3M1511 915h1.3M1515 906h1.3M1520 897h1.3M1524 888h1.3M1529 879h1.3M1533 870h1.3M1537 861h1.3M1542 853h1.3M1546 844h1.3M1550 836h1.3M1554 827h1.3M1558 819h1.3M1562 811h1.3M1566 803h1.3M1570 794h1.3M1574 786h1.3M1578 778h1.3M1582 771h1.3M1586 763h1.3M1590 755h1.3M1593 747h1.3M1597 740h1.3M1601 732h1.3M1605 725h1.3M1608 717h1.3M1612 710h1.3M1615 703h1.3M1619 696h1.3M1622 688h1.3M1626 681h1.3M1629 674h1.3M1633 667h1.3M1636 660h1.3M1640 654h1.3M1643 647h1.3M1646 640h1.3M1650 633h1.3M1653 627h1.3M1656 620h1.3M1659 614h1.3M1663 607h1.3M1666 601h1.3M1669 594h1.3M1672 588h1.3M1675 582h1.3M1678 576h1.3M1681 570h1.3M1684 563h1.3M1687 557h1.3M1690 551h1.3M1693 545h1.3" stroke="#646464" stroke-width="1.2" fill="none"/></g>
<polygon points="275,690.6 727,344.2 727.7,467.6 279.8,843.3" fill="#6c6c6c" fill-opacity="0.8"/>
<polygon points="727,344.2 1708,415.9 1701.7,545.3 727.7,467.6" fill="#909092" fill-opacity="0.8"/>
<polygon points="275,690.6 1501.7,806.5 1495.5,968.5 279.8,843.3" fill="#c0c0c0" fill-opacity="0.10"/>
<polygon points="1708,415.9 1501.7,806.5 1495.5,968.5 1701.7,545.3" fill="#b0b0b0" fill-opacity="0.06"/>
<polygon points="759,484 1644,555 1443,941 359,830" fill="none" stroke="#ff00ff" stroke-width="1.6" stroke-dasharray="12 4"/>
<line x1="788.1" y1="518.7" x2="788.4" y2="657" stroke="#1010e8" stroke-width="1.6"/><line x1="1056.5" y1="540.8" x2="1054.7" y2="680.9" stroke="#1010e8" stroke-width="1.6"/>
<rect x="785.6" y="516.2" width="5" height="5" fill="#ff1010"/>
<rect x="1054" y="538.3" width="5" height="5" fill="#ff1010"/>
<polygon points="779.1,639.5 801.3,619.3 918.5,629.4 919.5,633.4 957.8,638.5 997.2,594.4 1130.5,605.1 1077,670.8 938.7,658.7 940.7,654.2" fill="#5e7288"/>
<polygon points="779.1,639.5 940.7,654.2 938.7,658.7 1077,670.8 1077,713.6 1112.8,669.8 1111.8,747.5 1068.9,743.9 1068.9,713.6 1032.2,710.8 1031,790 937.2,781.5 937.6,731.4 779.1,716.2" fill="#97b5d9"/>
<polygon points="1077,670.8 1130.5,605.1 1128.5,725.3 1111.8,747.5 1112.8,669.8 1077,713.6" fill="#54677d"/>
<polygon points="1032.2,710.8 1068.9,713.6 1068.9,743.9 1031,790" fill="#54677d"/>
<polygon points="1169.9,683.1 1287.4,530.4 1322.7,533.2 1208.6,686.1" fill="#5e7288"/>
<polygon points="1169.9,683.1 1208.6,686.1 1206.2,811.5 1167.2,807.6" fill="#97b5d9"/>
<polygon points="1208.6,686.1 1322.7,533.2 1319.5,648.4 1206.2,811.5" fill="#54677d"/>
<line x1="1036" y1="705" x2="1036" y2="676.1" stroke="#0000e6" stroke-width="2.3400000000000003"/><polygon points="1036,668 1032.4,678.8 1039.6,678.8" fill="#0000b8"/><line x1="1036" y1="705" x2="1005.1" y2="702.8" stroke="#11ee11" stroke-width="2.3400000000000003"/><polygon points="997,701.9 1007.8,697.8 1007.8,705.9" fill="#119911"/><line x1="1036" y1="705" x2="1042.5" y2="696.5" stroke="#ee1111" stroke-width="2.16"/><circle cx="1042.5" cy="696.5" r="3.1" fill="#c81010"/>
<text x="1031" y="663" font-size="11" fill="#1a1ae0" font-family="Liberation Sans">Z</text>
<text x="985" y="706" font-size="11" fill="#22cc22" font-family="Liberation Sans">Y</text>
<text x="1042" y="695" font-size="11" fill="#ee2222" font-family="Liberation Sans">X</text>
<line x1="275" y1="690.6" x2="279.8" y2="843.3" stroke="#1010e8" stroke-width="1.6"/><line x1="409" y1="587.9" x2="412.4" y2="732.1" stroke="#1010e8" stroke-width="1.6"/><line x1="527.4" y1="497.2" x2="529.7" y2="633.7" stroke="#1010e8" stroke-width="1.6"/><line x1="632.7" y1="416.5" x2="634.1" y2="546.1" stroke="#1010e8" stroke-width="1.6"/><line x1="727" y1="344.2" x2="727.7" y2="467.6" stroke="#1010e8" stroke-width="1.6"/><line x1="566.6" y1="718.2" x2="568.9" y2="873.1" stroke="#1010e8" stroke-width="1.6"/><line x1="684.3" y1="612.2" x2="685.5" y2="758.3" stroke="#1010e8" stroke-width="1.6"/><line x1="880.3" y1="435.7" x2="879.9" y2="566.9" stroke="#1010e8" stroke-width="1.6"/><line x1="962.7" y1="361.5" x2="961.8" y2="486.3" stroke="#1010e8" stroke-width="1.6"/><line x1="867.9" y1="746.6" x2="867.6" y2="903.8" stroke="#1010e8" stroke-width="1.6"/><line x1="968.2" y1="637.2" x2="967.1" y2="785.3" stroke="#1010e8" stroke-width="1.6"/><line x1="1134.8" y1="455.4" x2="1132.5" y2="588.3" stroke="#1010e8" stroke-width="1.6"/><line x1="1204.7" y1="379.1" x2="1202" y2="505.4" stroke="#1010e8" stroke-width="1.6"/><line x1="1179.4" y1="776" x2="1176.3" y2="935.6" stroke="#1010e8" stroke-width="1.6"/><line x1="1261.1" y1="662.9" x2="1257.5" y2="813.2" stroke="#1010e8" stroke-width="1.6"/><line x1="1332.9" y1="563.6" x2="1328.9" y2="705.6" stroke="#1010e8" stroke-width="1.6"/><line x1="1396.4" y1="475.7" x2="1392.1" y2="610.2" stroke="#1010e8" stroke-width="1.6"/><line x1="1453" y1="397.3" x2="1448.6" y2="525.1" stroke="#1010e8" stroke-width="1.6"/><line x1="1501.7" y1="806.5" x2="1495.5" y2="968.5" stroke="#1010e8" stroke-width="1.6"/><line x1="1563.5" y1="689.5" x2="1557.2" y2="842" stroke="#1010e8" stroke-width="1.6"/><line x1="1617.6" y1="587.1" x2="1611.3" y2="731" stroke="#1010e8" stroke-width="1.6"/><line x1="1665.4" y1="496.5" x2="1659.1" y2="632.8" stroke="#1010e8" stroke-width="1.6"/><line x1="1708" y1="415.9" x2="1701.7" y2="545.3" stroke="#1010e8" stroke-width="1.6"/>
<g stroke="#1b8a1b" stroke-width="1.6" fill="none"><polygon points="275,690.6 727,344.2 1708,415.9 1501.7,806.5" /></g>
<g stroke="#141414" stroke-width="1.6" fill="none"><polygon points="279.8,843.3 727.7,467.6 1701.7,545.3 1495.5,968.5" /></g>
<rect x="272.5" y="688.1" width="5" height="5" fill="#ff1010"/>
<rect x="277.3" y="840.8" width="5" height="5" fill="#ee1818"/>
<rect x="406.5" y="585.4" width="5" height="5" fill="#ff1010"/>
<rect x="409.9" y="729.6" width="5" height="5" fill="#b03434"/>
<rect x="524.9" y="494.7" width="5" height="5" fill="#ff1010"/>
<rect x="527.2" y="631.2" width="5" height="5" fill="#b03434"/>
<rect x="630.2" y="414" width="5" height="5" fill="#ff1010"/>
<rect x="631.6" y="543.6" width="5" height="5" fill="#b03434"/>
<rect x="724.5" y="341.7" width="5" height="5" fill="#ff1010"/>
<rect x="725.2" y="465.1" width="5" height="5" fill="#b03434"/>
<rect x="564.1" y="715.7" width="5" height="5" fill="#ff1010"/>
<rect x="566.4" y="870.6" width="5" height="5" fill="#ee1818"/>
<rect x="681.8" y="609.7" width="5" height="5" fill="#ff1010"/>
<rect x="683" y="755.8" width="5" height="5" fill="#b03434"/>
<rect x="877.8" y="433.2" width="5" height="5" fill="#ff1010"/>
<rect x="877.4" y="564.4" width="5" height="5" fill="#b03434"/>
<rect x="960.2" y="359" width="5" height="5" fill="#ff1010"/>
<rect x="959.3" y="483.8" width="5" height="5" fill="#b03434"/>
<rect x="865.4" y="744.1" width="5" height="5" fill="#ff1010"/>
<rect x="865.1" y="901.3" width="5" height="5" fill="#ee1818"/>
<rect x="965.7" y="634.7" width="5" height="5" fill="#ff1010"/>
<rect x="964.6" y="782.8" width="5" height="5" fill="#b03434"/>
<rect x="1132.3" y="452.9" width="5" height="5" fill="#ff1010"/>
<rect x="1130" y="585.8" width="5" height="5" fill="#b03434"/>
<rect x="1202.2" y="376.6" width="5" height="5" fill="#ff1010"/>
<rect x="1199.5" y="502.9" width="5" height="5" fill="#b03434"/>
<rect x="1176.9" y="773.5" width="5" height="5" fill="#ff1010"/>
<rect x="1173.8" y="933.1" width="5" height="5" fill="#ee1818"/>
<rect x="1258.6" y="660.4" width="5" height="5" fill="#ff1010"/>
<rect x="1255" y="810.7" width="5" height="5" fill="#b03434"/>
<rect x="1330.4" y="561.1" width="5" height="5" fill="#ff1010"/>
<rect x="1326.4" y="703.1" width="5" height="5" fill="#b03434"/>
<rect x="1393.9" y="473.2" width="5" height="5" fill="#ff1010"/>
<rect x="1389.6" y="607.7" width="5" height="5" fill="#b03434"/>
<rect x="1450.5" y="394.8" width="5" height="5" fill="#ff1010"/>
<rect x="1446.1" y="522.6" width="5" height="5" fill="#b03434"/>
<rect x="1499.2" y="804" width="5" height="5" fill="#ff1010"/>
<rect x="1493" y="966" width="5" height="5" fill="#ee1818"/>
<rect x="1561" y="687" width="5" height="5" fill="#ff1010"/>
<rect x="1554.7" y="839.5" width="5" height="5" fill="#ee1818"/>
<rect x="1615.1" y="584.6" width="5" height="5" fill="#ff1010"/>
<rect x="1608.8" y="728.5" width="5" height="5" fill="#ee1818"/>
<rect x="1662.9" y="494" width="5" height="5" fill="#ff1010"/>
<rect x="1656.6" y="630.3" width="5" height="5" fill="#ee1818"/>
<rect x="1705.5" y="413.4" width="5" height="5" fill="#ff1010"/>
<rect x="1699.2" y="542.8" width="5" height="5" fill="#ee1818"/>
<line x1="1051" y1="326" x2="971.9" y2="423.5" stroke="#0000f0" stroke-width="4.2"/><polygon points="965,432 968.9,418.4 977.5,425.4" fill="#0000f0"/>
<line x1="1117" y1="325" x2="1193.6" y2="433" stroke="#0000f0" stroke-width="4.2"/><polygon points="1200,442 1188,434.6 1197,428.2" fill="#0000f0"/>
<line x1="697" y1="961" x2="766.8" y2="880.3" stroke="#0000f0" stroke-width="4.2"/><polygon points="774,872 769.7,885.4 761.3,878.2" fill="#0000f0"/>
<line x1="476" y1="346" x2="582" y2="525" stroke="#0000f0" stroke-width="4.2"/>
<circle cx="583" cy="526" r="4.5" fill="#0000f0"/>
<g font-family="Liberation Sans" font-weight="bold" font-size="19.5" fill="#0000f2" text-anchor="middle"><text x="471" y="311">Terrain</text><text x="471" y="333">(3D-Layerd Domain)</text><text x="1084" y="309">Thickness Vectors</text><text x="693" y="986">Base Surface</text></g>
<line x1="324.5" y1="918" x2="324.5" y2="890" stroke="#0000e6" stroke-width="2.6"/><polygon points="324.5,881 320.5,893 328.5,893" fill="#0000b8"/><line x1="324.5" y1="918" x2="297.5" y2="915.5" stroke="#11ee11" stroke-width="2.6"/><polygon points="288.5,914.5 300.5,910 300.5,919" fill="#119911"/><line x1="324.5" y1="918" x2="334.5" y2="909" stroke="#ee1111" stroke-width="2.4"/><circle cx="334.5" cy="909" r="3.4" fill="#c81010"/>
<text x="318" y="878" font-size="12" fill="#1a1ae0" font-family="Liberation Sans">Z</text>
<text x="274" y="917" font-size="12" fill="#22cc22" font-family="Liberation Sans">Y</text>
<text x="338" y="907" font-size="12" fill="#ee2222" font-family="Liberation Sans">X</text>
<rect x="798.5" y="895.5" width="188" height="19" fill="#fdfdfd" stroke="#a8a8a8"/>
<text x="804" y="909" font-size="11.5" letter-spacing="-0.1" fill="#333" font-family="Liberation Sans">Surface No. 1 - Base Surface; 1-16</text>
</g>
</svg>
<div class="a" style="left:1714px;top:74px;width:2px;height:919px;background:#6e6e6e"></div><div class="a" style="left:1712px;top:78px;width:1px;height:914px;background:#e4e4e4"></div>
<div class="a" style="left:1720px;top:76px;width:200px;height:918px;background:#fff"></div>
<div class="a hdr" style="left:1720px;top:76px;width:200px"></div>
<div class="t" style="left:1724px;top:80px;font-size:11px;letter-spacing:-0.1px;color:#1a1a1a">Edit Bar - Geometry</div>
<div class="pbtn" style="left:1891px;top:78px"></div><div class="pbtn" style="left:1904px;top:78px"></div>
<svg class="a" style="left:1891px;top:78px" width="26" height="13"><path d="M3.5 3H8.5M4.5 3V8.5M7.5 3V8.5M2.5 9H9.5M6 9V11" stroke="#000" stroke-width="1.2" fill="none"/><path d="M16 3L22 9M22 3L16 9" stroke="#000" stroke-width="1.1"/></svg>
<div class="sec" style="top:97px;height:39px"></div><div class="a" style="left:1723px;top:98px;width:194px;height:17px;background:linear-gradient(#eef0f6,#dde2ec);border-bottom:1px solid #c8d0de"></div><div class="t" style="left:1726px;top:101px;font-size:11px;letter-spacing:-0.1px;color:#5d6b7c">Model Editor</div><div class="a" style="left:1904px;top:104px;width:0;height:0;border-left:5px solid transparent;border-right:5px solid transparent;border-top:5px solid #7d8694"></div><svg class="a" style="left:1726px;top:118px" width="16" height="16" viewBox="0 0 16 16"><path d="M1 8L5 13L15 2L5 10Z" fill="#3cbc3c" stroke="#2a9a2a" stroke-width=".6"/></svg><div class="t" style="left:1747px;top:121px;font-size:11px;letter-spacing:-0.2px">Close Model Editor</div><div class="sec" style="top:138px;height:391px"></div><div class="a" style="left:1723px;top:139px;width:194px;height:17px;background:linear-gradient(#eef0f6,#dde2ec);border-bottom:1px solid #c8d0de"></div><div class="t" style="left:1726px;top:142px;font-size:11px;letter-spacing:-0.1px;color:#5d6b7c">Insert Object</div><div class="a" style="left:1904px;top:145px;width:0;height:0;border-left:5px solid transparent;border-right:5px solid transparent;border-top:5px solid #7d8694"></div><svg class="a" style="left:1726px;top:158px" width="16" height="16" viewBox="0 0 16 16"><path d="M3 0.5V5.5M0.5 3H5.5M1.2 1.2L4.8 4.8M4.8 1.2L1.2 4.8" stroke="#f0d020" stroke-width="1"/><rect x="6.8" y="7.8" width="2.4" height="2.4" fill="#d01010"/></svg><div class="t" style="left:1747px;top:161px;font-size:11px;letter-spacing:-0.2px">Point</div><svg class="a" style="left:1726px;top:177px" width="16" height="16" viewBox="0 0 16 16"><path d="M3 0.5V5.5M0.5 3H5.5M1.2 1.2L4.8 4.8M4.8 1.2L1.2 4.8" stroke="#f0d020" stroke-width="1"/><path d="M4 13L12 5" stroke="#111"/><rect x="2.8" y="11.8" width="2.4" height="2.4" fill="#d01010"/><rect x="10.8" y="3.8" width="2.4" height="2.4" fill="#d01010"/></svg><div class="t" style="left:1747px;top:180px;font-size:11px;letter-spacing:-0.2px">Line - Single Segment</div><svg class="a" style="left:1726px;top:196px" width="16" height="16" viewBox="0 0 16 16"><path d="M3 0.5V5.5M0.5 3H5.5M1.2 1.2L4.8 4.8M4.8 1.2L1.2 4.8" stroke="#f0d020" stroke-width="1"/><path d="M3 13H11V5" fill="none" stroke="#111"/><rect x="1.8" y="11.8" width="2.4" height="2.4" fill="#d01010"/><rect x="9.8" y="11.8" width="2.4" height="2.4" fill="#d01010"/><rect x="9.8" y="3.8" width="2.4" height="2.4" fill="#d01010"/></svg><div class="t" style="left:1747px;top:199px;font-size:11px;letter-spacing:-0.2px">Line - Connected Segments</div><svg class="a" style="left:1726px;top:215px" width="16" height="16" viewBox="0 0 16 16"><path d="M3 0.5V5.5M0.5 3H5.5M1.2 1.2L4.8 4.8M4.8 1.2L1.2 4.8" stroke="#f0d020" stroke-width="1"/><path d="M3 13H7V9H11V5" fill="none" stroke="#111"/><rect x="1.8" y="11.8" width="2.4" height="2.4" fill="#d01010"/><rect x="9.8" y="3.8" width="2.4" height="2.4" fill="#d01010"/></svg><div class="t" style="left:1747px;top:218px;font-size:11px;letter-spacing:-0.2px">Line - Polyline</div><svg class="a" style="left:1726px;top:234px" width="16" height="16" viewBox="0 0 16 16"><path d="M3 0.5V5.5M0.5 3H5.5M1.2 1.2L4.8 4.8M4.8 1.2L1.2 4.8" stroke="#f0d020" stroke-width="1"/><path d="M3 11Q6 16 11 11Q13 8 10 5" fill="none" stroke="#111" stroke-width="1.2"/><rect x="1.8" y="9.8" width="2.4" height="2.4" fill="#d01010"/><rect x="8.8" y="3.8" width="2.4" height="2.4" fill="#d01010"/><rect x="5.8" y="12.3" width="2.4" height="2.4" fill="#d01010"/></svg><div class="t" style="left:1747px;top:237px;font-size:11px;letter-spacing:-0.2px">Arc via 3 Points</div><svg class="a" style="left:1726px;top:253px" width="16" height="16" viewBox="0 0 16 16"><path d="M3 0.5V5.5M0.5 3H5.5M1.2 1.2L4.8 4.8M4.8 1.2L1.2 4.8" stroke="#f0d020" stroke-width="1"/><path d="M3 11Q7 16 11 11Q13 8 10 5" fill="none" stroke="#111" stroke-width="1.2"/><rect x="1.8" y="9.8" width="2.4" height="2.4" fill="#d01010"/><rect x="8.8" y="3.8" width="2.4" height="2.4" fill="#d01010"/></svg><div class="t" style="left:1747px;top:256px;font-size:11px;letter-spacing:-0.2px">Arc via 2 Points and R</div><svg class="a" style="left:1726px;top:272px" width="16" height="16" viewBox="0 0 16 16"><path d="M3 0.5V5.5M0.5 3H5.5M1.2 1.2L4.8 4.8M4.8 1.2L1.2 4.8" stroke="#f0d020" stroke-width="1"/><path d="M3 12Q8 16 12 10Q13 7 10 5" fill="none" stroke="#111" stroke-width="1.2"/><rect x="5.8" y="8.8" width="2.4" height="2.4" fill="#d01010"/><rect x="8.8" y="3.8" width="2.4" height="2.4" fill="#d01010"/></svg><div class="t" style="left:1747px;top:275px;font-size:11px;letter-spacing:-0.2px">Arc via Center, R and Angle</div><svg class="a" style="left:1726px;top:291px" width="16" height="16" viewBox="0 0 16 16"><path d="M3 0.5V5.5M0.5 3H5.5M1.2 1.2L4.8 4.8M4.8 1.2L1.2 4.8" stroke="#f0d020" stroke-width="1"/><circle cx="8" cy="9" r="5" fill="none" stroke="#111" stroke-width="1.3"/><rect x="1.8" y="7.8" width="2.4" height="2.4" fill="#d01010"/><rect x="11.8" y="7.8" width="2.4" height="2.4" fill="#d01010"/><rect x="6.8" y="12.8" width="2.4" height="2.4" fill="#d01010"/></svg><div class="t" style="left:1747px;top:294px;font-size:11px;letter-spacing:-0.2px">Circle via 3 Points</div><svg class="a" style="left:1726px;top:310px" width="16" height="16" viewBox="0 0 16 16"><path d="M3 0.5V5.5M0.5 3H5.5M1.2 1.2L4.8 4.8M4.8 1.2L1.2 4.8" stroke="#f0d020" stroke-width="1"/><circle cx="8" cy="9" r="5" fill="none" stroke="#111" stroke-width="1.3"/><path d="M8 9L12 12" stroke="#111"/><rect x="6.8" y="7.8" width="2.4" height="2.4" fill="#d01010"/></svg><div class="t" style="left:1747px;top:313px;font-size:11px;letter-spacing:-0.2px">Circle via Center and Radius</div><svg class="a" style="left:1726px;top:329px" width="16" height="16" viewBox="0 0 16 16"><path d="M3 0.5V5.5M0.5 3H5.5M1.2 1.2L4.8 4.8M4.8 1.2L1.2 4.8" stroke="#f0d020" stroke-width="1"/><path d="M2 11Q5 4 8 9Q11 14 14 8" fill="none" stroke="#111" stroke-width="1.2"/><rect x="0.8" y="9.8" width="2.4" height="2.4" fill="#d01010"/><rect x="12.8" y="6.8" width="2.4" height="2.4" fill="#d01010"/></svg><div class="t" style="left:1747px;top:332px;font-size:11px;letter-spacing:-0.2px">Spline</div><svg class="a" style="left:1726px;top:351px" width="16" height="16" viewBox="0 0 16 16"><path d="M3 0.5V5.5M0.5 3H5.5M1.2 1.2L4.8 4.8M4.8 1.2L1.2 4.8" stroke="#f0d020" stroke-width="1"/><rect x="3" y="5" width="11" height="8" fill="#2a7ad8" stroke="#111"/><rect x="1.8" y="11.8" width="2.4" height="2.4" fill="#d01010"/><rect x="12.8" y="3.8" width="2.4" height="2.4" fill="#d01010"/></svg><div class="t" style="left:1747px;top:354px;font-size:11px;letter-spacing:-0.2px">Planar Surface via Rectangle</div><svg class="a" style="left:1726px;top:370px" width="16" height="16" viewBox="0 0 16 16"><path d="M3 0.5V5.5M0.5 3H5.5M1.2 1.2L4.8 4.8M4.8 1.2L1.2 4.8" stroke="#f0d020" stroke-width="1"/><path d="M2 8L6 3L13 5L14 11L8 15L3 12Z" fill="#2a7ad8"/><rect x="0.8" y="6.8" width="2.4" height="2.4" fill="#d01010"/><rect x="4.8" y="1.8" width="2.4" height="2.4" fill="#d01010"/><rect x="11.8" y="3.8" width="2.4" height="2.4" fill="#d01010"/><rect x="12.8" y="9.8" width="2.4" height="2.4" fill="#d01010"/><rect x="6.8" y="13.8" width="2.4" height="2.4" fill="#d01010"/><rect x="1.8" y="10.8" width="2.4" height="2.4" fill="#d01010"/></svg><div class="t" style="left:1747px;top:373px;font-size:11px;letter-spacing:-0.2px">Planar Surface via Boundaries</div><svg class="a" style="left:1726px;top:389px" width="16" height="16" viewBox="0 0 16 16"><path d="M3 0.5V5.5M0.5 3H5.5M1.2 1.2L4.8 4.8M4.8 1.2L1.2 4.8" stroke="#f0d020" stroke-width="1"/><rect x="2" y="3" width="13" height="12" fill="#4a9ae8"/><path d="M2 7H15M2 11H15M6 3V15M10.5 3V15" stroke="#cfe4fa"/></svg><div class="t" style="left:1747px;top:392px;font-size:11px;letter-spacing:-0.2px">Planar Surfaces - Generate</div><svg class="a" style="left:1726px;top:408px" width="16" height="16" viewBox="0 0 16 16"><path d="M3 0.5V5.5M0.5 3H5.5M1.2 1.2L4.8 4.8M4.8 1.2L1.2 4.8" stroke="#f0d020" stroke-width="1"/><rect x="2" y="3" width="13" height="12" fill="#2a8ae0"/><rect x="5" y="6" width="7" height="6" fill="#fff" stroke="#111"/><rect x="3.8" y="4.8" width="2.4" height="2.4" fill="#d01010"/><rect x="10.8" y="10.8" width="2.4" height="2.4" fill="#d01010"/></svg><div class="t" style="left:1747px;top:411px;font-size:11px;letter-spacing:-0.2px">Opening via Boundaries</div><svg class="a" style="left:1726px;top:430px" width="16" height="16" viewBox="0 0 16 16"><path d="M3 0.5V5.5M0.5 3H5.5M1.2 1.2L4.8 4.8M4.8 1.2L1.2 4.8" stroke="#f0d020" stroke-width="1"/><path d="M1 14L5 10H15L11 14Z" fill="#2a8ae0" stroke="#111" stroke-width=".7"/><path d="M8 12V3" stroke="#111" stroke-width="1.2"/><rect x="6.8" y="1.8" width="2.4" height="2.4" fill="#d01010"/></svg><div class="t" style="left:1747px;top:433px;font-size:11px;letter-spacing:-0.2px">Thickness Vector</div><svg class="a" style="left:1726px;top:449px" width="16" height="16" viewBox="0 0 16 16"><path d="M3 0.5V5.5M0.5 3H5.5M1.2 1.2L4.8 4.8M4.8 1.2L1.2 4.8" stroke="#f0d020" stroke-width="1"/><path d="M1.5 6L5 2.5H15V11L11.5 14.5H1.5Z" fill="#4aa8e8" stroke="#111" stroke-width="1.1"/><path d="M1.5 6H11.5V14.5M11.5 6L15 2.5" fill="none" stroke="#111" stroke-width="1.1"/></svg><div class="t" style="left:1747px;top:452px;font-size:11px;letter-spacing:-0.2px">3D-Layered Domain - Block</div><svg class="a" style="left:1726px;top:468px" width="16" height="16" viewBox="0 0 16 16"><path d="M3 0.5V5.5M0.5 3H5.5M1.2 1.2L4.8 4.8M4.8 1.2L1.2 4.8" stroke="#f0d020" stroke-width="1"/><path d="M1.5 9L5 5.5H15V11L11.5 14.5H1.5Z" fill="#6ab8f0" stroke="#111" stroke-width="1.1"/><path d="M1.5 9H11.5V14.5M11.5 9L15 5.5M5 5.5V2M15 5.5V2" fill="none" stroke="#111" stroke-width="1.1"/></svg><div class="t" style="left:1747px;top:471px;font-size:11px;letter-spacing:-0.2px">3D-Layered Domain - Extrude</div><svg class="a" style="left:1726px;top:490px" width="16" height="16" viewBox="0 0 16 16"><path d="M3 0.5V5.5M0.5 3H5.5M1.2 1.2L4.8 4.8M4.8 1.2L1.2 4.8" stroke="#f0d020" stroke-width="1"/><path d="M1 10V15M15 10V15M1 12.5H15" stroke="#111"/><path d="M1 12.5L4 11V14ZM15 12.5L12 11V14Z" fill="#111"/><path d="M6 6L9 9M9 6L6 9" stroke="#111" stroke-width=".7"/></svg><div class="t" style="left:1747px;top:493px;font-size:11px;letter-spacing:-0.2px">Dimension</div><svg class="a" style="left:1726px;top:509px" width="16" height="16" viewBox="0 0 16 16"><path d="M3 0.5V5.5M0.5 3H5.5M1.2 1.2L4.8 4.8M4.8 1.2L1.2 4.8" stroke="#f0d020" stroke-width="1"/><path d="M8 4H14M11 4V9M2 15L8 10" stroke="#111" stroke-width="1.1"/><path d="M2 15L3 12L5 14Z" fill="#111"/></svg><div class="t" style="left:1747px;top:512px;font-size:11px;letter-spacing:-0.2px">Comment</div><div class="a" style="left:1723px;top:348px;width:194px;height:1px;background:#c8d0de"></div><div class="a" style="left:1723px;top:427px;width:194px;height:1px;background:#c8d0de"></div><div class="a" style="left:1723px;top:487px;width:194px;height:1px;background:#c8d0de"></div><div class="a" style="left:1721px;top:466px;width:176px;height:22px;border:2px solid #0a0ae0"></div><div class="sec" style="top:530px;height:255px"></div><div class="a" style="left:1723px;top:531px;width:194px;height:17px;background:linear-gradient(#eef0f6,#dde2ec);border-bottom:1px solid #c8d0de"></div><div class="t" style="left:1726px;top:534px;font-size:11px;letter-spacing:-0.1px;color:#5d6b7c">Edit Selected Objects</div><div class="a" style="left:1904px;top:537px;width:0;height:0;border-left:5px solid transparent;border-right:5px solid transparent;border-top:5px solid #7d8694"></div><svg class="a" style="left:1726px;top:550px" width="16" height="16" viewBox="0 0 16 16"><rect x="5" y="5" width="6" height="6" fill="#f0c040" stroke="#c01010"/><path d="M8 1V4M8 12V15M1 8H4M12 8H15" stroke="#2a4ab0" stroke-width="1.2"/><path d="M1 1H4M1 1V4M15 1H12M15 1V4M1 15H4M1 15V12M15 15H12M15 15V12" stroke="#1a8a6a" stroke-width="1.1"/></svg><div class="t" style="left:1747px;top:553px;font-size:11px;letter-spacing:-0.2px">Graphical Manipulator</div><svg class="a" style="left:1726px;top:572px" width="16" height="16" viewBox="0 0 16 16"><rect x="1.5" y="1.5" width="4" height="4" fill="#f0c040" stroke="#1a2a80"/><rect x="10.5" y="10.5" width="4" height="4" fill="#f0c040" stroke="#1a2a80"/><path d="M5 5L11 11" stroke="#1a2a80"/></svg><div class="t" style="left:1747px;top:575px;font-size:11px;letter-spacing:-0.2px">Translate...</div><svg class="a" style="left:1726px;top:591px" width="16" height="16" viewBox="0 0 16 16"><rect x="1.5" y="1.5" width="4" height="4" fill="#f0c040" stroke="#1a2a80"/><rect x="10.5" y="10.5" width="4" height="4" fill="#f0c040" stroke="#1a2a80"/><path d="M3.5 5.5V13.5H10.5M6 3Q12 3 12 10" fill="none" stroke="#1a2a80"/></svg><div class="t" style="left:1747px;top:594px;font-size:11px;letter-spacing:-0.2px">Rotate...</div><svg class="a" style="left:1726px;top:610px" width="16" height="16" viewBox="0 0 16 16"><path d="M7 2V15L1 15Z" fill="#f0c040" stroke="#1a2a80"/><path d="M9 2V15L15 15Z" fill="#f0c040" stroke="#1a2a80"/><path d="M8 1V16" stroke="#1a2a80" stroke-width=".6"/></svg><div class="t" style="left:1747px;top:613px;font-size:11px;letter-spacing:-0.2px">Mirror...</div><svg class="a" style="left:1726px;top:629px" width="16" height="16" viewBox="0 0 16 16"><rect x="5.5" y="5.5" width="5" height="5" fill="#f0c040" stroke="#1a2a80"/><path d="M8 1V15M1 8H15" stroke="#1a2a80" stroke-width=".8"/><path d="M8 0L6 3H10ZM8 16L6 13H10ZM0 8L3 6V10ZM16 8L13 6V10Z" fill="#1a2a80"/></svg><div class="t" style="left:1747px;top:632px;font-size:11px;letter-spacing:-0.2px">Stretch...</div><svg class="a" style="left:1726px;top:648px" width="16" height="16" viewBox="0 0 16 16"><path d="M2 7L14 2V14H2Z" fill="#f0c040" stroke="#1a2a80" stroke-width="1.1"/></svg><div class="t" style="left:1747px;top:651px;font-size:11px;letter-spacing:-0.2px">Slope...</div><svg class="a" style="left:1726px;top:670px" width="16" height="16" viewBox="0 0 16 16"><path d="M2 2L14 14M14 2L2 14" stroke="#111"/><rect x="5" y="5" width="6" height="6" fill="#e01010"/><rect x="0.8" y="0.8" width="2.4" height="2.4" fill="#d01010"/><rect x="12.8" y="0.8" width="2.4" height="2.4" fill="#d01010"/><rect x="0.8" y="12.8" width="2.4" height="2.4" fill="#d01010"/><rect x="12.8" y="12.8" width="2.4" height="2.4" fill="#d01010"/></svg><div class="t" style="left:1747px;top:673px;font-size:11px;letter-spacing:-0.2px">Intersect Lines</div><svg class="a" style="left:1726px;top:689px" width="16" height="16" viewBox="0 0 16 16"><path d="M3 0.5V5.5M0.5 3H5.5M1.2 1.2L4.8 4.8M4.8 1.2L1.2 4.8" stroke="#f0d020" stroke-width="1"/><path d="M1 13H15" stroke="#111"/><path d="M5 6Q9 2 13 6L9 9Z" fill="#7a9ad8" stroke="#333" stroke-width=".6"/><rect x="6.8" y="12.8" width="2.4" height="2.4" fill="#d01010"/></svg><div class="t" style="left:1747px;top:692px;font-size:11px;letter-spacing:-0.2px">Insert Points on Line</div><svg class="a" style="left:1726px;top:708px" width="16" height="16" viewBox="0 0 16 16"><path d="M3 0.5V5.5M0.5 3H5.5M1.2 1.2L4.8 4.8M4.8 1.2L1.2 4.8" stroke="#f0d020" stroke-width="1"/><path d="M1 13H15" stroke="#111"/><path d="M5 6Q9 2 13 6L9 9Z" fill="#7a9ad8" stroke="#333" stroke-width=".6"/><rect x="3.8" y="12.8" width="2.4" height="2.4" fill="#d01010"/><rect x="8.8" y="12.8" width="2.4" height="2.4" fill="#d01010"/></svg><div class="t" style="left:1747px;top:711px;font-size:11px;letter-spacing:-0.2px">Split Line</div><svg class="a" style="left:1726px;top:727px" width="16" height="16" viewBox="0 0 16 16"><path d="M2 14L8 8" stroke="#d01010" stroke-width="1.2"/><path d="M8 8L13 3" stroke="#1a2a80" stroke-width="1" stroke-dasharray="2 1"/><path d="M15 1L10 2L14 6Z" fill="#1a2a80"/><rect x="0.8" y="12.8" width="2.4" height="2.4" fill="#d01010"/><rect x="6.8" y="6.8" width="2.4" height="2.4" fill="#d01010"/></svg><div class="t" style="left:1747px;top:730px;font-size:11px;letter-spacing:-0.2px">Extend Lines</div><svg class="a" style="left:1726px;top:746px" width="16" height="16" viewBox="0 0 16 16"><path d="M1 14L5 10H15L11 14Z" fill="#2a8ae0" stroke="#111" stroke-width=".7"/><path d="M8 12V4" stroke="#111" stroke-width="1.2"/><path d="M8 0L5 4H11Z" fill="#1a2a80"/><rect x="6.8" y="6.8" width="2.4" height="2.4" fill="#d01010"/></svg><div class="t" style="left:1747px;top:749px;font-size:11px;letter-spacing:-0.2px">Extend Thickness Vectors</div><svg class="a" style="left:1726px;top:765px" width="16" height="16" viewBox="0 0 16 16"><rect x="1" y="4" width="14" height="8" fill="#f0c020" stroke="#333" stroke-width=".6"/><path d="M3 12V9M5 12V10M7 12V8M9 12V10M11 12V9M13 12V10" stroke="#111"/></svg><div class="t" style="left:1747px;top:768px;font-size:11px;letter-spacing:-0.2px">Measure Distance</div><div class="a" style="left:1723px;top:569px;width:194px;height:1px;background:#c8d0de"></div><div class="a" style="left:1723px;top:667px;width:194px;height:1px;background:#c8d0de"></div>
<div class="a" style="left:0px;top:994px;width:251px;height:1px;background:#707070"></div><div class="a" style="left:55px;top:995px;width:52px;height:21px;background:#f0f0f0;border-left:1px solid #707070;border-right:2px solid #707070;border-bottom:2px solid #707070;border-radius:0 0 2px 2px"></div><div class="a" style="left:107px;top:995px;width:73px;height:21px;background:#f0f0f0;border-left:1px solid #707070;border-right:2px solid #707070;border-bottom:2px solid #707070;border-radius:0 0 2px 2px"></div><div class="a" style="left:1px;top:994px;width:55px;height:24px;background:#f0f0f0;border-left:1px solid #fafafa;border-right:2px solid #707070;border-bottom:2px solid #707070;border-bottom-right-radius:2px"></div><svg class="a" style="left:6px;top:998px" width="16" height="16" viewBox="0 0 16 16"><rect x="1" y="1" width="6" height="3" fill="#f0b830"/><rect x="6" y="6" width="6" height="3" fill="#f0b830"/><rect x="6" y="11" width="6" height="3" fill="#f0b830"/><path d="M2.5 4V13H5.5M2.5 8H5.5" fill="none" stroke="#3a4ab0" stroke-width=".9"/></svg><div class="t" style="left:24px;top:999px;font-size:11.7px">Data</div><svg class="a" style="left:59px;top:998px" width="16" height="16" viewBox="0 0 16 16"><path d="M1 8Q8 1 15 7" fill="none" stroke="#111" stroke-width="1.6"/><path d="M2 8Q8 13 14 8Q8 4 2 8Z" fill="#fff" stroke="#444" stroke-width=".6"/><circle cx="8" cy="8.5" r="2.6" fill="#3a7ae0"/><circle cx="8" cy="8.5" r="1" fill="#000"/></svg><div class="t" style="left:78px;top:999px;font-size:11.7px">View</div><svg class="a" style="left:111px;top:998px" width="16" height="16" viewBox="0 0 16 16"><path d="M1 13L5 10H15L11 13Z M1 10L5 7H15L11 10Z M1 7L5 4H15L11 7Z" fill="#5ab0f0" stroke="#1a5ad0" stroke-width=".9"/></svg><div class="t" style="left:130px;top:999px;font-size:11.7px">Sections</div><div class="a" style="left:256px;top:994px;width:1460px;height:1px;background:#707070"></div><div class="a" style="left:256px;top:994px;width:82px;height:24px;background:#f0f0f0;border-left:1px solid #fafafa;border-right:2px solid #707070;border-bottom:2px solid #707070;border-bottom-right-radius:2px"></div><svg class="a" style="left:259px;top:997px" width="17" height="17" viewBox="0 0 16 16"><path d="M2 15L15 2V15Z" fill="#3cae3c" stroke="#2a8a2a" stroke-width=".7"/><path d="M9 12.5L12.5 9V12.5Z" fill="#fff"/><path d="M1.5 11L9 3.5L10.5 5L3 12.5L1 13Z" fill="#4a9ae8" stroke="#2a5aa0" stroke-width=".5"/><path d="M9 3.5L10 2.5L11.5 4L10.5 5Z" fill="#f0a020"/></svg><div class="t" style="left:278px;top:999px;font-size:11.7px">Geometry</div><div class="a" style="left:1720px;top:994px;width:200px;height:1px;background:#707070"></div><div class="a" style="left:1791px;top:995px;width:65px;height:21px;background:#f0f0f0;border-left:1px solid #707070;border-right:2px solid #707070;border-bottom:2px solid #707070;border-radius:0 0 2px 2px"></div><div class="a" style="left:1722px;top:994px;width:70px;height:24px;background:#f0f0f0;border-left:1px solid #fafafa;border-right:2px solid #707070;border-bottom:2px solid #707070;border-bottom-right-radius:2px"></div><svg class="a" style="left:1725px;top:998px" width="16" height="16" viewBox="0 0 16 16"><path d="M2 14L11 5" stroke="#c8902a" stroke-width="2.2"/><path d="M9 2L14 7L12 9L7 4Z" fill="#888" stroke="#333" stroke-width=".6"/><path d="M3 3L13 13" stroke="#555" stroke-width="2"/><circle cx="3" cy="3" r="2" fill="none" stroke="#555" stroke-width="1.2"/></svg><div class="t" style="left:1744px;top:999px;font-size:11.7px">Edit Bar</div><svg class="a" style="left:1794px;top:998px" width="16" height="16" viewBox="0 0 16 16"><path d="M1.5 5L5 1.5H12V11L8.5 14.5H1.5Z" fill="#1a6ad8" stroke="#000"/><path d="M5 5H8.5V14.5H5Z" fill="#e01010"/><path d="M8.5 5L12 1.5H15V11L8.5 14.5" fill="none" stroke="#888" stroke-width=".8"/></svg><div class="t" style="left:1813px;top:999px;font-size:11.7px">Clipper</div>
<div class="a" style="left:0;top:1017px;width:1920px;height:1px;background:#dadada"></div>
<div class="t" style="left:3px;top:1024px;font-size:11.5px">Surface No. 1</div>
<div class="a" style="left:1534px;top:1019px;width:1px;height:21px;background:#d4d4d4"></div>
<div class="a" style="left:1544px;top:1019px;width:1px;height:21px;background:#d4d4d4"></div>
<div class="a" style="left:1636px;top:1019px;width:1px;height:21px;background:#d4d4d4"></div>
<div class="a" style="left:1695px;top:1019px;width:1px;height:21px;background:#d4d4d4"></div>
<div class="a" style="left:1780px;top:1019px;width:1px;height:21px;background:#d4d4d4"></div>
<div class="a" style="left:1853px;top:1019px;width:1px;height:21px;background:#d4d4d4"></div>
</body></html>
